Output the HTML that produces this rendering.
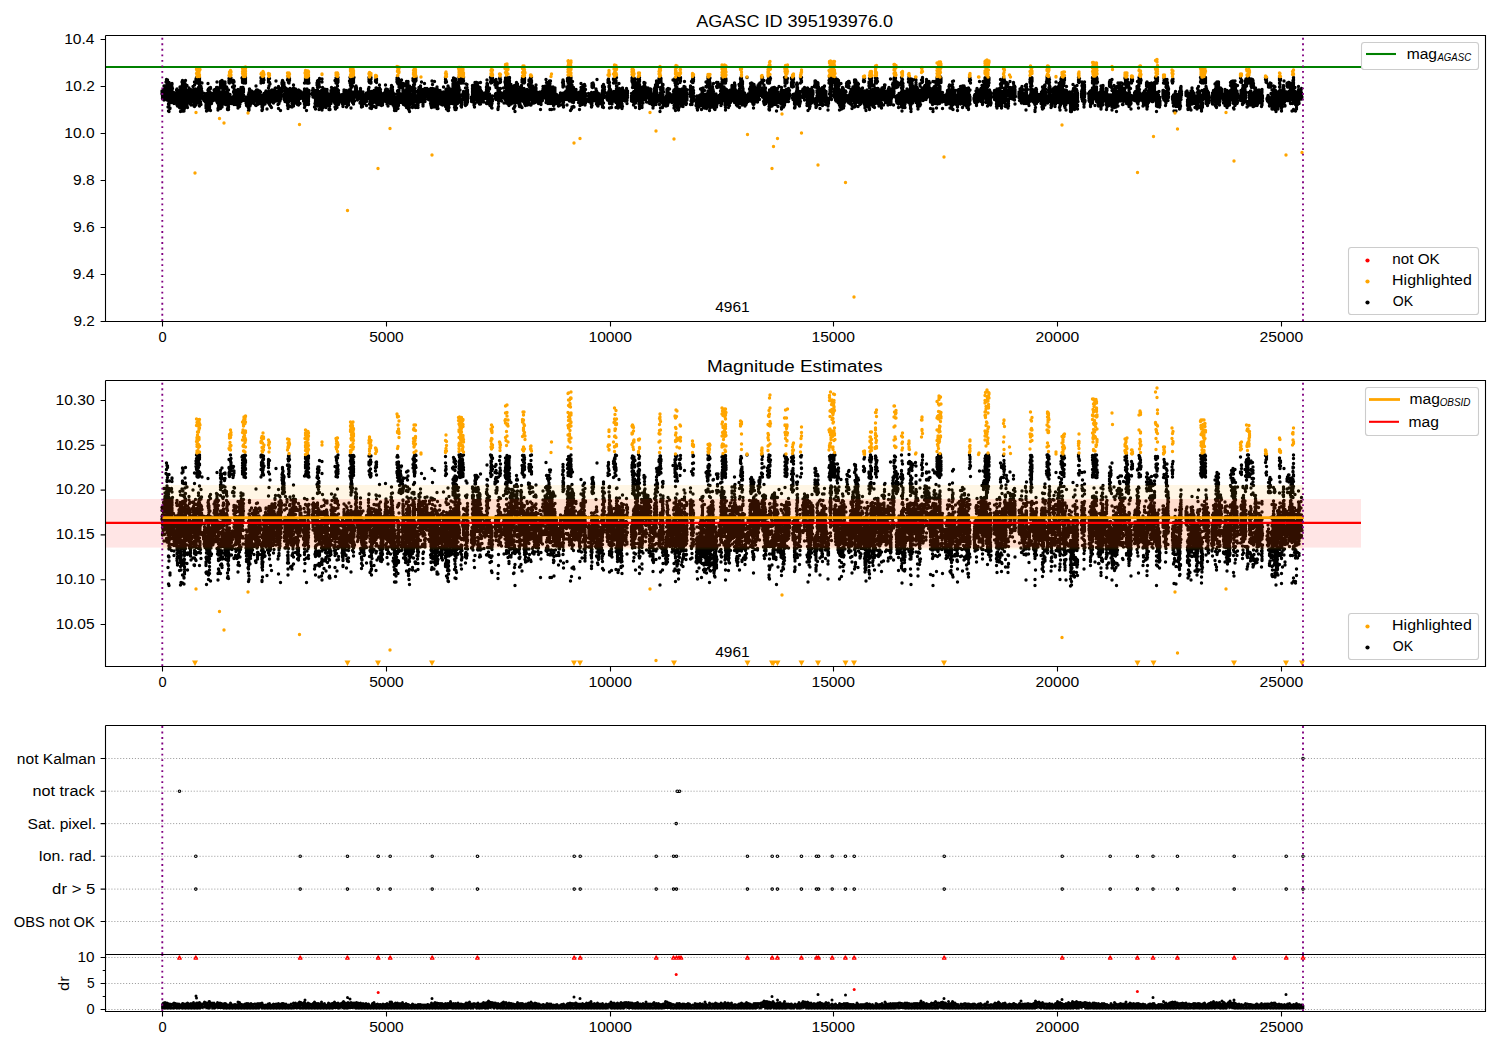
<!DOCTYPE html>
<html><head><meta charset="utf-8"><style>
html,body{margin:0;padding:0;background:#fff;}
svg{display:block;}
text{font-family:"Liberation Sans",sans-serif;fill:#000;}
</style></head><body>
<svg width="1500" height="1050" viewBox="0 0 1500 1050">
<rect width="1500" height="1050" fill="#fff"/>
<defs>
<clipPath id="c1"><rect x="105.5" y="35.5" width="1380.0" height="286.0"/></clipPath>
<clipPath id="c2"><rect x="105.5" y="380.5" width="1380.0" height="286.0"/></clipPath>
<clipPath id="c4"><rect x="105.5" y="954.5" width="1380.0" height="57.0"/></clipPath>
</defs>
<path d="M162 91h0m0 1h0m0 1.5h0m0 .5h0m.5 1.5h0m0 1h0m0 1.5h0m0 .5h0m.5-4.5h0m.5-4.5h0m0 2.5h0m.5-6h0m0 5h0m0 9h0m.5-14h0m0 3h0m0 9h0m.5-10h0m0 6h0m0 1.5h0m1-13.5h0m.5-2.5h0m0 1.5h0m0 9.5h0m0 1.5h0m0 4h0m0 3h0m.5-15h0m0 .5h0m0 1h0m0 1.5h0m0 1h0m0 5.5h0m0 4h0m0 2.5h0m.5-20h0m0 .5h0m0 10h0m.5 16.5h0m.5-11.5h0m0 8.5h0m0 7h0m.5-28.5h0m0 3.5h0m0 2.5h0m0 2h0m0 2h0m0 5h0m0 1h0m0 2.5h0m0 1h0m0 2h0m0 1h0m0 6.5h0m.5-27.5h0m0 2.5h0m0 14h0m.5-5h0m0 12.5h0m0 .5h0m.5-14.5h0m.5-5h0m.5-3h0m0 5.5h0m0 6h0m0 1.5h0m0 3.5h0m.5-19h0m0 1h0m0 2.5h0m0 3h0m0 .5h0m0 3h0m0 7.5h0m.5-12.5h0m0 7h0m1-3h0m0 6h0m.5-1h0m0 2.5h0m0 2.5h0m0 1h0m.5-9.5h0m0 1h0m.5 2.5h0m.5-4.5h0m0 7.5h0m1-10.5h0m.5-1h0m0 1.5h0m0 5.5h0m0 2.5h0m0 3.5h0m0 1h0m0 1.5h0m0 .5h0m.5-10.5h0m0 7h0m0 3h0m0 1.5h0m.5-13h0m0 4h0m0 3h0m1-8.5h0m0 2h0m.5-3h0m0 8.5h0m0 4h0m0 4.5h0m.5-20.5h0m0 3.5h0m0 .5h0m0 4.5h0m0 10h0m.5-17.5h0m0 5h0m0 3.5h0m0 4.5h0m0 10.5h0m.5-11h0m0 3h0m0 4h0m0 3h0m.5-8.5h0m0 3h0m.5-23h0m0 4h0m0 6.5h0m0 2h0m0 2.5h0m0 1.5h0m.5-18h0m0 3.5h0m0 .5h0m0 3.5h0m0 1.5h0m0 .5h0m0 19h0m0 2h0m.5-29.5h0m0 5h0m.5-1.5h0m0 13h0m0 4h0m0 4.5h0m.5-14.5h0m0 1h0m0 2.5h0m0 4.5h0m0 1h0m0 2.5h0m0 1h0m0 5h0m0 1.5h0m.5-22.5h0m0 15h0m0 1h0m0 2h0m0 1h0m0 1h0m.5-25h0m0 4h0m0 2.5h0m0 5.5h0m0 2.5h0m.5-17.5h0m0 4.5h0m0 2.5h0m0 1.5h0m0 4.5h0m0 6h0m0 2.5h0m.5-10.5h0m1-6h0m0 9.5h0m0 1.5h0m0 4.5h0m0 4.5h0m.5-15h0m0 1.5h0m0 6.5h0m0 1h0m0 3.5h0m0 .5h0m0 4h0m1.5-19.5h0m0 1h0m0 4.5h0m0 4.5h0m.5-2.5h0m0 4h0m0 2h0m.5-10h0m0 9.5h0m.5-11.5h0m0 3.5h0m0 9h0m0 1h0m0 1h0m.5 1h0m.5-10h0m0 2h0m0 2h0m1-7.5h0m.5-5h0m0 3h0m0 5h0m0 6h0m0 1h0m0 3h0m.5-15h0m0 3.5h0m0 2.5h0m0 2h0m.5 8.5h0m.5-24h0m0 3h0m0 7h0m0 2h0m0 4h0m0 2h0m0 2.5h0m0 4h0m.5-3h0m.5-14.5h0m0 6.5h0m.5-16.5h0m0 .5h0m0 1h0m0 9.5h0m0 4.5h0m0 4.5h0m0 1.5h0m0 1h0m0 2h0m0 1.5h0m.5-27.5h0m0 13h0m0 2h0m0 4.5h0m.5-19.5h0m0 4.5h0m0 1h0m.5 0h0m.5-5.5h0m0 17.5h0m.5-15h0m0 3h0m0 4.5h0m0 .5h0m0 2.5h0m0 3h0m0 4.5h0m0 2h0m0 2h0m0 1h0m.5-26h0m0 12h0m0 2h0m0 1h0m.5-14.5h0m0 1h0m0 1h0m0 .5h0m0 2.5h0m0 3h0m0 17.5h0m0 3h0m.5-24h0m0 6.5h0m0 5h0m0 3h0m0 3.5h0m0 .5h0m.5 1.5h0m0 1h0m.5-16.5h0m0 18h0m.5-16h0m0 2h0m0 2h0m0 1.5h0m0 1h0m0 .5h0m0 2h0m0 .5h0m.5-15h0m0 8.5h0m0 1.5h0m1.5 6.5h0m.5-2h0m0 3h0m.5-7h0m0 2h0m0 .5h0m.5 2.5h0m0 3h0m1-7.5h0m0 .5h0m0 5.5h0m0 4h0m0 1.5h0m0 1h0m0 1.5h0m.5-10.5h0m0 11h0m0 2.5h0m.5-17.5h0m0 6h0m0 2.5h0m1-18.5h0m0 6.5h0m0 .5h0m0 5.5h0m0 5h0m0 4h0m0 3h0m.5-19h0m0 8.5h0m0 2h0m0 4h0m0 6.5h0m.5-19.5h0m0 2h0m0 2h0m0 1h0m.5-7.5h0m0 17.5h0m0 1h0m0 1h0m0 1h0m.5-16.5h0m.5-4.5h0m0 1h0m0 10.5h0m0 3h0m0 8.5h0m.5-14h0m0 4h0m0 3h0m.5-10h0m0 10h0m.5-8.5h0m.5 3.5h0m0 2.5h0m.5-5h0m1-6h0m0 2.5h0m0 2h0m.5-3h0m0 8.5h0m.5-10.5h0m0 4.5h0m0 2.5h0m0 1h0m0 2.5h0m1.5-12.5h0m0 5h0m0 3h0m0 4.5h0m.5-18h0m0 8.5h0m0 6h0m0 2h0m0 3.5h0m.5-14.5h0m0 7.5h0m0 8h0m.5-10h0m0 15.5h0m0 1.5h0m.5-21h0m0 1.5h0m0 5h0m0 3h0m0 3h0m0 3.5h0m0 2h0m.5-10.5h0m0 11.5h0m1-8.5h0m0 4h0m.5-22h0m0 1h0m0 1h0m0 1.5h0m0 .5h0m0 1h0m0 1.5h0m0 4h0m0 2h0m0 2h0m0 2h0m0 8h0m0 2.5h0m.5-7.5h0m.5-3h0m.5-17.5h0m0 25.5h0m0 1h0m.5-23.5h0m0 5h0m0 3.5h0m0 8h0m0 1h0m0 2h0m0 1.5h0m.5-17.5h0m0 3.5h0m0 2.5h0m0 2h0m.5-9.5h0m0 3h0m0 1.5h0m0 .5h0m0 1h0m0 .5h0m0 4h0m0 1h0m.5-15h0m0 16h0m.5 1h0m0 1.5h0m.5-18.5h0m0 1.5h0m0 2h0m0 1h0m0 7.5h0m0 8h0m0 1.5h0m.5 1h0m.5-2h0m0 2h0m.5-17.5h0m0 1h0m0 1h0m0 2.5h0m0 1h0m0 3.5h0m0 1h0m0 1.5h0m0 3h0m.5-13.5h0m0 2h0m0 9.5h0m.5-7.5h0m0 16.5h0m0 1h0m.5-15h0m0 2.5h0m0 9h0m.5-16h0m0 4h0m0 7.5h0m0 2h0m0 1.5h0m0 1.5h0m0 1h0m0 2h0m.5-31h0m0 2h0m0 .5h0m0 1h0m0 .5h0m0 17h0m0 4.5h0m.5-21h0m0 12.5h0m0 1h0m0 5.5h0m.5-7.5h0m0 6.5h0m.5-24h0m0 5h0m.5-4h0m0 1.5h0m0 1.5h0m0 17.5h0m.5 3h0m0 2h0m1-16.5h0m0 10h0m0 2h0m0 2h0m0 1h0m.5-21.5h0m0 2.5h0m.5-2.5h0m0 1h0m0 10.5h0m.5-10.5h0m0 .5h0m0 4h0m0 1h0m0 1h0m0 2.5h0m0 2.5h0m0 2.5h0m0 3h0m0 6h0m.5-18.5h0m0 8h0m0 3.5h0m0 3.5h0m1-6h0m0 3.5h0m0 5h0m.5-13h0m0 2h0m0 5.5h0m0 2.5h0m0 2h0m0 2h0m.5-10.5h0m0 1.5h0m1-3.5h0m.5-2.5h0m0 7.5h0m0 2.5h0m0 2.5h0m0 4h0m0 2h0m.5-13.5h0m0 3.5h0m0 5.5h0m1-13.5h0m0 3h0m0 8h0m0 5.5h0m.5-15h0m0 4h0m0 8.5h0m.5-6.5h0m0 1h0m0 .5h0m.5-11.5h0m0 .5h0m0 1.5h0m0 2.5h0m0 2h0m0 7.5h0m1-23.5h0m0 18h0m.5-18.5h0m0 2h0m0 1h0m0 1h0m0 1h0m0 5h0m.5 0h0m0 3.5h0m0 2h0m0 1h0m0 3h0m0 2h0m0 1.5h0m.5-23h0m0 11.5h0m0 1h0m0 2h0m0 3h0m.5-17.5h0m0 5.5h0m1-5.5h0m0 1.5h0m0 2h0m.5-3.5h0m0 1.5h0m0 2h0m0 1h0m0 1h0m0 17.5h0m.5-3.5h0m0 1.5h0m0 1h0m0 2h0m0 1.5h0m.5-2h0m0 3.5h0m0 1h0m.5-8h0m1 9.5h0m.5-12.5h0m0 5h0m0 2.5h0m0 3h0m0 3h0m0 2.5h0m.5-18h0m0 3.5h0m0 7.5h0m0 5.5h0m0 1h0m.5-21h0m0 1h0m.5 2h0m0 1.5h0m0 4h0m0 3.5h0m0 5h0m.5-1.5h0m1-13.5h0m0 4h0m0 1h0m0 3.5h0m0 1h0m0 2.5h0m.5-10.5h0m0 6.5h0m0 3h0m1.5-8h0m0 3h0m0 2h0m.5-7h0m0 9.5h0m0 2h0m.5-6h0m1-6h0m0 4h0m0 5h0m0 .5h0m0 4h0m.5-19h0m0 7h0m0 6h0m0 2h0m0 4.5h0m.5-15.5h0m0 8h0m.5 1.5h0m0 1h0m.5-10.5h0m0 5h0m0 1.5h0m0 5h0m0 1.5h0m0 .5h0m0 1h0m.5-12h0m0 10.5h0m1-5h0m.5-7h0m0 4.5h0m0 3.5h0m0 4.5h0m.5-10h0m0 1h0m0 6h0m.5-8.5h0m.5-14.5h0m0 .5h0m0 3h0m0 2h0m.5-5.5h0m0 2h0m0 17.5h0m0 5.5h0m.5-20h0m0 13h0m0 2.5h0m0 6.5h0m0 1h0m0 .5h0m0 1h0m0 3h0m0 .5h0m.5-33h0m0 4h0m0 17.5h0m0 1h0m0 2.5h0m0 4h0m0 1h0m0 2h0m.5-4h0m.5-28h0m0 1h0m0 4h0m0 16h0m.5-18.5h0m0 13.5h0m0 .5h0m0 7h0m0 2h0m.5-6.5h0m0 .5h0m.5 2.5h0m0 4.5h0m.5-11.5h0m0 3h0m.5-4.5h0m0 .5h0m0 10h0m.5-8.5h0m0 1.5h0m.5 3h0m0 1h0m0 10.5h0m.5-7h0m.5-8.5h0m0 3h0m0 3.5h0m.5-21.5h0m0 1h0m0 1h0m0 1.5h0m0 6h0m0 15h0m.5-17h0m0 5h0m0 1h0m0 4h0m0 1.5h0m.5-19h0m0 4h0m0 8.5h0m0 10.5h0m0 2h0m0 1h0m.5-20.5h0m.5 7h0m0 3h0m0 5.5h0m0 2.5h0m0 4h0m.5-9h0m0 2h0m0 1.5h0m.5 7h0m.5-17.5h0m0 2h0m0 3h0m1 2h0m0 2h0m0 2h0m.5-10.5h0m0 2h0m0 1h0m0 3.5h0m0 6h0m.5-3h0m0 2h0m1-13.5h0m0 .5h0m0 1h0m0 5h0m.5-7h0m0 3h0m0 2h0m0 5.5h0m.5-17.5h0m0 15.5h0m0 3h0m0 1.5h0m.5-7h0m0 4h0m.5-2h0m1-3.5h0m0 12h0m.5-18h0m0 1.5h0m0 2.5h0m0 10h0m0 8h0m.5-19h0m0 3h0m0 2.5h0m0 2h0m0 2h0m0 2.5h0m0 1h0m0 1h0m.5-15.5h0m0 8h0m.5 5h0m.5-12h0m0 1.5h0m0 20h0m.5-16.5h0m0 4h0m0 1h0m.5-9h0m0 .5h0m0 1.5h0m0 2.5h0m0 2h0m.5-14h0m0 .5h0m0 1h0m.5-3.5h0m0 .5h0m0 4h0m0 1h0m0 1.5h0m.5-6h0m.5 6h0m.5-4.5h0m0 1.5h0m0 1h0m0 2h0m0 8h0m.5-8.5h0m0 3.5h0m0 1h0m0 2.5h0m0 3.5h0m0 1h0m0 .5h0m0 1h0m.5-6.5h0m0 8h0m.5-13.5h0m0 8.5h0m.5-2.5h0m0 7.5h0m.5-10h0m0 7.5h0m.5-10h0m0 .5h0m0 8.5h0m.5-18h0m0 15.5h0m0 4.5h0m0 3.5h0m0 2h0m.5-27h0m0 19.5h0m0 5.5h0m0 .5h0m0 3h0m0 1.5h0m.5-31h0m0 5h0m0 10.5h0m0 9h0m0 3.5h0m.5-28h0m0 4.5h0m0 1h0m.5-4.5h0m0 1.5h0m0 .5h0m0 10h0m0 8h0m.5-10h0m0 6.5h0m0 1.5h0m.5-3.5h0m0 4.5h0m0 3h0m0 6h0m.5-17.5h0m0 10.5h0m.5 1.5h0m.5-10h0m0 5h0m0 7.5h0m0 3h0m0 .5h0m.5-13h0m0 3.5h0m.5-7.5h0m0 12h0m.5-17h0m0 3h0m0 3.5h0m0 2.5h0m0 2h0m0 3h0m0 2h0m0 3h0m0 2h0m2-17h0m0 .5h0m0 3.5h0m0 4.5h0m0 5.5h0m.5-12h0m0 3.5h0m0 1h0m0 1.5h0m0 3h0m1 2h0m.5 2.5h0m.5-12.5h0m0 2.5h0m0 4h0m0 5h0m.5-13.5h0m0 6.5h0m0 .5h0m0 3h0m0 1.5h0m0 3.5h0m1.5-14h0m0 2h0m0 10.5h0m.5-12h0m0 3h0m0 .5h0m0 2h0m0 1.5h0m.5-6h0m2 1h0m0 2h0m0 .5h0m.5 1.5h0m0 1.5h0m0 .5h0m0 1.5h0m.5-9.5h0m0 2.5h0m.5-11h0m0 6h0m0 9h0m0 5h0m0 .5h0m0 1h0m0 3h0m.5-15h0m0 8.5h0m0 4.5h0m.5-27.5h0m0 1h0m0 1h0m0 .5h0m0 10h0m0 5.5h0m.5-18.5h0m0 5h0m.5-2.5h0m0 13.5h0m0 2.5h0m0 3h0m0 1.5h0m0 4h0m0 6h0m.5-33h0m0 5.5h0m0 6h0m0 13.5h0m.5-25h0m.5 5.5h0m0 8.5h0m0 3h0m.5-17h0m0 .5h0m0 1.5h0m0 1h0m0 .5h0m0 1h0m0 15.5h0m0 1h0m0 .5h0m0 2h0m0 .5h0m0 2h0m0 1h0m.5-21.5h0m0 7.5h0m0 1h0m0 .5h0m0 1h0m0 .5h0m0 1.5h0m0 1.5h0m3-2.5h0m.5-3.5h0m0 2.5h0m0 2h0m.5-6.5h0m0 3.5h0m0 1.5h0m0 2.5h0m0 1h0m.5-7h0m0 5h0m1 12h0m.5-16.5h0m0 6.5h0m0 1h0m0 5.5h0m0 3h0m.5-14h0m0 1.5h0m0 5h0m0 1h0m0 1h0m0 .5h0m0 2.5h0m0 5h0m.5-17h0m0 3h0m0 2.5h0m0 5.5h0m1-20h0m0 2h0m.5-4h0m0 1h0m0 5.5h0m0 2.5h0m0 4h0m0 7h0m0 2.5h0m0 2.5h0m.5-25.5h0m0 10.5h0m0 5.5h0m0 2.5h0m1-18.5h0m0 1h0m0 2.5h0m0 .5h0m0 1h0m0 6h0m0 6h0m0 6.5h0m0 5.5h0m.5-31h0m0 8.5h0m0 6h0m0 3h0m0 3h0m0 1h0m0 2.5h0m0 1h0m0 3h0m.5-12h0m0 11.5h0m1.5-15.5h0m0 2h0m0 5.5h0m0 3.5h0m0 4h0m0 3.5h0m.5-30h0m0 3h0m0 11h0m0 2h0m0 1.5h0m0 3h0m0 2h0m0 1h0m0 2h0m0 1h0m0 4.5h0m.5-22.5h0m0 20.5h0m1-12h0m0 6h0m.5-13h0m0 1.5h0m0 1.5h0m0 2h0m0 4.5h0m0 6.5h0m0 2h0m.5-6.5h0m1-11h0m0 6h0m0 1.5h0m0 3.5h0m0 2.5h0m0 2h0m.5-12.5h0m0 9h0m0 6h0m.5-13.5h0m.5-4.5h0m0 .5h0m0 2h0m0 6.5h0m.5-5h0m0 2.5h0m0 4h0m0 3h0m0 .5h0m0 2h0m1.5-8.5h0m0 3.5h0m0 9h0m.5-15h0m0 7h0m0 1h0m0 2.5h0m0 1.5h0m.5-8h0m0 11h0m.5-10h0m.5-9h0m0 1.5h0m0 1.5h0m0 9h0m0 1h0m.5-16h0m0 8h0m0 .5h0m0 1.5h0m.5-8.5h0m0 12h0m1-9.5h0m0 2h0m0 2.5h0m.5 3h0m.5-10.5h0m0 3h0m.5 10h0m0 1h0m.5-22h0m0 7.5h0m0 1.5h0m0 3.5h0m0 2h0m0 2h0m0 6.5h0m0 3.5h0m.5-7h0m0 1.5h0m0 7.5h0m.5-31h0m0 4h0m0 1h0m0 15.5h0m.5-20h0m0 4.5h0m0 6h0m0 2.5h0m0 2.5h0m0 9h0m.5-8h0m0 2h0m0 8h0m0 2.5h0m.5-24.5h0m0 3h0m0 3.5h0m.5-12h0m0 2.5h0m0 1h0m0 1h0m0 20h0m.5-11.5h0m0 2.5h0m0 2h0m0 4h0m0 1h0m0 1h0m0 3h0m0 .5h0m.5-7.5h0m1 4.5h0m.5-6.5h0m0 1h0m0 3h0m1.5 4h0m.5-8.5h0m0 3h0m0 2.5h0m0 1h0m0 3h0m.5-2.5h0m0 3.5h0m0 1h0m0 .5h0m1-16.5h0m0 1.5h0m0 1h0m0 3h0m0 8h0m.5-5h0m0 3h0m1-4.5h0m.5-6.5h0m0 3.5h0m0 9.5h0m.5-11h0m0 3h0m0 2h0m0 .5h0m0 2h0m0 7h0m.5-16h0m0 10h0m.5 0h0m0 4h0m.5-13h0m0 3.5h0m.5-2.5h0m0 9.5h0m0 2h0m0 .5h0m.5-15h0m0 5.5h0m0 1.5h0m0 2h0m0 2.5h0m.5-20.5h0m.5-3.5h0m0 5.5h0m.5-4h0m0 6.5h0m0 8.5h0m0 2h0m0 4h0m.5-22.5h0m0 5.5h0m0 4h0m0 1h0m0 3h0m0 1h0m0 6h0m0 10h0m.5-15h0m.5-15.5h0m0 3h0m0 4.5h0m0 2h0m0 13h0m.5-17.5h0m0 3.5h0m0 11.5h0m0 3.5h0m0 1.5h0m.5-25h0m0 17.5h0m.5-16h0m0 .5h0m0 1h0m0 .5h0m0 1h0m0 .5h0m0 10h0m0 10h0m0 1.5h0m.5-26.5h0m0 14.5h0m0 7h0m.5-4h0m0 1.5h0m0 1h0m0 3.5h0m1-14h0m0 1.5h0m0 1.5h0m0 4.5h0m.5-8.5h0m0 7h0m.5-5.5h0m0 1h0m0 .5h0m0 1h0m0 4h0m1 1.5h0m0 1h0m0 2h0m0 1.5h0m.5-8h0m.5 2.5h0m0 2.5h0m0 2h0m1-5.5h0m.5-2.5h0m0 5.5h0m0 6.5h0m.5-14.5h0m0 1.5h0m0 1h0m0 1h0m0 10h0m.5-7h0m0 3.5h0m.5-.5h0m0 2h0m0 4.5h0m0 1.5h0m0 1h0m.5-13h0m0 2.5h0m0 5.5h0m0 3h0m.5 1.5h0m.5-14.5h0m.5 2.5h0m0 5.5h0m.5-4.5h0m0 1.5h0m0 1.5h0m0 3h0m0 2h0m.5-3h0m0 3h0m1.5-9.5h0m0 5h0m0 2.5h0m.5-8.5h0m0 3.5h0m0 1.5h0m0 3.5h0m0 4h0m.5-10.5h0m0 3.5h0m0 .5h0m1.5-10h0m0 .5h0m0 1h0m0 1h0m0 5h0m.5-19h0m0 1.5h0m0 1h0m0 1.5h0m0 6h0m0 3.5h0m0 3h0m.5-11.5h0m0 21.5h0m.5-26.5h0m0 16h0m0 2.5h0m0 2.5h0m0 .5h0m0 1h0m0 1.5h0m0 1h0m0 5.5h0m.5-27h0m0 2h0m0 14h0m.5-19.5h0m0 1.5h0m0 3h0m0 1h0m0 13h0m0 9.5h0m.5-14h0m0 7.5h0m0 2h0m0 5.5h0m0 1h0m0 1h0m.5-15.5h0m0 1.5h0m0 10h0m.5-1.5h0m1-6.5h0m0 1h0m.5-7h0m0 2.5h0m0 7h0m0 2h0m0 4.5h0m.5-14.5h0m0 3.5h0m1-15h0m0 1h0m0 17h0m.5-19.5h0m0 9h0m0 2.5h0m0 2.5h0m0 8h0m0 2h0m0 4.5h0m.5-28.5h0m0 .5h0m0 1h0m0 2h0m0 5.5h0m0 1h0m0 1.5h0m0 4h0m0 2h0m0 1h0m0 3h0m0 2h0m.5 2.5h0m1-12.5h0m.5 3h0m0 3.5h0m0 5.5h0m.5-14.5h0m0 4.5h0m0 7h0m0 2.5h0m.5-19h0m0 3h0m0 9.5h0m.5 4.5h0m.5-12.5h0m0 2.5h0m0 1h0m0 3h0m0 3h0m0 6h0m.5-4.5h0m0 3.5h0m.5-7h0m0 8.5h0m.5-10h0m0 4.5h0m.5-6h0m0 9.5h0m0 1.5h0m.5-4.5h0m0 1.5h0m.5-8.5h0m0 1.5h0m0 3h0m.5-3h0m0 3.5h0m1-6h0m.5-7.5h0m0 5h0m0 1h0m0 1.5h0m0 4h0m0 4.5h0m.5-12h0m0 6h0m0 4.5h0m0 2h0m.5-1h0m.5-4.5h0m0 8h0m.5-14.5h0m0 1.5h0m0 3h0m0 4h0m0 4h0m.5 4h0m.5-8.5h0m0 5h0m.5-10h0m0 1.5h0m0 1h0m0 4.5h0m0 .5h0m1.5-9h0m0 1.5h0m0 5h0m0 6h0m.5-15h0m0 .5h0m0 7h0m0 3.5h0m0 2h0m.5-16h0m0 2h0m.5 6.5h0m.5-7h0m0 2.5h0m0 1h0m0 1h0m0 10h0m0 .5h0m.5-9.5h0m0 5.5h0m0 7h0m.5-11.5h0m0 3.5h0m0 7.5h0m.5-10h0m0 1h0m0 4.5h0m0 1.5h0m0 5h0m.5-8h0m0 9h0m0 1h0m0 2h0m.5-13.5h0m0 6h0m.5-2.5h0m.5 2h0m0 2.5h0m0 5.5h0m.5-16.5h0m0 5h0m0 7h0m0 2h0m.5-30h0m0 1.5h0m0 .5h0m0 1.5h0m0 .5h0m.5-4.5h0m0 5.5h0m0 8h0m0 12h0m.5-25h0m0 6h0m0 6.5h0m0 4h0m0 1.5h0m0 1h0m0 3h0m0 1.5h0m0 4h0m0 3h0m.5-29.5h0m0 1h0m0 21h0m0 4h0m0 .5h0m.5-18.5h0m0 3h0m0 2.5h0m0 2.5h0m0 1h0m0 1h0m0 .5h0m0 1h0m0 1.5h0m0 2.5h0m.5-17h0m.5-3.5h0m0 5h0m.5-3.5h0m0 1h0m.5-2h0m0 5h0m.5-7.5h0m0 6.5h0m0 7.5h0m0 5h0m0 2h0m0 .5h0m0 1h0m.5-7h0m0 1h0m0 1h0m.5-13.5h0m0 17.5h0m.5-14.5h0m0 2h0m0 1h0m0 .5h0m0 1h0m0 1h0m.5-9h0m0 2.5h0m0 7h0m0 1h0m0 3h0m0 2h0m0 5.5h0m.5-14h0m0 5h0m0 8h0m1-2.5h0m0 3h0m.5-18.5h0m0 12h0m0 8h0m.5-5.5h0m0 1.5h0m.5-20h0m0 2h0m0 3h0m0 3h0m0 2h0m0 1h0m0 1h0m0 1h0m0 13h0m.5-19h0m0 7.5h0m0 7h0m.5-19h0m0 1.5h0m.5-4h0m0 1.5h0m0 4h0m0 5h0m0 6.5h0m0 6.5h0m0 1h0m.5-17.5h0m0 1h0m0 8.5h0m0 3h0m0 8h0m.5-15h0m0 9.5h0m0 6.5h0m.5-24h0m0 5h0m0 1h0m0 .5h0m0 2.5h0m0 3.5h0m0 6.5h0m0 2.5h0m0 4h0m.5-15.5h0m.5 4.5h0m.5-12h0m0 13.5h0m0 2h0m.5-13.5h0m0 3.5h0m0 4h0m0 3h0m.5-13.5h0m0 15.5h0m.5-9h0m0 2h0m0 11h0m0 .5h0m.5-29h0m0 1.5h0m0 .5h0m0 6.5h0m0 2h0m0 3.5h0m0 5.5h0m0 1h0m.5-14h0m0 16.5h0m0 1h0m0 2h0m.5-22.5h0m0 5h0m0 4.5h0m.5-14h0m0 1h0m0 4.5h0m0 1.5h0m0 5.5h0m0 3h0m.5-11h0m0 6.5h0m0 6.5h0m0 2h0m0 2.5h0m.5-22h0m0 18.5h0m0 3.5h0m0 2h0m0 4h0m0 .5h0m0 1.5h0m.5-30h0m0 1h0m0 .5h0m0 1.5h0m0 11h0m1 12h0m.5-6h0m0 .5h0m0 4.5h0m.5-9h0m0 1.5h0m0 3.5h0m0 2h0m0 3.5h0m0 1.5h0m0 2h0m.5-17.5h0m0 1h0m0 1.5h0m0 4h0m0 6h0m.5-15h0m0 .5h0m0 1h0m0 5h0m1-5.5h0m.5-2.5h0m0 1h0m0 5.5h0m0 1h0m0 2.5h0m0 2h0m0 1.5h0m0 2h0m.5-11.5h0m.5-8h0m1 9.5h0m0 1h0m0 2h0m0 2.5h0m0 4h0m.5-11.5h0m0 4.5h0m0 1h0m0 3.5h0m0 4.5h0m0 1.5h0m0 1.5h0m.5-5.5h0m1-17h0m.5 5h0m0 1h0m0 1.5h0m0 2h0m0 1.5h0m0 2h0m0 2h0m0 2h0m0 1h0m.5-2.5h0m1-2h0m.5-8.5h0m0 2h0m0 1h0m0 3h0m0 1h0m1.5 4h0m.5-6.5h0m0 4h0m.5-7.5h0m0 .5h0m0 2.5h0m0 7.5h0m.5-5h0m.5 8.5h0m.5-15h0m0 4h0m0 5.5h0m0 4h0m0 3.5h0m.5-14h0m0 5h0m0 4.5h0m0 6.5h0m.5-26.5h0m0 17.5h0m0 7h0m.5-21h0m0 4h0m0 2h0m0 3.5h0m0 8.5h0m1-10.5h0m0 8.5h0m.5-4.5h0m0 1.5h0m0 5.5h0m0 1h0m0 3h0m.5-25.5h0m0 7.5h0m0 5h0m0 6h0m.5-9.5h0m.5 3.5h0m0 4.5h0m0 7.5h0m.5-13.5h0m0 5h0m0 4.5h0m0 3h0m1-18h0m0 5h0m0 3.5h0m0 4h0m0 8.5h0m0 .5h0m.5-19h0m0 5h0m0 1.5h0m0 8h0m0 2h0m.5-4.5h0m0 3h0m0 4h0m1-13h0m0 2.5h0m.5-6.5h0m0 1.5h0m0 1.5h0m0 7h0m0 2h0m.5-13h0m0 9.5h0m1-4.5h0m0 1.5h0m.5-4h0m0 5h0m0 4h0m0 2.5h0m.5-12h0m0 8h0m.5 3h0m0 1.5h0m1-18h0m0 5h0m0 2.5h0m0 2h0m0 3h0m0 2.5h0m1.5-4.5h0m.5-20h0m0 2h0m0 2h0m0 1h0m0 11h0m0 1.5h0m0 6h0m0 2h0m0 1h0m0 .5h0m0 1.5h0m0 .5h0m.5-26h0m0 9h0m0 .5h0m0 9.5h0m.5-17.5h0m0 7h0m0 3.5h0m0 16.5h0m.5-19h0m0 2.5h0m0 1.5h0m0 3h0m0 5h0m.5 1h0m0 3h0m0 1.5h0m.5-21.5h0m0 9h0m0 5.5h0m0 10h0m.5-20.5h0m0 9h0m0 6h0m0 .5h0m0 1h0m0 2h0m0 2h0m.5-22.5h0m0 4.5h0m0 5h0m0 6h0m0 4h0m1-12.5h0m0 2.5h0m0 4h0m.5-10.5h0m0 4h0m0 8.5h0m.5-14h0m0 3h0m0 7.5h0m1.5-19.5h0m0 13.5h0m0 1.5h0m0 1h0m0 1.5h0m0 4h0m0 1.5h0m.5-20h0m0 1h0m0 .5h0m0 1h0m0 1h0m0 1h0m0 1.5h0m0 2.5h0m0 2.5h0m0 6h0m.5-22.5h0m0 2.5h0m.5 2.5h0m.5-4.5h0m0 19h0m0 2h0m0 2h0m0 3h0m0 3h0m.5-24.5h0m0 5h0m0 2.5h0m0 2.5h0m0 9.5h0m0 3.5h0m0 3.5h0m.5-30.5h0m0 .5h0m0 1h0m0 5h0m0 3.5h0m0 6.5h0m0 11h0m.5-23.5h0m0 7.5h0m0 9h0m0 5h0m0 5h0m.5-26h0m0 1.5h0m0 2.5h0m0 6h0m0 2h0m0 3h0m0 9.5h0m.5-6h0m.5-10.5h0m0 6.5h0m0 5.5h0m.5-15h0m0 11.5h0m.5-18h0m0 4h0m0 3.5h0m.5-12h0m0 1.5h0m0 1h0m0 1h0m0 2h0m0 4.5h0m0 4.5h0m0 .5h0m0 1h0m0 1h0m0 1.5h0m.5 1h0m0 .5h0m0 1.5h0m0 3h0m.5-20.5h0m0 1.5h0m0 7h0m.5-12.5h0m.5 0h0m0 5.5h0m0 18h0m0 2h0m0 3h0m.5-26.5h0m0 3.5h0m0 12h0m0 4h0m0 5.5h0m0 2.5h0m.5-24.5h0m0 18.5h0m0 1.5h0m0 1.5h0m0 .5h0m.5-27h0m0 18.5h0m.5-16.5h0m0 3h0m0 .5h0m0 10.5h0m.5-16.5h0m0 .5h0m0 3h0m0 .5h0m0 10.5h0m0 5h0m0 1.5h0m.5-5h0m0 6.5h0m1-5h0m.5-6.5h0m0 8.5h0m0 4.5h0m0 1h0m0 1h0m0 1h0m0 1.5h0m.5-21.5h0m0 7.5h0m0 2h0m0 5.5h0m.5-10.5h0m0 16h0m.5-20h0m0 3h0m0 8.5h0m0 7.5h0m.5-13.5h0m0 1h0m0 1h0m0 1h0m0 6.5h0m0 .5h0m0 2h0m.5-7.5h0m0 1.5h0m0 2h0m3.5-1h0m0 1h0m0 .5h0m0 1h0m0 .5h0m0 1.5h0m1-16h0m0 .5h0m0 2h0m0 .5h0m0 1.5h0m0 1.5h0m0 1h0m0 .5h0m0 1.5h0m0 3h0m0 2h0m.5 2.5h0m.5-10.5h0m0 2h0m0 4h0m.5 7.5h0m.5-18.5h0m0 3h0m0 6.5h0m0 4.5h0m0 6.5h0m.5-24.5h0m0 1.5h0m0 1h0m0 14.5h0m0 4h0m1-21h0m0 3.5h0m0 1h0m0 2h0m0 3.5h0m0 2h0m0 3h0m.5-15h0m0 1h0m0 7.5h0m1 10h0m0 1h0m.5-19h0m0 3h0m0 2.5h0m0 1.5h0m0 1h0m0 3h0m0 2h0m0 3h0m0 1h0m0 1.5h0m0 .5h0m.5-4.5h0m1 6.5h0m.5-16.5h0m0 .5h0m0 1h0m0 3.5h0m0 2.5h0m0 1h0m0 3h0m.5-16.5h0m0 7.5h0m0 10.5h0m0 1.5h0m0 2h0m.5-11.5h0m.5-1h0m0 5h0m0 .5h0m0 2h0m0 3h0m.5-9h0m0 7.5h0m.5-6.5h0m1.5 1.5h0m0 .5h0m0 1.5h0m0 1h0m0 3.5h0m.5-9h0m0 4.5h0m.5 1h0m1.5-11.5h0m0 .5h0m0 2h0m0 1h0m0 1.5h0m0 2h0m0 1h0m0 2.5h0m0 1h0m0 5h0m.5-23.5h0m0 3.5h0m0 1.5h0m0 1.5h0m0 10h0m0 7h0m.5-19.5h0m0 1.5h0m0 2.5h0m0 4.5h0m0 9h0m1-10.5h0m0 10.5h0m.5-6h0m0 3h0m0 5.5h0m.5-16h0m0 1h0m0 5h0m0 3h0m0 2.5h0m.5 2h0m0 4h0m.5-28h0m0 4.5h0m.5-3h0m0 .5h0m0 1h0m0 2.5h0m0 13h0m0 8h0m.5-26.5h0m0 20.5h0m0 7h0m0 2.5h0m.5-27.5h0m0 2.5h0m0 15h0m0 .5h0m0 2.5h0m0 1.5h0m0 1.5h0m0 4.5h0m.5-30h0m0 3h0m0 15h0m0 3.5h0m0 1.5h0m2.5-20.5h0m0 1.5h0m0 2.5h0m0 .5h0m.5-1.5h0m0 10.5h0m0 .5h0m0 1h0m0 1h0m0 1.5h0m0 .5h0m.5-19h0m0 .5h0m0 6.5h0m0 1h0m0 6h0m0 1.5h0m0 2h0m0 1.5h0m0 1h0m.5-17.5h0m0 5.5h0m.5-1.5h0m0 .5h0m.5-2.5h0m.5 5.5h0m0 1h0m0 1.5h0m0 16.5h0m0 1h0m.5-26.5h0m0 11h0m0 2h0m0 1.5h0m0 2h0m0 .5h0m0 1h0m0 2.5h0m0 3h0m.5-18h0m.5-10h0m0 12.5h0m.5-13.5h0m0 3h0m0 1h0m0 1h0m.5-3h0m0 2h0m0 .5h0m0 6.5h0m0 4h0m0 3h0m0 3h0m0 2h0m.5-4h0m0 2.5h0m.5-6h0m0 2.5h0m0 2h0m0 3.5h0m2-13h0m0 7h0m.5-1h0m0 2.5h0m0 1.5h0m0 5h0m.5-11.5h0m0 1.5h0m.5-11.5h0m0 1h0m0 9.5h0m0 3.5h0m0 1.5h0m0 2.5h0m.5-21.5h0m0 1.5h0m0 1h0m0 4.5h0m0 2h0m.5 14.5h0m.5-12.5h0m0 1h0m0 4h0m0 4.5h0m0 4.5h0m.5-25.5h0m0 5.5h0m0 2h0m0 2.5h0m0 4h0m0 6h0m.5-17h0m0 15.5h0m.5 4.5h0m0 3.5h0m.5-19.5h0m0 2.5h0m0 5.5h0m0 2h0m.5-15.5h0m0 7h0m0 4h0m0 7h0m0 2h0m0 3.5h0m0 3h0m.5-28h0m0 .5h0m0 2.5h0m0 1.5h0m0 1h0m0 17h0m1-12h0m0 4.5h0m0 2h0m0 .5h0m0 3h0m.5-13.5h0m0 2.5h0m0 4h0m0 9.5h0m0 3.5h0m.5-15h0m0 3.5h0m0 4h0m0 .5h0m0 5h0m.5-3.5h0m.5-12h0m0 7.5h0m0 5.5h0m0 3.5h0m.5-15.5h0m0 3.5h0m.5 17.5h0m.5-12.5h0m0 5.5h0m0 7h0m.5-23h0m0 4h0m0 3h0m0 .5h0m0 1.5h0m0 3h0m0 3.5h0m0 6h0m.5-19h0m0 10.5h0m0 4.5h0m0 3h0m0 5.5h0m.5-15h0m1-14h0m0 1.5h0m0 7h0m0 11h0m0 .5h0m.5-15.5h0m0 2h0m0 3h0m0 2h0m0 6h0m.5-16h0m0 1.5h0m0 1h0m0 5.5h0m0 3h0m0 3h0m.5-9h0m1 1h0m0 10h0m0 1h0m0 3.5h0m.5-12.5h0m0 1h0m0 2h0m0 1.5h0m0 2h0m0 3.5h0m0 1h0m0 3.5h0m.5-7h0m0 4.5h0m0 2.5h0m.5-19.5h0m.5 1h0m0 1.5h0m0 3h0m0 13.5h0m.5-20.5h0m0 1.5h0m0 4h0m0 3.5h0m0 .5h0m0 2h0m.5-17h0m0 2h0m0 8h0m0 8h0m0 3h0m0 6.5h0m.5-30h0m0 1h0m.5 4h0m0 10h0m.5-15h0m0 19h0m.5-19h0m0 5.5h0m0 5.5h0m0 6.5h0m0 4.5h0m0 2.5h0m.5-24h0m0 .5h0m0 1h0m0 1h0m0 .5h0m0 1.5h0m0 8h0m0 13h0m.5 1h0m.5-11.5h0m0 2.5h0m0 2.5h0m0 1h0m0 1.5h0m0 5h0m1-2.5h0m.5-13.5h0m0 2h0m0 1.5h0m0 1h0m0 2h0m.5-6h0m0 7.5h0m0 3h0m0 4.5h0m1-20.5h0m0 .5h0m0 13h0m0 6.5h0m.5-24.5h0m0 1h0m0 5h0m0 5.5h0m0 2h0m0 1.5h0m0 2h0m0 3.5h0m0 1.5h0m.5-20.5h0m0 3.5h0m0 2h0m0 16.5h0m1-26h0m0 12h0m0 4h0m0 5.5h0m0 6h0m.5-26.5h0m0 8.5h0m0 9h0m0 3.5h0m0 5.5h0m.5-28h0m0 3.5h0m0 1h0m0 1h0m0 3h0m0 6h0m0 4h0m0 2.5h0m.5-8h0m.5-4h0m0 16h0m0 1h0m.5-16h0m0 6h0m0 10h0m.5-8.5h0m0 2h0m0 2.5h0m.5-11h0m0 2.5h0m0 5.5h0m0 4h0m0 3h0m.5-12h0m.5 7.5h0m0 4h0m.5-15h0m0 7h0m0 6h0m.5-15.5h0m0 3h0m0 .5h0m0 1.5h0m0 1.5h0m0 1.5h0m.5 4h0m1 2h0m0 2.5h0m.5-9h0m0 1.5h0m0 1.5h0m0 7h0m.5-5.5h0m0 2.5h0m0 2h0m0 2h0m1-9h0m0 3.5h0m.5-6h0m.5 17.5h0m.5-16.5h0m0 3.5h0m0 .5h0m0 2h0m0 1.5h0m0 2.5h0m0 1.5h0m1.5-13.5h0m0 4h0m0 5.5h0m.5-14h0m0 2.5h0m0 1h0m0 3.5h0m.5 2.5h0m0 2h0m.5-6.5h0m1-3.5h0m0 10h0m.5-12h0m0 4.5h0m0 2h0m0 2h0m0 2.5h0m.5-17.5h0m0 9.5h0m0 6h0m0 7.5h0m.5-20h0m0 3h0m0 5h0m0 1h0m0 .5h0m0 8h0m0 1.5h0m.5-19h0m0 4h0m0 11h0m.5-3.5h0m0 2.5h0m.5-9.5h0m0 .5h0m0 12.5h0m0 3.5h0m.5-19.5h0m.5-1.5h0m0 6.5h0m0 1h0m0 5.5h0m.5-14.5h0m0 10h0m0 1h0m0 1h0m0 5h0m0 4h0m.5-18.5h0m0 2.5h0m0 17.5h0m0 6h0m.5-28.5h0m0 6.5h0m.5 2h0m0 3h0m0 1.5h0m0 6h0m0 3h0m.5-15.5h0m0 9h0m0 5.5h0m0 7.5h0m.5-19h0m0 7.5h0m.5-8h0m0 5h0m0 8.5h0m.5-16.5h0m0 14h0m.5-13h0m0 3.5h0m0 1.5h0m0 4.5h0m0 1.5h0m0 3.5h0m0 3h0m.5-7h0m0 5.5h0m0 1h0m0 4h0m.5-12.5h0m0 4.5h0m.5-13h0m0 2h0m0 2h0m0 .5h0m0 1.5h0m.5 8h0m.5-5h0m0 2h0m.5-4.5h0m0 2h0m0 .5h0m0 6.5h0m.5-8.5h0m0 6h0m1.5-2.5h0m0 .5h0m0 4h0m0 3h0m.5-4.5h0m0 2h0m.5-8h0m0 1h0m0 2.5h0m0 3h0m1-9h0m0 1h0m0 2.5h0m0 2h0m0 6.5h0m.5-11h0m0 7h0m1.5-18.5h0m0 16h0m.5-18.5h0m0 .5h0m0 1h0m0 2.5h0m0 1h0m0 .5h0m0 1h0m0 .5h0m0 8.5h0m0 1h0m0 1h0m0 2.5h0m0 3.5h0m.5-22h0m0 2h0m0 1h0m0 8.5h0m0 6h0m0 1.5h0m0 1.5h0m0 .5h0m0 3h0m0 1.5h0m.5-21h0m1 8.5h0m.5-2.5h0m0 4h0m.5-5h0m0 3h0m0 1.5h0m0 .5h0m0 2h0m0 1.5h0m.5-7h0m.5-5h0m0 17.5h0m.5-26.5h0m0 1.5h0m0 1h0m0 8h0m0 2.5h0m0 6.5h0m0 1.5h0m.5-17h0m0 3h0m.5-8h0m0 12h0m0 3h0m0 2h0m0 1.5h0m.5-15h0m0 1.5h0m.5-4.5h0m0 1h0m0 3.5h0m0 5h0m0 5.5h0m0 6h0m0 2h0m.5-15.5h0m0 3h0m0 2h0m0 6h0m.5 14h0m.5-33h0m0 1h0m0 .5h0m0 1h0m0 3h0m.5 10h0m0 1.5h0m0 3h0m0 2h0m0 9.5h0m.5-24h0m0 2h0m0 2h0m0 1.5h0m0 1h0m0 3.5h0m0 7h0m0 5h0m.5-25.5h0m.5 13h0m0 4h0m.5-11h0m0 .5h0m0 1h0m0 4.5h0m0 3.5h0m0 4h0m0 1.5h0m0 4h0m0 .5h0m.5-16h0m0 16h0m1.5-15h0m0 3h0m0 1h0m0 3.5h0m.5-10h0m0 .5h0m0 3.5h0m0 4.5h0m2-3.5h0m0 2.5h0m0 2.5h0m.5-7h0m0 3h0m0 1.5h0m0 5.5h0m.5-7.5h0m.5 6h0m0 1.5h0m0 7h0m.5-17.5h0m0 1h0m0 6h0m0 6.5h0m.5-9.5h0m.5-12.5h0m0 4h0m0 2.5h0m0 8.5h0m.5-4.5h0m0 8.5h0m.5-11h0m0 5h0m0 3.5h0m0 4.5h0m1-19h0m0 1h0m0 2.5h0m0 7h0m.5-8h0m0 5.5h0m0 3.5h0m0 2.5h0m.5-8.5h0m0 7.5h0m0 3.5h0m.5-17.5h0m0 7.5h0m.5-6h0m0 11h0m0 6.5h0m0 1h0m0 .5h0m.5-15.5h0m0 4h0m0 .5h0m0 1h0m0 1h0m0 2.5h0m0 .5h0m0 1h0m0 1h0m0 .5h0m0 1.5h0m3-9.5h0m0 2.5h0m0 .5h0m0 2.5h0m0 1.5h0m0 1h0m.5-6h0m0 1h0m0 1h0m0 4h0m1-2.5h0m1 2h0m0 1.5h0m0 1h0m.5-11h0m0 1h0m0 1h0m0 3.5h0m0 6.5h0m0 2h0m0 .5h0m.5-23.5h0m0 1.5h0m0 1h0m0 1h0m0 9h0m0 1h0m0 3.5h0m0 1.5h0m0 1h0m0 2.5h0m.5-18h0m.5-4.5h0m0 12h0m.5-10.5h0m0 1h0m0 1.5h0m0 10.5h0m.5-5h0m0 6.5h0m0 1.5h0m1.5-8.5h0m0 2.5h0m0 1.5h0m0 5h0m.5-12h0m0 9h0m.5-7h0m0 3h0m0 1.5h0m0 8.5h0m.5-24.5h0m0 12.5h0m0 6h0m0 2.5h0m0 2h0m.5 3h0m.5-8h0m0 8.5h0m.5-12.5h0m0 2.5h0m0 5h0m.5-6h0m0 4.5h0m0 3.5h0m0 1h0m1.5-9h0m0 2.5h0m0 2h0m.5 2.5h0m0 1h0m1-10h0m0 11.5h0m.5-18.5h0m0 1h0m0 3.5h0m0 1.5h0m0 4.5h0m0 2.5h0m0 1h0m0 1h0m0 4.5h0m0 1.5h0m.5-19h0m0 1h0m.5-4.5h0m0 .5h0m0 10h0m0 8h0m0 4.5h0m.5-19h0m0 2.5h0m0 2h0m0 1h0m0 1h0m0 1h0m0 1h0m0 .5h0m.5-10.5h0m0 2.5h0m0 2.5h0m2.5 1h0m0 2.5h0m0 .5h0m0 1h0m0 1h0m0 1h0m.5-4.5h0m0 5.5h0m.5-20h0m0 2h0m0 .5h0m0 12h0m0 3h0m.5-18.5h0m0 .5h0m.5 2h0m0 1h0m0 3.5h0m0 1h0m0 4h0m0 .5h0m0 4.5h0m0 4h0m0 1h0m.5-18.5h0m0 3h0m0 .5h0m0 2h0m0 1h0m0 .5h0m0 3h0m0 10h0m0 1h0m0 4.5h0m.5-13.5h0m0 3h0m0 3.5h0m.5-11.5h0m.5 1.5h0m0 5h0m0 7.5h0m.5-11h0m0 6.5h0m0 8.5h0m.5-14h0m0 5h0m0 2.5h0m0 1.5h0m0 1.5h0m1.5-25h0m0 .5h0m0 3.5h0m0 12h0m0 2h0m.5-16.5h0m0 11h0m0 8h0m0 1.5h0m.5-8h0m0 2.5h0m0 2h0m.5-14.5h0m0 16.5h0m.5-22h0m0 2h0m.5 1h0m0 1h0m0 1h0m0 10.5h0m0 2h0m0 3.5h0m0 3h0m0 1h0m0 5h0m.5-30h0m0 8.5h0m0 2.5h0m0 1h0m0 1h0m.5-4.5h0m0 7h0m0 1h0m0 3h0m.5-7.5h0m0 1h0m0 9h0m0 2.5h0m0 2.5h0m0 1h0m.5-9.5h0m0 2h0m0 10h0m.5-5h0m0 4.5h0m.5-24h0m0 9.5h0m0 3.5h0m0 4.5h0m.5-12.5h0m0 3h0m0 3.5h0m0 4h0m0 6h0m.5-13h0m0 6h0m0 3.5h0m.5 3h0m.5-10.5h0m0 13h0m.5-17h0m0 5.5h0m0 4h0m0 2.5h0m0 1h0m.5-6h0m0 7h0m0 1h0m0 3.5h0m.5-20.5h0m0 5.5h0m0 7h0m0 6h0m.5-14.5h0m0 6h0m0 1.5h0m.5-9h0m0 1.5h0m0 1h0m0 1h0m0 2h0m1.5 5h0m.5-5.5h0m0 1.5h0m0 1.5h0m.5-4h0m.5-6h0m0 2h0m0 .5h0m0 2h0m.5 7h0m0 .5h0m0 3h0m.5-12.5h0m0 .5h0m0 1h0m0 1h0m0 2h0m0 2h0m4-4h0m0 2.5h0m0 .5h0m0 1h0m0 .5h0m0 1h0m0 1h0m0 1h0m.5-23h0m0 2h0m0 .5h0m0 1h0m0 17h0m.5-21h0m0 5h0m0 5h0m0 14h0m.5-17.5h0m0 .5h0m0 1h0m0 1h0m.5-6.5h0m0 12h0m0 3h0m0 10h0m.5-27h0m0 4.5h0m0 5h0m0 4h0m0 5.5h0m0 2.5h0m0 3.5h0m0 1h0m.5-23.5h0m0 6h0m.5-7.5h0m0 3.5h0m0 1.5h0m0 8h0m0 3.5h0m0 4h0m0 2h0m.5-13.5h0m0 2h0m0 3.5h0m0 9.5h0m0 4.5h0m.5-9.5h0m.5-14h0m0 9.5h0m.5-8.5h0m0 1h0m0 10.5h0m.5-14h0m0 4h0m0 3h0m0 2h0m0 9h0m.5-21h0m0 .5h0m0 1.5h0m0 2.5h0m0 11.5h0m.5-18.5h0m.5 5.5h0m0 15.5h0m0 1.5h0m0 3.5h0m0 1h0m.5-26.5h0m0 2h0m0 .5h0m0 1h0m0 .5h0m0 3h0m0 1.5h0m0 1.5h0m0 .5h0m0 4.5h0m0 1h0m0 1.5h0m0 3h0m0 2.5h0m0 1h0m0 5h0m0 2h0m.5-18h0m0 9h0m0 4.5h0m1.5-15h0m0 7.5h0m.5-5.5h0m0 1h0m0 1.5h0m0 1h0m0 1.5h0m0 5.5h0m0 1h0m0 3.5h0m0 1.5h0m.5-20.5h0m0 2h0m0 9.5h0m0 2h0m.5 2.5h0m1-20.5h0m0 .5h0m0 5h0m0 9.5h0m0 1h0m.5-14h0m0 .5h0m0 4.5h0m0 .5h0m0 2h0m0 .5h0m0 1h0m0 2h0m.5-12.5h0m0 3.5h0m.5 13.5h0m.5-8.5h0m0 4h0m0 1.5h0m.5-3h0m0 8h0m.5-14h0m0 1h0m0 8.5h0m0 .5h0m.5-5.5h0m.5-4.5h0m0 2.5h0m0 4.5h0m.5-1.5h0m.5 2.5h0m0 7h0m.5-4.5h0m0 1h0m0 .5h0m0 1h0m0 .5h0m.5-12.5h0m0 2.5h0m0 12h0m.5-14.5h0m0 2h0m0 2.5h0m0 .5h0m0 7.5h0m.5-12h0m0 2.5h0m0 4.5h0m0 2.5h0m0 4.5h0m1.5-2h0m0 3.5h0m.5-11h0m0 1h0m0 1h0m0 2h0m0 2h0m0 3.5h0m0 4.5h0m.5-3h0m0 .5h0m1-17h0m0 2h0m0 1h0m0 1h0m0 6h0m.5-11h0m0 9.5h0m0 4h0m0 1h0m.5-17h0m0 1.5h0m.5 8h0m0 .5h0m0 9.5h0m.5-23.5h0m0 2h0m0 6.5h0m0 1.5h0m0 1h0m0 4.5h0m0 2h0m0 2h0m.5-7.5h0m0 1h0m0 8h0m.5-20.5h0m0 3h0m0 .5h0m0 1h0m0 1h0m1.5-8.5h0m0 .5h0m0 1.5h0m0 2h0m0 15h0m0 1.5h0m0 1h0m0 1h0m.5-5.5h0m0 9h0m.5-27h0m0 34h0m.5-34h0m0 4.5h0m0 5.5h0m0 2h0m0 3h0m0 1h0m0 3h0m0 2.5h0m0 2.5h0m0 6.5h0m.5-29.5h0m0 .5h0m0 2h0m0 1h0m1.5 2.5h0m0 1h0m0 5h0m0 1h0m0 2.5h0m0 1h0m0 3h0m0 2.5h0m0 2.5h0m0 4.5h0m.5-23h0m0 .5h0m0 3h0m0 .5h0m0 1h0m0 .5h0m0 1h0m0 4h0m0 1h0m0 3.5h0m0 .5h0m0 1.5h0m0 2h0m0 2.5h0m.5-14h0m.5 5.5h0m1 4.5h0m.5-1h0m0 3.5h0m.5-5.5h0m0 .5h0m0 3.5h0m0 3h0m.5-10h0m.5-6.5h0m0 1h0m0 1.5h0m0 .5h0m0 1.5h0m0 1h0m0 2.5h0m.5-7h0m0 7.5h0m0 2h0m0 1h0m0 3.5h0m0 1h0m.5-17h0m0 3h0m0 12h0m1-7h0m.5-7.5h0m0 4.5h0m0 1h0m0 2.5h0m0 1h0m0 2h0m.5-6h0m0 2h0m0 5.5h0m2-6.5h0m0 1.5h0m0 1.5h0m0 1h0m0 3.5h0m.5-2h0m.5-20.5h0m.5 11.5h0m0 3h0m0 2h0m0 3h0m0 2.5h0m.5-12h0m0 3h0m0 2h0m0 6h0m0 4.5h0m0 2.5h0m1-29.5h0m0 2.5h0m0 1h0m0 1h0m0 20.5h0m0 3.5h0m.5-29.5h0m0 6.5h0m0 1.5h0m0 3h0m0 9.5h0m0 1.5h0m0 11h0m.5-19h0m0 2h0m0 8.5h0m.5-19.5h0m0 13.5h0m0 2h0m0 7.5h0m.5-28h0m0 2.5h0m0 1h0m0 6.5h0m0 3h0m0 12h0m0 5h0m.5-23.5h0m0 8.5h0m0 7.5h0m.5-5h0m0 10h0m0 1h0m.5-8.5h0m0 5h0m0 5.5h0m0 2h0m.5-18h0m0 1h0m0 1h0m0 7.5h0m0 6h0m.5-29h0m0 1h0m0 10h0m0 6.5h0m0 8h0m.5-21.5h0m0 8h0m0 8.5h0m.5-21.5h0m0 1h0m0 2h0m0 .5h0m.5 17h0m.5-7.5h0m0 2h0m0 2h0m0 .5h0m0 5.5h0m0 2h0m0 3.5h0m.5-17h0m0 3h0m.5 5.5h0m0 1.5h0m0 5.5h0m.5-11h0m0 7h0m0 4h0m0 2h0m.5-11.5h0m.5-8.5h0m0 2.5h0m0 2h0m0 11.5h0m.5-21h0m0 7h0m0 3h0m0 2h0m0 3h0m0 1.5h0m.5-11h0m0 13h0m1 2h0m0 1.5h0m0 1h0m.5-15h0m0 1h0m0 2.5h0m0 2h0m0 4h0m0 4.5h0m.5-13.5h0m0 4.5h0m0 1.5h0m0 .5h0m0 1h0m0 .5h0m0 2h0m3-10.5h0m0 3h0m0 1.5h0m.5-8h0m0 1h0m0 4h0m0 5.5h0m0 8h0m.5-15.5h0m0 4.5h0m0 7.5h0m.5-19.5h0m0 17h0m0 1h0m0 2.5h0m.5-10.5h0m0 4.5h0m0 7h0m0 1.5h0m.5-25h0m0 3h0m.5-5h0m0 5h0m0 5h0m0 2h0m0 5h0m0 4h0m.5-21h0m0 2h0m0 1.5h0m0 9.5h0m0 2h0m0 1h0m0 4h0m0 2.5h0m0 1h0m.5-4.5h0m2 3h0m0 6h0m.5-6h0m0 1h0m0 2h0m0 1h0m0 .5h0m.5-8h0m0 2h0m0 7.5h0m0 2.5h0m.5 2h0m1-9h0m.5-4.5h0m0 8h0m0 2.5h0m.5-11.5h0m0 3.5h0m0 4h0m1-14h0m0 11h0m0 1.5h0m.5-7h0m0 2.5h0m0 8.5h0m.5-7h0m0 11h0m.5-21h0m0 2.5h0m0 2h0m0 1.5h0m0 6.5h0m0 3h0m0 1.5h0m.5-16h0m0 2.5h0m0 1h0m0 4h0m0 2.5h0m0 3h0m.5-14.5h0m.5 19.5h0m.5-10h0m0 1.5h0m0 3h0m0 3.5h0m.5-15h0m0 4h0m0 1h0m0 6h0m0 5.5h0m0 1h0m.5-4h0m1-22h0m0 4.5h0m0 12h0m0 2.5h0m0 2.5h0m0 1.5h0m0 2.5h0m.5-20.5h0m0 7h0m0 2.5h0m0 3h0m0 9h0m.5-22h0m0 .5h0m0 13.5h0m0 3h0m.5-19.5h0m.5-7h0m0 1.5h0m0 1.5h0m0 .5h0m0 3.5h0m0 2h0m0 5h0m0 1h0m0 4h0m0 1.5h0m0 8.5h0m.5-12h0m0 5h0m0 3.5h0m0 4.5h0m.5-24.5h0m0 10.5h0m0 4h0m0 7.5h0m.5-24.5h0m0 1.5h0m0 6.5h0m0 3h0m0 .5h0m0 3.5h0m0 5h0m0 10.5h0m.5-32.5h0m0 4.5h0m0 3h0m0 1.5h0m0 15h0m0 5.5h0m.5-19h0m0 9h0m0 6h0m0 4h0m.5-11.5h0m0 10h0m.5-12h0m0 7.5h0m.5-11h0m0 2h0m0 6.5h0m.5-12h0m0 16.5h0m0 1h0m.5-20.5h0m0 5.5h0m0 1h0m0 2.5h0m0 4.5h0m0 .5h0m0 1h0m0 2.5h0m.5-18h0m0 8h0m0 3h0m0 1h0m0 12h0m.5-1.5h0m.5-5.5h0m0 2.5h0m0 4h0m0 2h0m.5-4h0m0 4.5h0m.5-13h0m.5-2.5h0m0 2h0m0 1.5h0m0 1h0m0 3.5h0m.5-19.5h0m0 4h0m0 11.5h0m0 1h0m0 1h0m0 4h0m0 2h0m0 1h0m.5-24.5h0m0 5h0m0 14h0m0 3h0m.5-19.5h0m.5-2.5h0m0 .5h0m.5 4h0m.5 8.5h0m0 1.5h0m0 1.5h0m.5 2.5h0m0 1.5h0m1-18h0m0 2.5h0m0 4h0m0 3h0m0 1.5h0m0 4h0m.5-11.5h0m0 2h0m0 2h0m0 1h0m0 5h0m0 4h0m0 3.5h0m.5-17h0m0 14.5h0m0 1h0m.5-26h0m0 1h0m0 3h0m0 .5h0m0 2h0m0 1.5h0m0 9.5h0m.5-15h0m0 10h0m0 3h0m0 6.5h0m.5-22.5h0m0 1h0m.5-1h0m0 5h0m0 5h0m0 5h0m0 5h0m.5-10.5h0m0 7h0m0 7h0m.5-23.5h0m0 3h0m0 2.5h0m0 6h0m0 7h0m0 1.5h0m0 1h0m.5-10h0m0 3h0m0 12.5h0m0 1h0m.5-27.5h0m0 4.5h0m0 1h0m0 18.5h0m0 1h0m0 3h0m0 2h0m0 2.5h0m.5-31h0m0 1h0m0 1h0m0 13.5h0m0 8h0m0 2h0m.5-15h0m0 2h0m0 1.5h0m0 6.5h0m.5-5h0m0 2.5h0m1 4h0m.5-9h0m0 7h0m0 4.5h0m0 1.5h0m0 2.5h0m.5-13.5h0m0 2h0m0 8.5h0m.5-14h0m0 15h0m.5-7.5h0m0 3h0m.5-11h0m0 3h0m0 1h0m0 2.5h0m0 2.5h0m0 3.5h0m1.5-17h0m0 1h0m0 1h0m0 1h0m0 4h0m.5-1.5h0m0 4h0m0 1.5h0m0 2h0m0 2h0m.5-8.5h0m0 7h0m1-9h0m.5-7h0m0 4.5h0m0 3h0m0 3.5h0m0 2.5h0m0 5h0m0 1h0m.5-17.5h0m0 1h0m0 2.5h0m0 .5h0m0 4.5h0m0 4.5h0m0 1h0m.5-8.5h0m0 5.5h0m0 5h0m.5 1.5h0m.5 2h0m0 .5h0m.5-14h0m0 1h0m0 4.5h0m0 3.5h0m0 1.5h0m0 1h0m0 1.5h0m.5-9.5h0m0 1h0m0 10.5h0m.5-7.5h0m0 7h0m1-21h0m0 6.5h0m0 2h0m0 6h0m.5-13h0m0 3h0m0 7.5h0m0 4h0m0 1h0m0 2h0m0 4h0m.5-19.5h0m0 3h0m.5-12.5h0m0 1h0m0 3h0m0 12h0m.5-17h0m0 4h0m0 1.5h0m0 16h0m.5-21h0m0 7.5h0m0 5.5h0m0 .5h0m0 6h0m0 5h0m.5-22h0m0 5h0m0 1.5h0m0 6h0m0 7h0m0 5h0m.5-23.5h0m0 .5h0m0 1h0m0 1h0m0 2.5h0m0 9h0m0 6h0m.5-13h0m0 .5h0m0 1h0m0 .5h0m0 4h0m0 3.5h0m.5-5h0m0 11.5h0m1-11.5h0m.5 3.5h0m0 2h0m0 1h0m0 1.5h0m0 1h0m0 4h0m.5-10.5h0m0 1.5h0m0 4h0m0 2.5h0m.5 1h0m.5-1.5h0m.5-25.5h0m.5 18.5h0m0 2h0m0 1.5h0m.5-5.5h0m0 1h0m0 6.5h0m.5-3h0m0 2h0m1-11.5h0m.5 2h0m0 .5h0m0 1h0m0 4h0m0 3h0m.5-16h0m0 3.5h0m0 11h0m0 3h0m.5-16.5h0m0 1h0m0 4h0m0 1.5h0m0 3.5h0m.5-11.5h0m.5 4h0m0 13h0m.5-10h0m0 3h0m0 4.5h0m0 4h0m0 1h0m.5-18.5h0m0 3h0m0 9h0m0 2h0m0 6h0m.5-12.5h0m0 13h0m0 3.5h0m.5-23.5h0m0 4h0m0 9.5h0m0 6h0m.5-17.5h0m0 5.5h0m0 2.5h0m0 6h0m.5 1.5h0m.5-12h0m0 6h0m.5-8h0m0 5h0m0 2.5h0m0 2.5h0m0 2h0m1-9.5h0m.5 2.5h0m0 4.5h0m0 4.5h0m.5-16.5h0m0 4h0m0 4.5h0m0 5.5h0m.5-12.5h0m0 8h0m0 2.5h0m.5-13.5h0m.5 3h0m0 3h0m0 1.5h0m0 1h0m0 1.5h0m0 5.5h0m.5-16.5h0m0 .5h0m0 1h0m0 1h0m0 10h0m1.5-13.5h0m.5-4.5h0m0 1h0m0 1h0m0 1.5h0m0 8.5h0m0 4h0m0 2h0m.5-18h0m0 5h0m0 .5h0m0 5h0m0 2.5h0m0 1h0m0 1h0m0 4.5h0m1 4.5h0m.5-21h0m0 4.5h0m0 3h0m0 5h0m0 1h0m0 4.5h0m0 5h0m.5-13h0m0 6h0m0 3h0m0 5h0m1-16.5h0m0 .5h0m0 3h0m0 7h0m0 3.5h0m.5 1.5h0m.5-9.5h0m0 1h0m.5-2h0m0 4.5h0m0 3h0m.5-20h0m0 1h0m0 1h0m0 11.5h0m0 1h0m0 3.5h0m0 3h0m.5-18.5h0m.5-5h0m0 .5h0m.5-1h0m0 5.5h0m0 14.5h0m0 2.5h0m0 6.5h0m0 2.5h0m0 .5h0m.5-28h0m0 .5h0m0 1h0m0 7h0m0 2h0m0 1h0m0 3h0m0 5.5h0m0 2h0m0 1h0m0 3h0m0 2.5h0m.5-32.5h0m0 2.5h0m0 18h0m0 2h0m0 1.5h0m0 5.5h0m.5-28.5h0m0 17.5h0m1-7.5h0m0 5.5h0m0 3.5h0m0 6h0m.5-15.5h0m0 3h0m0 1.5h0m0 7.5h0m0 6h0m.5-18h0m0 7.5h0m0 .5h0m.5 5.5h0m0 1.5h0m.5-4.5h0m0 2h0m.5-13h0m0 2.5h0m0 14.5h0m.5-17h0m0 4h0m0 1.5h0m0 1h0m0 8h0m.5-14h0m0 1.5h0m0 6h0m.5-2h0m0 4h0m0 2.5h0m.5-6h0m0 10h0m0 .5h0m.5-7h0m0 13.5h0m.5-20.5h0m0 1h0m0 4h0m0 6.5h0m.5-13.5h0m.5 4h0m0 7h0m0 3h0m0 4h0m.5-10h0m0 1h0m0 3.5h0m.5-14.5h0m0 8h0m0 8h0m1.5-3.5h0m.5-7.5h0m0 2.5h0m0 1.5h0m0 5h0m0 1.5h0m0 2h0m.5-16.5h0m0 2.5h0m0 5.5h0m0 1.5h0m0 7h0m0 3.5h0m0 1.5h0m1.5-16.5h0m0 7.5h0m0 1h0m0 5h0m0 1h0m.5-10h0m0 1.5h0m0 4.5h0m0 4h0m.5-16.5h0m0 4h0m0 8.5h0m0 3h0m.5-28.5h0m0 26.5h0m0 1h0m.5-27.5h0m0 1.5h0m0 1h0m0 1h0m0 1h0m0 1h0m0 3h0m0 4.5h0m0 6h0m0 3h0m0 1.5h0m.5-8h0m1-15h0m0 5h0m0 6.5h0m0 5.5h0m0 5h0m0 1.5h0m.5-22h0m0 1.5h0m0 1h0m0 .5h0m0 9.5h0m0 6h0m0 3.5h0m.5-23h0m.5 11.5h0m.5-1.5h0m0 5h0m0 3h0m0 2h0m0 3h0m.5-12h0m0 2h0m0 1h0m0 5.5h0m0 .5h0m.5-8h0m0 3.5h0m0 .5h0m0 1.5h0m0 .5h0m2-18.5h0m0 1h0m0 3.5h0m0 1h0m0 1.5h0m0 1h0m0 .5h0m.5-5h0m.5-4h0m0 9.5h0m0 8.5h0m0 2.5h0m.5-20.5h0m0 3.5h0m0 3h0m0 1h0m0 9.5h0m0 2.5h0m0 2.5h0m.5-21.5h0m0 1h0m0 .5h0m0 3h0m0 4h0m.5 9h0m.5-1.5h0m0 7.5h0m0 1h0m0 1h0m0 .5h0m0 4h0m.5-13h0m0 3.5h0m0 6.5h0m0 1.5h0m0 1h0m.5-10.5h0m1-12.5h0m0 7h0m0 .5h0m0 8.5h0m.5-17.5h0m0 3h0m0 1.5h0m0 .5h0m0 1h0m0 1h0m0 1h0m0 2h0m0 1.5h0m0 2h0m0 6.5h0m.5-18.5h0m0 3h0m0 1h0m0 1h0m0 2.5h0m0 5h0m0 2h0m0 2h0m0 3h0m1.5-9h0m0 6h0m.5-7h0m0 12h0m.5-14.5h0m0 1.5h0m0 4.5h0m0 1h0m0 1h0m0 3h0m0 1h0m.5-26h0m0 5.5h0m0 13h0m0 5.5h0m.5-22h0m.5-2h0m0 3.5h0m0 1h0m1 8.5h0m.5-1.5h0m0 2.5h0m0 1h0m0 2.5h0m0 2h0m0 .5h0m.5-4h0m.5 2.5h0m.5-8.5h0m0 1h0m0 11.5h0m.5-8h0m0 5h0m.5-6.5h0m0 4h0m1.5-3.5h0m0 2.5h0m0 1.5h0m0 2.5h0m0 6h0m0 2h0m.5-17.5h0m0 1h0m0 4.5h0m0 3h0m0 2.5h0m0 1h0m0 1.5h0m.5-9h0m0 18h0m.5-6h0m.5-13.5h0m0 5h0m0 1.5h0m0 8.5h0m.5-16.5h0m0 4h0m0 7h0m0 2.5h0m0 5.5h0m.5-7h0m0 5h0m.5-17h0m0 6h0m0 2.5h0m0 6h0m.5-12h0m0 8h0m.5 3h0m.5-15.5h0m0 6h0m0 8.5h0m.5-11.5h0m0 6h0m0 1.5h0m.5-7h0m0 1h0m0 .5h0m0 1h0m0 1h0m0 5h0m1.5-13.5h0m0 13h0m0 2h0m0 1.5h0m.5-21.5h0m0 1h0m0 2h0m0 .5h0m0 2.5h0m0 13.5h0m0 3h0m.5-22.5h0m0 1.5h0m0 2.5h0m.5 2h0m0 11.5h0m0 6.5h0m0 1h0m0 1h0m0 .5h0m.5-5.5h0m0 .5h0m0 4h0m.5-19h0m0 3h0m0 .5h0m0 1.5h0m0 3.5h0m.5-13.5h0m0 11.5h0m0 1h0m0 1.5h0m0 8.5h0m.5-22h0m0 1h0m0 1h0m0 1h0m0 4h0m0 9h0m0 1h0m.5-13h0m0 6h0m0 8h0m1-11.5h0m0 3.5h0m.5 2.5h0m0 2h0m0 4.5h0m0 2.5h0m0 4h0m.5-19.5h0m0 3.5h0m0 7.5h0m.5-5.5h0m.5-4h0m0 13.5h0m.5-8.5h0m0 3.5h0m0 2.5h0m0 1h0m.5-15h0m0 4.5h0m0 2h0m0 3h0m0 6.5h0m0 .5h0m0 1.5h0m.5-16.5h0m.5 11.5h0m.5-13h0m0 4.5h0m0 5.5h0m.5-11.5h0m0 4.5h0m0 4.5h0m1 4h0m0 1.5h0m0 1.5h0m0 2.5h0m.5-13h0m0 1.5h0m0 2h0m0 1h0m0 6h0m.5-3h0m1-1h0m.5 5.5h0m0 1.5h0m0 1h0m0 4h0m.5-10h0m0 1h0m0 1h0m0 1h0m0 .5h0m.5-23h0m0 2.5h0m.5-5.5h0m0 4.5h0m0 12h0m.5-15.5h0m0 9h0m0 2h0m0 1.5h0m0 1h0m.5-14.5h0m0 4h0m0 2.5h0m0 2h0m0 7h0m0 3h0m0 1.5h0m0 1h0m.5-21h0m0 1.5h0m0 10.5h0m0 .5h0m0 1h0m0 .5h0m.5-6h0m0 .5h0m0 1h0m0 .5h0m0 7.5h0m0 4.5h0m1-22h0m0 5h0m.5-2h0m.5-3h0m0 18.5h0m.5-18.5h0m0 2h0m0 3.5h0m0 6h0m0 2.5h0m0 1h0m0 1.5h0m0 3h0m.5-16.5h0m.5-3h0m0 5.5h0m0 2.5h0m.5 1h0m0 9.5h0m0 3h0m0 1h0m.5-12h0m0 1.5h0m0 1h0m0 6.5h0m0 4h0m.5-14h0m0 6h0m0 1.5h0m.5-15h0m0 2h0m0 2.5h0m.5-4.5h0m.5 7h0m0 5.5h0m0 2h0m0 2.5h0m0 1.5h0m0 1h0m0 2h0m0 1.5h0m.5-22h0m0 1h0m0 1.5h0m0 3.5h0m0 2.5h0m0 .5h0m0 6h0m0 7.5h0m.5-17.5h0m.5 12.5h0m0 7h0m0 5h0m.5-18.5h0m0 5h0m0 3h0m0 1.5h0m0 5.5h0m.5-13.5h0m0 1h0m0 9.5h0m.5-20h0m0 6.5h0m.5 5h0m0 5h0m0 5.5h0m0 3.5h0m.5-14.5h0m0 3h0m.5-10h0m0 1.5h0m0 3h0m0 10h0m.5-14h0m0 3.5h0m0 10h0m0 5h0m.5-17h0m0 6h0m0 4h0m0 4.5h0m0 4h0m.5-14.5h0m0 6h0m0 4h0m0 2.5h0m.5-8.5h0m.5 4.5h0m.5-11h0m0 4h0m.5-3h0m0 5h0m.5-13.5h0m0 2h0m0 1h0m0 9.5h0m0 2.5h0m0 2h0m.5-18h0m0 1h0m0 1h0m1.5-3h0m0 4.5h0m0 1.5h0m0 8h0m0 2.5h0m0 3.5h0m0 1h0m.5-21h0m0 5h0m0 10h0m0 3h0m0 3.5h0m.5-20h0m0 16.5h0m.5-6h0m.5-1.5h0m0 5h0m0 7h0m.5-14.5h0m0 .5h0m0 5h0m0 7.5h0m.5-3.5h0m0 2h0m.5 3h0m0 1.5h0m0 3h0m.5-19.5h0m0 1.5h0m0 2.5h0m.5-6h0m0 .5h0m0 3h0m0 4.5h0m0 1h0m0 2h0m0 2.5h0m.5-12h0m0 1h0m1-9.5h0m0 2h0m0 11h0m0 3h0m0 6h0m0 5h0m.5-23h0m0 1.5h0m0 1.5h0m0 5h0m0 7h0m0 2h0m0 1h0m0 1.5h0m0 3h0m.5-26.5h0m0 4h0m0 19h0m0 .5h0m0 2h0m.5-24.5h0m.5 6h0m0 2h0m0 1h0m0 2.5h0m0 2h0m0 2.5h0m.5-12h0m0 14.5h0m.5-16.5h0m.5 2.5h0m0 6h0m0 4h0m0 6h0m0 5h0m.5-22.5h0m0 5h0m0 4h0m0 6h0m0 3.5h0m.5-14.5h0m0 9.5h0m1-7.5h0m0 4.5h0m0 3h0m0 3h0m0 4h0m.5-12h0m.5-1.5h0m0 6h0m0 2h0m0 3h0m0 1.5h0m1-14h0m0 4.5h0m0 1h0m0 5h0m.5-12h0m0 14h0m.5-9.5h0m0 5h0m0 1h0m.5-18h0m0 1h0m.5-3h0m.5-.5h0m0 3h0m0 .5h0m0 9.5h0m0 2.5h0m0 2h0m0 1h0m0 4h0m0 4h0m.5-5.5h0m0 4h0m0 3h0m0 1h0m0 1h0m1-6h0m0 5h0m0 3.5h0m.5-18h0m0 2h0m0 8.5h0m.5-13h0m0 7.5h0m.5-4.5h0m0 3.5h0m0 3.5h0m0 2h0m0 3h0m.5-14h0m.5 5.5h0m.5-14.5h0m0 1h0m0 .5h0m0 2h0m0 .5h0m0 12.5h0m0 4.5h0m0 3.5h0m0 1h0m0 .5h0m.5-29.5h0m0 9h0m0 7h0m0 7h0m0 4h0m0 3h0m0 1h0m1-32h0m0 2.5h0m0 12.5h0m0 4h0m.5-12h0m0 5.5h0m0 .5h0m0 9h0m0 4h0m.5-25.5h0m0 .5h0m0 2h0m0 1h0m0 1.5h0m0 3h0m0 12.5h0m0 2h0m.5-8.5h0m0 2.5h0m.5-5h0m0 4h0m0 12h0m.5-9h0m0 6h0m0 4h0m.5-8h0m.5-13.5h0m0 1h0m0 5.5h0m0 3h0m0 5.5h0m.5-11h0m0 3h0m0 12h0m0 3.5h0m.5-17.5h0m0 3.5h0m.5-16h0m0 .5h0m0 2.5h0m0 .5h0m0 1h0m0 .5h0m0 6h0m0 7h0m0 .5h0m0 1h0m0 1h0m0 3.5h0m0 2h0m.5-24h0m0 20.5h0m.5-17h0m.5-4.5h0m0 2h0m0 11h0m0 2h0m.5-12h0m0 7h0m0 10.5h0m0 3.5h0m.5-14h0m0 1.5h0m.5 2.5h0m0 2.5h0m0 1h0m0 1h0m0 4h0m0 3h0m.5 2h0m.5-15h0m0 2.5h0m0 8.5h0m.5-12h0m0 6.5h0m0 2.5h0m0 4.5h0m1-13h0m0 5h0m0 5h0m.5-8h0m0 1h0m0 6h0m0 3.5h0m0 2.5h0m0 2.5h0m.5-20h0m0 3.5h0m0 3h0m0 3h0m.5-7.5h0m1-2.5h0m0 8.5h0m0 2.5h0m0 6.5h0m.5-15h0m0 .5h0m0 9.5h0m.5-15h0m0 1.5h0m0 .5h0m0 1h0m0 4.5h0m0 1h0m0 3h0m.5-11.5h0m0 10h0m.5 4h0m0 3.5h0m.5-8.5h0m0 7h0m.5-9.5h0m0 7.5h0m0 3.5h0m.5-5h0m.5-1.5h0m.5-5.5h0m0 3h0m0 7h0m0 4.5h0m.5-16h0m0 3.5h0m0 3h0m0 1h0m0 2h0m0 1.5h0m0 2.5h0m.5-15h0m1 6h0m.5-14.5h0m0 11h0m0 1h0m0 6.5h0m0 3.5h0m0 3h0m0 .5h0m.5-12.5h0m0 4h0m0 3.5h0m0 1h0m0 .5h0m0 1h0m0 1h0m0 1h0m.5-15h0m0 8h0m0 1.5h0m1-14h0m0 9.5h0m.5-11h0m0 2.5h0m0 1h0m0 .5h0m0 3h0m0 2h0m.5-5h0m0 8h0m0 1h0m0 .5h0m0 8.5h0m.5-26.5h0m0 .5h0m0 1h0m0 4.5h0m0 1.5h0m0 2.5h0m0 1h0m0 2h0m0 1.5h0m.5-15.5h0m0 3.5h0m1-3h0m0 2.5h0m0 2.5h0m.5-1.5h0m0 16.5h0m.5-13h0m0 2h0m0 .5h0m0 8.5h0m0 3h0m0 1h0m0 1h0m0 .5h0m.5-3.5h0m0 5h0m.5-20.5h0m0 1h0m0 3.5h0m0 8.5h0m0 6.5h0m.5-17.5h0m0 .5h0m0 1h0m0 .5h0m.5 17.5h0m0 3.5h0m.5-14h0m0 .5h0m0 6.5h0m.5-7h0m0 3.5h0m0 2h0m.5 3.5h0m.5-19.5h0m.5 2h0m0 10h0m.5-17.5h0m0 4h0m0 6.5h0m0 4h0m0 5.5h0m0 4.5h0m0 2.5h0m0 .5h0m0 1.5h0m0 .5h0m.5-28h0m0 11h0m0 5h0m0 5h0m0 .5h0m0 5.5h0m0 5h0m.5-31.5h0m0 3h0m0 6h0m0 1h0m0 7.5h0m0 1.5h0m.5-15h0m0 2.5h0m0 1h0m0 3.5h0m0 13.5h0m0 3.5h0m.5-14.5h0m0 10h0m.5-5h0m.5-3.5h0m0 1h0m0 6h0m0 4h0m0 2h0m.5-16h0m0 6.5h0m0 2h0m0 3h0m0 1h0m0 3.5h0m.5-7h0m1-8h0m.5-3.5h0m0 5h0m0 2h0m0 1h0m0 2.5h0m.5-9.5h0m0 1h0m0 11h0m1-23h0m0 .5h0m0 2.5h0m0 12h0m0 3.5h0m0 2h0m.5-22.5h0m0 4h0m0 1h0m0 8h0m0 1.5h0m0 11h0m.5-23.5h0m.5 6h0m0 11h0m0 8.5h0m.5-20.5h0m0 2h0m0 1h0m0 1h0m0 2h0m0 3h0m0 3h0m0 4.5h0m0 1.5h0m0 5h0m0 1.5h0m.5-29.5h0m0 2h0m0 17.5h0m0 6h0m0 4.5h0m0 2.5h0m1-30h0m0 2h0m0 1.5h0m0 2h0m0 3h0m0 4.5h0m.5-15h0m0 12h0m0 6h0m0 3.5h0m0 1h0m0 1h0m.5-23h0m0 6h0m0 4h0m0 9.5h0m.5-12h0m0 6h0m.5-1.5h0m0 3.5h0m0 2h0m1 2h0m.5-20.5h0m0 10.5h0m0 1h0m0 7h0m0 3.5h0m.5-21h0m0 2.5h0m0 2h0m0 2h0m0 1.5h0m0 5.5h0m0 1h0m0 8h0m.5-15.5h0m0 5.5h0m1-4h0m0 7.5h0m0 2.5h0m0 1h0m0 4.5h0m0 2h0m.5-16.5h0m0 1h0m0 2h0m0 3h0m0 5h0m0 6.5h0m0 2h0m.5-13.5h0m0 7h0m1-9.5h0m0 4h0m0 7.5h0m0 1.5h0m.5-22h0m0 2h0m0 6h0m0 8h0m0 1h0m0 1h0m0 3.5h0m.5-15h0m0 4.5h0m0 4h0m0 5.5h0m1-24.5h0m0 13.5h0m0 4h0m.5-16.5h0m0 1.5h0m0 5.5h0m0 .5h0m0 1.5h0m0 1.5h0m0 7.5h0m.5-21.5h0m0 1h0m0 2h0m0 1.5h0m0 12h0m.5 .5h0m0 1.5h0m0 4.5h0m.5-3h0m0 1.5h0m0 1h0m.5-8h0m.5-5.5h0m0 .5h0m0 2h0m0 1.5h0m0 3h0m0 2.5h0m.5-10.5h0m.5 3.5h0m0 1.5h0m.5 9h0m.5-20h0m0 2h0m0 .5h0m0 1.5h0m0 2h0m0 7h0m0 2h0m0 3.5h0m.5-11h0m0 2h0m0 7h0m1-2.5h0m.5-9.5h0m0 7h0m0 4.5h0m0 1h0m.5-15h0m0 4.5h0m.5 2h0m0 1h0m.5-6h0m0 10h0m0 4.5h0m.5-4h0m0 1h0m0 1.5h0m0 2.5h0m0 1h0m0 .5h0m0 1h0m0 1h0m0 6.5h0m.5-17.5h0m1.5-2.5h0m0 6.5h0m0 2h0m0 1.5h0m0 3h0m0 2h0m0 1h0m.5-23h0m0 8.5h0m0 2.5h0m0 10h0m0 1.5h0m0 5h0m0 2.5h0m.5-18h0m.5-6.5h0m0 13h0m.5-18h0m0 4.5h0m0 2.5h0m0 1.5h0m0 5h0m0 2.5h0m0 3h0m.5-19.5h0m0 11h0m.5 1.5h0m0 9.5h0m.5-18.5h0m0 2.5h0m0 3h0m0 5.5h0m0 3h0m.5 9h0m.5-30h0m0 1h0m0 1h0m0 2.5h0m0 9.5h0m0 10h0m.5-13.5h0m0 2.5h0m0 3.5h0m0 3h0m0 3h0m0 3.5h0m.5-21h0m0 19h0m.5-25h0m0 4.5h0m.5-4.5h0m0 1h0m0 7.5h0m0 8.5h0m0 1.5h0m.5-15.5h0m0 3h0m0 4.5h0m0 2h0m0 3h0m0 6.5h0m0 2.5h0m0 2h0m.5-17h0m0 .5h0m0 1h0m0 1h0m0 1h0m0 1h0m0 1h0m0 .5h0m.5-15.5h0m0 19h0m0 1.5h0m.5-19.5h0m0 1h0m0 1h0m0 1h0m0 .5h0m0 1h0m.5 18h0m.5-6.5h0m0 4.5h0m0 3.5h0m.5-9.5h0m0 2.5h0m0 1.5h0m0 4h0m0 8h0m.5-10h0m0 3h0m2-4.5h0m0 5h0m.5-7h0m0 .5h0m0 1.5h0m0 2.5h0m0 1h0m.5 4h0m1-11h0m0 5h0m.5-8h0m0 1h0m0 4h0m0 5.5h0m0 1.5h0m0 1.5h0m1.5-17.5h0m0 2.5h0m0 3.5h0m0 3.5h0m0 1.5h0m0 4h0m.5-16.5h0m0 5.5h0m0 3.5h0m0 5.5h0m0 4h0m.5-10.5h0m0 15h0m.5-13h0m.5 2h0m0 1h0m0 3h0m0 1h0m0 3h0m0 3h0m.5-1.5h0m.5-20h0m0 3h0m0 3.5h0m0 9h0m.5-20.5h0m0 3h0m0 3.5h0m0 3h0m0 .5h0m0 7.5h0m0 1.5h0m0 4.5h0m0 4h0m.5-21.5h0m0 1h0m0 .5h0m0 2h0m0 1.5h0m0 1.5h0m0 2h0m0 8h0m0 5.5h0m.5-28.5h0m.5 16h0m.5 2h0m.5-7h0m0 2h0m0 7.5h0m0 .5h0m0 2h0m.5-13.5h0m0 4.5h0m0 3h0m.5 2h0m1 5h0m.5-8.5h0m0 2h0m0 2.5h0m0 1h0m0 1h0m0 .5h0m0 1.5h0m0 2h0m0 3.5h0m.5-20.5h0m.5 2h0m0 1.5h0m0 1h0m0 3h0m.5-8h0m0 10h0m.5-4.5h0m.5-4.5h0m0 10h0m.5-14h0m0 10.5h0m0 1h0m0 4h0m0 2h0m.5-15.5h0m0 4.5h0m.5 1.5h0m0 2h0m0 7h0m.5-15.5h0m0 1h0m0 10h0m0 3h0m.5-16h0m0 5.5h0m0 16h0m1-17h0m0 10.5h0m.5-15h0m0 7.5h0m0 2h0m0 2h0m0 1.5h0m0 6h0m.5-17.5h0m0 4.5h0m0 10h0m0 2h0m.5-15h0m0 11h0m1-9.5h0m0 3.5h0m0 5h0m.5-2.5h0m0 4.5h0m0 5h0m.5-17.5h0m0 1h0m0 3h0m0 7.5h0m0 .5h0m0 2h0m0 1h0m0 1h0m0 3h0m.5-12h0m1-7.5h0m0 3h0m0 2h0m0 5h0m0 7.5h0m0 3h0m0 1h0m.5-18h0m.5-14h0m0 3h0m0 .5h0m0 14h0m0 .5h0m0 6h0m0 1.5h0m.5-25h0m0 1h0m0 11h0m0 7h0m0 2h0m0 1h0m0 .5h0m0 3.5h0m.5-24h0m0 3h0m3.5 15h0m0 .5h0m0 1h0m.5-4h0m0 .5h0m0 1h0m0 4h0m0 .5h0m.5-7h0m0 5h0m0 3h0m1-11.5h0m0 3.5h0m.5-3.5h0m0 1.5h0m0 6h0m0 .5h0m0 5h0m0 1.5h0m.5-17h0m0 13h0m.5-5h0m0 5.5h0m.5-.5h0m.5-11.5h0m0 3.5h0m.5-1.5h0m0 3h0m0 4h0m0 1h0m.5-18.5h0m0 16h0m1-4.5h0m.5-4.5h0m0 1h0m0 1h0m0 5h0m0 1.5h0m0 3h0m0 1.5h0m1-16h0m.5 8.5h0m0 9.5h0m0 1h0m.5-23h0m0 10.5h0m0 6.5h0m0 1h0m0 1h0m0 .5h0m0 1h0m.5-16.5h0m0 1h0m0 2h0m0 5h0m0 3h0m.5-12.5h0m0 6h0m0 2.5h0m0 3h0m.5-7h0m.5-10.5h0m0 1h0m0 1.5h0m0 1h0m.5-4h0m0 6.5h0m0 13.5h0m.5-8h0m0 2h0m0 3h0m0 2h0m0 2h0m0 4h0m.5-25h0m0 1.5h0m0 7h0m0 1h0m0 1.5h0m0 5h0m0 6h0m0 1h0m.5-9h0m.5-11h0m0 2h0m0 3h0m0 1.5h0m0 3.5h0m0 9h0m0 6.5h0m.5-10h0m0 .5h0m.5-19h0m0 3.5h0m0 3h0m0 1.5h0m0 8h0m0 4.5h0m0 3.5h0m0 2h0m.5-25.5h0m0 1h0m0 1h0m0 2.5h0m0 .5h0m.5 7h0m.5 1.5h0m0 9h0m.5-8h0m0 2.5h0m0 4h0m0 1.5h0m0 .5h0m0 4h0m.5-11.5h0m0 3h0m0 1h0m0 .5h0m0 4.5h0m0 1h0m3-11h0m0 1.5h0m0 1h0m0 1h0m0 1h0m.5-6.5h0m0 3h0m0 4.5h0m0 1.5h0m2-9.5h0m0 2h0m0 2.5h0m0 5h0m0 1h0m0 1h0m0 2h0m0 1h0m0 2h0m.5-17.5h0m0 2h0m0 4.5h0m0 1h0m0 1h0m0 2h0m0 3.5h0m0 1h0m0 4h0m.5-15h0m1.5 4.5h0m0 3h0m0 1.5h0m0 3.5h0m.5-17h0m0 2h0m0 1.5h0m0 2h0m0 1h0m0 4h0m.5-10h0m0 1h0m0 7h0m0 7h0m.5-24.5h0m0 4.5h0m0 .5h0m.5-1h0m0 2.5h0m0 17h0m.5-23h0m0 .5h0m0 3h0m0 2h0m0 7h0m0 6h0m0 2h0m0 1h0m0 4h0m0 2.5h0m.5-20.5h0m0 8.5h0m0 .5h0m0 4h0m0 3h0m0 2.5h0m.5-14.5h0m0 3h0m0 4.5h0m0 3h0m1-24.5h0m0 3.5h0m0 2h0m.5-4h0m0 12.5h0m0 2.5h0m0 4h0m.5-17.5h0m0 .5h0m0 8.5h0m0 3h0m0 3h0m0 4h0m0 1.5h0m0 1.5h0m.5-14.5h0m.5 0h0m0 .5h0m0 16h0m0 2h0m.5-21.5h0m0 1h0m0 4h0m0 3h0m0 1h0m0 2h0m0 1h0m0 1h0m0 3h0m.5-18.5h0m0 1h0m1.5 .5h0m0 3h0m0 3h0m0 1.5h0m0 1h0m0 7h0m0 4h0m0 3h0m0 1.5h0m.5-13h0m0 1h0m0 4h0m0 1.5h0m0 2h0m0 2h0m0 .5h0m1.5-24.5h0m0 6h0m0 1.5h0m0 2h0m0 7.5h0m.5-10.5h0m0 5.5h0m0 3.5h0m.5-2.5h0m.5-4.5h0m0 3h0m1-5.5h0m0 9.5h0m0 2h0m.5-9h0m0 5.5h0m.5-13h0m0 1h0m0 3h0m0 5h0m0 2h0m.5 3h0m.5-10.5h0m0 2h0m0 12h0m.5-13h0m0 2.5h0m0 1h0m0 1h0m0 1h0m0 1h0m0 .5h0m0 1h0m0 2h0m0 7h0m.5-7.5h0m3.5-4.5h0m0 1.5h0m0 1h0m0 .5h0m0 1h0m0 1h0m0 .5h0m.5-5.5h0m0 5.5h0m0 3h0m.5-11.5h0m0 7.5h0m1 5h0m.5-13.5h0m0 3.5h0m0 1h0m0 2h0m0 4h0m0 4.5h0m.5-16.5h0m0 2.5h0m0 2.5h0m0 8h0m0 1h0m1-7h0m0 3h0m.5-6.5h0m.5 5h0m0 5h0m0 2h0m0 1.5h0m.5-5h0m1-13h0m0 .5h0m0 4.5h0m0 2.5h0m0 4h0m.5-10h0m0 1h0m0 1h0m0 3h0m0 11h0m0 .5h0m0 6.5h0m.5-25.5h0m0 2.5h0m0 5h0m0 1h0m0 .5h0m0 1h0m0 .5h0m0 1.5h0m0 2h0m0 2h0m0 1h0m1-12h0m1 7h0m0 2h0m0 2h0m0 3h0m.5-7.5h0m0 6h0m0 3.5h0m.5-6.5h0m.5-19.5h0m0 2h0m0 1h0m.5-5h0m0 1h0m0 5h0m0 3h0m0 3h0m0 5h0m.5-10h0m0 1h0m0 1.5h0m0 4h0m0 1h0m0 1h0m0 2.5h0m0 1.5h0m0 4h0m.5-23.5h0m0 5h0m0 1h0m0 1.5h0m0 5.5h0m0 9.5h0m.5-22h0m0 1h0m0 1h0m0 .5h0m0 1h0m0 4.5h0m0 3.5h0m0 4h0m1.5-1.5h0m0 4.5h0m0 1h0m0 1h0m0 2.5h0m0 1h0m.5-12h0m0 4.5h0m0 1h0m.5 5.5h0m0 2.5h0m.5-11h0m0 3.5h0m0 8.5h0m0 5.5h0m0 1.5h0m.5-4h0m.5-19h0m0 10.5h0m0 3h0m.5-12.5h0m0 2h0m0 1h0m0 2h0m0 3.5h0m0 3.5h0m0 2h0m1.5-7h0m0 5h0m.5-3.5h0m0 1.5h0m0 1h0m.5-6h0m.5 1.5h0m.5-1.5h0m.5 4.5h0m.5-2.5h0m0 4.5h0m0 2.5h0m.5-11.5h0m0 .5h0m.5 8.5h0m0 6h0m.5-20h0m0 4h0m0 5h0m0 1.5h0m0 8h0m0 3.5h0m.5-20h0m0 .5h0m0 3.5h0m0 1.5h0m0 4.5h0m0 2.5h0m0 1.5h0m0 3.5h0m.5 1.5h0m1-22.5h0m0 2h0m0 7.5h0m0 2.5h0m0 2h0m.5-14.5h0m0 1h0m0 5h0m0 .5h0m0 7.5h0m0 5h0m0 1h0m.5-16h0m0 .5h0m0 2.5h0m0 1h0m0 2h0m0 1h0m0 6h0m1-20.5h0m0 .5h0m.5-5h0m0 2h0m0 .5h0m0 1h0m0 2h0m0 16.5h0m0 1h0m.5-2.5h0m0 5.5h0m.5-25.5h0m0 5.5h0m.5 7h0m0 2h0m0 .5h0m0 3h0m0 6h0m.5-24h0m0 1h0m0 2.5h0m0 2.5h0m0 4h0m0 .5h0m0 1h0m0 5h0m0 5h0m.5-19.5h0m0 3h0m0 3h0m0 1h0m0 4.5h0m0 5.5h0m0 4h0m.5-13.5h0m0 6h0m.5-3.5h0m.5 9.5h0m0 3.5h0m0 2.5h0m0 2.5h0m.5-12.5h0m0 2.5h0m0 4.5h0m0 2h0m0 2.5h0m.5-15h0m0 12.5h0m0 1h0m.5-4.5h0m.5-11.5h0m.5 4h0m0 1h0m0 2.5h0m0 1h0m0 2h0m.5-11.5h0m0 13h0m0 2h0m.5-12.5h0m.5 16h0m.5-19.5h0m0 3h0m0 1.5h0m0 2.5h0m0 1.5h0m0 3.5h0m0 5h0m.5-22h0m0 14.5h0m0 3.5h0m0 2.5h0m1-12h0m.5-2h0m0 4.5h0m0 1.5h0m0 7h0m.5-5.5h0m0 2h0m0 1.5h0m0 3h0m.5-16h0m.5-3h0m0 8.5h0m.5-4h0m0 1.5h0m0 7h0m0 11h0m.5-17.5h0m0 4h0m0 2.5h0m0 1.5h0m0 2.5h0m0 1.5h0m0 1.5h0m0 2.5h0m0 .5h0m0 3.5h0m.5-28h0m0 3h0m0 2h0m0 4.5h0m0 8h0m0 1h0m0 3h0m0 1.5h0m.5-26h0m0 .5h0m.5-2h0m0 6h0m0 1h0m.5 2.5h0m0 2h0m0 3h0m0 .5h0m0 2.5h0m.5-17h0m0 3h0m0 7h0m0 4h0m0 5.5h0m0 4.5h0m.5-8h0m0 5h0m.5-2h0m0 3.5h0m0 3h0m.5-26h0m0 3.5h0m0 1h0m0 1h0m0 2.5h0m0 4.5h0m.5-12h0m0 1.5h0m0 .5h0m0 12h0m0 3.5h0m0 3h0m0 2.5h0m0 4h0m0 1h0m.5-16h0m0 3h0m0 13.5h0m0 1h0m1-10.5h0m0 2.5h0m0 3.5h0m0 1.5h0m0 5.5h0m.5-23.5h0m0 4h0m0 1h0m0 2.5h0m0 6.5h0m0 2h0m.5-5h0m1-2h0m.5 2h0m0 1h0m0 2h0m0 2h0m.5-9.5h0m.5-1h0m0 3.5h0m1-.5h0m0 2h0m0 5.5h0m0 2h0m0 1.5h0m0 2h0m0 2h0m0 1.5h0m.5-18h0m0 2.5h0m0 3.5h0m0 2h0m0 6.5h0m.5-16h0m0 12h0m0 2.5h0m0 4h0m0 1h0m1.5-27h0m0 6h0m0 3.5h0m0 4h0m0 5h0m0 3h0m.5-17.5h0m0 5.5h0m0 1h0m0 1.5h0m0 4h0m0 8.5h0m.5-1h0m.5-6.5h0m0 3.5h0m0 4.5h0m.5-23h0m0 1.5h0m0 2.5h0m0 1.5h0m0 2.5h0m0 2.5h0m0 1.5h0m0 2.5h0m.5-8.5h0m0 11.5h0m0 2h0m1-16.5h0m0 18.5h0m.5-22.5h0m0 5.5h0m0 5h0m0 3.5h0m0 3h0m.5-9.5h0m0 .5h0m0 1h0m0 1h0m0 1.5h0m0 1h0m0 .5h0m0 1h0m0 5.5h0m0 1h0m0 3h0m.5-7.5h0m.5-24h0m0 2.5h0m0 2h0m.5-3.5h0m0 1.5h0m0 2.5h0m.5-4h0m0 3h0m2 10h0m0 2h0m0 1h0m0 1h0m0 1.5h0m.5-15h0m0 3.5h0m0 .5h0m0 4h0m0 3h0m0 4.5h0m0 1.5h0m.5-15h0m0 4h0m0 8h0m0 5h0m1-1.5h0m.5-9.5h0m0 3h0m0 1.5h0m0 4h0m0 4.5h0m0 1.5h0m0 2.5h0m.5-25h0m0 3h0m0 1.5h0m0 1h0m0 2h0m0 2h0m0 4h0m0 1h0m0 .5h0m0 5.5h0m.5-9.5h0m0 1h0m0 6.5h0m0 1h0m3.5-8h0m.5 1.5h0m0 1h0m0 1h0m0 1.5h0m0 2h0m.5-8.5h0m0 7h0m0 2.5h0m1-10.5h0m0 3h0m0 10h0m0 1h0m0 .5h0m0 1h0m.5-9.5h0m0 3.5h0m.5 2.5h0m.5-13h0m0 2h0m0 2h0m0 5h0m.5-21.5h0m0 1h0m0 2.5h0m0 1.5h0m0 .5h0m0 5h0m0 .5h0m0 7h0m0 4.5h0m0 1.5h0m0 .5h0m0 1h0m.5-25.5h0m0 2h0m0 3h0m0 15h0m.5-5.5h0m.5-6h0m0 2h0m0 5.5h0m0 3h0m0 2h0m.5-21h0m0 5.5h0m0 6.5h0m0 5.5h0m.5-17.5h0m0 3h0m0 2.5h0m0 22.5h0m.5-13.5h0m0 5.5h0m.5-14.5h0m0 17h0m.5-23h0m0 10h0m0 2h0m0 .5h0m0 1h0m0 2h0m0 1h0m0 2h0m0 6h0m.5-23h0m0 .5h0m0 1h0m0 1h0m0 2h0m.5-1h0m0 17h0m.5 1.5h0m0 3h0m.5-9h0m0 2.5h0m0 9h0m.5-6.5h0m0 2.5h0m0 3.5h0m.5-13h0m0 2.5h0m.5 3.5h0m.5 3h0m0 2h0m.5-17.5h0m0 3h0m0 1h0m0 3h0m0 14h0m0 1h0m0 1h0m.5-21h0m0 8h0m0 1h0m0 2h0m0 5.5h0m1-17h0m0 1h0m0 .5h0m0 4.5h0m0 9.5h0m0 1.5h0m0 .5h0m.5-19.5h0m0 .5h0m0 4.5h0m0 1h0m0 5h0m0 2.5h0m0 1.5h0m0 1.5h0m1.5-9.5h0m0 2h0m0 2.5h0m.5 1h0m0 2.5h0m1-12h0m0 16h0m.5-14.5h0m0 .5h0m0 1h0m0 1h0m0 3.5h0m0 1.5h0m0 4h0m0 .5h0m0 1h0m0 6.5h0m.5-20.5h0m0 1.5h0m0 3.5h0m0 5h0m0 4.5h0m0 2.5h0m0 1h0m1.5-1.5h0m.5-10.5h0m0 1.5h0m0 4h0m0 1h0m0 4h0m.5-23.5h0m0 .5h0m0 1h0m0 .5h0m0 1h0m0 1h0m0 12h0m0 5h0m.5-22.5h0m0 6h0m.5-2h0m0 10.5h0m0 3.5h0m.5-17h0m0 1h0m0 4h0m0 10.5h0m0 4h0m0 3.5h0m.5-17h0m0 14h0m.5-22h0m0 11h0m0 4.5h0m0 6h0m0 6h0m0 3h0m.5-11.5h0m0 1h0m0 7.5h0m.5-3.5h0m.5-11.5h0m0 1h0m0 10h0m0 2.5h0m.5-20h0m0 3h0m0 8h0m0 7h0m.5-4h0m0 8h0m.5-18.5h0m0 2h0m0 4h0m0 6h0m.5-4h0m0 3.5h0m0 5h0m.5-17.5h0m0 4.5h0m0 14.5h0m.5-8h0m0 3.5h0m0 9h0m.5-25h0m0 4.5h0m0 3h0m0 9.5h0m.5-16h0m0 8h0m0 3h0m0 4h0m.5-19.5h0m0 8.5h0m0 14.5h0m.5-20h0m0 14.5h0m.5-13h0m0 8.5h0m0 1h0m.5-12.5h0m0 4h0m0 1.5h0m0 3.5h0m.5-10.5h0m0 2h0m0 14h0m0 2h0m.5-8.5h0m1-9.5h0m0 3.5h0m0 2.5h0m0 2.5h0m0 3.5h0m0 2.5h0m0 2.5h0m.5-12.5h0m0 8.5h0m0 5h0m.5-11.5h0m0 15h0m.5-11h0m0 11h0m.5-20.5h0m0 4.5h0m0 10h0m0 1.5h0m0 .5h0m0 1h0m.5-8h0m.5-2.5h0m0 1h0m0 3.5h0m0 1.5h0m.5-19h0m0 .5h0m0 10h0m.5-8h0m0 1h0m0 1.5h0m.5 1.5h0m0 1.5h0m0 8.5h0m0 1.5h0m0 .5h0m0 1.5h0m.5-20.5h0m0 9.5h0m0 6h0m0 6.5h0m0 1h0m0 1h0m0 1.5h0m0 .5h0m.5-22.5h0m0 17.5h0m.5-19h0m0 7.5h0m.5-3.5h0m.5-1h0m0 2h0m0 1h0m0 2h0m0 7h0m0 5.5h0m0 2.5h0m0 2h0m.5-21h0m0 3h0m0 3.5h0m0 2.5h0m0 3.5h0m0 1h0m0 8.5h0m0 1h0m.5-14h0m0 2h0m0 6h0m.5 4.5h0m.5-16.5h0m0 10.5h0m.5-2h0m0 4h0m0 1h0m0 1.5h0m0 5.5h0m.5-30h0m0 1.5h0m0 .5h0m0 1.5h0m0 .5h0m0 12.5h0m0 3h0m0 1.5h0m1-20.5h0m0 .5h0m0 1h0m1.5 16h0m.5-4h0m0 2h0m0 1h0m0 2.5h0m0 1h0m0 1h0m.5-8.5h0m0 8.5h0m.5-9h0m0 3.5h0m0 1h0m0 3h0m1-6.5h0m.5-6h0m0 1.5h0m0 2h0m0 12h0m.5-20.5h0m0 9.5h0m0 6.5h0m0 2.5h0m0 3h0m.5-8.5h0m0 1h0m0 8.5h0m.5-18.5h0m0 2.5h0m0 13.5h0m0 6.5h0m.5-30.5h0m0 2h0m0 3.5h0m0 3h0m0 12.5h0m.5-21h0m0 12h0m0 3h0m0 3.5h0m1-17.5h0m0 2.5h0m0 1.5h0m0 .5h0m0 17h0m.5-20h0m0 .5h0m0 14h0m0 5.5h0m.5-2.5h0m1.5-4.5h0m0 3h0m0 5.5h0m0 4.5h0m.5-7h0m0 4.5h0m0 .5h0m.5-9.5h0m.5-3.5h0m0 5.5h0m0 4.5h0m1-8.5h0m0 2h0m0 3.5h0m0 2h0m0 5h0m.5-15.5h0m0 12h0m.5-18.5h0m0 1.5h0m0 1.5h0m0 17h0m.5-21h0m0 5h0m0 7.5h0m0 2h0m0 2.5h0m0 8.5h0m0 1.5h0m.5-22.5h0m0 17.5h0m0 2.5h0m.5-14h0m0 5.5h0m.5-7h0m0 9.5h0m0 2h0m.5-19h0m0 1h0m0 9h0m0 1.5h0m.5-8.5h0m0 2h0m.5 3h0m0 5.5h0m.5-11.5h0m0 2.5h0m0 2.5h0m0 3.5h0m0 5h0m0 1.5h0m.5-9h0m.5-8.5h0m0 3.5h0m0 13h0m.5-8h0m0 4.5h0m0 5.5h0m.5-13.5h0m0 1h0m0 4.5h0m0 4h0m.5-12.5h0m0 16.5h0m1-10h0m0 3h0m0 4.5h0m.5-16.5h0m0 1.5h0m0 1h0m0 2h0m0 .5h0m0 1h0m0 1.5h0m0 1.5h0m0 5.5h0m0 3h0m.5-5.5h0m0 1h0m.5-18h0m0 .5h0m.5 2h0m0 .5h0m0 2.5h0m0 17.5h0m.5-8h0m0 6h0m0 4h0m0 1h0m0 1.5h0m0 1h0m0 5.5h0m.5-28.5h0m0 15.5h0m.5-21h0m0 .5h0m0 1.5h0m0 1.5h0m0 11.5h0m0 2h0m0 2h0m0 10h0m.5-12.5h0m0 2.5h0m0 4.5h0m0 3h0m.5-9h0m.5-3.5h0m0 10.5h0m.5-3h0m0 .5h0m0 5.5h0m0 2h0m.5-9.5h0m0 3.5h0m0 .5h0m0 1.5h0m0 2h0m3-14.5h0m0 1h0m0 1h0m0 1h0m0 .5h0m0 1h0m0 1h0m.5-13h0m0 7.5h0m0 2h0m0 2.5h0m0 1h0m0 2.5h0m.5-20h0m0 2h0m0 2.5h0m0 14.5h0m0 2.5h0m.5-21h0m0 3.5h0m1 19h0m0 4h0m.5-21h0m0 2.5h0m0 4.5h0m0 2h0m0 1h0m0 3h0m0 1.5h0m0 3h0m0 1h0m.5-22h0m0 4.5h0m0 2.5h0m0 8h0m.5-16.5h0m0 2h0m.5 1.5h0m0 2.5h0m0 4.5h0m0 5.5h0m.5-8.5h0m0 4h0m0 1h0m0 5.5h0m0 3h0m.5-12h0m0 1h0m0 3.5h0m0 1h0m0 2.5h0m0 1h0m3.5-17h0m0 1h0m.5-2h0m0 3.5h0m0 13.5h0m0 1.5h0m0 .5h0m0 1h0m.5-20.5h0m0 2.5h0m0 19.5h0m0 1h0m0 1h0m.5-8h0m0 5h0m0 6h0m.5-3.5h0m0 8.5h0m.5-14h0m0 7.5h0m.5-11h0m.5-2h0m0 7h0m.5-3.5h0m0 2h0m0 .5h0m0 3.5h0m0 5.5h0m0 4.5h0m.5-12h0m0 2h0m0 2.5h0m0 1.5h0m1-10.5h0m.5 5.5h0m0 3h0m.5-6.5h0m0 9h0m0 1h0m.5-10.5h0m0 2h0m.5-6.5h0m0 1.5h0m0 16h0m.5-7.5h0m0 1h0m0 .5h0m0 1.5h0m0 4h0m.5-20.5h0m0 2h0m0 8h0m0 8h0m0 .5h0m.5-20h0m0 1h0m0 1.5h0m0 .5h0m0 1h0m0 4.5h0m0 1h0m0 1h0m0 2.5h0m.5-8h0m0 2h0m0 1.5h0m4.5-3h0m0 .5h0m0 1h0m0 1h0m0 1h0m1-4.5h0m.5 9h0m0 1.5h0m0 .5h0m0 2h0m0 1h0m0 .5h0m.5-12.5h0m0 3h0m0 1h0m0 11.5h0m0 1h0m.5-11.5h0m0 9.5h0m.5-4.5h0m0 6h0m.5-14.5h0m0 5.5h0m0 1.5h0m0 4.5h0m0 .5h0m.5 1.5h0m1-17h0m0 1.5h0m0 4h0m0 .5h0m0 2h0m0 1h0m0 4h0m0 6h0m.5-16.5h0m0 1h0m.5-6.5h0m0 14h0m0 2h0m.5-13h0m.5 5h0m0 2h0m1-5h0m0 .5h0m0 1h0m0 1.5h0m0 3.5h0m0 1h0m0 3h0m1-1.5h0m0 5.5h0m.5-11.5h0m0 2h0m.5 1h0m.5-3h0m0 8h0m0 1h0m.5-5.5h0m0 1.5h0m0 5h0m0 3h0m.5-20.5h0m0 4h0m0 4h0m0 4h0m0 3.5h0m.5-14.5h0m0 2h0m0 2.5h0m0 8.5h0m0 3h0m.5-19h0m.5 8h0m0 4h0m0 9h0m.5-14h0m0 6h0m.5-8h0m0 5.5h0m0 2h0m0 2.5h0m.5-24h0m0 4.5h0m.5-3h0m0 1.5h0m0 2h0m0 12.5h0m0 6.5h0m0 2.5h0m0 1.5h0m0 .5h0m.5-28.5h0m0 4h0m0 28h0m0 1.5h0m.5-28h0m0 7.5h0m0 7h0m0 4.5h0m0 6h0m.5-8h0m0 3h0m0 1h0m0 1h0m0 2h0m.5-30h0m0 3h0m.5 3h0m0 9.5h0m0 1h0m0 1h0m0 1h0m.5-5h0m0 4.5h0m0 2h0m0 2h0m.5-21.5h0m0 3h0m0 9h0m0 3.5h0m.5-14.5h0m.5-1h0m0 1h0m0 1h0m0 1h0m0 1h0m0 .5h0m0 1h0m.5 3.5h0m0 1.5h0m0 3h0m0 7.5h0m0 3.5h0m0 1.5h0m.5-15h0m0 .5h0m0 3h0m0 2h0m0 2h0m0 4h0m1-9h0m0 7.5h0m0 7h0m.5-4.5h0m.5-8.5h0m0 1h0m0 1h0m0 .5h0m0 1h0m0 3h0m0 1h0m0 2h0m0 1h0m.5-5.5h0m2.5 3h0m.5-5h0m0 1h0m0 1h0m0 1h0m0 1h0m0 2.5h0m0 .5h0m.5-9.5h0m0 11h0m1-13.5h0m0 4.5h0m0 2.5h0m.5 3.5h0m.5-9.5h0m0 8h0m.5-15.5h0m0 9h0m0 12h0m.5-16h0m0 7h0m0 6.5h0m0 3.5h0m.5-23h0m0 3.5h0m0 1h0m0 10h0m.5-12.5h0m0 5.5h0m0 3.5h0m0 5.5h0m0 7h0m0 1h0m.5-25.5h0m0 10.5h0m0 7h0m0 4h0m.5-19.5h0m0 4.5h0m0 2h0m0 4h0m0 1h0m0 6h0m.5-4h0m.5-15.5h0m0 1h0m0 1.5h0m0 .5h0m0 2h0m1 2.5h0m0 2h0m0 1.5h0m0 2.5h0m0 4.5h0m0 2.5h0m0 2.5h0m.5-6.5h0m0 2.5h0m.5-13h0m1 1h0m0 1.5h0m0 .5h0m0 2h0m0 1h0m0 1h0m0 2h0m0 1h0m2 1.5h0m0 .5h0m0 2.5h0m0 .5h0m.5-8h0m0 1.5h0m0 1h0m0 3.5h0m0 2h0m.5-9h0m.5-4.5h0m0 1.5h0m0 1h0m0 .5h0m0 3.5h0m0 2.5h0m0 7h0m.5-12h0m0 4h0m0 4h0m0 1.5h0m1.5-12.5h0m0 4h0m0 5h0m0 3.5h0m0 4.5h0m.5-15.5h0m0 .5h0m0 4h0m0 8h0m0 1.5h0m.5-12h0m.5 7h0m.5-4h0m0 1h0m.5 6.5h0m0 .5h0m.5-14h0m0 4h0m0 6.5h0m0 1.5h0m.5-20.5h0m0 3h0m0 5h0m0 2h0m0 .5h0m0 6h0m0 1h0m.5-16.5h0m0 12h0m0 2.5h0m.5-16.5h0m0 5h0m.5-2.5h0m0 4h0m.5 3h0m.5-10h0m0 5h0m0 3.5h0m0 4.5h0m0 3h0m.5-14.5h0m0 10.5h0m0 6h0m0 1.5h0m0 1h0m0 .5h0m0 1.5h0m0 4.5h0m.5-24h0m0 8.5h0m0 16.5h0m.5-20h0m.5-8h0m0 5h0m0 1.5h0m0 6h0m0 2h0m0 2.5h0m0 7.5h0m.5-21h0m0 2.5h0m0 .5h0m0 1.5h0m0 2h0m0 4.5h0m0 6h0m0 1.5h0m0 1.5h0m.5-4.5h0m1-9h0m0 1h0m0 .5h0m0 6h0m0 5h0m.5-18h0m0 8.5h0m0 1h0m0 1h0m0 1h0m0 3.5h0m0 2h0m2.5-4.5h0m.5-20h0m0 4h0m0 13.5h0m0 1h0m0 4h0m.5-10h0m0 .5h0m0 2h0m0 .5h0m0 1h0m0 3.5h0m.5-18h0m0 1h0m0 .5h0m0 1h0m0 13.5h0m1-7.5h0m0 4h0m0 7.5h0m0 1h0m0 2.5h0m0 1h0m.5-19h0m0 .5h0m0 4.5h0m0 1h0m0 2.5h0m0 3h0m0 5h0m.5-14h0m0 15h0m.5-4h0m1-18h0m0 5h0m0 3.5h0m0 1h0m0 5h0m0 4h0m0 1.5h0m.5-18h0m0 4h0m0 5.5h0m0 1h0m0 1h0m0 4h0m.5-19.5h0m0 13h0m0 1h0m0 2.5h0m0 2h0m0 4h0m.5-17.5h0m0 1.5h0m0 .5h0m.5-5h0m0 20.5h0m0 2h0m0 3.5h0m.5-30h0m.5 0h0m0 24.5h0m0 2h0m0 2.5h0m.5-28.5h0m0 1h0m0 3.5h0m0 1h0m.5-3.5h0m0 13h0m.5-9.5h0m0 10.5h0m0 1h0m0 1h0m0 .5h0m0 1h0m0 1h0m0 2h0m.5 0h0m0 3h0m.5-12h0m0 4.5h0m0 7.5h0m0 1.5h0m0 .5h0m.5-26h0m0 2h0m0 5h0m0 5.5h0m.5-6.5h0m0 2.5h0m0 6.5h0m0 4h0m0 1.5h0m0 1h0m.5-17h0m0 9.5h0m.5-13.5h0m.5 1h0m0 1h0m0 .5h0m0 5h0m0 9h0m0 7.5h0m0 2.5h0m0 .5h0m.5-23h0m0 2h0m0 8h0m0 4.5h0m0 2.5h0m0 .5h0m0 1h0m0 3h0m0 1.5h0m.5-3h0m.5-15.5h0m0 4h0m.5-2h0m0 1h0m0 6.5h0m0 1h0m.5-10.5h0m0 5.5h0m0 1.5h0m0 9.5h0m0 1h0m.5-16h0m0 .5h0m0 10h0m.5 2.5h0m.5-10h0m0 6h0m0 7h0m.5-10.5h0m0 1.5h0m0 4h0m0 4h0m1-13.5h0m0 4h0m0 6.5h0m0 1.5h0m.5-13h0m0 2.5h0m0 6h0m.5-2h0m.5-2h0m.5-1.5h0m0 5h0m0 2.5h0m1 2h0m0 1h0m0 3h0m.5-17h0m0 .5h0m0 2h0m0 2.5h0m0 1.5h0m0 3.5h0m0 3h0m0 .5h0m0 1h0m0 1h0m.5-9h0m0 2h0m0 .5h0m0 2.5h0m3-23.5h0m0 2h0m.5 2.5h0m.5-4.5h0m0 1h0m0 2h0m0 1.5h0m0 .5h0m.5 16h0m0 1h0m.5-2h0m0 3.5h0m.5-5.5h0m.5-11h0m0 1h0m0 1.5h0m0 9.5h0m0 5.5h0m.5-4.5h0m.5-10.5h0m0 13.5h0m0 3h0m0 2h0m0 .5h0m.5-23h0m0 16h0m.5-14h0m0 .5h0m0 1.5h0m.5-3.5h0m0 10h0m0 10.5h0m.5-6.5h0m0 4.5h0m.5-12h0m0 3.5h0m0 1.5h0m0 1h0m0 5h0m0 5.5h0m0 2h0m0 .5h0m.5-9.5h0m0 2.5h0m0 5.5h0m0 1.5h0m.5-4h0m.5-19h0m0 3.5h0m0 2.5h0m.5-5h0m0 10h0m0 1.5h0m.5-12h0m0 8h0m0 1.5h0m0 5h0m0 2.5h0m0 2.5h0m.5-19h0m0 4h0m0 3h0m0 9.5h0m0 2.5h0m0 2.5h0m0 1h0m.5-19h0m0 8.5h0m0 3h0m.5 9.5h0m.5-14.5h0m0 10h0m.5-13.5h0m0 2h0m0 5h0m0 1h0m0 3h0m0 4h0m.5-16.5h0m0 6h0m0 3.5h0m0 3h0m0 3h0m.5-12.5h0m0 14h0m1.5-31h0m0 1h0m0 1h0m0 3h0m0 4h0m0 4h0m0 1.5h0m0 .5h0m0 3.5h0m0 3h0m0 3.5h0m0 3h0m.5-25h0m0 3.5h0m0 5.5h0m0 9h0m0 1.5h0m0 1.5h0m.5-23h0m0 1h0m0 15.5h0m1-4.5h0m0 9h0m0 4.5h0m0 4h0m0 2.5h0m.5-17.5h0m0 4h0m0 5h0m.5-2.5h0m0 6.5h0m.5-19.5h0m0 1h0m.5-2.5h0m0 .5h0m0 1h0m0 1h0m0 1.5h0m0 2.5h0m0 3.5h0m0 6.5h0m.5-21h0m0 8h0m0 1h0m0 8h0m0 5.5h0m.5-11h0m0 1h0m0 8.5h0m.5-10.5h0m0 4.5h0m0 4.5h0m0 5h0m0 .5h0m1.5-9h0m0 2h0m.5-15.5h0m0 .5h0m0 2h0m0 6h0m0 2h0m0 1h0m0 5.5h0m.5-17.5h0m0 4h0m0 11h0m0 2.5h0m1-18h0m0 4.5h0m.5-4.5h0m0 2h0m0 1.5h0m0 10.5h0m.5-5.5h0m0 2h0m0 6h0m0 2h0m.5-6.5h0m.5-11h0m0 .5h0m0 3h0m0 1h0m0 1.5h0m0 3h0m0 1.5h0m0 4h0m0 5.5h0m.5-7h0m.5-13h0m.5 3h0m0 10h0m0 3.5h0m0 11h0m.5-26h0m0 6h0m0 12.5h0m.5-23h0m0 1h0m0 7h0m0 4.5h0m0 2h0m0 7h0m.5-24.5h0m0 .5h0m0 1.5h0m0 1h0m0 2h0m0 .5h0m0 1h0m0 1.5h0m0 5.5h0m0 2.5h0m0 4.5h0m0 1.5h0m0 10h0m0 1h0m1-19.5h0m.5-3.5h0m0 8h0m0 1h0m0 1.5h0m0 4h0m.5-9h0m0 3h0m0 5h0m0 2.5h0m0 1h0m0 6.5h0m1-19h0m0 6h0m0 .5h0m0 2.5h0m0 6h0m0 2h0m.5-16h0m.5 1.5h0m0 8.5h0m0 1.5h0m1-18h0m0 3h0m0 7h0m0 1h0m0 2.5h0m.5-9.5h0m0 1h0m0 .5h0m0 2h0m0 5h0m0 1h0m0 .5h0m0 2.5h0m0 .5h0m.5-8.5h0m1.5-5.5h0m0 1.5h0m0 6h0m.5-8.5h0m0 4.5h0m0 1h0m0 .5h0m0 1.5h0m0 2.5h0m0 .5h0m.5-2h0" stroke="#000" stroke-width="3.4" stroke-linecap="round" fill="none" clip-path="url(#c1)"/>
<path d="M195 173h0m1-60.5h0m.5-44.5h0m0 1.5h0m0 4h0m.5-1h0m0 2.5h0m0 1.5h0m.5-8.5h0m0 3.5h0m.5 5h0m.5-8h0m.5 4h0m0 1h0m.5-5.5h0m0 2.5h0m0 4.5h0m0 1.5h0m.5-7h0m19.5 49h0m4.5 4.5h0m5-47.5h0m.5-3.5h0m0 1h0m0 3h0m1-5.5h0m0 5.5h0m.5-4.5h0m0 .5h0m0 3h0m11.5-6.5h0m0 3h0m0 2h0m.5-3h0m0 4.5h0m.5-2.5h0m0 2h0m0 2h0m.5-9h0m0 1.5h0m1 7.5h0m.5-9.5h0m0 1.5h0m0 2.5h0m0 .5h0m0 2h0m0 1.5h0m2.5 38h0m13-39h0m.5-1h0m.5 3h0m.5 .5h0m.5-5h0m.5 1h0m0 .5h0m0 3h0m.5-1.5h0m4.5-1h0m0 1h0m.5 2h0m.5-2.5h0m0 1.5h0m18-2.5h0m0 3h0m.5-2h0m0 1h0m1-2h0m0 4h0m.5-3h0m0 .5h0m10 50h0m5.5-51.5h0m.5-2.5h0m0 1h0m0 1.5h0m0 1h0m0 1h0m0 1h0m0 1h0m.5-5h0m1 5h0m.5-6h0m0 6h0m.5-6h0m0 3h0m.5-2.5h0m0 1h0m0 2.5h0m0 1h0m13.5-2h0m0 .5h0m14-1.5h0m0 2h0m.5 1h0m.5-3h0m.5 0h0m0 3.5h0m.5-2h0m9.5 136h0m3-142h0m0 1h0m0 1h0m0 .5h0m0 4h0m0 1h0m0 .5h0m.5-3.5h0m0 3.5h0m1-7.5h0m0 6h0m1-6.5h0m0 3h0m0 4.5h0m.5-5.5h0m0 1h0m0 .5h0m0 1.5h0m0 1.5h0m15.5-1.5h0m0 .5h0m.5-1.5h0m0 3.5h0m0 1h0m1.5-3.5h0m0 1.5h0m4.5 .5h0m0 1.5h0m.5-1.5h0m.5 .5h0m0 .5h0m1.5 92h0m12-40h0m7-62h0m.5 1h0m0 3.5h0m0 .5h0m0 4h0m.5-6h0m0 5.5h0m.5-8h0m0 3.5h0m.5-2h0m0 3h0m0 1h0m14.5-2h0m0 2.5h0m0 1h0m0 .5h0m.5-5h0m0 7h0m.5-3.5h0m1-3.5h0m0 1.5h0m0 1.5h0m0 .5h0m0 1.5h0m.5 1.5h0m5 1h0m11 78h0m13.5-81.5h0m0 3h0m.5-4.5h0m0 3.5h0m.5-1.5h0m0 .5h0m0 2h0m12-9h0m0 1h0m.5 2.5h0m0 1.5h0m0 2h0m0 1h0m0 1h0m.5-9h0m.5 0h0m.5 1.5h0m.5 4h0m0 2h0m.5-7.5h0m0 4h0m.5 4.5h0m1-8h0m0 1.5h0m0 .5h0m0 2h0m0 3h0m.5-2h0m0 1h0m0 2.5h0m27.5-6h0m0 3h0m0 1.5h0m.5-5.5h0m0 6h0m.5-4h0m0 1.5h0m.5-3h0m0 4.5h0m0 1h0m7-1.5h0m.5 0h0m0 1.5h0m0 .5h0m.5-1.5h0m4.5-6h0m.5-4h0m0 1.5h0m0 .5h0m0 1.5h0m0 1h0m0 3.5h0m.5 1h0m.5-2.5h0m0 4h0m.5-11h0m0 2h0m0 6.5h0m1-4.5h0m0 1.5h0m0 4.5h0m14.5-6h0m0 .5h0m0 4h0m0 3.5h0m.5-10h0m.5 1h0m0 1h0m0 2.5h0m0 4.5h0m0 1.5h0m.5-10.5h0m.5 3.5h0m0 2h0m0 4h0m.5-3h0m0 .5h0m5.5 2h0m0 .5h0m.5-.5h0m0 1h0m.5 0h0m19.5 .5h0m.5-2.5h0m16.5-13h0m0 5h0m0 3.5h0m0 2.5h0m0 3h0m.5-14h0m0 2h0m0 1.5h0m0 3h0m0 1h0m.5 4.5h0m.5-10h0m0 3.5h0m.5 4.5h0m0 3h0m.5-9.5h0m.5-3.5h0m0 1.5h0m0 4h0m0 .5h0m0 1.5h0m0 1h0m0 3.5h0m0 2.5h0m3 67.5h0m6-4.5h0m28-63.5h0m1-4.5h0m0 .5h0m0 1.5h0m0 3.5h0m.5-1.5h0m4-.5h0m.5-5h0m.5-4h0m0 3h0m0 4.5h0m0 3h0m0 1h0m.5-10h0m0 4.5h0m1-5.5h0m0 7.5h0m.5-5h0m0 1h0m0 .5h0m0 5h0m0 .5h0m15.5-5.5h0m0 2h0m0 .5h0m0 2.5h0m1-5h0m.5 .5h0m0 1h0m0 5h0m.5-2.5h0m0 .5h0m4.5-1h0m0 .5h0m0 3h0m1-3.5h0m0 2.5h0m10.5 37h0m6 18.5h0m3-59.5h0m0 2.5h0m.5-6h0m0 1.5h0m0 7h0m.5-10h0m0 1h0m0 4.5h0m0 1.5h0m.5-5h0m0 2h0m0 5h0m13.5 63.5h0m1-72h0m.5 3h0m0 2h0m0 1.5h0m0 .5h0m0 3h0m.5-11.5h0m0 5h0m0 1h0m.5-4h0m.5-1.5h0m0 7h0m0 2h0m2.5-1.5h0m0 2h0m.5-6h0m0 3h0m.5-3h0m0 3h0m0 1h0m12 0h0m0 1h0m0 .5h0m0 1.5h0m1-2h0m0 .5h0m14.5-.5h0m0 1h0m0 1h0m.5 .5h0m.5-2.5h0m.5 1.5h0m.5-1.5h0m12-9.5h0m0 1.5h0m0 2.5h0m0 3.5h0m0 2.5h0m.5-6.5h0m0 3h0m.5-4.5h0m0 10h0m.5-11.5h0m0 7.5h0m.5-3h0m0 5h0m.5-10h0m0 7.5h0m1-7h0m0 1.5h0m0 1h0m0 1.5h0m0 1h0m0 2h0m0 4h0m.5-10.5h0m0 6h0m0 3h0m14.5-6.5h0m0 1h0m1-1h0m0 .5h0m0 3h0m0 2.5h0m0 1.5h0m5.5 1h0m.5 57.5h0m14-58.5h0m0 1h0m.5-1.5h0m0 1h0m0 .5h0m6-7.5h0m0 2h0m0 1h0m0 .5h0m0 2h0m0 1h0m.5-9h0m0 5h0m.5-6.5h0m0 4h0m.5-7h0m0 4h0m.5-5h0m0 3.5h0m0 4.5h0m0 5h0m.5-5.5h0m1.5 99.5h0m1.5-22h0m4-8h0m4.5-24.5h0m2.5-46.5h0m.5 2h0m0 2h0m.5-6h0m0 7.5h0m.5 2h0m0 2h0m.5-9.5h0m.5 2h0m0 .5h0m0 3.5h0m.5-8.5h0m0 6.5h0m5 3.5h0m0 1h0m0 1h0m1-3h0m0 2h0m7-1h0m0 1.5h0m.5-3.5h0m0 1.5h0m.5-4.5h0m0 1.5h0m0 1h0m0 60.5h0m16.5 32h0m11-94.5h0m0 5.5h0m.5-14.5h0m0 .5h0m0 1h0m0 8.5h0m0 3.5h0m.5-9h0m0 1h0m0 3.5h0m0 3.5h0m.5-13h0m0 4.5h0m.5 .5h0m0 7.5h0m0 1.5h0m.5-4h0m.5-8h0m0 .5h0m0 4.5h0m.5 4.5h0m.5-7h0m0 2h0m0 1.5h0m0 6h0m0 1h0m.5-14.5h0m0 7h0m0 3.5h0m.5-9h0m0 .5h0m0 1h0m.5-3h0m0 4h0m0 4.5h0m0 1.5h0m0 .5h0m0 4.5h0m.5-3h0m10.5 109h0m8.5 114.5h0m9.5-220.5h0m.5 .5h0m.5-1h0m0 1h0m5-1.5h0m.5-3h0m0 1h0m0 3h0m.5-5h0m1 0h0m0 1.5h0m0 1.5h0m0 1h0m0 .5h0m3.5-.5h0m.5-9.5h0m0 3h0m0 1h0m0 1h0m0 1h0m0 1h0m1-7.5h0m0 1.5h0m0 5.5h0m0 1h0m0 1.5h0m0 .5h0m17.5-11h0m0 3h0m0 2.5h0m0 3.5h0m.5-9h0m0 1.5h0m0 9h0m.5-5.5h0m0 3h0m.5 .5h0m0 2.5h0m.5-10h0m0 .5h0m0 1.5h0m0 7.5h0m5.5-2.5h0m.5 1.5h0m0 .5h0m0 1.5h0m.5-4.5h0m0 1h0m0 1.5h0m0 1.5h0m6-1h0m.5-1h0m0 1h0m0 1h0m.5 .5h0m6 1h0m.5 0h0m5.5-9h0m0 4.5h0m.5-5h0m0 .5h0m0 2.5h0m0 .5h0m.5 .5h0m14.5-8.5h0m0 4.5h0m0 3h0m0 3h0m0 3h0m.5-2h0m.5-2.5h0m.5-8h0m0 2h0m0 2h0m0 2.5h0m0 5h0m.5-13.5h0m.5 12h0m.5-12h0m0 4h0m0 4h0m0 1h0m0 6h0m.5-15h0m0 6.5h0m0 4h0m.5-8.5h0m0 2h0m0 1h0m0 .5h0m3 89.5h0m25.5-82h0m0 1.5h0m.5-3h0m0 1.5h0m0 1h0m8.5 1h0m.5 0h0m6-15.5h0m0 1.5h0m0 .5h0m0 2.5h0m0 1h0m0 4h0m0 1.5h0m0 1h0m.5-12.5h0m.5 3.5h0m0 .5h0m0 4.5h0m0 5.5h0m.5-6.5h0m.5-8.5h0m0 2h0m0 9.5h0m.5 2h0m.5-7h0m0 6.5h0m0 1.5h0m0 2.5h0m.5-13h0m0 1h0m0 5h0m.5-9h0m0 .5h0m0 1h0m14.5 6.5h0m0 5h0m.5-6h0m0 .5h0m0 4h0m0 3.5h0m0 1h0m.5-7h0m5 5h0m1 2h0m19.5-5.5h0m0 4h0m.5-9.5h0m0 6.5h0m0 1.5h0m.5-6h0m0 2.5h0m.5-2h0m.5-1h0m0 3.5h0m0 1h0m0 1.5h0m15-4h0m0 1h0m0 5h0m.5-9.5h0m0 .5h0m0 1h0m0 6.5h0m.5-8h0m0 5.5h0m.5-5h0m0 5h0m0 3.5h0m0 1.5h0m.5-8.5h0m0 2h0m7 6.5h0m0 .5h0m6-4.5h0m0 1.5h0m0 2.5h0m0 48.5h0m.5-50h0m.5-1.5h0m0 3.5h0m.5-5h0m1 0h0m0 3.5h0m14-2h0m0 1h0m0 .5h0m.5-3h0m0 1.5h0m0 .5h0m0 1.5h0m0 1.5h0m13.5-14.5h0m0 4.5h0m0 1h0m0 3.5h0m.5-6h0m0 7.5h0m0 1h0m.5-11.5h0m0 1.5h0m0 5h0m0 7h0m.5-10.5h0m0 10.5h0m.5-7.5h0m0 3h0m.5-8h0m0 9h0m0 3.5h0m.5-9h0m0 3h0m0 2.5h0m.5-9.5h0m0 11.5h0m0 .5h0m.5-12h0m0 .5h0m0 1.5h0m0 .5h0m0 2h0m.5-.5h0m0 .5h0m0 3h0m0 3h0m0 .5h0m15-7.5h0m.5 3h0m12.5 3.5h0m0 1.5h0m0 .5h0m0 1h0m.5 1h0m1-4h0m0 4h0m.5-4h0m0 2.5h0m4.5 .5h0m0 1h0m.5-1h0m.5 .5h0m0 .5h0m5 95.5h0m1.5-105.5h0m0 3.5h0m.5 5h0m.5-9.5h0m0 7.5h0m0 .5h0m.5-8h0m0 .5h0m0 4.5h0m0 .5h0m0 2h0m0 3h0m.5-2h0m12.5 62h0m2-76h0m0 8h0m0 .5h0m.5 1.5h0m0 2.5h0m0 3h0m1-16.5h0m0 2.5h0m.5 3.5h0m0 1h0m0 3h0m0 2h0m0 2.5h0m6 1h0m0 2h0m1-2h0m0 1.5h0m7.5-6.5h0m0 3h0m.5-1.5h0m0 3h0m0 2h0m.5-5.5h0m0 3h0m2 39h0m2.5 16h0m23-60.5h0m.5-.5h0m0 2h0m0 2h0m0 2h0m0 1h0m1 2h0m.5-9h0m0 3.5h0m0 5.5h0m.5-3h0m.5-4.5h0m.5-1.5h0m0 8.5h0m.5-3.5h0m0 2h0m.5-6h0m0 1h0m0 3h0m.5-2h0m0 .5h0m20.5 41h0m8 48.5h0m6.5-87h0m0 .5h0m0 1h0m0 .5h0m1-2h0m0 1.5h0m5-6h0m.5 1.5h0m0 4h0m.5-.5h0m0 1.5h0m1.5-6.5h0m0 3.5h0m0 .5h0m0 1h0m0 .5h0m.5-4h0m0 1h0m0 .5h0m16 3.5h0m0 1h0m1 0h0m13-4h0m0 3h0m0 .5h0m.5-3h0m.5 3h0m5.5 78.5h0m6.5-83.5h0m0 3h0m.5-3h0m0 .5h0m0 1.5h0m.5-3.5h0m0 4h0m0 .5h0m8.5 78h0" stroke="#ffa500" stroke-width="3.4" stroke-linecap="round" fill="none" clip-path="url(#c1)"/>
<path d="M105.5 66.97H1361" stroke="#008000" stroke-width="2.08"/>
<path d="M162.3 321.5V35.5" stroke="#800080" stroke-width="1.85" stroke-dasharray="1.85 3.67" stroke-dashoffset="-0.3"/>
<path d="M1303.0 321.5V35.5" stroke="#800080" stroke-width="1.85" stroke-dasharray="1.85 3.67" stroke-dashoffset="-0.3"/>
<text x="715.26" y="312.10" font-size="14.72" textLength="34.50" lengthAdjust="spacingAndGlyphs">4961</text>
<path d="M105.5 35.5V321.5H1485.5V35.5H105.5" fill="none" stroke="#000" stroke-width="1.1"/>
<path d="M162.5 321.5v4.9M386.5 321.5v4.9M610.5 321.5v4.9M833.5 321.5v4.9M1057.5 321.5v4.9M1281.5 321.5v4.9" stroke="#000" stroke-width="1.1"/>
<text x="158.42" y="342.00" font-size="14.72" textLength="8.14" lengthAdjust="spacingAndGlyphs">0</text>
<text x="369.20" y="342.00" font-size="14.72" textLength="34.58" lengthAdjust="spacingAndGlyphs">5000</text>
<text x="588.44" y="342.00" font-size="14.72" textLength="43.53" lengthAdjust="spacingAndGlyphs">10000</text>
<text x="811.44" y="342.00" font-size="14.72" textLength="43.53" lengthAdjust="spacingAndGlyphs">15000</text>
<text x="1035.59" y="342.00" font-size="14.72" textLength="43.63" lengthAdjust="spacingAndGlyphs">20000</text>
<text x="1259.59" y="342.00" font-size="14.72" textLength="43.63" lengthAdjust="spacingAndGlyphs">25000</text>
<path d="M105.5 321.50h-4.9M105.5 274.50h-4.9M105.5 227.50h-4.9M105.5 180.50h-4.9M105.5 133.50h-4.9M105.5 86.50h-4.9M105.5 39.50h-4.9" stroke="#000" stroke-width="1.1"/>
<text x="73.45" y="325.70" font-size="14.72" textLength="21.32" lengthAdjust="spacingAndGlyphs">9.2</text>
<text x="72.83" y="278.70" font-size="14.72" textLength="21.63" lengthAdjust="spacingAndGlyphs">9.4</text>
<text x="72.92" y="231.70" font-size="14.72" textLength="21.76" lengthAdjust="spacingAndGlyphs">9.6</text>
<text x="73.01" y="184.70" font-size="14.72" textLength="21.67" lengthAdjust="spacingAndGlyphs">9.8</text>
<text x="64.33" y="137.70" font-size="14.72" textLength="30.26" lengthAdjust="spacingAndGlyphs">10.0</text>
<text x="64.80" y="90.70" font-size="14.72" textLength="29.97" lengthAdjust="spacingAndGlyphs">10.2</text>
<text x="64.18" y="43.70" font-size="14.72" textLength="30.28" lengthAdjust="spacingAndGlyphs">10.4</text>
<text x="696.21" y="26.90" font-size="16.42" textLength="196.83" lengthAdjust="spacingAndGlyphs">AGASC ID 395193976.0</text>
<rect x="1361.5" y="42.5" width="117.0" height="27.0" rx="2.8" fill="#fff" fill-opacity="0.8" stroke="#cccccc" stroke-width="1.1"/>
<path d="M1366 54H1396" stroke="#008000" stroke-width="2.08"/>
<text x="1406.67" y="58.80" font-size="14.72" textLength="30.38" lengthAdjust="spacingAndGlyphs">mag</text>
<text x="1437.38" y="60.70" font-size="10.30" textLength="33.75" lengthAdjust="spacingAndGlyphs" font-style="italic">AGASC</text>
<rect x="1348.5" y="247.5" width="130.0" height="67.0" rx="2.8" fill="#fff" fill-opacity="0.8" stroke="#cccccc" stroke-width="1.1"/>
<circle cx="1367.5" cy="260.5" r="2.1" fill="#ff0000"/>
<text x="1392.39" y="264.10" font-size="14.72" textLength="47.42" lengthAdjust="spacingAndGlyphs">not OK</text>
<circle cx="1367.5" cy="281.5" r="2.1" fill="#ffa500"/>
<text x="1392.09" y="285.10" font-size="14.72" textLength="79.78" lengthAdjust="spacingAndGlyphs">Highlighted</text>
<circle cx="1367.5" cy="302.5" r="2.1" fill="#000"/>
<text x="1392.74" y="306.10" font-size="14.72" textLength="20.37" lengthAdjust="spacingAndGlyphs">OK</text>
<path d="M162 507.5h0m0 3h0m0 6h0m0 2.5h0m0 .5h0m.5-10h0m0 5.5h0m0 2.5h0m0 4.5h0m0 2.5h0m0 3h0m0 6.5h0m0 1h0m.5-19.5h0m0 3.5h0m0 4h0m0 6h0m0 2.5h0m.5-29h0m0 9.5h0m.5-23.5h0m0 18h0m0 11h0m0 8h0m0 15.5h0m.5-52.5h0m0 11h0m0 3.5h0m0 1h0m0 3h0m0 1h0m0 2h0m0 1.5h0m0 9.5h0m0 8.5h0m0 5h0m.5-41.5h0m0 3.5h0m0 1h0m0 7.5h0m0 10h0m0 3h0m0 3h0m0 1.5h0m0 2.5h0m0 2h0m.5-25.5h0m0 10h0m.5-38h0m0 22h0m.5-32.5h0m0 6.5h0m0 22h0m0 7.5h0m0 5.5h0m0 1.5h0m0 2.5h0m0 2.5h0m0 6.5h0m0 1.5h0m0 4.5h0m0 2h0m0 2.5h0m0 1h0m0 9.5h0m.5-73h0m0 9h0m0 5.5h0m0 1.5h0m0 4.5h0m0 1.5h0m0 2h0m0 1h0m0 2.5h0m0 8.5h0m0 1h0m0 11.5h0m0 2h0m0 1.5h0m0 4h0m0 1.5h0m0 9h0m0 .5h0m0 6.5h0m0 1.5h0m0 1.5h0m.5-76h0m0 1.5h0m0 10h0m0 18.5h0m0 1.5h0m0 11h0m.5-2.5h0m0 29h0m0 32.5h0m.5-75h0m0 2h0m0 5.5h0m0 10.5h0m0 1.5h0m0 8h0m0 4.5h0m0 2.5h0m0 2h0m0 1.5h0m0 3.5h0m0 4h0m0 2.5h0m0 15.5h0m0 .5h0m0 27.5h0m.5-109.5h0m0 14h0m0 9h0m0 4h0m0 1h0m0 1h0m0 1h0m0 10.5h0m0 2.5h0m0 4h0m0 13.5h0m0 3h0m0 3h0m0 2h0m0 2.5h0m0 .5h0m0 2.5h0m0 .5h0m0 8h0m0 4h0m0 24.5h0m.5-104.5h0m0 9.5h0m0 16.5h0m0 5.5h0m0 7.5h0m0 6h0m0 4.5h0m0 2h0m0 11.5h0m.5-40h0m0 5h0m0 6.5h0m0 7.5h0m0 1.5h0m0 11h0m0 12h0m0 25.5h0m0 2h0m.5-46.5h0m0 6.5h0m0 4h0m.5-39h0m0 10h0m0 2h0m0 2h0m.5-25.5h0m0 .5h0m0 12h0m0 4.5h0m0 9h0m0 4h0m0 1.5h0m0 11.5h0m0 1.5h0m0 5h0m0 12.5h0m.5-72.5h0m0 .5h0m0 3h0m0 10.5h0m0 6.5h0m0 .5h0m0 2h0m0 1.5h0m0 .5h0m0 1.5h0m0 1h0m0 2.5h0m0 1h0m0 1.5h0m0 1h0m0 4.5h0m0 1h0m0 1.5h0m0 3h0m0 3.5h0m0 2h0m0 1.5h0m0 6h0m0 10h0m.5-47h0m0 26.5h0m.5 14.5h0m.5-25h0m0 7.5h0m0 3.5h0m0 4h0m0 1.5h0m0 3.5h0m0 3h0m.5-6.5h0m0 2h0m0 4h0m0 5h0m0 2.5h0m0 2h0m0 5.5h0m0 4.5h0m.5-37h0m0 1.5h0m0 3.5h0m0 3.5h0m0 15.5h0m.5-21h0m0 3h0m0 9h0m0 4.5h0m0 1h0m.5-23h0m0 11h0m0 4.5h0m0 4h0m0 6h0m0 2h0m1-40.5h0m0 43h0m.5-45.5h0m0 5h0m0 13h0m0 4.5h0m0 3h0m0 1.5h0m0 2.5h0m0 5h0m0 4.5h0m0 8.5h0m0 1.5h0m0 4h0m0 5h0m0 2h0m.5-44h0m0 4h0m0 2h0m0 3.5h0m0 1.5h0m0 5h0m0 4h0m0 1h0m0 5h0m0 3h0m0 2.5h0m0 2h0m0 2.5h0m0 4h0m0 6.5h0m0 2h0m.5-50h0m0 27h0m0 16h0m1-48h0m0 2.5h0m0 11.5h0m0 6h0m0 4.5h0m0 5h0m0 6.5h0m0 10h0m.5-51.5h0m0 5h0m0 1.5h0m0 6h0m0 2h0m0 4h0m0 3h0m0 5h0m0 6h0m0 5.5h0m0 10h0m0 18h0m.5-79h0m0 11h0m0 3h0m0 1h0m0 17.5h0m0 8.5h0m0 1.5h0m0 4h0m0 13.5h0m0 11h0m.5-67.5h0m0 14.5h0m0 5.5h0m0 3h0m0 2.5h0m0 5h0m0 2h0m0 1h0m0 16h0m0 3h0m0 1h0m0 2h0m0 6h0m0 2h0m0 1.5h0m0 6.5h0m0 18.5h0m.5-68.5h0m0 4.5h0m0 15.5h0m0 3.5h0m0 1h0m0 1h0m0 1h0m0 1h0m0 1h0m0 2h0m0 4.5h0m0 3h0m0 .5h0m0 1.5h0m0 7h0m0 6.5h0m0 12.5h0m.5-73.5h0m0 2.5h0m0 22h0m0 15h0m0 12h0m.5-87.5h0m0 16h0m0 16.5h0m0 5h0m0 2h0m0 2h0m0 4.5h0m0 2.5h0m0 1.5h0m0 3h0m0 2h0m0 2.5h0m0 .5h0m0 4.5h0m0 28h0m.5-95.5h0m0 13h0m0 .5h0m0 1.5h0m0 12.5h0m0 6h0m0 2.5h0m0 71h0m0 8h0m.5-113h0m0 2h0m0 19h0m.5-7.5h0m0 24.5h0m0 26.5h0m0 9h0m0 4h0m0 1h0m0 12h0m0 5h0m.5-70h0m0 6h0m0 10.5h0m0 4h0m0 6h0m0 2.5h0m0 5.5h0m0 3h0m0 3.5h0m0 1h0m0 2.5h0m0 1.5h0m0 3h0m0 1.5h0m0 4h0m0 1.5h0m0 1.5h0m0 2h0m0 4h0m0 4.5h0m0 2h0m0 12h0m0 .5h0m0 6h0m.5-87h0m0 13.5h0m0 7.5h0m0 3h0m0 5.5h0m0 5.5h0m0 6h0m0 4h0m0 9h0m0 3h0m0 1h0m0 .5h0m0 4h0m0 7.5h0m0 2.5h0m0 2.5h0m0 2h0m.5-96h0m0 10h0m0 6h0m0 5.5h0m0 3.5h0m0 4.5h0m0 3.5h0m0 3h0m0 5.5h0m0 4.5h0m0 1.5h0m0 2.5h0m0 6.5h0m0 9h0m0 2.5h0m0 1h0m0 6h0m0 10h0m.5-95.5h0m0 15.5h0m0 1h0m0 9.5h0m0 5.5h0m0 .5h0m0 1.5h0m0 4h0m0 1.5h0m0 3h0m0 6h0m0 2h0m0 .5h0m0 1.5h0m0 .5h0m0 1.5h0m0 18h0m0 9h0m.5-17.5h0m0 9.5h0m.5-7h0m.5-46.5h0m0 25.5h0m0 .5h0m0 10h0m0 3.5h0m0 1.5h0m0 7h0m0 1.5h0m0 8.5h0m0 18.5h0m.5-57.5h0m0 3h0m0 1h0m0 14.5h0m0 5.5h0m0 2h0m0 5h0m0 2h0m0 14h0m0 1.5h0m0 15.5h0m1.5-73.5h0m0 3.5h0m0 8h0m0 4.5h0m0 1h0m0 4h0m0 1.5h0m0 1.5h0m0 1h0m0 6h0m0 4h0m0 3h0m0 7h0m.5-38h0m0 11h0m0 4h0m0 1.5h0m0 4h0m0 5h0m0 4.5h0m0 3h0m0 2h0m0 7.5h0m0 2h0m0 5.5h0m.5-44h0m0 3h0m0 11h0m0 2.5h0m0 13.5h0m0 3.5h0m0 2h0m0 7h0m.5-49.5h0m0 13h0m0 6h0m0 4h0m0 .5h0m0 1h0m0 10.5h0m0 10h0m0 1h0m0 1h0m0 1.5h0m0 2h0m0 .5h0m0 2.5h0m.5-28h0m0 4h0m0 1.5h0m0 1.5h0m0 6h0m0 5.5h0m0 13.5h0m.5-38h0m0 8.5h0m0 5.5h0m0 3h0m0 3h0m0 2h0m1-35.5h0m0 19.5h0m.5-38h0m0 12h0m0 8.5h0m0 .5h0m0 1h0m0 8.5h0m0 2h0m0 1.5h0m0 .5h0m0 5h0m0 7.5h0m0 6h0m0 4h0m0 11h0m.5-56h0m0 1h0m0 3.5h0m0 8.5h0m0 1.5h0m0 .5h0m0 2h0m0 2.5h0m0 4h0m0 7h0m.5-19h0m0 4.5h0m0 11h0m0 6.5h0m0 29.5h0m.5-92h0m0 10.5h0m0 25.5h0m0 3.5h0m0 14h0m0 8h0m0 3h0m0 3.5h0m0 3.5h0m0 1h0m0 1h0m0 4h0m0 2h0m0 1h0m0 4.5h0m0 7h0m0 .5h0m.5-61.5h0m0 27h0m0 23h0m.5-54.5h0m0 15h0m0 6h0m0 3h0m0 .5h0m0 8h0m0 19.5h0m0 1.5h0m0 6.5h0m.5-98.5h0m0 2.5h0m0 3h0m0 38h0m0 5h0m0 1h0m0 5.5h0m0 1.5h0m0 2h0m0 3h0m0 3h0m0 3h0m0 1h0m0 5h0m0 1h0m0 2h0m0 2h0m0 3.5h0m0 .5h0m0 3h0m0 1h0m0 7h0m0 6h0m.5-105.5h0m0 3.5h0m0 10h0m0 1h0m0 35h0m0 4h0m0 3.5h0m0 20.5h0m0 8.5h0m0 4.5h0m.5-90.5h0m0 6.5h0m0 11h0m0 2.5h0m0 1h0m0 .5h0m0 50h0m0 5h0m.5-74.5h0m0 12.5h0m0 4h0m0 3.5h0m.5-18.5h0m0 6.5h0m0 53h0m0 3.5h0m0 14.5h0m0 2h0m.5-77.5h0m0 2h0m0 5h0m0 3.5h0m0 6h0m0 16h0m0 2.5h0m0 7h0m0 3.5h0m0 3h0m0 4.5h0m0 3.5h0m0 6.5h0m0 1h0m0 4h0m0 5.5h0m0 7h0m0 7.5h0m0 4h0m.5-97.5h0m0 44.5h0m0 1h0m0 10h0m0 1h0m0 8h0m0 12h0m0 7h0m.5-83.5h0m0 1h0m0 1.5h0m0 1.5h0m0 5h0m0 1h0m0 7h0m0 2h0m0 2h0m0 10h0m0 17h0m0 1.5h0m0 11h0m0 3.5h0m0 11h0m0 8h0m0 8h0m0 6.5h0m0 13h0m.5-92.5h0m0 25.5h0m0 1.5h0m0 4.5h0m0 3h0m0 2.5h0m0 1.5h0m0 10h0m0 5h0m0 1h0m0 .5h0m0 1h0m0 1.5h0m0 3.5h0m0 7.5h0m0 1h0m0 1h0m0 1.5h0m0 2.5h0m.5 2h0m0 3.5h0m.5-63.5h0m0 9.5h0m0 6.5h0m0 9h0m0 2h0m0 8.5h0m0 33.5h0m.5-61.5h0m0 9.5h0m0 2h0m0 4.5h0m0 3h0m0 2h0m0 1.5h0m0 1h0m0 1h0m0 2h0m0 .5h0m0 8.5h0m0 1h0m0 1h0m.5-57.5h0m0 32.5h0m0 5.5h0m1.5 21h0m0 1h0m0 2h0m.5-7h0m0 2h0m0 10h0m.5-27.5h0m0 7.5h0m0 3h0m0 2.5h0m0 1.5h0m0 3h0m0 4h0m0 3h0m0 1h0m0 1h0m0 1h0m0 2h0m.5-23h0m0 13.5h0m0 11h0m1-28.5h0m0 1.5h0m0 37h0m0 4.5h0m0 2h0m0 1.5h0m0 7h0m.5-44h0m0 2h0m0 2h0m0 3.5h0m0 3.5h0m0 2h0m0 1.5h0m0 2.5h0m0 4h0m0 3h0m0 .5h0m0 4h0m0 1.5h0m0 .5h0m0 2.5h0m0 10.5h0m0 1.5h0m0 11h0m.5-68h0m0 15h0m0 6.5h0m0 7.5h0m0 3h0m1-70h0m0 24h0m0 3.5h0m0 18.5h0m0 1h0m0 1h0m0 3h0m0 5h0m0 5h0m0 5.5h0m0 15h0m0 12h0m.5-71.5h0m0 3h0m0 1h0m0 3.5h0m0 7h0m0 3h0m0 1h0m0 3.5h0m0 1h0m0 2h0m0 11.5h0m0 10.5h0m0 2h0m0 4.5h0m0 21h0m0 4.5h0m.5-73.5h0m0 1.5h0m0 .5h0m0 2h0m0 .5h0m0 2h0m0 5.5h0m0 2h0m0 1.5h0m0 2h0m0 3.5h0m0 2.5h0m0 12h0m0 1h0m0 9h0m0 5h0m0 3.5h0m.5-63.5h0m0 19.5h0m0 16.5h0m0 7h0m0 7h0m0 3.5h0m0 3.5h0m0 3h0m0 2.5h0m0 3.5h0m0 4h0m0 3.5h0m0 3.5h0m.5-62.5h0m0 20.5h0m0 3h0m0 2h0m0 8h0m0 7h0m.5-57h0m0 4h0m0 21.5h0m0 17h0m0 4h0m0 40h0m.5-53h0m0 3h0m0 8h0m0 4.5h0m0 1.5h0m0 3h0m0 7.5h0m.5-38.5h0m0 37h0m.5-31h0m0 .5h0m0 4h0m0 5.5h0m.5-15h0m0 3.5h0m0 3.5h0m0 5h0m0 5.5h0m0 5h0m0 4.5h0m.5-17h0m0 3h0m0 7h0m0 4h0m0 2.5h0m1-40.5h0m0 9h0m0 7h0m0 13.5h0m.5-30h0m0 6.5h0m0 1h0m0 8.5h0m0 2h0m0 2h0m0 2.5h0m0 4.5h0m0 3.5h0m0 .5h0m0 1h0m0 .5h0m0 6h0m.5-40.5h0m0 3.5h0m0 1h0m0 1h0m0 3h0m0 3.5h0m0 1h0m0 1h0m0 1h0m0 1h0m0 8.5h0m0 1h0m0 2h0m0 3h0m0 7.5h0m.5-16h0m.5-23.5h0m.5-6.5h0m0 44.5h0m0 1h0m0 2h0m.5-68.5h0m0 22h0m0 1.5h0m0 2h0m0 7h0m0 2h0m0 1.5h0m0 2h0m0 1.5h0m0 1h0m0 4.5h0m0 1h0m0 2h0m0 1.5h0m0 3h0m0 3.5h0m0 1.5h0m0 2h0m0 4.5h0m0 12h0m.5-54h0m0 6h0m0 1.5h0m0 6.5h0m0 1h0m0 5h0m0 27.5h0m0 12h0m.5-38.5h0m0 6.5h0m0 5.5h0m0 8h0m0 2.5h0m0 .5h0m0 3.5h0m0 8h0m0 1.5h0m0 1.5h0m0 20.5h0m0 6.5h0m.5-79.5h0m0 5h0m0 16.5h0m0 2.5h0m0 7.5h0m0 1.5h0m0 2.5h0m0 8h0m0 3.5h0m0 2h0m0 2.5h0m0 3h0m0 4h0m0 1.5h0m0 8.5h0m.5-40h0m0 42h0m1-44.5h0m0 6.5h0m0 6.5h0m0 3h0m0 2.5h0m0 9h0m0 5.5h0m.5-89h0m0 3h0m0 2h0m0 2.5h0m0 7h0m0 2h0m0 2.5h0m0 6h0m0 15.5h0m0 2.5h0m0 3h0m0 1.5h0m0 4.5h0m0 3h0m0 1h0m0 1.5h0m0 11.5h0m0 3.5h0m0 3h0m0 4.5h0m0 .5h0m0 3.5h0m0 1h0m0 2.5h0m0 7h0m0 8.5h0m.5-99.5h0m0 5h0m0 3h0m0 2.5h0m0 48h0m0 14.5h0m.5-71h0m0 58.5h0m0 29.5h0m.5-96h0m0 18h0m0 1.5h0m0 35h0m0 2h0m0 12h0m0 4h0m0 1h0m0 5h0m0 4.5h0m0 14.5h0m0 2h0m.5-89h0m0 19h0m0 13h0m0 5.5h0m0 1h0m0 11h0m0 3.5h0m0 2.5h0m0 4h0m0 .5h0m0 5.5h0m0 1.5h0m0 7.5h0m0 4h0m0 2h0m.5-67.5h0m0 7h0m0 7h0m0 6.5h0m0 1h0m0 1h0m0 4.5h0m0 1.5h0m0 .5h0m0 11h0m0 4h0m.5-49.5h0m0 6.5h0m0 4.5h0m0 6h0m0 .5h0m0 1.5h0m0 4h0m0 2.5h0m0 1h0m0 1.5h0m0 1h0m0 4h0m0 4.5h0m0 .5h0m0 2h0m0 3.5h0m.5-56h0m0 43h0m0 17.5h0m.5-53.5h0m0 40.5h0m0 15.5h0m0 3.5h0m0 1.5h0m0 1h0m0 4.5h0m.5-74h0m0 1h0m0 4.5h0m0 8.5h0m0 3.5h0m0 27.5h0m0 15h0m0 5h0m0 7.5h0m0 4h0m0 5h0m.5-10.5h0m0 4.5h0m0 2.5h0m0 1h0m0 7h0m.5-3h0m0 3.5h0m.5-68h0m0 1.5h0m0 .5h0m0 1.5h0m0 5.5h0m0 8h0m0 5h0m0 1h0m0 4h0m0 3.5h0m0 1h0m0 2.5h0m0 4.5h0m0 4.5h0m0 1h0m0 2.5h0m0 14h0m.5-56h0m0 8h0m0 2h0m0 .5h0m0 2h0m0 1.5h0m0 5h0m0 1h0m0 .5h0m0 4h0m0 4h0m0 1h0m0 1.5h0m0 .5h0m0 1h0m0 3.5h0m0 7h0m0 1h0m0 6.5h0m0 8h0m0 1h0m.5-53.5h0m0 8.5h0m0 6.5h0m0 24.5h0m0 7h0m0 24.5h0m0 5h0m.5-75h0m0 32.5h0m0 8h0m0 1h0m0 1.5h0m0 4h0m0 11h0m0 3h0m0 12.5h0m.5-72.5h0m0 14.5h0m0 12h0m0 3h0m0 4h0m0 12.5h0m0 2.5h0m0 5h0m0 1h0m0 2h0m0 5h0m0 3.5h0m0 1h0m0 8.5h0m.5-119h0m0 8h0m0 .5h0m0 5h0m0 2h0m0 47h0m0 21h0m0 11h0m0 2.5h0m.5-87.5h0m0 2.5h0m0 4h0m0 1h0m0 47h0m0 4.5h0m0 2.5h0m0 4h0m0 4h0m0 2h0m0 6.5h0m0 2h0m.5-28.5h0m0 12.5h0m0 11.5h0m.5-89.5h0m0 4.5h0m0 2h0m0 6.5h0m0 3h0m0 3h0m.5-15.5h0m0 4h0m0 1.5h0m0 1.5h0m0 3.5h0m0 67h0m.5 1h0m0 3h0m0 2h0m0 .5h0m0 4h0m0 8.5h0m.5-21.5h0m0 14.5h0m0 1.5h0m.5-75h0m0 18h0m0 38.5h0m0 5.5h0m0 1h0m0 2h0m0 6.5h0m0 2.5h0m.5-81h0m0 10h0m0 14h0m.5-25h0m0 4.5h0m0 4.5h0m0 35h0m.5-39.5h0m0 2h0m0 14.5h0m0 5h0m0 3.5h0m0 9.5h0m0 1.5h0m0 3.5h0m0 .5h0m0 3h0m0 9.5h0m0 3h0m0 .5h0m0 8h0m0 23h0m0 .5h0m.5-70.5h0m0 26.5h0m0 4.5h0m0 7.5h0m0 1.5h0m0 4.5h0m0 12.5h0m.5-28.5h0m.5 4h0m0 1.5h0m0 7.5h0m0 1h0m0 7h0m0 6h0m0 5.5h0m0 6.5h0m.5-49.5h0m0 2h0m0 3h0m0 1.5h0m0 19.5h0m0 .5h0m0 1h0m0 1.5h0m0 1.5h0m0 1h0m0 1h0m0 1h0m0 2h0m0 3h0m0 7h0m0 6.5h0m.5-41.5h0m0 2h0m0 6h0m0 1h0m0 2h0m.5-5h0m0 36h0m.5-47h0m0 24.5h0m0 4.5h0m.5-39h0m0 18.5h0m0 4h0m0 1.5h0m0 5h0m0 18h0m0 8h0m0 1h0m0 7.5h0m0 7h0m.5-65h0m0 4h0m0 17h0m0 1.5h0m0 2.5h0m0 2h0m0 3h0m0 1.5h0m0 4h0m0 1.5h0m0 6h0m0 4.5h0m0 8h0m.5-44.5h0m.5-14h0m0 5.5h0m0 2.5h0m0 4h0m0 5h0m0 1h0m0 3.5h0m0 6h0m0 8h0m0 2h0m0 .5h0m0 3h0m0 1.5h0m0 1.5h0m0 4h0m0 13.5h0m.5-61h0m0 22h0m0 12h0m0 18.5h0m.5-56h0m0 7.5h0m0 1.5h0m0 4h0m0 4h0m0 1.5h0m0 9.5h0m0 2.5h0m0 2.5h0m0 1h0m0 .5h0m0 2h0m0 12h0m.5-56.5h0m0 3h0m0 6h0m0 4.5h0m0 6h0m0 11.5h0m0 23h0m.5-48h0m.5-42h0m0 47h0m0 7h0m0 4h0m0 13h0m.5-72h0m0 4h0m0 3h0m0 2.5h0m0 2.5h0m0 2.5h0m0 1.5h0m0 2h0m0 26.5h0m0 1.5h0m0 5h0m0 9h0m0 1h0m0 .5h0m0 1h0m0 2h0m0 1h0m0 1.5h0m0 3h0m0 3.5h0m0 7h0m.5-77h0m0 7.5h0m0 27h0m0 1h0m0 10h0m0 1.5h0m0 .5h0m0 1.5h0m0 .5h0m0 4h0m0 1h0m0 1h0m0 .5h0m0 4h0m0 11h0m0 7.5h0m0 6h0m.5-71h0m0 26.5h0m0 4h0m0 7.5h0m0 11.5h0m.5-67h0m0 5.5h0m0 1.5h0m0 2.5h0m0 5h0m0 1h0m0 5h0m0 1h0m.5-19.5h0m0 11h0m.5-13.5h0m0 4.5h0m0 5.5h0m0 .5h0m0 9h0m.5-19h0m0 5h0m0 .5h0m0 1.5h0m0 6h0m0 1h0m0 4h0m0 4h0m0 66.5h0m.5-14h0m0 5.5h0m0 3.5h0m0 2.5h0m0 3.5h0m0 3h0m0 5h0m.5-17.5h0m0 1.5h0m0 .5h0m0 3h0m0 1.5h0m0 1.5h0m0 3h0m0 2.5h0m0 1.5h0m0 1.5h0m0 1.5h0m0 2.5h0m0 3.5h0m0 2h0m.5-29.5h0m0 13h0m0 1.5h0m0 2.5h0m0 1.5h0m1 17.5h0m.5-47h0m0 17.5h0m0 1h0m0 2h0m0 11h0m0 8h0m0 1.5h0m0 2h0m0 2.5h0m0 2.5h0m0 4h0m0 8.5h0m.5-67.5h0m0 8.5h0m0 3.5h0m0 .5h0m0 2h0m0 2h0m0 5h0m0 7h0m0 2h0m0 2h0m0 1.5h0m0 2.5h0m0 4h0m0 1h0m0 2h0m0 2h0m0 2.5h0m0 2.5h0m0 11.5h0m0 3.5h0m.5-79h0m0 2h0m0 14.5h0m0 1.5h0m0 6.5h0m0 23h0m0 6.5h0m.5-44h0m0 6h0m0 3h0m0 4h0m0 4.5h0m0 3.5h0m0 2h0m0 2.5h0m0 4.5h0m0 10h0m0 7h0m0 6.5h0m.5-33.5h0m0 8h0m0 8h0m0 9.5h0m0 2.5h0m1-50.5h0m0 10h0m0 2.5h0m0 1h0m0 4h0m0 2h0m0 3h0m0 1.5h0m0 1h0m0 .5h0m0 2h0m0 1.5h0m0 3h0m0 .5h0m0 1.5h0m0 .5h0m0 1h0m0 1h0m0 1.5h0m0 1.5h0m0 4h0m0 1h0m0 .5h0m.5-39.5h0m0 5.5h0m0 3h0m0 2h0m0 3.5h0m0 21.5h0m.5 1h0m1-35h0m0 3h0m0 5.5h0m0 3h0m0 3h0m0 1.5h0m0 7.5h0m.5-28h0m0 1h0m0 5h0m0 3.5h0m0 6h0m0 8.5h0m0 2h0m0 7.5h0m0 2.5h0m0 8h0m.5-33.5h0m0 2h0m0 8.5h0m0 .5h0m.5-19h0m0 20.5h0m0 2h0m.5-27.5h0m0 1.5h0m0 2h0m0 7.5h0m0 5h0m0 3.5h0m0 9.5h0m0 3.5h0m0 5.5h0m0 15h0m.5-72h0m0 26h0m0 .5h0m0 1.5h0m0 5h0m0 4h0m0 2.5h0m0 1h0m0 12h0m0 1h0m0 19.5h0m0 .5h0m.5-59h0m0 29.5h0m0 5.5h0m.5-28h0m0 8.5h0m0 1h0m0 15h0m0 1h0m0 3h0m0 5h0m0 1.5h0m0 2.5h0m.5-45h0m0 6h0m0 3.5h0m0 5h0m0 .5h0m0 4.5h0m0 1h0m0 .5h0m0 3.5h0m0 1.5h0m0 2h0m0 3h0m0 4h0m0 4h0m0 1h0m0 4h0m0 5.5h0m0 2.5h0m0 2h0m0 2h0m.5-46.5h0m0 40h0m1-36.5h0m0 17h0m.5-25h0m0 13h0m0 4.5h0m0 2h0m0 2.5h0m0 3h0m0 4h0m0 3.5h0m0 1h0m0 13h0m.5-46h0m0 9h0m0 2h0m0 1.5h0m0 4.5h0m0 .5h0m0 5h0m0 13.5h0m.5-34h0m0 12.5h0m0 .5h0m0 4h0m.5-72h0m0 1.5h0m0 12.5h0m0 7.5h0m.5-22h0m0 7.5h0m0 .5h0m0 1.5h0m0 1h0m0 3.5h0m0 60.5h0m0 17h0m0 4h0m.5-75.5h0m0 49h0m0 11h0m0 12.5h0m0 1h0m0 1h0m0 5h0m0 1h0m0 2h0m0 1h0m0 1h0m0 2.5h0m0 1.5h0m0 1h0m0 3h0m0 13h0m0 1h0m.5-126h0m0 5h0m0 11h0m0 1h0m0 65h0m0 .5h0m0 4.5h0m0 4h0m0 4.5h0m0 2h0m0 5h0m0 5.5h0m0 1h0m0 1.5h0m0 1h0m0 3h0m0 7h0m.5-114h0m0 .5h0m0 6h0m0 .5h0m0 3.5h0m0 56.5h0m0 14h0m0 .5h0m0 5h0m0 12.5h0m.5-106h0m0 2.5h0m0 1h0m0 7.5h0m0 .5h0m0 7.5h0m0 45h0m0 3h0m0 10h0m0 7h0m.5-74h0m0 50h0m0 3h0m0 5.5h0m0 1.5h0m0 1.5h0m0 4h0m0 22.5h0m.5-36h0m0 4.5h0m0 7h0m0 6h0m0 1h0m0 2.5h0m0 2h0m0 .5h0m0 2h0m0 1h0m0 1h0m0 6.5h0m0 4.5h0m.5-.5h0m.5-43.5h0m0 2h0m0 10h0m0 7.5h0m.5-24h0m0 1h0m0 7.5h0m0 2h0m0 2h0m0 9.5h0m0 3.5h0m0 3.5h0m0 10h0m.5-33h0m0 1h0m0 4.5h0m0 .5h0m0 6h0m0 .5h0m0 1.5h0m0 15.5h0m.5-21h0m0 17.5h0m0 2h0m0 33.5h0m.5-51.5h0m0 7.5h0m0 2.5h0m0 1.5h0m0 3h0m0 6.5h0m0 5h0m.5-21h0m0 14h0m.5-83.5h0m0 1.5h0m0 1h0m0 1.5h0m0 1.5h0m0 2.5h0m0 4.5h0m0 24h0m0 15h0m0 2.5h0m0 4h0m0 4h0m0 31.5h0m.5-65.5h0m0 19h0m0 1.5h0m0 4h0m0 4h0m0 11.5h0m0 5.5h0m0 3h0m0 4.5h0m0 6h0m0 3h0m0 1h0m.5-90h0m0 13.5h0m0 34.5h0m0 12h0m0 2h0m0 9h0m0 6h0m0 10.5h0m0 7h0m0 4h0m.5-79h0m0 35.5h0m0 3h0m0 6h0m0 5.5h0m0 4.5h0m0 10h0m0 6h0m.5-44h0m0 4h0m0 15.5h0m0 10.5h0m0 4.5h0m0 1.5h0m0 4.5h0m0 2h0m0 .5h0m0 16h0m.5-46h0m0 9h0m0 11h0m0 3.5h0m0 2h0m.5-32h0m0 .5h0m0 7.5h0m0 1.5h0m0 10h0m0 38h0m.5-66.5h0m0 2h0m0 1.5h0m0 1h0m0 1h0m0 7.5h0m0 9h0m0 4.5h0m0 6.5h0m.5-26h0m0 4.5h0m0 12h0m0 7h0m.5-20.5h0m0 7.5h0m0 2.5h0m0 21.5h0m.5-40h0m0 12h0m0 .5h0m0 1h0m0 10h0m0 4h0m0 5h0m0 .5h0m0 1h0m0 1h0m0 2.5h0m0 10h0m.5-41.5h0m0 15h0m0 4h0m0 1h0m0 4h0m0 6h0m0 8h0m1-51h0m0 1h0m0 4h0m0 3h0m0 1h0m0 .5h0m0 6h0m0 7.5h0m0 2.5h0m.5-28.5h0m0 11.5h0m0 8.5h0m0 1h0m0 4h0m0 12h0m0 3h0m.5-67h0m0 55.5h0m0 2.5h0m0 1.5h0m0 6h0m0 6.5h0m0 4.5h0m.5-27h0m0 15h0m0 1h0m0 3.5h0m0 .5h0m0 3.5h0m.5-17.5h0m0 2h0m0 1h0m0 2h0m0 7h0m.5-5h0m.5-18.5h0m0 10h0m0 18h0m0 18.5h0m.5-69.5h0m0 6h0m0 9.5h0m0 9h0m0 .5h0m0 1h0m0 1h0m0 2.5h0m0 1.5h0m0 1h0m0 10.5h0m0 7h0m0 4.5h0m0 12.5h0m0 18h0m.5-72h0m0 7.5h0m0 1h0m0 13.5h0m0 4.5h0m0 .5h0m0 5.5h0m0 3h0m0 1.5h0m0 6h0m0 3h0m0 2h0m0 3.5h0m0 2h0m.5-59.5h0m0 9.5h0m0 5.5h0m0 10h0m0 4.5h0m0 .5h0m0 16.5h0m0 5.5h0m.5-51h0m0 6.5h0m0 4h0m0 9.5h0m0 3.5h0m0 7.5h0m0 2.5h0m0 4.5h0m0 5.5h0m0 3h0m0 2.5h0m.5-45.5h0m0 14.5h0m0 1h0m0 7.5h0m0 6h0m0 3.5h0m0 49.5h0m.5-81.5h0m0 6h0m0 1.5h0m0 1h0m0 .5h0m0 3h0m0 5.5h0m0 6h0m0 1h0m0 .5h0m0 6h0m0 1.5h0m0 4h0m.5-34.5h0m0 2.5h0m0 6.5h0m0 9.5h0m0 6.5h0m.5-53.5h0m0 3h0m0 2.5h0m.5-12.5h0m0 1.5h0m0 4h0m0 8.5h0m0 2h0m0 4h0m0 1.5h0m0 4h0m0 .5h0m.5-22.5h0m0 .5h0m0 13.5h0m0 6.5h0m.5-16h0m0 4h0m0 2h0m0 12h0m.5-17h0m0 1h0m0 5.5h0m0 .5h0m0 1.5h0m0 .5h0m0 2h0m0 1h0m0 1h0m0 3.5h0m0 31h0m.5-32h0m0 13h0m0 5h0m0 8.5h0m0 2.5h0m0 .5h0m0 10.5h0m0 4h0m0 2h0m0 3h0m.5-23.5h0m0 2.5h0m0 6.5h0m0 .5h0m0 1h0m0 1.5h0m0 5h0m0 6.5h0m0 7h0m.5-51.5h0m0 8.5h0m0 18.5h0m0 11.5h0m0 12.5h0m.5-30h0m0 .5h0m0 12.5h0m0 1.5h0m0 2h0m0 3.5h0m0 2h0m0 8.5h0m.5-39.5h0m0 11.5h0m0 2h0m0 .5h0m0 2.5h0m0 1.5h0m0 11.5h0m0 6.5h0m0 3h0m.5-48h0m0 2.5h0m0 40h0m.5-77h0m0 .5h0m0 59h0m0 4.5h0m0 18.5h0m0 8h0m0 7.5h0m.5-104h0m0 61h0m0 13.5h0m0 .5h0m0 2h0m0 4.5h0m0 1.5h0m0 1h0m0 2h0m0 7h0m0 3h0m0 .5h0m0 1.5h0m0 1.5h0m0 1h0m0 1.5h0m0 8h0m0 6h0m.5-119h0m0 5h0m0 8h0m0 5h0m0 41h0m0 12.5h0m0 4h0m0 17h0m0 14.5h0m.5-107.5h0m0 .5h0m0 1h0m0 8h0m0 2h0m0 3.5h0m0 1h0m0 2h0m0 3h0m.5-17h0m0 6.5h0m0 1h0m0 38.5h0m0 8h0m0 4.5h0m0 3h0m.5-24h0m0 7.5h0m0 .5h0m0 5h0m0 2h0m0 1.5h0m0 .5h0m0 1h0m0 .5h0m0 3h0m0 2h0m0 .5h0m0 2h0m0 2h0m0 1h0m0 4h0m0 3h0m0 2.5h0m0 2h0m0 1h0m0 2h0m.5-23h0m0 7h0m0 4h0m0 3.5h0m0 3.5h0m0 1.5h0m0 1.5h0m0 2.5h0m0 2h0m0 24h0m.5-67h0m0 39.5h0m.5 5.5h0m.5-37h0m0 8.5h0m0 10h0m0 4h0m0 25h0m0 10.5h0m0 3h0m.5-57.5h0m0 8h0m0 5h0m0 4h0m0 1h0m0 2h0m0 2.5h0m0 1.5h0m0 9h0m0 10h0m.5-51.5h0m0 7.5h0m0 3h0m0 1h0m0 7.5h0m0 19h0m0 1.5h0m0 4.5h0m0 2h0m0 4h0m.5-68h0m0 11h0m0 3h0m0 2h0m0 3.5h0m0 2h0m0 2h0m0 .5h0m0 2.5h0m0 4h0m0 3.5h0m0 1.5h0m0 5h0m0 .5h0m0 8.5h0m0 4h0m0 2h0m0 4.5h0m0 12h0m0 7h0m.5-60h0m0 .5h0m0 1h0m0 18h0m0 20.5h0m1.5-44.5h0m0 2.5h0m0 8.5h0m0 4h0m0 5h0m0 1.5h0m0 3h0m0 3.5h0m0 .5h0m0 4h0m0 5.5h0m0 .5h0m0 14.5h0m.5-45h0m0 12.5h0m0 3.5h0m0 2.5h0m0 4h0m0 11h0m0 1.5h0m.5-32.5h0m.5 38.5h0m.5-39h0m0 18h0m0 3.5h0m0 2h0m0 4.5h0m0 1.5h0m0 4.5h0m0 1h0m0 1h0m0 6h0m0 3h0m0 4.5h0m.5-48.5h0m0 10.5h0m0 1h0m0 2.5h0m0 1.5h0m0 7.5h0m0 1h0m0 2h0m0 5.5h0m0 .5h0m0 7.5h0m.5-46.5h0m0 18.5h0m0 6h0m0 3h0m0 9.5h0m0 7.5h0m0 1h0m0 2h0m0 2.5h0m0 2h0m0 2.5h0m0 2h0m1.5-53.5h0m0 6.5h0m0 2h0m0 9.5h0m0 7h0m0 1h0m0 23h0m.5-47h0m0 1h0m0 6.5h0m0 4h0m0 1h0m0 2.5h0m0 3.5h0m0 .5h0m0 1.5h0m0 1h0m0 6h0m.5-23h0m0 2h0m0 1.5h0m0 5.5h0m0 2.5h0m.5-5.5h0m1.5-2h0m0 7.5h0m0 1.5h0m0 4.5h0m.5-10.5h0m0 1.5h0m0 .5h0m0 7.5h0m0 2h0m0 1h0m0 5.5h0m0 1h0m0 6h0m.5-36.5h0m0 25h0m0 2.5h0m0 4h0m.5-64h0m0 22.5h0m0 20.5h0m0 1h0m0 2h0m0 4h0m0 2.5h0m0 6.5h0m0 1h0m0 7h0m0 6h0m0 3.5h0m0 2h0m0 5h0m0 11.5h0m.5-59h0m0 4.5h0m0 6.5h0m0 8h0m0 8h0m0 3h0m0 3.5h0m0 18h0m.5-106.5h0m0 1.5h0m0 3.5h0m0 2.5h0m0 1.5h0m0 1h0m0 1h0m0 6.5h0m0 30h0m.5-33h0m0 1.5h0m0 2.5h0m.5-15h0m0 56h0m0 .5h0m0 8h0m0 2.5h0m0 5.5h0m0 4h0m0 7h0m0 14h0m0 24.5h0m.5-127.5h0m0 9h0m0 12h0m0 23.5h0m0 6.5h0m0 19h0m0 4h0m0 2.5h0m0 3h0m0 6h0m0 10.5h0m.5-84h0m0 2.5h0m0 75h0m.5-87h0m0 2h0m0 1.5h0m0 .5h0m0 4.5h0m0 6h0m0 1.5h0m0 32.5h0m0 3h0m0 3.5h0m0 1.5h0m0 2.5h0m0 4h0m0 1.5h0m0 3h0m0 5h0m0 3.5h0m0 5.5h0m0 1h0m0 2.5h0m0 6h0m.5-92.5h0m0 2h0m0 6h0m0 4h0m0 .5h0m0 4h0m0 3h0m0 1.5h0m0 27.5h0m0 7h0m0 2h0m0 4h0m0 7.5h0m0 .5h0m0 1h0m0 1h0m0 5h0m0 3h0m0 2h0m0 8.5h0m0 1h0m0 8.5h0m0 3h0m.5-81.5h0m0 27.5h0m0 5.5h0m0 2h0m0 3h0m0 2.5h0m0 4.5h0m0 1h0m0 6h0m3-11h0m.5-13.5h0m0 10h0m0 .5h0m0 3.5h0m0 1h0m0 3h0m.5-24h0m0 7.5h0m0 2.5h0m0 1h0m0 .5h0m0 1.5h0m0 .5h0m0 1.5h0m0 3.5h0m0 4h0m0 2.5h0m0 1.5h0m0 2h0m0 3h0m.5-27h0m0 6h0m0 2.5h0m0 2.5h0m0 1h0m0 7h0m.5-2h0m.5 49h0m.5-64.5h0m0 19.5h0m0 5.5h0m0 .5h0m0 2h0m0 1.5h0m0 20.5h0m0 .5h0m0 11h0m0 1h0m.5-59.5h0m0 .5h0m0 5h0m0 4.5h0m0 1h0m0 2.5h0m0 7.5h0m0 6.5h0m0 2h0m0 1h0m0 3.5h0m0 5.5h0m0 1.5h0m0 4h0m0 4.5h0m0 18.5h0m.5-63.5h0m0 11h0m0 9h0m0 8h0m0 6h0m0 5h0m0 3h0m1-76h0m0 7h0m0 28h0m0 13.5h0m0 3.5h0m0 3.5h0m0 12h0m.5-76h0m0 3.5h0m0 3h0m0 9h0m0 2.5h0m0 6h0m0 .5h0m0 9.5h0m0 .5h0m0 1h0m0 .5h0m0 6h0m0 3.5h0m0 1h0m0 2h0m0 1.5h0m0 2h0m0 3h0m0 3h0m0 7h0m0 1.5h0m0 9h0m0 7.5h0m0 3h0m0 10h0m.5-98h0m0 4h0m0 7.5h0m0 4h0m0 10.5h0m0 15h0m0 30h0m.5-66h0m0 .5h0m0 5.5h0m0 11.5h0m0 50.5h0m.5-73h0m0 3h0m0 .5h0m0 11h0m0 1.5h0m0 3.5h0m0 23.5h0m0 5h0m0 16h0m0 1h0m0 11.5h0m0 7.5h0m0 5h0m0 7.5h0m0 13.5h0m.5-116.5h0m0 32h0m0 19.5h0m0 2.5h0m0 8h0m0 3.5h0m0 2h0m0 .5h0m0 1.5h0m0 1h0m0 1.5h0m0 3h0m0 1h0m0 1.5h0m0 1.5h0m0 1.5h0m0 .5h0m0 2.5h0m0 7.5h0m0 1.5h0m0 1h0m0 1h0m0 .5h0m0 10.5h0m.5-44.5h0m0 22.5h0m0 20.5h0m1.5-58h0m0 5.5h0m0 12h0m0 8h0m0 2.5h0m0 4.5h0m0 3.5h0m0 1h0m0 1h0m0 3.5h0m0 14h0m0 14h0m.5-114.5h0m0 12h0m0 41h0m0 5.5h0m0 1h0m0 2h0m0 2.5h0m0 2.5h0m0 2h0m0 7.5h0m0 5h0m0 4h0m0 4.5h0m0 8h0m0 1h0m0 2.5h0m0 2h0m0 15.5h0m.5-85.5h0m0 19.5h0m0 10h0m0 23.5h0m0 25.5h0m.5-32.5h0m.5-22h0m0 1.5h0m0 2.5h0m0 4.5h0m0 1h0m0 3.5h0m0 1h0m0 6.5h0m0 10.5h0m.5-49.5h0m0 5.5h0m0 6h0m0 3h0m0 4.5h0m0 11.5h0m0 6h0m0 5h0m0 19h0m0 8h0m.5-25h0m.5-3h0m0 6h0m0 1h0m.5-45h0m0 14h0m0 1.5h0m0 6.5h0m0 .5h0m0 7h0m0 1.5h0m0 4.5h0m0 4.5h0m0 10h0m0 7h0m0 1.5h0m.5-48h0m0 1h0m0 7.5h0m0 6h0m0 1.5h0m0 5.5h0m0 1h0m0 9h0m0 5h0m0 3.5h0m0 4.5h0m0 13.5h0m.5-61h0m0 9h0m0 3.5h0m.5-21.5h0m0 2h0m0 9h0m0 1h0m0 1h0m0 4.5h0m0 7h0m0 9.5h0m0 5h0m0 8h0m.5-32h0m0 1h0m0 3h0m0 .5h0m0 2.5h0m0 1h0m0 3h0m0 .5h0m0 1h0m0 2.5h0m0 2.5h0m0 .5h0m0 3.5h0m0 4h0m0 4h0m0 7h0m0 3.5h0m0 6.5h0m.5-19.5h0m0 4.5h0m1-17.5h0m0 29h0m0 18h0m.5-56.5h0m0 18.5h0m0 2.5h0m0 5.5h0m0 2.5h0m0 1.5h0m0 2h0m0 7h0m0 6.5h0m0 .5h0m0 9h0m0 2h0m.5-55h0m0 5.5h0m0 6.5h0m0 1.5h0m0 6h0m0 1h0m0 2h0m0 3.5h0m0 6.5h0m0 22.5h0m.5-47.5h0m0 6.5h0m0 3.5h0m0 3h0m.5-38.5h0m0 5h0m0 7h0m0 34h0m0 .5h0m0 3h0m.5-60.5h0m0 17.5h0m0 2.5h0m0 1h0m0 3.5h0m0 1h0m0 1h0m0 2h0m0 2h0m0 1.5h0m0 .5h0m0 1.5h0m0 .5h0m0 3.5h0m0 1h0m0 1h0m0 1h0m.5-34.5h0m0 7h0m0 6h0m0 2.5h0m0 24.5h0m0 4.5h0m1-36h0m0 2h0m0 3h0m0 10h0m0 2h0m0 5h0m.5-14h0m0 4.5h0m0 .5h0m0 8h0m0 5h0m0 1h0m0 1.5h0m0 1h0m.5-41h0m0 10.5h0m0 2.5h0m0 3.5h0m0 5h0m0 13.5h0m0 15h0m.5-33h0m0 13.5h0m0 22.5h0m.5-84h0m0 28.5h0m0 5h0m0 2.5h0m0 8h0m0 6.5h0m0 14h0m0 11h0m0 3h0m0 8h0m0 2.5h0m0 12h0m.5-65h0m0 18.5h0m0 2.5h0m0 1.5h0m0 .5h0m0 11.5h0m0 2h0m0 3h0m0 5h0m0 3.5h0m0 26h0m.5-119.5h0m0 14.5h0m0 1h0m0 4h0m0 38.5h0m0 14h0m0 4.5h0m0 1.5h0m.5-76h0m0 1.5h0m0 7h0m0 7h0m0 24.5h0m0 9.5h0m0 10.5h0m0 34.5h0m.5-90.5h0m0 6.5h0m0 47.5h0m0 5.5h0m0 7.5h0m0 1.5h0m0 5.5h0m0 23h0m0 11h0m.5-113h0m0 8h0m0 1h0m0 7h0m0 3h0m0 12h0m0 12h0m0 2.5h0m0 4.5h0m0 11h0m0 8h0m0 7h0m.5-79h0m0 10.5h0m0 4h0m0 2h0m0 2h0m0 34.5h0m0 16h0m0 .5h0m0 3.5h0m0 20.5h0m.5-43.5h0m0 9h0m0 7h0m0 1.5h0m0 11.5h0m0 5h0m0 3h0m0 4h0m0 10.5h0m0 3h0m.5-30h0m0 13h0m.5-17h0m.5 7h0m0 .5h0m0 4.5h0m0 9.5h0m.5-24.5h0m0 3h0m0 6h0m0 3h0m0 3h0m0 3h0m0 3.5h0m.5-13h0m0 8.5h0m1 2.5h0m0 11h0m.5-33h0m0 3h0m0 9h0m0 2.5h0m0 1.5h0m0 1.5h0m0 2h0m0 3.5h0m0 2.5h0m0 .5h0m0 2h0m0 1h0m0 1h0m0 1.5h0m0 4h0m0 1h0m0 .5h0m.5-30.5h0m0 .5h0m0 3.5h0m0 2.5h0m0 4.5h0m0 7.5h0m0 10.5h0m0 1.5h0m0 1h0m0 2h0m0 .5h0m0 5h0m0 1h0m.5-41h0m0 13.5h0m.5-35h0m0 5.5h0m0 2h0m0 1h0m0 .5h0m0 2h0m0 1h0m0 5.5h0m0 7h0m0 4.5h0m0 7.5h0m0 11.5h0m.5-29h0m0 3h0m0 5.5h0m0 4h0m0 6.5h0m0 4h0m0 1.5h0m0 2h0m0 1h0m0 3h0m.5-9.5h0m.5-14.5h0m0 7.5h0m.5-31h0m0 12.5h0m0 5h0m0 31.5h0m0 .5h0m.5-41.5h0m0 4.5h0m0 1.5h0m0 1h0m0 1h0m0 3h0m0 6h0m0 3h0m0 5h0m0 .5h0m0 6.5h0m0 4h0m0 18h0m.5-60.5h0m0 8h0m0 2h0m0 11h0m0 4h0m0 3.5h0m0 5h0m0 1.5h0m0 4h0m0 12.5h0m.5-47h0m0 32.5h0m0 16.5h0m.5-50.5h0m0 10h0m0 4h0m.5-10.5h0m0 .5h0m0 2.5h0m0 6h0m0 4.5h0m0 8h0m0 3.5h0m0 11.5h0m0 7.5h0m0 3.5h0m.5-58.5h0m0 17h0m0 1.5h0m0 3.5h0m0 5h0m0 7.5h0m0 3.5h0m0 5h0m0 1.5h0m.5-79h0m.5-13h0m0 20.5h0m.5-15.5h0m0 1h0m0 11h0m0 5h0m0 9.5h0m0 26h0m0 10h0m0 4h0m0 6.5h0m0 9h0m.5-87h0m0 2h0m0 .5h0m0 4.5h0m0 1h0m0 .5h0m0 3h0m0 3.5h0m0 8.5h0m0 .5h0m0 4h0m0 1h0m0 1h0m0 3.5h0m0 3.5h0m0 2.5h0m0 11.5h0m0 4h0m0 4.5h0m0 4h0m0 1.5h0m0 4.5h0m0 1h0m0 2h0m0 1h0m0 1.5h0m0 4h0m0 2h0m0 2h0m0 2h0m0 31.5h0m.5-104h0m0 3.5h0m0 4.5h0m0 5h0m0 1.5h0m0 7.5h0m0 23h0m0 1.5h0m0 1h0m0 6.5h0m0 5h0m0 3.5h0m0 1.5h0m0 2h0m.5-78.5h0m0 11h0m0 7h0m0 2.5h0m0 2h0m0 6h0m0 1h0m0 2h0m0 3.5h0m0 1.5h0m0 50.5h0m.5-84.5h0m0 30h0m0 56.5h0m0 2h0m0 4h0m.5-91h0m0 1.5h0m0 4h0m0 9h0m0 49.5h0m0 12.5h0m0 2h0m0 1h0m.5-83.5h0m0 6.5h0m0 1h0m0 3.5h0m0 2h0m0 1h0m0 1.5h0m0 1.5h0m0 2.5h0m0 .5h0m0 36.5h0m0 21h0m0 8.5h0m0 6.5h0m0 4h0m0 4h0m.5-99.5h0m0 57.5h0m0 1h0m0 11h0m0 2h0m0 .5h0m0 1h0m0 2h0m0 2.5h0m0 1h0m0 2h0m0 6h0m0 .5h0m0 3h0m.5-28.5h0m0 1.5h0m0 1.5h0m0 .5h0m0 6h0m0 1.5h0m0 2h0m0 14h0m1-52.5h0m0 4.5h0m0 1.5h0m0 5.5h0m0 .5h0m0 6h0m0 6h0m0 4.5h0m.5-32h0m0 4h0m0 2.5h0m0 4h0m0 2.5h0m0 3.5h0m0 2.5h0m0 .5h0m0 1.5h0m0 3h0m0 1h0m0 3h0m0 6h0m.5-29h0m0 3h0m0 2.5h0m0 3h0m0 4.5h0m0 1h0m0 4h0m0 6h0m1 2h0m0 1h0m0 4h0m0 .5h0m0 2h0m0 9h0m0 5h0m.5-30.5h0m0 2.5h0m0 1.5h0m0 3h0m0 5.5h0m0 4.5h0m0 2.5h0m0 2h0m0 2h0m0 2h0m0 1h0m0 2.5h0m.5-24h0m0 3h0m0 1.5h0m0 .5h0m0 9.5h0m0 7.5h0m.5-5h0m.5-15.5h0m.5-10h0m0 8h0m0 11h0m0 2h0m0 2h0m0 23h0m.5-55.5h0m0 4.5h0m0 1.5h0m0 4h0m0 3.5h0m0 .5h0m0 2.5h0m0 3.5h0m0 6.5h0m0 1h0m0 23h0m.5-35h0m0 7.5h0m0 2.5h0m0 10.5h0m0 2h0m0 1h0m0 13h0m.5-37h0m0 14h0m0 9.5h0m0 1.5h0m0 2h0m0 1h0m0 1.5h0m0 5.5h0m0 1h0m0 2h0m0 6h0m0 1.5h0m0 5h0m0 5h0m.5-50.5h0m0 14h0m0 12.5h0m0 5.5h0m0 1.5h0m0 8h0m0 .5h0m.5-31h0m0 1h0m0 35.5h0m.5-54.5h0m.5 10h0m0 3h0m0 1h0m0 .5h0m0 7.5h0m0 2h0m0 4h0m0 3h0m0 1.5h0m0 3h0m0 1h0m0 5.5h0m.5-31h0m0 1.5h0m0 1h0m0 3h0m0 4h0m0 6h0m0 2.5h0m0 1h0m0 8.5h0m0 3h0m0 3h0m.5-25.5h0m0 13.5h0m0 2h0m0 9.5h0m.5-18.5h0m.5-9.5h0m0 7h0m.5-16h0m0 2h0m0 2h0m0 16.5h0m0 4.5h0m0 3.5h0m.5-31h0m0 .5h0m0 8h0m0 2h0m0 3h0m0 1h0m0 2h0m0 1.5h0m0 14h0m0 15.5h0m.5-46h0m0 2.5h0m0 3h0m0 8.5h0m0 5h0m0 1h0m1-25.5h0m0 14h0m0 2h0m.5-28h0m0 .5h0m0 2.5h0m0 3.5h0m0 3.5h0m0 .5h0m0 2.5h0m0 1h0m0 .5h0m0 4h0m0 2h0m.5-64h0m0 6h0m0 1h0m0 1h0m0 .5h0m0 6.5h0m0 23h0m0 .5h0m0 13h0m0 8h0m0 7.5h0m.5-58h0m0 5.5h0m0 1h0m0 3h0m0 47.5h0m0 7.5h0m0 27h0m.5-100.5h0m0 19.5h0m0 35h0m0 1.5h0m0 2.5h0m0 12.5h0m0 1.5h0m0 4h0m0 .5h0m0 1.5h0m0 1h0m0 3h0m0 3h0m0 5.5h0m0 3.5h0m0 22h0m.5-112.5h0m0 4h0m0 5h0m0 8h0m0 39.5h0m0 1h0m0 2h0m0 5h0m0 2.5h0m0 23h0m0 1.5h0m0 4.5h0m.5-100h0m0 6h0m0 11.5h0m0 2.5h0m0 50h0m0 4.5h0m0 18.5h0m0 13h0m0 .5h0m0 1h0m0 7h0m.5-62h0m0 3.5h0m0 9.5h0m0 3.5h0m0 8.5h0m0 1.5h0m0 2h0m0 1h0m0 1.5h0m0 4h0m0 1.5h0m0 8.5h0m0 2.5h0m0 10h0m0 3h0m0 .5h0m0 5.5h0m.5-60.5h0m0 5.5h0m0 3h0m0 7.5h0m0 11h0m0 3.5h0m0 1h0m0 1.5h0m0 1h0m0 10h0m.5-14.5h0m0 7.5h0m0 .5h0m1-28.5h0m0 5.5h0m0 2h0m0 4h0m.5-30.5h0m0 4.5h0m0 .5h0m0 6h0m0 .5h0m0 5.5h0m0 3h0m0 2.5h0m0 5.5h0m0 3.5h0m0 1h0m0 2h0m0 1h0m0 2.5h0m0 7h0m0 16h0m.5-54h0m0 8h0m0 9h0m0 3.5h0m0 9.5h0m1-74h0m0 .5h0m0 3h0m0 41.5h0m0 1.5h0m.5-51.5h0m0 3h0m0 29.5h0m0 10h0m0 14h0m0 5.5h0m0 1.5h0m0 10.5h0m0 3h0m0 6.5h0m0 5.5h0m0 1.5h0m0 17.5h0m.5-108.5h0m0 .5h0m0 2h0m0 2.5h0m0 8h0m0 20.5h0m0 3.5h0m0 6h0m0 5h0m0 5.5h0m0 5h0m0 7h0m0 2h0m0 1h0m0 1.5h0m0 1.5h0m0 1.5h0m0 3h0m0 5.5h0m0 8h0m.5-40.5h0m0 5.5h0m0 1.5h0m0 4h0m0 38h0m1-47h0m0 11.5h0m0 21.5h0m.5-35.5h0m0 1.5h0m0 16.5h0m0 5h0m0 3.5h0m0 21h0m.5-54h0m0 2.5h0m0 8h0m0 1h0m0 5.5h0m0 1h0m0 4.5h0m0 4h0m0 17h0m0 9.5h0m.5-72.5h0m0 11.5h0m0 13h0m0 8.5h0m0 1.5h0m0 13.5h0m.5-22h0m0 6h0m0 4h0m0 2h0m0 6h0m0 7h0m0 14.5h0m.5-48h0m0 8h0m0 3.5h0m0 2h0m0 8.5h0m0 1h0m0 1.5h0m0 1.5h0m0 6.5h0m0 19h0m0 5.5h0m0 2h0m.5-41.5h0m0 11.5h0m0 6.5h0m0 1h0m0 .5h0m0 3.5h0m0 1h0m0 1.5h0m0 1h0m0 9h0m0 1h0m.5-26h0m0 3h0m0 7h0m0 1h0m0 7.5h0m0 2h0m0 6.5h0m0 1h0m0 3.5h0m.5-11h0m0 1.5h0m0 .5h0m.5-34h0m0 21h0m0 6h0m0 .5h0m0 1h0m0 7h0m0 .5h0m0 5h0m.5-38.5h0m0 .5h0m0 1.5h0m0 3h0m0 1.5h0m0 3.5h0m0 2h0m0 2h0m0 1h0m0 2.5h0m0 2.5h0m0 1h0m0 1.5h0m0 5h0m.5-32h0m0 2.5h0m0 5h0m0 1h0m0 4h0m0 5h0m.5-9h0m0 11.5h0m1-24.5h0m0 2h0m.5-30.5h0m0 20h0m0 .5h0m0 1h0m0 1h0m0 1h0m0 2.5h0m0 8h0m0 3h0m0 2h0m0 1h0m0 3.5h0m0 1h0m0 2h0m0 2h0m0 13.5h0m.5-46.5h0m0 1h0m0 1.5h0m0 1h0m0 5.5h0m0 1h0m0 2h0m0 4.5h0m0 17.5h0m0 2h0m0 3h0m0 1h0m0 7h0m0 1h0m.5-44h0m0 16.5h0m0 5.5h0m0 18.5h0m0 6h0m.5-36.5h0m0 2.5h0m0 8.5h0m0 4.5h0m0 2h0m0 6.5h0m0 20.5h0m.5-55.5h0m0 5h0m0 3.5h0m0 7.5h0m0 4h0m0 4h0m0 8h0m0 6.5h0m0 9h0m0 4h0m.5-26h0m0 36.5h0m.5-47.5h0m0 13.5h0m0 2.5h0m0 3.5h0m0 3h0m0 8h0m0 5h0m.5-39h0m0 5.5h0m0 2h0m0 1.5h0m0 1.5h0m0 10.5h0m0 7.5h0m1.5-33.5h0m0 1h0m0 1.5h0m0 2h0m0 13h0m0 8h0m0 4h0m0 5.5h0m0 11h0m.5-57h0m0 3h0m0 14h0m0 1.5h0m0 1.5h0m0 1.5h0m0 8.5h0m0 .5h0m0 3.5h0m0 .5h0m0 3h0m0 5.5h0m0 5h0m0 2h0m.5-60h0m0 6.5h0m0 4h0m0 2h0m0 2.5h0m0 2h0m0 8.5h0m0 7.5h0m0 .5h0m0 2.5h0m0 6h0m0 1h0m.5-26.5h0m0 1h0m0 2h0m0 15.5h0m.5-29h0m0 8h0m0 4.5h0m0 2.5h0m0 1h0m0 .5h0m0 5h0m0 4.5h0m0 6.5h0m0 6h0m0 13h0m0 2h0m0 2.5h0m.5-37h0m0 1.5h0m0 15h0m0 1h0m0 3.5h0m0 2.5h0m0 1h0m0 2h0m0 3.5h0m0 7h0m0 12h0m.5-44.5h0m0 7h0m0 17h0m0 17.5h0m.5-37.5h0m0 3.5h0m0 2h0m0 3h0m0 3h0m0 7.5h0m0 1h0m0 6h0m0 6.5h0m0 5h0m0 1.5h0m0 3h0m0 4.5h0m.5-33.5h0m0 1h0m0 1h0m0 14.5h0m0 1.5h0m0 3.5h0m0 9h0m0 6h0m0 4.5h0m0 7.5h0m.5-51.5h0m0 7.5h0m0 5.5h0m0 1h0m0 .5h0m0 2h0m0 15.5h0m0 7h0m.5-27h0m0 12.5h0m0 5h0m.5-12.5h0m0 4h0m0 8.5h0m0 2h0m0 3.5h0m0 4.5h0m0 6h0m0 6h0m.5-64h0m0 18.5h0m0 1.5h0m0 14.5h0m0 4.5h0m0 .5h0m0 7h0m0 7.5h0m.5-115h0m0 5.5h0m0 .5h0m0 1.5h0m0 7h0m0 .5h0m0 1h0m0 47h0m.5-64.5h0m0 12h0m0 .5h0m0 7h0m0 2.5h0m0 29.5h0m0 15h0m0 19h0m0 12.5h0m.5-96.5h0m0 24h0m0 24h0m0 15.5h0m0 4.5h0m0 2h0m0 2.5h0m0 .5h0m0 3h0m0 .5h0m0 1.5h0m0 10.5h0m0 1h0m0 1h0m0 3h0m0 10h0m0 13h0m.5-111.5h0m0 2.5h0m0 2.5h0m0 2.5h0m0 2.5h0m0 6.5h0m0 27h0m0 16h0m0 5.5h0m0 6h0m0 1h0m0 1.5h0m0 3.5h0m0 1h0m0 3.5h0m0 1h0m0 .5h0m0 4h0m0 12h0m0 .5h0m0 1h0m.5-96.5h0m0 10.5h0m0 16h0m0 11h0m0 9.5h0m0 10.5h0m0 2h0m0 4.5h0m0 2h0m0 5h0m0 4h0m0 9.5h0m0 1h0m.5-66h0m0 5h0m.5-17h0m0 4h0m0 12h0m0 2h0m.5-20.5h0m0 2.5h0m0 .5h0m0 5.5h0m0 .5h0m0 2.5h0m.5-15.5h0m0 8.5h0m0 .5h0m0 17.5h0m.5-27.5h0m0 23h0m0 29h0m0 19h0m0 .5h0m0 5h0m0 2.5h0m0 1h0m0 1h0m0 3.5h0m.5-67.5h0m0 42h0m0 4h0m0 .5h0m0 2.5h0m0 7h0m0 3.5h0m0 1h0m0 1.5h0m0 5h0m.5-69h0m0 3h0m0 6.5h0m0 2h0m0 34.5h0m0 14h0m0 2.5h0m0 3.5h0m.5-61.5h0m0 1.5h0m0 4h0m0 .5h0m0 8.5h0m0 .5h0m0 3.5h0m0 1h0m0 1h0m0 1.5h0m0 1h0m0 2h0m0 1h0m0 1.5h0m0 1h0m0 3.5h0m0 2h0m0 1.5h0m0 1h0m0 .5h0m0 12.5h0m0 1h0m0 2.5h0m.5-60.5h0m0 .5h0m0 10h0m0 26h0m0 1h0m0 2h0m0 2.5h0m0 1h0m0 1h0m0 5.5h0m0 2h0m0 1h0m0 1h0m0 6h0m0 20.5h0m.5-52h0m0 12.5h0m0 6.5h0m0 1h0m0 28h0m1-21h0m0 9h0m0 3h0m0 .5h0m0 2h0m0 8.5h0m.5-70h0m0 47h0m0 1h0m0 1h0m0 3h0m0 1.5h0m0 2.5h0m0 1h0m0 1h0m0 2h0m0 4h0m0 1h0m0 1h0m0 3h0m0 5h0m0 2.5h0m.5-36.5h0m0 2h0m0 3.5h0m0 5h0m0 11.5h0m0 6h0m0 4.5h0m.5-86.5h0m0 6h0m0 12.5h0m0 .5h0m0 11h0m0 1.5h0m0 6h0m0 3.5h0m0 3h0m0 4h0m0 9.5h0m0 41.5h0m.5-74h0m0 17h0m0 1h0m0 4h0m0 5h0m0 14h0m0 14.5h0m.5-72.5h0m0 7h0m0 45h0m0 9h0m.5-70h0m0 5h0m0 15.5h0m0 16h0m0 3h0m0 2h0m0 1.5h0m0 4h0m0 2.5h0m0 6h0m0 1.5h0m0 2h0m0 4.5h0m0 4h0m0 11h0m0 12h0m0 3h0m.5-66h0m0 3h0m0 4h0m0 17h0m0 13.5h0m0 .5h0m0 6h0m0 1h0m0 2.5h0m0 1h0m0 1.5h0m0 2.5h0m0 22.5h0m0 2h0m.5-42h0m0 21h0m0 1.5h0m0 4h0m0 10.5h0m0 9h0m.5-90.5h0m0 19h0m0 1.5h0m0 1.5h0m0 2h0m0 .5h0m0 2.5h0m0 2.5h0m0 3h0m0 3.5h0m0 7h0m0 7h0m0 2.5h0m0 3h0m0 1.5h0m0 5h0m0 2h0m0 3h0m0 5.5h0m0 8h0m0 15h0m.5-62h0m0 4.5h0m0 2h0m0 7h0m0 4h0m0 18h0m.5-22h0m.5-38h0m0 27h0m0 4h0m0 2h0m0 3.5h0m0 8.5h0m0 5h0m0 .5h0m0 2h0m0 6h0m.5-51.5h0m0 13.5h0m0 2.5h0m0 12.5h0m0 4.5h0m0 7h0m0 8h0m.5-60h0m0 50h0m0 2h0m0 8.5h0m.5-31.5h0m0 2.5h0m0 1.5h0m0 4h0m0 2.5h0m0 2.5h0m0 8.5h0m0 4h0m0 6h0m0 14h0m0 2.5h0m.5-111h0m0 5.5h0m0 3.5h0m0 24.5h0m0 8h0m0 2.5h0m0 8h0m0 .5h0m0 1h0m0 2h0m0 2.5h0m0 2h0m0 2.5h0m0 6h0m0 6h0m0 5h0m0 2h0m0 .5h0m0 8.5h0m.5-89.5h0m0 5.5h0m0 19h0m0 22h0m0 2h0m0 1.5h0m0 25h0m0 3h0m0 9.5h0m0 1.5h0m0 2.5h0m0 6.5h0m.5-101h0m0 5.5h0m0 .5h0m0 1.5h0m0 6.5h0m0 1h0m0 20.5h0m0 1.5h0m0 8h0m0 .5h0m0 3h0m0 2.5h0m0 11h0m0 4h0m0 8.5h0m0 13.5h0m.5-89.5h0m0 3.5h0m0 10h0m0 5h0m0 1h0m0 1h0m0 6.5h0m0 .5h0m0 21.5h0m0 2.5h0m0 4.5h0m0 1.5h0m0 1h0m0 1h0m0 6.5h0m0 3h0m.5-63h0m0 10h0m0 .5h0m0 1h0m0 25.5h0m0 23.5h0m0 7h0m0 1h0m0 5h0m0 5h0m0 1h0m0 21h0m.5-107h0m0 10.5h0m0 60.5h0m0 1h0m0 6h0m0 3.5h0m0 3.5h0m0 2.5h0m0 3.5h0m0 1h0m0 15h0m0 1.5h0m0 7.5h0m.5-115.5h0m0 5h0m0 7h0m0 42h0m0 23h0m1 23h0m.5-31.5h0m0 7.5h0m0 2.5h0m0 1.5h0m0 2h0m0 4.5h0m0 1.5h0m0 2h0m0 4h0m0 2h0m0 7.5h0m.5-41.5h0m0 5.5h0m0 13h0m0 1h0m0 3.5h0m0 1.5h0m0 2h0m0 2h0m0 2h0m0 2h0m0 1h0m0 1.5h0m0 1h0m0 .5h0m0 2h0m0 7.5h0m0 6h0m.5-65.5h0m0 1.5h0m0 1h0m0 2h0m0 1h0m0 2.5h0m0 .5h0m0 2h0m0 1h0m0 1h0m0 4h0m0 7.5h0m0 11h0m0 13h0m.5-57.5h0m0 1.5h0m0 .5h0m0 3.5h0m0 1.5h0m0 9.5h0m0 7.5h0m0 4h0m.5-17h0m.5-8.5h0m0 10.5h0m0 12h0m0 3h0m0 8h0m0 3.5h0m.5-45h0m0 4h0m0 9h0m0 7.5h0m0 .5h0m0 2.5h0m0 3.5h0m0 1.5h0m0 4.5h0m0 3h0m0 1.5h0m0 1h0m0 2.5h0m0 .5h0m0 10h0m0 6.5h0m.5-43.5h0m0 10.5h0m0 19h0m.5-59.5h0m1 31h0m0 1h0m0 4h0m0 4h0m0 3.5h0m0 4h0m0 2h0m0 3.5h0m0 3.5h0m0 14.5h0m.5-43h0m0 2h0m0 7h0m0 4.5h0m0 4h0m0 5.5h0m0 3h0m0 1h0m0 6.5h0m0 1h0m0 9.5h0m0 1h0m0 7h0m0 5h0m0 5h0m.5-39.5h0m0 8h0m0 12h0m0 8h0m.5-44h0m.5-29.5h0m0 32.5h0m0 9.5h0m0 5h0m0 8h0m0 6.5h0m.5-42.5h0m0 5h0m0 1h0m0 3.5h0m0 2.5h0m0 4.5h0m0 1.5h0m0 1h0m0 1.5h0m0 4h0m0 6.5h0m0 6.5h0m0 4h0m0 2h0m0 3h0m0 2h0m0 1h0m.5-46h0m0 37.5h0m.5-11.5h0m.5-16.5h0m0 3.5h0m0 4h0m0 2.5h0m0 2.5h0m0 1h0m0 3.5h0m0 2.5h0m.5-33h0m0 8h0m0 2.5h0m0 1.5h0m0 2.5h0m0 1h0m0 6.5h0m0 6h0m.5-9h0m0 3.5h0m1 20h0m.5-24h0m0 1.5h0m0 2h0m0 2.5h0m0 .5h0m0 2.5h0m0 2.5h0m0 3h0m0 1h0m.5-30h0m0 2.5h0m0 10h0m0 7.5h0m0 1h0m0 1h0m0 2.5h0m0 2h0m0 6.5h0m0 .5h0m0 7h0m.5-25.5h0m0 3.5h0m0 7.5h0m.5 9.5h0m0 18.5h0m.5-57h0m0 16h0m0 15.5h0m0 3h0m0 6.5h0m0 2h0m0 1h0m0 2h0m0 1h0m0 1.5h0m0 3.5h0m0 7.5h0m0 4.5h0m0 .5h0m.5-54h0m0 9.5h0m0 5h0m0 6h0m0 4h0m0 5h0m0 7.5h0m0 1h0m0 1h0m0 1h0m0 2.5h0m0 3h0m0 2h0m0 13.5h0m.5-101h0m0 43.5h0m0 2h0m0 4h0m0 6.5h0m0 1h0m0 8.5h0m0 1.5h0m0 14h0m0 12.5h0m0 5.5h0m0 1h0m.5-86h0m0 16h0m0 1.5h0m0 4.5h0m0 8h0m0 3h0m0 5h0m0 6h0m0 4h0m0 .5h0m0 19.5h0m0 8h0m.5-39.5h0m0 21h0m.5-30h0m0 12h0m0 21h0m0 1h0m0 12h0m.5-41h0m0 9h0m0 2h0m0 2h0m0 7h0m0 1.5h0m0 2h0m0 3h0m0 6h0m0 4.5h0m0 .5h0m0 4.5h0m0 1.5h0m0 10.5h0m.5-98.5h0m0 29h0m0 18.5h0m0 3h0m0 8h0m0 3.5h0m0 13.5h0m0 15.5h0m0 1h0m.5-56.5h0m0 3.5h0m0 1.5h0m0 13.5h0m0 3h0m0 6h0m0 20h0m0 1h0m.5-35.5h0m0 3.5h0m0 4h0m0 4.5h0m0 4.5h0m0 3h0m0 2h0m0 3h0m0 2h0m0 1h0m0 3.5h0m0 5h0m0 4h0m0 5.5h0m0 .5h0m.5-51.5h0m0 35.5h0m0 12.5h0m.5-26.5h0m0 21.5h0m.5-64h0m0 18.5h0m0 9h0m0 10h0m0 2.5h0m0 7h0m0 2h0m0 10h0m0 1h0m0 5h0m0 14.5h0m0 2h0m.5-72.5h0m0 12h0m0 2.5h0m0 2h0m0 3h0m0 3h0m0 1.5h0m0 1.5h0m0 1.5h0m0 3.5h0m0 3.5h0m0 1.5h0m0 12.5h0m0 6.5h0m0 4h0m0 1.5h0m0 2h0m.5-20.5h0m0 1.5h0m0 3h0m0 1h0m0 11h0m0 14.5h0m1-59h0m0 9h0m0 9.5h0m0 4.5h0m0 5.5h0m.5-33.5h0m0 5.5h0m0 4h0m0 1h0m0 2h0m0 8.5h0m0 9.5h0m0 7h0m0 7h0m.5-49h0m0 13h0m0 3.5h0m0 6.5h0m0 13.5h0m0 10h0m.5-33.5h0m.5 7h0m0 3h0m0 7h0m0 2h0m0 1.5h0m.5-25h0m0 10h0m0 5.5h0m0 3h0m0 2h0m0 8.5h0m0 6h0m0 .5h0m0 6.5h0m0 2h0m.5-44.5h0m0 14.5h0m0 6h0m0 7.5h0m0 1h0m0 2h0m0 2h0m0 3h0m0 2h0m0 1.5h0m0 .5h0m0 4.5h0m.5-35.5h0m0 8h0m0 7h0m0 17h0m0 5.5h0m.5-44h0m0 9h0m0 23h0m.5-56h0m0 19.5h0m0 3.5h0m0 2h0m0 3h0m0 1h0m0 5.5h0m0 5.5h0m0 3h0m0 1.5h0m0 3h0m0 6.5h0m0 3h0m.5-28h0m0 2.5h0m.5 5.5h0m.5 3.5h0m0 9h0m0 1h0m.5-86h0m0 6.5h0m0 7.5h0m0 5h0m0 41h0m0 6.5h0m0 1.5h0m0 5h0m0 1.5h0m0 3.5h0m0 1h0m0 .5h0m0 1h0m0 2.5h0m0 4h0m0 2.5h0m0 2.5h0m0 1.5h0m0 2.5h0m0 .5h0m0 3h0m0 2h0m0 6h0m0 1h0m0 .5h0m0 1h0m.5-100h0m0 2.5h0m0 .5h0m0 4h0m0 28.5h0m0 .5h0m0 18h0m0 5.5h0m0 19h0m0 5.5h0m0 1h0m0 2.5h0m0 3h0m0 5.5h0m.5-88.5h0m0 25h0m0 13.5h0m0 2.5h0m0 3.5h0m0 1h0m0 8h0m0 20.5h0m0 12.5h0m0 1h0m0 14.5h0m.5-71.5h0m0 10.5h0m0 4h0m0 3h0m0 2h0m0 6.5h0m0 2.5h0m0 8h0m0 13h0m0 23h0m.5-38.5h0m0 1h0m0 6h0m0 10.5h0m0 8.5h0m0 3h0m0 3h0m0 7.5h0m.5-90h0m0 35h0m0 11.5h0m0 8.5h0m0 3h0m0 3.5h0m0 2.5h0m0 16.5h0m0 12.5h0m.5-77h0m0 13h0m0 4h0m0 5h0m0 2.5h0m0 7.5h0m0 1h0m0 9h0m0 15h0m0 1h0m0 .5h0m0 3h0m0 .5h0m0 8h0m0 7.5h0m.5-85h0m0 17h0m0 18.5h0m0 22.5h0m0 1.5h0m0 14.5h0m.5-58h0m0 25.5h0m0 3.5h0m0 1h0m0 2h0m0 6h0m.5-39h0m0 4.5h0m0 3.5h0m0 2.5h0m0 2.5h0m0 9.5h0m0 14h0m0 1h0m.5-41.5h0m0 3.5h0m0 3.5h0m0 2.5h0m0 1.5h0m0 8.5h0m0 1h0m0 1.5h0m0 1h0m0 1h0m0 .5h0m0 3h0m0 4.5h0m0 6h0m0 5.5h0m0 1h0m0 3h0m.5-54h0m0 11.5h0m0 11h0m0 3h0m0 10h0m0 5h0m1.5-73.5h0m0 48h0m0 3h0m0 2h0m0 5h0m0 3h0m0 4.5h0m0 2.5h0m0 7.5h0m0 2.5h0m0 4h0m0 4h0m.5-85h0m0 10.5h0m0 3.5h0m0 .5h0m0 4.5h0m0 .5h0m0 3h0m0 1.5h0m0 2h0m0 7h0m0 9.5h0m0 2h0m0 3h0m0 1.5h0m0 4h0m0 2h0m0 .5h0m0 4.5h0m0 1h0m0 6h0m0 3h0m0 1.5h0m0 1.5h0m0 3.5h0m0 2h0m0 3.5h0m.5-93.5h0m0 9.5h0m0 18h0m0 2h0m0 22h0m0 22.5h0m0 1h0m0 3h0m0 12.5h0m.5-88.5h0m0 2.5h0m0 15.5h0m0 4.5h0m.5-23h0m0 20.5h0m0 13.5h0m0 34h0m0 13.5h0m0 7.5h0m0 11.5h0m0 10h0m.5-99h0m0 5.5h0m0 14h0m0 1h0m0 1h0m0 1h0m0 3.5h0m0 .5h0m0 1h0m0 6.5h0m0 .5h0m0 6h0m0 4h0m0 2.5h0m0 1h0m0 1.5h0m0 7.5h0m0 4h0m0 5h0m0 1.5h0m0 4.5h0m0 2h0m0 6h0m0 1h0m0 4h0m0 5.5h0m0 3h0m0 14h0m.5-117h0m0 3h0m0 3h0m0 17h0m0 2.5h0m0 12.5h0m0 2.5h0m0 7h0m0 4h0m0 8.5h0m0 1.5h0m0 1.5h0m0 1.5h0m0 8.5h0m0 12.5h0m0 5h0m0 1.5h0m0 14h0m.5-90.5h0m0 1h0m0 3h0m0 7.5h0m0 19h0m0 3.5h0m0 5.5h0m0 13.5h0m0 2h0m0 9.5h0m0 16h0m0 1h0m0 12.5h0m0 8h0m.5-100h0m0 1h0m0 5.5h0m0 3h0m0 7h0m0 10h0m0 13h0m0 1.5h0m0 6h0m0 7.5h0m0 2.5h0m0 2.5h0m0 1.5h0m0 4h0m0 4.5h0m0 24.5h0m.5-23h0m.5-35.5h0m0 7h0m0 7h0m0 6h0m0 4h0m0 8.5h0m0 7h0m0 1h0m.5-64h0m0 6.5h0m0 1h0m0 4.5h0m0 1h0m0 1.5h0m0 4h0m0 3h0m0 5h0m0 6.5h0m0 1h0m0 .5h0m0 17h0m.5-69.5h0m0 15h0m0 8.5h0m0 10h0m0 .5h0m0 1.5h0m0 1h0m0 1.5h0m0 8.5h0m0 3h0m0 8.5h0m0 .5h0m0 4.5h0m0 11.5h0m.5-92h0m0 7h0m0 4h0m0 2.5h0m0 3h0m0 5.5h0m0 18h0m0 4.5h0m0 1.5h0m0 11h0m0 1h0m0 1.5h0m0 1.5h0m0 .5h0m0 4h0m0 6.5h0m0 .5h0m0 5h0m0 1.5h0m0 4h0m.5-81h0m0 4h0m0 2.5h0m0 1.5h0m0 2.5h0m0 7h0m0 55h0m0 1h0m0 2.5h0m0 3.5h0m0 1.5h0m0 10.5h0m.5-90.5h0m0 1.5h0m0 11.5h0m0 6.5h0m0 26h0m.5-48.5h0m0 4h0m0 5h0m0 .5h0m0 3h0m0 84.5h0m.5-97h0m0 14h0m0 3.5h0m0 72.5h0m0 2h0m0 7h0m0 11h0m.5-103.5h0m0 14.5h0m0 1h0m0 46h0m0 15.5h0m0 1h0m0 7h0m0 1.5h0m0 .5h0m0 1.5h0m0 4.5h0m0 5h0m0 .5h0m0 9h0m.5-96.5h0m0 73h0m0 5h0m0 6.5h0m0 1h0m.5-102.5h0m0 .5h0m0 3.5h0m0 1h0m0 5.5h0m0 4h0m0 4h0m0 51.5h0m.5-62.5h0m0 1.5h0m0 2h0m0 2.5h0m0 4.5h0m0 1h0m0 1h0m0 1h0m0 40h0m0 5h0m0 5.5h0m.5-72h0m0 12.5h0m0 2.5h0m0 38.5h0m0 .5h0m0 6.5h0m0 1.5h0m0 2.5h0m0 .5h0m0 1.5h0m0 1h0m0 1h0m0 1h0m0 3.5h0m0 1h0m0 2h0m0 1.5h0m0 1.5h0m0 1h0m.5-20.5h0m0 5h0m0 13h0m0 5.5h0m0 2h0m1-20h0m.5-24h0m0 14.5h0m0 15.5h0m0 1.5h0m0 5.5h0m0 1.5h0m0 5h0m0 5.5h0m0 3.5h0m0 5h0m0 1.5h0m0 2h0m0 6h0m.5-82h0m0 28h0m0 8h0m0 12h0m0 7h0m0 .5h0m0 12h0m0 4h0m.5-55.5h0m0 .5h0m0 20.5h0m0 7h0m0 17.5h0m0 1h0m0 14.5h0m.5-75h0m0 12h0m0 13h0m0 4h0m0 .5h0m0 1.5h0m0 .5h0m0 2h0m0 .5h0m0 3.5h0m0 7h0m0 3.5h0m0 3h0m0 2.5h0m0 1h0m0 1h0m0 3h0m0 1.5h0m0 3.5h0m0 7.5h0m0 1.5h0m.5-52h0m0 3h0m0 3.5h0m0 .5h0m0 4h0m0 9h0m0 4.5h0m0 1h0m0 3h0m0 8h0m0 1h0m0 8h0m.5-28h0m0 4.5h0m0 9h0m3.5-3.5h0m0 1.5h0m0 1.5h0m0 .5h0m0 1h0m0 4h0m0 1h0m0 2h0m0 5.5h0m.5-20.5h0m0 3h0m0 3h0m0 4h0m0 .5h0m0 9h0m.5-60h0m0 1.5h0m0 7h0m0 1h0m0 1.5h0m0 6h0m0 5h0m0 4.5h0m0 .5h0m0 5.5h0m0 15.5h0m0 1.5h0m0 3.5h0m0 3.5h0m0 4h0m.5-58h0m0 2.5h0m0 7h0m0 2.5h0m0 .5h0m0 1h0m0 5h0m0 2.5h0m0 5h0m0 .5h0m0 1h0m0 1h0m0 1h0m0 2h0m0 5.5h0m0 23.5h0m.5-54.5h0m0 1h0m0 3h0m0 1h0m0 4h0m0 3h0m0 4.5h0m0 .5h0m0 11.5h0m0 5.5h0m0 2h0m.5-27h0m0 5h0m0 11.5h0m0 1.5h0m0 5.5h0m0 11h0m0 3h0m0 3h0m0 15.5h0m.5-71.5h0m0 13h0m0 12.5h0m0 2.5h0m0 9.5h0m0 7.5h0m0 1.5h0m0 2.5h0m0 4.5h0m0 1h0m0 24h0m.5-92h0m0 5h0m0 1h0m0 2.5h0m0 6.5h0m0 16.5h0m0 24.5h0m0 9h0m0 15h0m.5-79h0m0 1.5h0m0 2.5h0m0 2h0m0 1.5h0m0 4h0m0 30.5h0m0 10h0m.5-53h0m0 16h0m0 9h0m0 4.5h0m0 4h0m0 2h0m0 1h0m0 2h0m0 2.5h0m0 2h0m0 1.5h0m0 1.5h0m0 1.5h0m0 1.5h0m0 3.5h0m0 3.5h0m.5-56h0m0 3.5h0m0 10.5h0m0 2h0m0 15h0m1-11h0m0 7h0m0 9h0m0 3h0m0 11.5h0m0 4h0m0 7.5h0m0 7h0m0 5h0m.5-72.5h0m0 10.5h0m0 3.5h0m0 6.5h0m0 .5h0m0 6h0m0 2h0m0 1.5h0m0 2h0m0 5h0m0 2.5h0m0 2h0m0 2h0m0 1.5h0m0 4.5h0m0 4.5h0m0 6h0m0 3.5h0m0 1h0m0 3h0m0 2.5h0m0 2.5h0m.5-60.5h0m0 10h0m0 2.5h0m0 10h0m0 11.5h0m0 7h0m0 1h0m0 14.5h0m.5-52.5h0m0 33h0m.5-33h0m0 14.5h0m0 40h0m0 9h0m.5-62.5h0m0 1.5h0m0 3h0m0 .5h0m0 3h0m0 .5h0m0 7.5h0m0 3.5h0m0 2h0m0 2.5h0m0 2h0m0 11.5h0m0 2.5h0m0 4h0m0 7.5h0m0 9h0m.5-81h0m0 30.5h0m0 17h0m0 1h0m0 3h0m0 3h0m0 6.5h0m0 9h0m0 6h0m0 6.5h0m.5-44.5h0m.5-3.5h0m0 10h0m0 11.5h0m0 6.5h0m0 2h0m0 10.5h0m.5-34.5h0m0 3h0m0 7h0m0 3h0m0 2h0m0 1.5h0m0 12.5h0m.5-24.5h0m1 14h0m.5-8h0m0 1h0m0 1.5h0m0 7.5h0m0 .5h0m0 13h0m.5-33h0m0 5.5h0m0 .5h0m0 7h0m0 3h0m0 1.5h0m0 1.5h0m.5-3h0m0 5.5h0m1.5-45h0m0 1.5h0m0 7.5h0m0 .5h0m0 4h0m0 5.5h0m0 5.5h0m0 1.5h0m0 2h0m0 3.5h0m0 8h0m0 4h0m0 19.5h0m.5-90h0m0 14.5h0m0 5.5h0m0 4.5h0m0 4h0m0 5h0m0 1.5h0m0 3h0m0 4h0m0 1.5h0m0 .5h0m0 1.5h0m0 1h0m0 3h0m0 5.5h0m0 2h0m0 3h0m0 1h0m0 2.5h0m0 .5h0m0 4h0m0 21.5h0m.5-74.5h0m0 6h0m0 9h0m0 3.5h0m0 3.5h0m0 1.5h0m0 1.5h0m0 2h0m0 6h0m0 4.5h0m0 8.5h0m0 21.5h0m.5-19h0m.5-20.5h0m0 39.5h0m0 4.5h0m.5-32h0m0 2h0m0 1h0m0 1.5h0m0 7.5h0m0 4.5h0m0 6.5h0m0 1h0m0 12h0m.5-59.5h0m0 3.5h0m0 19h0m0 3h0m0 7h0m0 2h0m0 1.5h0m0 7.5h0m0 .5h0m0 2h0m0 5h0m0 8h0m0 1h0m.5-29.5h0m0 20.5h0m0 15h0m.5-107.5h0m0 18h0m.5-17h0m0 5h0m0 2h0m0 3.5h0m0 1h0m0 3h0m0 4h0m0 2h0m0 49h0m0 9.5h0m0 22.5h0m.5-102h0m0 2h0m0 4h0m0 3.5h0m0 2.5h0m0 1.5h0m0 59.5h0m0 4h0m0 5h0m0 8.5h0m0 15.5h0m0 9.5h0m.5-105h0m0 4.5h0m0 4.5h0m0 56h0m0 1.5h0m0 1h0m0 .5h0m0 2h0m0 5.5h0m0 1.5h0m0 1h0m0 1h0m0 1.5h0m0 .5h0m0 2.5h0m0 6.5h0m0 16.5h0m.5-114.5h0m0 .5h0m0 10.5h0m0 58h0m0 13.5h0m0 4h0m2.5-78h0m0 6h0m0 9.5h0m0 1.5h0m0 .5h0m.5-5h0m0 39.5h0m0 1.5h0m0 1.5h0m0 2h0m0 .5h0m0 1.5h0m0 1.5h0m0 .5h0m0 1h0m0 .5h0m0 4h0m0 2h0m0 1h0m.5-71.5h0m0 .5h0m0 5.5h0m0 7h0m0 5h0m0 8h0m0 2.5h0m0 23.5h0m0 3h0m0 1.5h0m0 10h0m0 1h0m0 4h0m0 1h0m0 3.5h0m.5-67.5h0m0 8h0m0 12h0m0 25.5h0m0 4h0m0 1h0m0 2h0m0 8h0m.5-55.5h0m0 9.5h0m0 1.5h0m0 1.5h0m.5-9h0m.5 19h0m0 5.5h0m0 4.5h0m0 .5h0m0 62.5h0m0 5h0m.5-101.5h0m0 27.5h0m0 8h0m0 2.5h0m0 1h0m0 4.5h0m0 .5h0m0 6h0m0 3h0m0 1.5h0m0 9h0m0 1h0m0 3.5h0m0 9.5h0m0 11h0m.5-68h0m0 12.5h0m0 1h0m0 7h0m0 1h0m0 5h0m0 12h0m0 3.5h0m.5-79h0m0 13h0m0 34h0m.5-51h0m0 11.5h0m0 3.5h0m0 4h0m0 62h0m.5-73.5h0m0 6.5h0m0 3h0m0 25h0m0 14h0m0 11.5h0m0 .5h0m0 4h0m0 2h0m0 12h0m0 2h0m.5-27.5h0m0 10h0m0 2h0m0 1h0m0 3h0m0 1.5h0m0 2.5h0m.5-22h0m0 .5h0m0 9.5h0m0 7h0m0 2.5h0m0 11.5h0m2-50.5h0m0 26.5h0m.5-5h0m0 2.5h0m0 .5h0m0 1h0m0 2h0m0 6h0m0 .5h0m0 2h0m0 1.5h0m0 1.5h0m0 19.5h0m.5-44.5h0m0 5.5h0m0 2h0m0 1h0m0 4.5h0m0 3h0m0 .5h0m0 1h0m0 1h0m0 3.5h0m0 2h0m.5-62.5h0m0 4.5h0m0 35.5h0m0 13h0m0 11.5h0m0 3.5h0m.5-81h0m0 5h0m0 4.5h0m0 1.5h0m0 1.5h0m0 2h0m0 5h0m0 6.5h0m0 7h0m0 2.5h0m0 32.5h0m0 4h0m.5-69h0m0 .5h0m0 4h0m0 3h0m0 6h0m0 8h0m0 6.5h0m0 3.5h0m0 47.5h0m0 3h0m0 3.5h0m.5-88.5h0m0 21h0m0 20h0m0 5.5h0m0 10.5h0m0 1h0m0 3h0m0 2h0m0 2h0m0 10h0m0 4h0m0 3h0m0 4.5h0m0 1.5h0m0 4.5h0m0 1.5h0m0 1.5h0m.5-98h0m0 2h0m0 6h0m0 12.5h0m0 8h0m0 1.5h0m0 1.5h0m0 6.5h0m0 16h0m0 .5h0m0 19.5h0m0 2.5h0m0 2h0m.5-73h0m0 5.5h0m0 5.5h0m0 43h0m0 8h0m0 4h0m.5-67.5h0m0 10h0m0 2h0m0 3h0m0 32.5h0m0 28.5h0m0 6.5h0m0 2h0m0 13.5h0m.5-77.5h0m0 2h0m0 7h0m0 3h0m0 19.5h0m0 1.5h0m0 2.5h0m0 2h0m0 2.5h0m0 5h0m0 8h0m0 5.5h0m0 8.5h0m0 6h0m.5-93h0m0 1h0m0 2h0m0 2h0m0 5h0m0 7h0m0 12h0m0 14h0m0 4.5h0m0 19.5h0m0 2h0m0 1.5h0m0 9h0m0 2.5h0m0 5.5h0m0 3h0m0 11h0m0 2h0m.5-107h0m0 1h0m0 10h0m0 .5h0m0 5.5h0m0 3h0m0 3h0m0 40.5h0m0 3h0m0 11.5h0m0 2h0m0 2.5h0m0 6h0m0 11.5h0m.5-75h0m0 16h0m.5-1.5h0m0 8h0m0 1.5h0m0 6.5h0m0 3.5h0m0 4.5h0m0 6h0m.5-43.5h0m0 10.5h0m0 7h0m0 7.5h0m0 2h0m0 3.5h0m0 5h0m0 4.5h0m0 1h0m0 5h0m0 3h0m0 2h0m0 3.5h0m0 4h0m0 2.5h0m0 1.5h0m0 3.5h0m0 7h0m0 1.5h0m.5-67.5h0m0 3.5h0m0 4h0m0 5.5h0m0 2.5h0m0 7.5h0m0 3.5h0m0 11.5h0m0 2.5h0m0 18.5h0m0 .5h0m.5-48.5h0m0 9.5h0m0 4h0m0 11h0m0 10.5h0m0 1.5h0m.5-47.5h0m0 7h0m0 3h0m0 10h0m0 10h0m0 .5h0m0 1h0m0 1h0m0 17.5h0m0 5h0m0 8.5h0m.5-59.5h0m0 13.5h0m0 34h0m.5 32.5h0m.5-82.5h0m0 20.5h0m0 12h0m0 3.5h0m0 1h0m0 12h0m0 2h0m0 4h0m0 1h0m0 26h0m.5-87h0m0 .5h0m0 9.5h0m0 4h0m0 1.5h0m0 4.5h0m0 4.5h0m0 1h0m0 1h0m0 1h0m0 1h0m0 3.5h0m0 5.5h0m0 3.5h0m0 4h0m0 .5h0m0 1h0m0 2h0m0 1.5h0m0 9.5h0m0 .5h0m0 1h0m0 1h0m0 2h0m0 1h0m0 .5h0m0 16h0m.5-72.5h0m0 8h0m0 5h0m0 11.5h0m0 2h0m0 7h0m0 7h0m0 18h0m0 11h0m0 21h0m1.5-110h0m0 4.5h0m0 4.5h0m0 12h0m0 2h0m0 6.5h0m0 2.5h0m0 19h0m0 3.5h0m0 19.5h0m0 2.5h0m.5-73h0m0 7.5h0m0 5.5h0m0 1.5h0m0 1.5h0m0 5.5h0m0 1h0m0 3.5h0m0 6h0m0 2h0m0 2.5h0m0 1h0m0 1h0m0 1h0m0 2h0m0 2h0m0 8h0m0 11h0m.5-61.5h0m0 6.5h0m0 4.5h0m0 12h0m0 4.5h0m0 7h0m0 8.5h0m0 5h0m0 6.5h0m0 2.5h0m.5-38h0m0 24h0m.5-15h0m.5-4.5h0m0 9h0m0 6.5h0m0 23h0m0 4h0m0 5h0m0 7h0m.5-46.5h0m0 3h0m0 7.5h0m0 3h0m0 1.5h0m0 3h0m0 1.5h0m0 2.5h0m0 2.5h0m0 4h0m0 1h0m0 .5h0m0 5.5h0m0 2h0m0 4.5h0m0 5h0m0 8.5h0m.5-58h0m0 30h0m0 4h0m0 14h0m0 10h0m.5-75.5h0m0 20h0m0 16h0m.5-37h0m0 3.5h0m0 1.5h0m0 5.5h0m0 16.5h0m0 3h0m0 2h0m0 42h0m.5-79h0m0 6.5h0m0 6h0m0 1h0m0 6.5h0m0 1.5h0m0 2h0m0 4.5h0m0 5.5h0m0 3.5h0m0 1.5h0m0 2.5h0m0 1h0m0 3h0m0 1h0m0 3.5h0m0 5.5h0m.5-75h0m0 7.5h0m0 30.5h0m0 2h0m0 2.5h0m0 13h0m0 9.5h0m0 3.5h0m0 11h0m0 26h0m.5-115.5h0m0 4.5h0m0 6.5h0m0 2h0m0 .5h0m0 1h0m0 1h0m0 1.5h0m.5-17h0m0 15.5h0m0 3.5h0m0 36h0m0 2h0m0 20.5h0m.5-76.5h0m0 5.5h0m0 49h0m0 3.5h0m0 1h0m0 1.5h0m0 2.5h0m0 5.5h0m0 3.5h0m.5-73h0m0 4h0m0 1.5h0m0 4h0m0 10h0m0 2h0m0 20.5h0m0 9.5h0m0 5.5h0m0 3h0m0 3h0m0 .5h0m0 2.5h0m0 1.5h0m0 4h0m0 8h0m0 3h0m0 .5h0m0 1h0m0 6h0m0 3.5h0m.5-91.5h0m0 2h0m0 3.5h0m0 3.5h0m0 1h0m0 2h0m0 6h0m0 30h0m0 8.5h0m0 17.5h0m0 4.5h0m0 1h0m0 3.5h0m0 1h0m0 .5h0m0 1h0m0 .5h0m0 1h0m0 2.5h0m0 3.5h0m0 2h0m0 2h0m.5-27.5h0m0 3.5h0m0 2.5h0m0 26.5h0m.5-44.5h0m0 6h0m0 3.5h0m0 4h0m0 12h0m0 4h0m0 9.5h0m0 3h0m0 5h0m.5-38.5h0m0 13h0m0 1.5h0m0 3.5h0m0 4.5h0m0 .5h0m0 3.5h0m0 .5h0m0 1.5h0m.5-38h0m0 19.5h0m0 15h0m0 5h0m.5-52h0m0 8.5h0m0 2h0m0 5h0m0 1.5h0m0 1h0m0 7h0m0 4.5h0m0 3.5h0m.5-31h0m0 9.5h0m0 1h0m0 6.5h0m0 1.5h0m0 2.5h0m0 .5h0m0 4.5h0m0 7.5h0m0 3h0m0 2.5h0m0 .5h0m0 18h0m.5-49.5h0m0 24h0m.5-52.5h0m0 1.5h0m0 24h0m0 31.5h0m0 18h0m.5-93.5h0m0 2.5h0m0 .5h0m0 1h0m0 17h0m0 2.5h0m0 21h0m0 7h0m0 2.5h0m0 1h0m0 3h0m0 5h0m0 1.5h0m0 1.5h0m0 2h0m0 2h0m0 4h0m0 1.5h0m0 3.5h0m0 5.5h0m.5-78h0m0 12.5h0m0 2.5h0m0 6h0m0 35.5h0m0 27h0m.5-88h0m0 22h0m0 5h0m0 28h0m.5-66h0m0 9h0m0 4.5h0m0 33h0m0 12h0m0 2.5h0m0 3h0m0 3.5h0m0 .5h0m0 13.5h0m0 23h0m.5-99.5h0m0 32h0m0 15.5h0m0 5h0m0 14h0m0 3h0m0 3.5h0m0 2.5h0m0 1.5h0m0 1.5h0m0 22.5h0m.5-106.5h0m0 12h0m0 4.5h0m0 .5h0m0 2h0m0 13h0m0 23h0m0 14.5h0m0 10h0m.5-31h0m0 3.5h0m0 4h0m0 1h0m0 9h0m.5-33.5h0m0 22.5h0m0 5.5h0m0 2.5h0m0 7h0m0 3h0m0 1.5h0m0 19h0m0 4.5h0m.5-61h0m0 26.5h0m0 14.5h0m0 2.5h0m0 12h0m0 4h0m.5-38h0m0 1h0m0 1.5h0m0 5.5h0m0 1.5h0m0 4h0m0 1.5h0m0 8.5h0m0 1h0m.5-41.5h0m0 9.5h0m0 12.5h0m0 4.5h0m0 2.5h0m0 5h0m0 1.5h0m0 2.5h0m0 5h0m0 2h0m0 12.5h0m.5-47h0m0 29.5h0m0 6h0m0 2.5h0m0 .5h0m.5 6.5h0m.5-57h0m0 10h0m0 15.5h0m0 6h0m0 7.5h0m0 6.5h0m0 3h0m0 .5h0m.5-59h0m0 11h0m0 1h0m0 7h0m0 4.5h0m0 4h0m0 2h0m0 .5h0m0 2h0m0 2h0m0 2.5h0m0 3h0m0 3h0m0 1.5h0m0 2.5h0m0 1h0m0 3h0m0 2.5h0m0 9h0m0 .5h0m.5-24.5h0m0 7h0m0 8.5h0m1-2.5h0m0 11h0m0 1h0m.5-34.5h0m0 5h0m0 1h0m0 6.5h0m0 2h0m0 10h0m0 3h0m0 1.5h0m0 9h0m.5-27h0m0 6h0m0 5h0m0 1.5h0m0 3h0m0 5h0m0 3h0m0 6.5h0m1-34h0m0 7h0m0 5.5h0m0 1h0m.5-23.5h0m0 8h0m0 7h0m0 3h0m0 2.5h0m0 8.5h0m.5-17.5h0m0 1h0m0 7h0m0 11h0m0 36.5h0m.5-63h0m0 5.5h0m0 4.5h0m0 2h0m0 .5h0m0 1.5h0m0 8h0m0 1.5h0m0 2h0m0 2h0m0 .5h0m0 10h0m0 6.5h0m.5-24h0m.5-2.5h0m.5-25.5h0m0 37h0m.5-53h0m0 9h0m0 4h0m0 7h0m0 6h0m0 3.5h0m0 1h0m0 1.5h0m0 8h0m0 2h0m.5-7.5h0m0 .5h0m0 8.5h0m.5-25.5h0m.5 17h0m.5-30h0m0 5.5h0m0 3h0m0 2h0m0 7h0m0 .5h0m0 2h0m0 5h0m0 11h0m0 2.5h0m.5-47h0m0 10h0m0 .5h0m0 3h0m0 1.5h0m0 1h0m0 4h0m0 4h0m0 6h0m0 12h0m.5-67h0m0 36.5h0m0 11.5h0m0 4h0m0 5h0m0 6.5h0m0 1.5h0m0 23h0m.5-75h0m0 11h0m0 12.5h0m0 4h0m0 1.5h0m0 1h0m0 4h0m0 2.5h0m0 4.5h0m0 6h0m0 10h0m0 9.5h0m0 6h0m0 .5h0m.5-73h0m0 14.5h0m0 4.5h0m0 3h0m0 9.5h0m0 1.5h0m0 22.5h0m0 9h0m0 11.5h0m.5-73h0m0 36.5h0m0 2.5h0m0 1.5h0m0 2h0m0 13.5h0m0 3.5h0m0 8h0m0 3h0m0 1.5h0m.5-64.5h0m0 6h0m0 .5h0m0 20h0m0 11.5h0m0 4.5h0m0 13h0m0 5.5h0m0 7.5h0m.5-74h0m0 7.5h0m0 2.5h0m.5-15h0m0 3h0m0 4.5h0m0 1.5h0m0 1h0m0 8h0m0 7h0m0 3h0m0 3h0m0 4h0m0 5.5h0m0 10h0m0 10h0m.5-66h0m0 21h0m0 1h0m0 5.5h0m0 7.5h0m0 3h0m0 1h0m0 5h0m0 3.5h0m0 3h0m0 1.5h0m0 6h0m0 1h0m0 3h0m0 1h0m0 6.5h0m0 10.5h0m.5-79h0m0 1h0m0 6.5h0m0 9h0m0 6h0m0 6.5h0m0 3h0m0 4h0m0 29h0m0 2h0m0 4.5h0m0 12.5h0m0 22.5h0m.5-107.5h0m0 25h0m0 29.5h0m0 7.5h0m.5-27.5h0m0 7h0m0 1h0m0 2.5h0m0 4.5h0m0 6.5h0m0 3.5h0m0 2.5h0m0 10h0m0 .5h0m0 10.5h0m.5-58.5h0m0 2.5h0m0 1.5h0m0 10.5h0m0 8h0m0 5h0m0 6h0m0 6h0m0 16h0m0 27.5h0m.5-78h0m0 2h0m0 5.5h0m0 4.5h0m0 23h0m0 7h0m.5-44.5h0m0 7h0m0 8.5h0m0 3.5h0m0 3.5h0m0 9.5h0m0 26h0m.5-63h0m0 22h0m0 .5h0m0 2.5h0m0 2.5h0m0 4h0m0 4h0m0 4.5h0m0 13.5h0m.5-52h0m0 2h0m0 10h0m0 3.5h0m0 12.5h0m0 3.5h0m0 7.5h0m0 4.5h0m0 1.5h0m0 1.5h0m0 5.5h0m0 5h0m0 9.5h0m0 2.5h0m.5-52.5h0m0 19.5h0m0 3h0m0 3h0m0 5.5h0m0 12h0m0 3.5h0m0 4.5h0m0 15h0m.5-66.5h0m0 17.5h0m0 2.5h0m0 16h0m.5-49.5h0m0 7.5h0m0 8.5h0m0 1.5h0m0 2.5h0m0 1.5h0m0 .5h0m0 5h0m0 1.5h0m0 10h0m0 4h0m0 4h0m.5-22h0m0 29.5h0m.5-21h0m0 2.5h0m0 7h0m.5-18.5h0m0 .5h0m0 4.5h0m0 2h0m0 1h0m0 2.5h0m0 2h0m0 1.5h0m0 1.5h0m0 1.5h0m0 2.5h0m0 4.5h0m0 2h0m0 9.5h0m.5-32.5h0m0 19h0m1.5-10.5h0m0 5.5h0m0 2.5h0m0 5.5h0m0 7.5h0m0 12.5h0m.5-36.5h0m0 1h0m0 5h0m0 6.5h0m0 2.5h0m0 3.5h0m0 1.5h0m0 6h0m0 1h0m.5-31h0m0 9h0m0 4.5h0m0 1h0m0 1h0m0 8.5h0m0 .5h0m.5-17.5h0m0 4h0m.5-20.5h0m0 4h0m0 1.5h0m0 1.5h0m0 1h0m0 1h0m0 2h0m0 1h0m0 6h0m0 3.5h0m0 6.5h0m0 .5h0m0 17.5h0m.5-44h0m0 2h0m0 9.5h0m0 17.5h0m1.5-71.5h0m0 49.5h0m0 7.5h0m0 2.5h0m0 1.5h0m0 1h0m.5-72h0m0 2.5h0m0 3h0m0 .5h0m0 1h0m0 3.5h0m0 6h0m0 1.5h0m0 3h0m0 1.5h0m0 2.5h0m0 2h0m0 28.5h0m0 5h0m0 2.5h0m0 1h0m0 2.5h0m0 11.5h0m0 2.5h0m0 2h0m0 7.5h0m.5-84h0m0 7.5h0m0 .5h0m0 4h0m0 1h0m0 .5h0m0 2h0m0 4.5h0m0 25.5h0m0 8.5h0m0 9.5h0m0 .5h0m0 1.5h0m0 1h0m0 1h0m0 1.5h0m0 3.5h0m0 7h0m0 .5h0m0 12.5h0m0 5h0m.5-79h0m0 31.5h0m1-1h0m.5-8.5h0m0 2h0m0 2.5h0m0 2h0m0 8h0m.5-17.5h0m0 2h0m0 1h0m0 3h0m0 7.5h0m0 2.5h0m0 3h0m0 1h0m0 5.5h0m0 5.5h0m.5-31.5h0m0 5h0m0 6.5h0m0 9.5h0m.5-34.5h0m0 67.5h0m.5-102h0m0 5.5h0m0 3.5h0m0 23h0m0 3h0m0 4.5h0m0 3.5h0m0 2.5h0m0 3.5h0m0 7.5h0m0 8.5h0m0 10h0m0 4.5h0m.5-75h0m0 8.5h0m0 .5h0m0 2.5h0m0 11h0m0 1.5h0m0 3h0m0 1h0m0 5h0m0 4h0m0 .5h0m0 6h0m0 5.5h0m0 4.5h0m0 3.5h0m0 5.5h0m0 7h0m.5-77h0m0 6.5h0m0 4h0m0 2h0m0 20.5h0m0 17h0m0 3h0m0 4.5h0m.5-56h0m0 2.5h0m0 4.5h0m0 5.5h0m0 5h0m0 21.5h0m0 1.5h0m0 12.5h0m0 24h0m.5-77.5h0m0 16h0m0 14.5h0m0 6.5h0m0 9h0m0 10h0m0 4h0m0 1.5h0m0 2h0m0 4h0m0 11.5h0m0 1.5h0m0 3h0m0 1.5h0m0 2.5h0m.5-78h0m0 20h0m0 6.5h0m0 3.5h0m0 3h0m0 5.5h0m0 5.5h0m0 1h0m0 3h0m0 10.5h0m0 2.5h0m.5-65.5h0m0 .5h0m0 12h0m0 106h0m.5-126h0m0 4h0m0 2h0m0 3.5h0m0 1.5h0m0 .5h0m0 2h0m0 3h0m0 2.5h0m0 2.5h0m0 43.5h0m.5-50.5h0m0 26h0m0 2.5h0m0 3h0m0 1h0m0 1.5h0m0 5.5h0m0 6.5h0m0 2h0m0 3.5h0m0 2h0m0 1h0m0 1.5h0m0 2h0m0 4h0m0 1h0m0 2.5h0m0 .5h0m0 4.5h0m0 1h0m0 35.5h0m.5-92h0m0 5h0m0 2h0m0 1.5h0m0 3.5h0m0 8.5h0m0 1h0m0 1h0m0 .5h0m0 5.5h0m0 18h0m0 8.5h0m0 .5h0m0 3.5h0m0 5h0m0 19.5h0m.5-96h0m0 19.5h0m0 36.5h0m0 18h0m.5-35h0m0 5h0m0 2.5h0m0 3.5h0m0 3h0m.5-31.5h0m0 2h0m0 3h0m0 1h0m0 2h0m0 1.5h0m0 7h0m0 5h0m0 5.5h0m0 3.5h0m0 3.5h0m0 2.5h0m0 1.5h0m0 2h0m0 3h0m0 .5h0m0 8h0m0 5.5h0m0 16.5h0m0 .5h0m.5-60h0m0 4h0m0 2h0m0 55.5h0m1-52h0m0 3h0m0 6.5h0m0 13h0m0 .5h0m.5-29h0m0 5h0m0 2h0m0 3.5h0m0 1h0m0 1h0m0 2h0m0 3.5h0m0 2.5h0m0 3.5h0m0 2.5h0m.5-36h0m0 2h0m0 13h0m0 3h0m0 1h0m0 10h0m0 2.5h0m0 1h0m0 2.5h0m0 2h0m.5-13h0m0 3h0m1.5-12.5h0m0 14h0m0 6.5h0m0 3.5h0m.5-27.5h0m0 2h0m0 3h0m0 1h0m0 1.5h0m0 1.5h0m0 .5h0m0 1h0m0 1h0m0 2h0m0 1h0m0 7h0m0 3.5h0m0 13.5h0m.5-19h0m.5 4h0m0 4.5h0m0 1.5h0m0 1h0m0 2h0m0 1.5h0m0 4.5h0m0 27h0m.5-66.5h0m0 2.5h0m0 7h0m0 2.5h0m0 5.5h0m0 1h0m0 4.5h0m0 3.5h0m0 .5h0m0 9.5h0m0 13.5h0m.5-45.5h0m0 10h0m0 20.5h0m.5-67h0m0 14.5h0m0 9.5h0m0 1h0m0 1h0m0 5h0m0 4h0m0 3h0m0 2h0m0 13h0m0 1h0m0 2.5h0m.5-31h0m0 1h0m0 6.5h0m0 12.5h0m0 2.5h0m0 3.5h0m0 21h0m.5-43.5h0m0 20h0m0 13.5h0m0 16h0m1-72.5h0m0 4.5h0m0 5.5h0m0 4h0m0 1h0m0 1h0m0 10.5h0m0 4h0m0 5h0m0 .5h0m0 4h0m0 5h0m.5-37h0m0 2h0m0 4h0m0 4h0m0 4.5h0m0 4h0m0 3h0m0 3.5h0m0 4h0m0 6h0m0 11h0m.5-55.5h0m0 8h0m0 5h0m0 7h0m0 1.5h0m0 .5h0m0 1h0m0 6.5h0m0 .5h0m0 9.5h0m0 8.5h0m0 3h0m0 14h0m.5-66h0m0 27.5h0m0 26.5h0m0 5h0m0 7.5h0m.5-61h0m0 31.5h0m0 .5h0m0 6.5h0m0 3h0m0 2h0m0 1h0m0 1.5h0m0 3.5h0m0 4.5h0m0 2.5h0m0 1h0m0 3.5h0m0 2.5h0m0 3.5h0m0 2h0m0 1h0m0 2.5h0m.5-60h0m0 1h0m0 14.5h0m0 1h0m0 .5h0m0 4.5h0m0 2.5h0m0 2h0m0 8.5h0m0 1h0m0 .5h0m0 2.5h0m0 .5h0m0 1h0m0 4.5h0m0 1h0m0 1h0m0 5h0m3-35h0m0 9h0m0 1.5h0m0 10h0m0 4.5h0m0 4.5h0m.5-23h0m0 1h0m0 4h0m0 1h0m0 1h0m0 .5h0m0 1h0m0 .5h0m0 1h0m0 .5h0m0 1h0m0 1h0m0 6h0m0 4.5h0m1-18.5h0m0 10h0m1-11.5h0m0 13h0m0 1.5h0m0 3.5h0m0 3h0m0 3.5h0m0 3.5h0m.5-42h0m0 3.5h0m0 4h0m0 9h0m0 2h0m0 1.5h0m0 2h0m0 1.5h0m0 2h0m0 5.5h0m0 3h0m0 1h0m0 2h0m0 .5h0m0 4.5h0m0 2h0m0 1h0m0 8h0m0 2.5h0m.5-90.5h0m0 1h0m0 5h0m0 3.5h0m0 4h0m0 1h0m0 33.5h0m0 8.5h0m0 6h0m0 3.5h0m0 .5h0m0 1.5h0m0 3.5h0m0 2.5h0m0 .5h0m0 9.5h0m.5-82h0m0 2h0m0 8.5h0m0 3h0m0 30.5h0m.5-46.5h0m0 4h0m0 7.5h0m0 33.5h0m.5-39.5h0m0 1h0m0 .5h0m0 2.5h0m0 6h0m0 23h0m0 4h0m0 8h0m0 4.5h0m0 6h0m0 1.5h0m.5-27h0m0 8.5h0m0 2h0m0 2h0m0 3h0m0 2h0m0 4h0m0 1.5h0m0 1.5h0m0 3.5h0m0 2h0m1-25h0m.5-6h0m0 9h0m0 5.5h0m0 5h0m0 1h0m0 10.5h0m0 3.5h0m.5-47h0m0 25h0m0 9.5h0m.5-27h0m0 2.5h0m0 6.5h0m0 7h0m0 6.5h0m0 6h0m0 3h0m0 4h0m0 2h0m0 1h0m0 2.5h0m0 8h0m.5-93h0m0 48.5h0m0 7.5h0m0 5.5h0m0 4h0m0 4h0m0 4.5h0m0 2.5h0m0 12.5h0m0 5h0m.5-37h0m0 1.5h0m0 8h0m0 8.5h0m0 25h0m.5-30.5h0m0 32h0m.5-47.5h0m0 9.5h0m0 9.5h0m0 5.5h0m0 5h0m0 3h0m0 3h0m0 5h0m0 2h0m.5-36.5h0m0 7.5h0m0 3h0m0 1h0m0 5h0m0 4h0m0 1.5h0m0 3.5h0m0 2.5h0m0 3h0m0 2.5h0m1.5-34.5h0m0 7.5h0m0 7h0m0 4h0m.5-19.5h0m0 6.5h0m0 4.5h0m0 2.5h0m0 3.5h0m0 1.5h0m0 3h0m0 1h0m0 2.5h0m0 1.5h0m0 4.5h0m.5-4h0m0 1h0m0 1h0m0 3h0m.5-38h0m0 .5h0m0 3.5h0m0 8h0m0 3.5h0m0 28h0m.5-70.5h0m0 3.5h0m0 13h0m0 6h0m0 12.5h0m0 1h0m0 4h0m0 4.5h0m0 2h0m0 2h0m0 1h0m0 3h0m0 4h0m0 6h0m0 3h0m0 2.5h0m0 5.5h0m0 7h0m.5-72.5h0m0 3h0m0 14.5h0m0 2.5h0m0 4h0m.5-38h0m0 2h0m0 4h0m0 5.5h0m0 4.5h0m0 2.5h0m0 .5h0m0 1.5h0m0 1h0m0 1h0m0 4h0m0 .5h0m0 9.5h0m0 5h0m0 30.5h0m0 16h0m.5-78h0m0 6.5h0m0 8.5h0m0 1h0m0 4.5h0m0 1.5h0m0 .5h0m0 4h0m0 1h0m0 3h0m0 2.5h0m0 4.5h0m0 1h0m0 1.5h0m.5-39h0m0 7.5h0m0 1h0m0 10h0m0 15h0m2.5-11h0m0 9h0m0 .5h0m0 2h0m0 2h0m0 .5h0m0 1h0m0 2h0m0 1h0m0 3.5h0m.5-17.5h0m0 1h0m0 .5h0m0 1h0m0 1h0m0 11.5h0m0 1.5h0m0 2h0m0 2.5h0m0 1h0m.5-75.5h0m0 7h0m0 2.5h0m0 52h0m0 5h0m.5-70h0m0 2h0m0 4h0m.5 2h0m0 17h0m0 4.5h0m0 15h0m0 1h0m0 .5h0m0 1.5h0m0 3.5h0m0 1h0m0 2h0m0 18.5h0m0 7.5h0m0 .5h0m0 1.5h0m.5-70h0m0 12h0m0 1h0m0 8h0m0 .5h0m0 1h0m0 2.5h0m0 1h0m0 2.5h0m0 1h0m0 8.5h0m0 5.5h0m0 3h0m0 2h0m0 2h0m0 3.5h0m0 1.5h0m0 5.5h0m0 2h0m0 14h0m0 2h0m0 1.5h0m0 17h0m.5-67h0m0 11h0m0 2.5h0m0 6.5h0m0 1.5h0m0 5h0m0 7.5h0m0 6.5h0m.5-44.5h0m.5 5.5h0m0 .5h0m0 37.5h0m0 1.5h0m0 3.5h0m0 6h0m.5-46h0m0 1.5h0m0 1.5h0m0 7.5h0m0 2.5h0m0 7.5h0m0 1h0m0 1.5h0m0 4h0m0 3h0m0 2.5h0m0 7h0m0 4.5h0m0 1h0m0 16h0m.5-56.5h0m0 .5h0m0 2.5h0m0 6.5h0m0 1.5h0m0 2.5h0m0 7.5h0m0 6.5h0m0 4.5h0m0 6h0m0 5h0m1.5-95.5h0m0 2h0m0 14h0m0 42h0m0 2h0m0 11h0m0 5.5h0m0 6h0m.5-83.5h0m0 3h0m0 3.5h0m0 41.5h0m0 7.5h0m0 2.5h0m0 6h0m0 1.5h0m0 2h0m0 1h0m0 2h0m0 3h0m0 1.5h0m0 4.5h0m0 4.5h0m.5-86h0m0 3.5h0m0 4.5h0m0 2.5h0m0 45h0m0 12.5h0m0 3h0m0 3h0m0 5.5h0m.5-80.5h0m0 .5h0m0 1h0m0 11h0m0 3h0m0 3h0m0 64h0m.5-85h0m0 1h0m0 8h0m0 2.5h0m0 46.5h0m0 10h0m.5-55h0m0 1.5h0m0 1h0m0 5h0m0 33h0m0 1h0m0 2h0m0 3.5h0m0 5h0m0 2h0m0 4h0m0 8.5h0m0 1.5h0m0 12h0m0 3.5h0m0 18h0m.5-114h0m0 33h0m0 9.5h0m0 .5h0m0 2.5h0m0 2.5h0m0 2.5h0m0 3.5h0m0 11.5h0m0 9.5h0m.5-42.5h0m0 20.5h0m0 6.5h0m0 3.5h0m0 11h0m0 8.5h0m0 8h0m0 4h0m.5-49h0m0 4.5h0m0 11h0m0 8h0m0 3.5h0m0 5.5h0m0 2.5h0m0 4h0m0 2.5h0m0 1h0m0 .5h0m0 1h0m0 3.5h0m0 5h0m0 2h0m0 1.5h0m0 2h0m0 2.5h0m.5-48.5h0m0 12h0m0 7.5h0m0 2.5h0m0 6.5h0m0 5.5h0m0 3.5h0m0 4h0m0 18h0m.5-19.5h0m0 17h0m.5-90.5h0m0 32h0m0 4h0m0 29h0m.5-46.5h0m0 8.5h0m0 3h0m0 4h0m0 4.5h0m0 4h0m0 1.5h0m0 3h0m0 2.5h0m0 1.5h0m0 7h0m0 1.5h0m0 2.5h0m0 19h0m.5-51.5h0m0 2h0m0 5h0m0 2h0m0 9.5h0m0 6.5h0m0 8.5h0m0 4.5h0m.5-15h0m0 6.5h0m0 11h0m0 2h0m0 6.5h0m.5-46h0m0 7.5h0m0 6h0m0 10.5h0m0 1h0m0 2.5h0m0 5h0m0 8h0m0 1.5h0m0 1h0m0 7h0m0 4.5h0m0 1h0m.5-64h0m0 3h0m0 26.5h0m0 14h0m0 1.5h0m0 1.5h0m0 3.5h0m0 5h0m0 1h0m.5-45h0m0 6h0m0 2.5h0m0 6.5h0m0 2h0m0 13h0m0 11.5h0m0 5.5h0m0 12h0m.5-78.5h0m0 12h0m0 9h0m0 1.5h0m0 9.5h0m0 8h0m0 1h0m0 5.5h0m0 1.5h0m0 23h0m.5-56h0m0 2.5h0m0 7.5h0m0 1h0m0 .5h0m0 2.5h0m0 5h0m0 .5h0m0 3.5h0m0 6h0m.5-34.5h0m0 6h0m0 4.5h0m0 2h0m0 1h0m0 8h0m0 9h0m0 1h0m1.5-5.5h0m0 6h0m0 8.5h0m.5-20h0m0 2h0m0 4.5h0m0 3.5h0m0 3h0m0 3h0m.5-19.5h0m0 1h0m0 14.5h0m0 .5h0m0 2h0m0 2h0m.5-43h0m0 6.5h0m0 3h0m0 7h0m0 7h0m0 5.5h0m0 5h0m0 2.5h0m.5-28h0m0 2h0m0 1h0m0 4h0m0 3.5h0m0 10.5h0m0 4h0m0 10h0m0 2h0m0 10h0m.5-46.5h0m0 1.5h0m0 3.5h0m0 4.5h0m0 .5h0m0 7h0m0 8h0m4-15h0m0 9h0m0 1h0m0 1h0m0 1h0m0 1.5h0m0 1h0m0 2.5h0m0 2.5h0m0 4h0m0 3.5h0m.5-86.5h0m0 7h0m0 2h0m0 1h0m0 3.5h0m0 54h0m0 7.5h0m0 3h0m0 4h0m.5-84h0m0 6.5h0m0 .5h0m0 3.5h0m0 8h0m0 .5h0m0 18.5h0m0 26h0m0 2.5h0m0 16.5h0m0 4.5h0m0 4h0m0 1h0m.5-88.5h0m0 13.5h0m0 4.5h0m0 2h0m0 1h0m0 2h0m0 2.5h0m0 1h0m0 .5h0m0 2h0m0 2h0m.5-28.5h0m0 2.5h0m0 6.5h0m0 11.5h0m0 4h0m0 1h0m0 1h0m0 22h0m0 .5h0m0 3.5h0m0 2h0m0 3h0m0 4.5h0m0 3.5h0m0 1h0m0 2.5h0m0 2h0m0 8.5h0m0 4h0m0 15.5h0m.5-104h0m0 1.5h0m0 14.5h0m0 2.5h0m0 8h0m0 9h0m0 2h0m0 14.5h0m0 4h0m0 9h0m0 3.5h0m0 10h0m0 1h0m0 4h0m0 12.5h0m0 4.5h0m.5-92.5h0m0 2h0m0 12h0m0 5.5h0m0 6h0m0 21.5h0m0 21h0m.5-72.5h0m0 13.5h0m0 6.5h0m0 15.5h0m0 11.5h0m0 3h0m0 3.5h0m0 4h0m0 4h0m0 2h0m0 1h0m0 2h0m0 2h0m0 2.5h0m0 7h0m0 5h0m0 3.5h0m0 .5h0m.5-52.5h0m0 2.5h0m0 1h0m0 4h0m0 4h0m0 2.5h0m0 6.5h0m0 4h0m0 13h0m0 .5h0m0 3.5h0m0 17.5h0m0 16h0m.5-66.5h0m0 31.5h0m.5-54h0m.5 3h0m0 1h0m0 1h0m0 2h0m0 7h0m0 1h0m0 4.5h0m0 3.5h0m0 8.5h0m0 4.5h0m0 2h0m0 2.5h0m0 5.5h0m0 1h0m.5-52.5h0m0 7h0m0 8h0m0 7h0m0 1h0m0 2.5h0m0 .5h0m0 3.5h0m0 .5h0m0 2.5h0m0 1.5h0m0 2h0m0 2.5h0m0 1.5h0m0 9h0m0 19h0m.5-79.5h0m0 2h0m0 5.5h0m0 3h0m0 6h0m0 5h0m.5-31h0m0 18.5h0m0 3.5h0m0 2h0m0 2h0m0 3.5h0m0 2.5h0m0 6.5h0m.5-34.5h0m0 11h0m0 3.5h0m0 2h0m0 4.5h0m0 40.5h0m0 13.5h0m0 6h0m0 3.5h0m0 4.5h0m0 5.5h0m0 3h0m.5-99.5h0m0 6.5h0m0 2h0m0 5h0m0 .5h0m0 12.5h0m0 5.5h0m0 5h0m0 1.5h0m0 18.5h0m0 1.5h0m0 2.5h0m0 1h0m0 3.5h0m0 3h0m0 1h0m0 2h0m0 1h0m0 1.5h0m0 2.5h0m0 5h0m0 6h0m0 2h0m0 1h0m0 3.5h0m0 .5h0m0 7h0m0 9h0m0 6.5h0m.5-67.5h0m0 2.5h0m0 .5h0m0 3h0m0 4h0m0 6h0m0 16.5h0m0 2h0m0 11h0m0 5h0m.5-33h0m1-24h0m0 3h0m0 4.5h0m0 3.5h0m0 3h0m0 6.5h0m0 9h0m0 14h0m.5-35.5h0m0 4h0m0 4.5h0m0 .5h0m0 1h0m0 1h0m0 6h0m0 2h0m0 1h0m0 3h0m0 1h0m0 3h0m0 2.5h0m0 3h0m0 5.5h0m0 2h0m0 4h0m0 12.5h0m0 5h0m.5-76h0m0 7h0m0 2h0m0 11.5h0m0 6.5h0m0 2.5h0m0 6h0m0 8.5h0m0 .5h0m0 2.5h0m0 1.5h0m0 2h0m.5 9.5h0m1-77.5h0m0 2h0m0 18.5h0m0 3h0m0 6.5h0m0 1h0m0 4.5h0m0 20.5h0m0 3.5h0m.5-56.5h0m0 3h0m0 3h0m0 6h0m0 2h0m0 1h0m0 4h0m0 4h0m0 1.5h0m0 1h0m0 3.5h0m0 2h0m0 3h0m0 3h0m0 .5h0m0 6.5h0m0 1h0m0 10.5h0m.5-57h0m0 12h0m0 10.5h0m0 19h0m.5-13.5h0m0 20h0m0 16.5h0m.5-39.5h0m0 6.5h0m0 2h0m0 3.5h0m0 6.5h0m0 1h0m0 3h0m0 1h0m0 4.5h0m0 3h0m0 .5h0m0 3.5h0m.5-42h0m0 1h0m0 3.5h0m0 4h0m0 8.5h0m0 3.5h0m0 2h0m0 2h0m0 30.5h0m.5-44.5h0m0 2h0m0 25.5h0m0 .5h0m.5-36.5h0m.5-1.5h0m0 .5h0m0 2.5h0m0 3h0m0 6h0m0 1.5h0m0 3h0m0 3h0m0 8h0m.5-20h0m0 1h0m0 6h0m0 1h0m0 2.5h0m0 3h0m0 2.5h0m.5-17.5h0m0 23.5h0m0 2h0m0 25.5h0m.5-47h0m0 15h0m0 2h0m0 3h0m0 3.5h0m0 6.5h0m0 3.5h0m0 .5h0m0 2h0m0 4h0m0 2.5h0m0 2.5h0m.5-51h0m0 8.5h0m0 16h0m0 17.5h0m0 1h0m0 9h0m0 .5h0m0 4h0m.5-56h0m0 7.5h0m0 5.5h0m0 3h0m0 1.5h0m0 2h0m0 8h0m0 3h0m0 2h0m0 14.5h0m.5-45.5h0m0 10h0m0 5h0m0 2h0m0 4h0m0 14.5h0m0 17h0m.5-26h0m.5 11.5h0m.5 1.5h0m0 3.5h0m0 3.5h0m0 12h0m.5-41h0m0 4h0m0 1h0m0 3h0m0 1.5h0m0 2h0m0 1h0m0 2h0m0 4h0m0 2h0m0 1h0m0 5.5h0m0 2h0m0 3h0m0 3.5h0m0 1.5h0m0 1h0m0 1h0m0 1.5h0m0 1.5h0m0 10.5h0m.5-52.5h0m0 19h0m0 23h0m0 1.5h0m.5-28.5h0m.5-35.5h0m0 7h0m0 3h0m0 .5h0m0 3.5h0m0 2h0m0 .5h0m0 2.5h0m0 18.5h0m.5-42h0m0 9.5h0m0 4h0m0 3h0m0 5.5h0m0 3.5h0m0 2h0m0 2.5h0m0 2.5h0m0 .5h0m0 3h0m0 1.5h0m0 13h0m0 5h0m.5-64.5h0m0 4.5h0m0 3h0m0 4.5h0m0 3h0m0 13.5h0m0 22.5h0m.5-45h0m0 5h0m0 4h0m0 4.5h0m0 18.5h0m0 2h0m0 .5h0m0 8.5h0m0 17h0m0 8.5h0m.5-91h0m0 8.5h0m0 3h0m0 8.5h0m0 .5h0m0 2h0m0 11.5h0m0 4h0m0 2h0m0 1h0m0 2h0m0 1h0m0 5h0m0 3h0m0 .5h0m0 6.5h0m0 .5h0m0 6h0m0 2h0m0 7.5h0m.5-72.5h0m0 1h0m0 10.5h0m0 3h0m0 29.5h0m0 4h0m0 30h0m.5-74h0m0 8.5h0m0 1h0m0 3h0m0 .5h0m0 4h0m1.5-32h0m0 1.5h0m0 5.5h0m0 3h0m0 2.5h0m0 2h0m0 57.5h0m0 2h0m0 4h0m0 2.5h0m0 2.5h0m0 2.5h0m0 .5h0m.5-87h0m0 9.5h0m0 55.5h0m0 6.5h0m0 6h0m0 3h0m0 2h0m0 1h0m0 2h0m0 13.5h0m.5-102h0m0 8h0m0 72.5h0m0 48.5h0m.5-129h0m0 2.5h0m0 5h0m0 2.5h0m0 6h0m0 23h0m0 6.5h0m0 11.5h0m0 1h0m0 1h0m0 1.5h0m0 3h0m0 2.5h0m0 4h0m0 1.5h0m0 10h0m0 2.5h0m0 4.5h0m0 3h0m0 24.5h0m.5-112.5h0m0 1.5h0m0 7.5h0m0 4.5h0m0 26h0m0 19h0m0 14.5h0m0 1.5h0m1 3.5h0m0 11.5h0m.5-67h0m0 4.5h0m0 .5h0m0 15.5h0m0 2h0m0 1.5h0m0 2.5h0m0 2h0m0 .5h0m0 5h0m0 1.5h0m0 .5h0m0 1.5h0m0 1h0m0 2.5h0m0 4h0m0 2.5h0m0 .5h0m0 5.5h0m0 2h0m0 6.5h0m0 3.5h0m0 5h0m0 17.5h0m.5-88.5h0m0 2h0m0 12.5h0m0 2.5h0m0 2.5h0m0 3h0m0 3.5h0m0 1.5h0m0 3.5h0m0 1h0m0 .5h0m0 8h0m0 1h0m0 1h0m0 1.5h0m0 .5h0m0 2.5h0m0 3.5h0m0 3.5h0m0 4h0m0 3h0m0 5.5h0m0 3h0m0 1h0m0 3.5h0m0 8h0m.5-53h0m0 22.5h0m0 1h0m.5-2h0m1 17.5h0m.5-4h0m0 2.5h0m0 5.5h0m0 1h0m0 4h0m.5-21h0m0 2h0m0 1.5h0m0 1.5h0m0 .5h0m0 1h0m0 2.5h0m0 2h0m0 1.5h0m0 1h0m0 5h0m0 3.5h0m0 2h0m0 .5h0m0 1h0m0 1h0m.5-37h0m0 20h0m0 4h0m0 1h0m0 1h0m0 1h0m0 3h0m0 6.5h0m.5-62h0m0 3h0m0 7h0m0 1h0m0 5.5h0m0 2.5h0m0 .5h0m0 2h0m0 4h0m0 4.5h0m0 1h0m0 1.5h0m0 1.5h0m0 4.5h0m0 4.5h0m.5-38.5h0m0 2h0m0 3h0m0 1.5h0m0 1.5h0m0 .5h0m0 3.5h0m0 1h0m0 2.5h0m0 4h0m0 12h0m0 .5h0m0 4.5h0m0 3.5h0m0 13h0m0 3h0m.5-64.5h0m0 12h0m0 21h0m0 25h0m1-27h0m0 5.5h0m.5-34h0m0 16h0m0 5h0m0 3h0m0 .5h0m0 3h0m0 3.5h0m0 2h0m0 8.5h0m.5-23.5h0m0 .5h0m0 1.5h0m0 .5h0m0 5.5h0m0 9.5h0m0 3h0m0 1h0m0 2.5h0m0 1.5h0m0 1.5h0m0 1.5h0m1.5-16h0m0 3h0m.5-10.5h0m0 2.5h0m0 3h0m0 1h0m0 2.5h0m0 1.5h0m0 2h0m0 1.5h0m0 3h0m0 1h0m0 11h0m.5-25h0m0 9.5h0m0 6.5h0m0 1h0m0 2h0m0 3h0m.5-83.5h0m.5 44.5h0m0 10.5h0m0 .5h0m0 7h0m0 3h0m0 18h0m.5-46h0m0 5h0m0 6h0m0 .5h0m0 9.5h0m0 1.5h0m0 6.5h0m0 3h0m0 3.5h0m0 2h0m0 2h0m0 2.5h0m0 18.5h0m0 7.5h0m.5-63.5h0m0 43.5h0m.5-91.5h0m0 .5h0m0 2.5h0m0 6h0m0 1h0m0 .5h0m0 2h0m0 1h0m0 3.5h0m0 52h0m0 .5h0m0 25h0m0 15h0m.5-113h0m0 8.5h0m0 1.5h0m0 1h0m0 8.5h0m0 5.5h0m0 5.5h0m0 11.5h0m0 5.5h0m0 12.5h0m0 3h0m0 3.5h0m0 8h0m0 12h0m0 2h0m0 2h0m0 10h0m0 1.5h0m0 23.5h0m.5-123.5h0m0 1.5h0m0 13.5h0m0 2.5h0m0 23.5h0m0 2h0m0 4.5h0m0 3h0m0 9h0m0 2.5h0m0 3h0m0 2.5h0m0 8h0m0 2h0m0 1.5h0m0 3h0m0 6.5h0m0 3.5h0m0 11.5h0m.5-87h0m0 2.5h0m0 32.5h0m0 2h0m0 1h0m0 14h0m0 35.5h0m.5-106h0m0 10h0m0 2.5h0m0 9.5h0m0 16h0m0 10.5h0m0 2.5h0m0 7h0m0 8.5h0m0 3h0m0 3h0m0 2.5h0m0 11.5h0m0 7h0m0 2h0m0 13.5h0m0 1h0m0 4.5h0m.5-89.5h0m0 36.5h0m0 1h0m0 14.5h0m0 3h0m0 3h0m0 5.5h0m0 6.5h0m0 2h0m.5-46.5h0m0 16.5h0m0 18.5h0m0 8h0m0 11h0m0 3.5h0m.5-48h0m0 10.5h0m0 3h0m0 6h0m0 3h0m0 6h0m0 1h0m0 11h0m0 4.5h0m0 9h0m0 3h0m0 6h0m.5-70h0m0 1h0m0 2.5h0m0 19.5h0m0 8.5h0m0 6.5h0m0 23h0m.5-110.5h0m0 4h0m0 37.5h0m0 2h0m0 1h0m0 1h0m0 3.5h0m0 6h0m0 3.5h0m0 1.5h0m0 1.5h0m0 2h0m0 1.5h0m0 5h0m0 3.5h0m0 6h0m0 3.5h0m0 9.5h0m0 2h0m0 3.5h0m.5-98h0m0 5h0m0 1.5h0m0 9.5h0m0 35h0m0 6h0m0 10.5h0m0 9.5h0m.5-81h0m0 3h0m0 9h0m0 1h0m.5 53h0m0 9.5h0m0 3.5h0m0 14h0m.5-44.5h0m0 2h0m0 4h0m0 2.5h0m0 1h0m0 2.5h0m0 2.5h0m0 7.5h0m0 2h0m0 7h0m0 6.5h0m0 2h0m0 1h0m0 1h0m0 4h0m0 1.5h0m0 14h0m.5-65.5h0m0 12h0m0 11.5h0m0 .5h0m0 6.5h0m0 8h0m0 2h0m0 22h0m.5-43.5h0m0 23.5h0m0 17.5h0m.5-39.5h0m0 10.5h0m0 2h0m0 1h0m0 3h0m0 11.5h0m0 10h0m0 8.5h0m.5-45.5h0m0 19h0m0 4.5h0m0 2.5h0m0 2.5h0m0 1.5h0m0 3.5h0m0 1.5h0m0 .5h0m0 1.5h0m.5-68h0m0 10h0m0 8h0m0 9h0m0 6.5h0m0 1.5h0m0 2h0m0 2h0m0 11.5h0m0 5.5h0m.5-75.5h0m0 26.5h0m0 1h0m0 2h0m0 5.5h0m0 3h0m0 3.5h0m0 1.5h0m0 .5h0m0 3h0m0 4h0m0 13h0m0 1h0m0 3.5h0m0 16h0m.5-61.5h0m0 25h0m0 2h0m0 11.5h0m0 11h0m.5-2h0m0 4.5h0m.5-19h0m0 5.5h0m0 6h0m0 12.5h0m0 .5h0m0 4.5h0m0 4.5h0m.5-57h0m0 3h0m0 8.5h0m0 1h0m0 1h0m0 3h0m0 .5h0m0 3h0m0 3h0m0 1.5h0m0 1h0m0 2h0m0 4.5h0m0 1h0m0 2.5h0m0 5.5h0m0 11h0m.5-50.5h0m0 17h0m0 4.5h0m0 3.5h0m0 3h0m0 2.5h0m0 6h0m3-39.5h0m0 13h0m0 4.5h0m.5-30.5h0m0 4h0m0 12h0m0 1.5h0m0 .5h0m0 1h0m0 1h0m0 1h0m0 1.5h0m0 1h0m0 1h0m0 2.5h0m0 1h0m0 1h0m0 11.5h0m0 30.5h0m.5-59h0m0 2.5h0m0 43.5h0m.5-74.5h0m0 31h0m0 5h0m0 .5h0m0 5.5h0m0 7h0m0 1h0m0 .5h0m0 1h0m0 2h0m0 2h0m0 6h0m0 2h0m0 4h0m0 9.5h0m.5-39h0m0 9.5h0m0 3.5h0m0 7.5h0m0 13h0m0 10.5h0m0 4.5h0m.5-94.5h0m0 10.5h0m0 38h0m0 9h0m0 2.5h0m.5-68.5h0m0 1.5h0m0 12.5h0m0 4.5h0m0 1.5h0m0 19h0m0 7.5h0m0 3.5h0m0 5.5h0m0 .5h0m0 7.5h0m0 1.5h0m0 4.5h0m0 1h0m0 .5h0m0 5h0m0 2h0m0 2.5h0m0 4h0m0 3.5h0m0 3h0m.5-90h0m0 7h0m0 6h0m0 36h0m0 8h0m0 1h0m0 2.5h0m0 .5h0m0 11.5h0m0 4h0m0 9.5h0m0 2.5h0m.5-15.5h0m2 10.5h0m0 22.5h0m.5-21.5h0m0 3.5h0m0 8h0m0 3.5h0m0 1h0m0 .5h0m0 1h0m0 2.5h0m.5-33.5h0m0 7h0m0 4h0m0 5h0m0 2.5h0m0 1h0m0 1h0m0 1h0m0 1h0m0 .5h0m0 1h0m0 2.5h0m0 1.5h0m0 8h0m0 8.5h0m.5-34h0m0 1.5h0m0 1.5h0m0 3.5h0m0 8h0m0 27h0m1-33h0m0 7.5h0m.5-26h0m0 10h0m0 11h0m0 9h0m0 2h0m0 2h0m0 6.5h0m.5-44h0m0 9h0m0 3.5h0m0 4h0m0 2.5h0m0 3h0m0 5h0m0 9h0m.5-5.5h0m.5-55h0m0 22.5h0m0 4h0m0 22.5h0m0 3h0m0 1.5h0m.5-33h0m0 6h0m0 3h0m0 .5h0m0 4.5h0m0 2h0m0 2.5h0m0 5.5h0m0 3.5h0m0 2.5h0m0 6.5h0m0 3h0m0 3h0m.5-39.5h0m0 8h0m0 1h0m0 9.5h0m0 36h0m.5-80.5h0m0 9h0m0 1h0m0 8.5h0m0 12.5h0m0 4h0m0 1h0m0 1.5h0m0 2h0m0 6.5h0m0 2h0m0 9h0m0 2.5h0m0 7h0m.5-66h0m0 3.5h0m0 6.5h0m0 .5h0m0 2h0m0 2h0m0 1.5h0m0 1h0m0 1.5h0m0 .5h0m0 3h0m0 2.5h0m0 3.5h0m0 14h0m0 6.5h0m0 1.5h0m0 3.5h0m.5-54.5h0m0 8.5h0m0 18.5h0m0 2.5h0m0 3.5h0m.5-.5h0m0 34.5h0m0 6.5h0m.5-44.5h0m0 5.5h0m0 6h0m0 .5h0m0 3.5h0m0 9h0m0 2.5h0m0 2.5h0m0 10h0m.5-60.5h0m0 16.5h0m0 .5h0m0 2h0m0 .5h0m0 9h0m0 7h0m0 2.5h0m0 2h0m0 3.5h0m0 4.5h0m0 4h0m0 12.5h0m0 3h0m.5-25.5h0m0 3.5h0m0 8h0m0 5h0m.5-10.5h0m.5-80h0m0 18h0m0 45.5h0m0 2h0m0 6.5h0m0 16h0m0 2h0m0 7h0m.5-77.5h0m0 27h0m0 6.5h0m0 2h0m0 2.5h0m0 1h0m0 2h0m0 2.5h0m0 5h0m0 1.5h0m0 12.5h0m0 1.5h0m0 8.5h0m0 8.5h0m.5-101.5h0m0 3h0m0 2h0m0 15.5h0m0 25h0m0 28.5h0m0 2.5h0m0 4.5h0m0 3h0m0 8.5h0m.5-85.5h0m0 2.5h0m0 39h0m0 27.5h0m0 11h0m.5-103.5h0m0 3.5h0m0 1h0m0 6.5h0m0 1h0m0 .5h0m0 8.5h0m0 1.5h0m0 2h0m0 1h0m0 8.5h0m0 1.5h0m0 17.5h0m0 3.5h0m0 6.5h0m0 3.5h0m0 1h0m0 5.5h0m0 9.5h0m0 1.5h0m0 3h0m0 1.5h0m0 2h0m0 4h0m0 1.5h0m0 2.5h0m0 7.5h0m0 3.5h0m.5-109h0m0 15h0m0 2.5h0m0 12h0m0 26h0m0 12.5h0m0 .5h0m0 7.5h0m0 3h0m0 5.5h0m0 10.5h0m0 6.5h0m0 1.5h0m0 3.5h0m0 6h0m.5-111h0m0 2.5h0m0 5h0m0 3h0m0 45.5h0m0 1h0m0 2h0m0 10h0m0 3.5h0m0 7h0m.5-79.5h0m0 8.5h0m0 5.5h0m0 25.5h0m0 10.5h0m0 1.5h0m0 8.5h0m0 3h0m0 62.5h0m.5-124h0m0 16.5h0m0 10.5h0m0 6.5h0m0 16.5h0m0 21.5h0m0 2.5h0m0 5.5h0m0 3.5h0m0 1h0m0 2.5h0m0 2h0m0 1.5h0m0 4h0m0 4h0m0 3.5h0m0 3.5h0m0 2.5h0m0 4.5h0m.5-73h0m0 13.5h0m0 15.5h0m0 2h0m0 6h0m0 19.5h0m0 1.5h0m0 3.5h0m0 12h0m.5-65.5h0m0 2h0m0 6.5h0m0 8h0m0 .5h0m0 2h0m0 7.5h0m0 5.5h0m0 13h0m0 14.5h0m.5-63h0m0 15.5h0m0 1h0m0 14.5h0m0 7.5h0m0 6h0m0 16.5h0m.5-57.5h0m0 5.5h0m0 1h0m0 25.5h0m0 6h0m.5-52h0m0 9.5h0m0 2.5h0m0 23.5h0m0 1.5h0m0 6.5h0m0 5.5h0m0 1h0m0 13.5h0m0 3h0m.5-78h0m0 22h0m0 3.5h0m0 2.5h0m0 .5h0m0 1h0m0 2h0m0 3h0m0 1h0m0 1.5h0m0 .5h0m0 3h0m0 1.5h0m0 1.5h0m0 2.5h0m0 4h0m0 1h0m0 1h0m0 2h0m0 3.5h0m0 1h0m0 8h0m0 1.5h0m0 1h0m0 .5h0m.5-70h0m0 30h0m0 9.5h0m0 2h0m0 4h0m0 4.5h0m0 7h0m0 8.5h0m0 17.5h0m0 7.5h0m.5-13h0m0 3h0m0 4h0m0 1.5h0m0 1.5h0m0 5h0m0 1h0m.5-30.5h0m0 10h0m0 6h0m0 12h0m0 5.5h0m.5-10h0m0 2h0m0 9h0m.5-48.5h0m0 3h0m0 9h0m0 6h0m0 1.5h0m0 5.5h0m0 1h0m.5-36.5h0m0 9h0m0 5.5h0m0 3.5h0m0 1h0m0 1h0m0 1h0m0 5h0m0 5h0m0 1h0m0 1h0m0 .5h0m0 4h0m0 6h0m0 2h0m.5-89.5h0m0 .5h0m0 16h0m0 44h0m0 2.5h0m0 3.5h0m0 1h0m0 7h0m0 8.5h0m0 4.5h0m0 3.5h0m0 2h0m0 1h0m.5-93h0m0 18h0m0 52.5h0m0 1.5h0m0 12.5h0m.5-82h0m0 1h0m0 6h0m0 1.5h0m.5-12h0m0 3h0m0 13.5h0m.5 1h0m.5 33.5h0m0 5.5h0m0 1.5h0m0 2.5h0m0 1h0m.5-9h0m0 4.5h0m0 14h0m0 6.5h0m.5-24h0m0 2.5h0m0 2.5h0m0 3.5h0m.5-53h0m0 9h0m0 15h0m0 11.5h0m0 3.5h0m0 1h0m0 16.5h0m0 10.5h0m.5-54.5h0m0 7.5h0m0 7h0m0 1.5h0m0 3.5h0m0 1.5h0m0 4h0m0 4.5h0m0 1h0m0 11.5h0m0 4.5h0m0 7.5h0m0 6h0m0 6.5h0m.5-67h0m0 3h0m0 2.5h0m0 1h0m0 1h0m0 1.5h0m0 8.5h0m0 9.5h0m0 6.5h0m0 4.5h0m0 .5h0m0 2h0m0 4.5h0m0 12.5h0m0 4.5h0m.5-100h0m0 4h0m0 11.5h0m0 1h0m0 1h0m0 1h0m0 1h0m0 2h0m0 3.5h0m0 5.5h0m0 2.5h0m0 10h0m0 1h0m0 .5h0m0 2.5h0m0 1.5h0m0 8.5h0m0 2h0m0 2h0m0 5.5h0m.5-63.5h0m0 4h0m0 3h0m0 3h0m0 7.5h0m0 14.5h0m0 4.5h0m0 11.5h0m0 22.5h0m0 12h0m.5-87h0m0 12.5h0m0 68.5h0m.5-78.5h0m0 4h0m0 8.5h0m0 23.5h0m0 16.5h0m0 22h0m.5-77h0m0 9.5h0m0 3h0m0 6h0m0 .5h0m0 17h0m0 1h0m0 5.5h0m0 1h0m0 5.5h0m0 2.5h0m0 5h0m0 3h0m0 1.5h0m0 3h0m0 1h0m0 4.5h0m0 .5h0m0 2.5h0m0 2h0m0 .5h0m0 6h0m0 8.5h0m.5-87h0m0 9h0m0 10h0m0 23h0m0 6h0m0 5h0m0 2.5h0m0 4h0m0 4.5h0m0 1h0m0 2.5h0m0 7.5h0m0 2.5h0m.5-78h0m0 14.5h0m0 25.5h0m0 5.5h0m0 6h0m0 47.5h0m0 3.5h0m.5-104.5h0m0 .5h0m0 2.5h0m0 1.5h0m0 1h0m0 2.5h0m0 10h0m0 .5h0m0 2.5h0m0 1h0m0 63.5h0m0 2h0m0 4h0m0 .5h0m0 1h0m0 2h0m0 4.5h0m0 1.5h0m0 1.5h0m0 5.5h0m0 6.5h0m0 10h0m.5-118h0m0 3.5h0m0 2h0m0 .5h0m0 1.5h0m0 43h0m0 6h0m0 10.5h0m0 7.5h0m0 8.5h0m0 1h0m0 4.5h0m0 1.5h0m0 .5h0m0 6h0m.5-57.5h0m0 7.5h0m0 7h0m0 5.5h0m0 5.5h0m0 5h0m0 6h0m0 3h0m.5-30h0m0 9.5h0m0 2.5h0m0 2h0m.5 5h0m.5 14h0m0 2h0m0 3.5h0m0 4h0m.5-42.5h0m0 23h0m0 1h0m0 1h0m0 1h0m0 2h0m0 1h0m0 2.5h0m0 5h0m0 .5h0m0 2.5h0m0 4.5h0m0 1.5h0m0 3.5h0m0 .5h0m0 10.5h0m.5-54.5h0m0 2.5h0m0 5.5h0m0 2h0m0 1h0m0 1h0m0 2.5h0m0 12.5h0m0 5.5h0m0 3h0m0 1.5h0m0 .5h0m0 1.5h0m0 3h0m0 4.5h0m.5-56.5h0m0 4.5h0m0 11h0m0 41.5h0m.5-52.5h0m0 4h0m0 11.5h0m0 2h0m0 6.5h0m0 2h0m0 .5h0m0 4h0m0 4.5h0m.5-42.5h0m0 15h0m0 .5h0m0 2h0m0 2.5h0m0 5h0m0 3h0m0 .5h0m0 8.5h0m0 10.5h0m1-40h0m.5-23.5h0m0 4h0m0 2h0m0 4h0m0 3h0m0 12h0m0 1.5h0m0 2.5h0m0 2h0m0 6.5h0m0 4.5h0m0 3h0m0 2h0m0 4.5h0m.5-32h0m0 1.5h0m0 8h0m0 .5h0m0 5.5h0m0 1h0m0 3.5h0m0 3.5h0m0 1h0m0 3h0m0 1.5h0m0 3h0m0 5.5h0m.5-33h0m0 2.5h0m0 6.5h0m0 5.5h0m0 11.5h0m1-34h0m0 34.5h0m.5-60.5h0m0 9h0m0 5h0m0 3.5h0m0 10h0m0 1.5h0m0 1h0m0 2h0m0 3h0m0 4h0m0 .5h0m0 3h0m0 5h0m0 3.5h0m0 6h0m0 8h0m0 5h0m0 3.5h0m.5-66h0m0 3.5h0m0 9.5h0m0 2.5h0m0 3h0m0 1h0m0 5.5h0m0 6.5h0m0 2h0m0 3h0m0 2h0m0 2h0m0 1.5h0m0 3h0m0 .5h0m0 2h0m0 .5h0m0 2h0m0 2.5h0m.5-32h0m0 41h0m.5 4h0m.5-37h0m0 16h0m0 11.5h0m0 3h0m0 15h0m0 2h0m.5-53.5h0m0 4h0m0 10.5h0m0 9h0m0 2.5h0m0 2.5h0m0 8.5h0m0 3h0m0 .5h0m0 4.5h0m0 .5h0m0 4h0m0 3.5h0m0 2h0m.5-53h0m0 2h0m0 2.5h0m0 6.5h0m0 3.5h0m0 1h0m0 1.5h0m0 1.5h0m0 4h0m0 3h0m0 3.5h0m0 2.5h0m0 2h0m0 3h0m0 4h0m0 1.5h0m0 12h0m0 2.5h0m.5-7h0m0 3.5h0m1-79.5h0m0 25h0m0 6.5h0m0 1h0m0 2.5h0m0 3.5h0m0 5h0m0 9h0m0 .5h0m.5-47h0m0 10.5h0m0 8h0m0 3h0m0 4.5h0m0 2h0m0 3h0m0 2.5h0m0 2h0m0 4h0m0 1h0m0 .5h0m0 2h0m0 1.5h0m0 4h0m0 2.5h0m0 1h0m0 3h0m0 1.5h0m0 3h0m0 2.5h0m0 5h0m0 14.5h0m.5-73.5h0m0 11.5h0m0 15h0m.5-63.5h0m0 1.5h0m0 2h0m0 12.5h0m0 10h0m.5-29h0m0 .5h0m0 6.5h0m0 7h0m0 1.5h0m0 1.5h0m0 1h0m0 2h0m0 71h0m.5-89.5h0m0 11h0m0 11h0m0 7h0m0 21h0m0 2h0m0 11h0m0 4.5h0m0 1.5h0m0 2.5h0m0 1.5h0m0 2.5h0m0 2.5h0m0 2h0m0 13h0m.5-84h0m0 2h0m0 5.5h0m0 11h0m0 6.5h0m0 23.5h0m0 26h0m0 3h0m0 4.5h0m0 11h0m0 1.5h0m.5-89.5h0m0 1h0m0 3h0m0 3h0m0 1h0m0 9.5h0m0 .5h0m0 15.5h0m0 8h0m0 10.5h0m0 23h0m.5-49.5h0m0 3h0m0 3.5h0m0 1.5h0m0 8h0m0 3h0m0 1.5h0m0 1h0m0 .5h0m0 1.5h0m0 1h0m0 .5h0m0 1h0m0 5.5h0m0 3h0m0 1h0m.5-4.5h0m0 6.5h0m0 1.5h0m0 21.5h0m.5-32h0m.5-11.5h0m0 22.5h0m0 11h0m.5-19.5h0m0 6h0m0 .5h0m0 1.5h0m0 4h0m0 4.5h0m0 1h0m0 3.5h0m0 6h0m0 2h0m0 2h0m0 5h0m.5-40.5h0m0 5.5h0m0 9.5h0m0 1.5h0m0 3.5h0m0 .5h0m0 1.5h0m0 2h0m0 2h0m0 .5h0m0 5h0m.5-14h0m0 16.5h0m.5-4.5h0m.5-98.5h0m.5 71.5h0m0 2h0m0 4.5h0m0 .5h0m0 5.5h0m.5-19.5h0m0 2h0m0 7.5h0m0 3.5h0m0 2h0m0 1h0m0 1h0m0 1h0m0 2h0m0 3h0m0 5.5h0m.5-19h0m0 6.5h0m0 1h0m0 1.5h0m0 5h0m1-42.5h0m.5 6h0m0 3h0m0 3h0m0 .5h0m0 2.5h0m0 2.5h0m0 3h0m0 3.5h0m0 3h0m0 12.5h0m.5-61h0m0 12.5h0m0 13h0m0 2h0m0 1h0m0 1.5h0m0 2h0m0 2h0m0 6.5h0m0 4h0m0 2h0m0 6h0m0 2h0m0 1h0m0 6.5h0m0 5.5h0m.5-67.5h0m0 2.5h0m0 1h0m0 2.5h0m0 1h0m0 2.5h0m0 1.5h0m0 3.5h0m0 7.5h0m0 4h0m0 3h0m0 9h0m0 1h0m0 5h0m0 7.5h0m0 14.5h0m.5-67.5h0m0 4.5h0m0 2h0m0 1.5h0m0 1h0m0 .5h0m0 2.5h0m.5 2.5h0m0 49h0m0 3.5h0m.5-42h0m0 12h0m0 1h0m0 2h0m0 3.5h0m0 3.5h0m0 12h0m0 6h0m0 5h0m0 4h0m0 .5h0m.5-72h0m0 11h0m0 9.5h0m0 4h0m0 3h0m0 12.5h0m0 6.5h0m0 1.5h0m0 1h0m0 3h0m0 1.5h0m0 1h0m0 1h0m0 2.5h0m0 3.5h0m0 4.5h0m0 1h0m0 .5h0m0 6.5h0m0 3h0m.5-72.5h0m0 3h0m0 10.5h0m0 4h0m0 .5h0m0 6.5h0m0 .5h0m0 16.5h0m0 28h0m0 .5h0m0 1h0m0 3h0m0 1h0m0 13.5h0m.5-90.5h0m0 14.5h0m0 9h0m0 7h0m0 3h0m0 2h0m0 4.5h0m0 9h0m0 6.5h0m0 3.5h0m0 15h0m0 .5h0m.5-66.5h0m0 14.5h0m0 6h0m0 6h0m0 4h0m0 9h0m0 13h0m.5-9.5h0m0 16h0m.5-40.5h0m0 .5h0m0 10h0m0 3h0m0 2h0m0 2.5h0m0 9h0m0 3.5h0m0 5.5h0m.5-50h0m0 5h0m0 .5h0m0 2.5h0m0 4.5h0m0 7h0m0 13.5h0m0 2.5h0m0 11h0m.5-29.5h0m0 15h0m0 4.5h0m.5-27h0m0 3h0m0 9h0m0 1h0m.5-8h0m0 11.5h0m0 12.5h0m0 1h0m0 1h0m0 1.5h0m0 11.5h0m0 1.5h0m.5-64h0m0 15.5h0m0 10.5h0m0 1h0m0 3h0m0 2.5h0m0 7h0m0 4h0m0 1.5h0m0 8.5h0m.5-50.5h0m0 2.5h0m0 14h0m0 16.5h0m0 10.5h0m.5-52h0m0 1h0m0 .5h0m0 10h0m0 15h0m0 .5h0m0 1h0m0 3.5h0m0 1h0m0 3h0m0 12h0m.5-44.5h0m0 1h0m0 8.5h0m0 11h0m0 5.5h0m0 1.5h0m0 3h0m0 .5h0m0 3h0m0 .5h0m0 2h0m0 20h0m.5-62.5h0m0 1.5h0m0 1h0m0 .5h0m0 1.5h0m0 5h0m0 38h0m1.5-52h0m0 .5h0m.5-18.5h0m0 4.5h0m0 4h0m0 4.5h0m0 6.5h0m0 27.5h0m0 11h0m0 3h0m0 1.5h0m0 2h0m0 6.5h0m.5-69.5h0m0 17.5h0m0 3h0m0 19h0m0 4.5h0m0 1h0m0 2h0m0 1h0m0 2.5h0m0 2.5h0m0 .5h0m0 1h0m0 1h0m0 2.5h0m0 6.5h0m0 1h0m0 1.5h0m0 1h0m0 5h0m.5-13.5h0m0 5.5h0m0 1h0m0 5h0m0 3.5h0m.5-32.5h0m0 48.5h0m.5-80h0m0 17.5h0m0 10.5h0m0 19.5h0m0 3.5h0m0 17h0m0 .5h0m0 20h0m.5-56h0m0 3.5h0m0 .5h0m0 1h0m0 6.5h0m0 1.5h0m0 5.5h0m0 9h0m0 6h0m0 4h0m0 2.5h0m0 1h0m0 10h0m0 8h0m.5-51h0m0 12.5h0m0 4h0m0 1.5h0m0 3h0m0 1h0m0 10.5h0m0 3h0m0 3.5h0m0 1.5h0m.5-52h0m0 2.5h0m0 11h0m0 2.5h0m0 3h0m0 7h0m0 5h0m0 4h0m0 4h0m0 2h0m0 8h0m0 3h0m0 6h0m.5-38h0m0 25.5h0m0 8.5h0m0 1h0m0 4h0m.5-37h0m.5-2.5h0m0 13.5h0m0 8.5h0m0 6h0m0 2h0m.5-77.5h0m0 3h0m0 4h0m0 43h0m0 4.5h0m0 1h0m0 1h0m0 1h0m0 7h0m0 1h0m0 1.5h0m0 1.5h0m0 2.5h0m0 2h0m0 5.5h0m.5-69.5h0m0 40h0m0 5.5h0m0 5h0m0 1h0m0 2h0m0 7h0m.5-80h0m0 2.5h0m0 .5h0m0 5.5h0m0 6.5h0m.5-17.5h0m0 3h0m0 1h0m0 2.5h0m0 4h0m0 1h0m0 3.5h0m0 2h0m0 5h0m0 65h0m0 24h0m0 9h0m0 2.5h0m.5-107.5h0m0 .5h0m0 2.5h0m0 3h0m0 28h0m0 7h0m0 3h0m0 1h0m0 10.5h0m0 1h0m0 5h0m0 3h0m0 9.5h0m0 2.5h0m0 7.5h0m0 5h0m0 10.5h0m0 9.5h0m.5-123.5h0m0 6.5h0m0 3h0m0 1h0m0 37.5h0m0 4.5h0m0 26.5h0m0 12h0m0 21h0m.5-107.5h0m0 51h0m0 14.5h0m0 6.5h0m.5-16.5h0m0 25.5h0m0 2h0m.5-45h0m0 21h0m0 .5h0m0 7h0m0 4.5h0m0 1h0m0 12h0m0 10h0m.5-57.5h0m0 10.5h0m0 6h0m0 8h0m0 2.5h0m0 7.5h0m0 2.5h0m0 7h0m0 6h0m0 18.5h0m.5-70h0m0 30h0m0 1h0m0 11.5h0m.5-1h0m0 10h0m0 3.5h0m0 1h0m0 1h0m0 1.5h0m.5-18h0m0 7h0m0 1.5h0m0 4h0m0 8.5h0m0 1.5h0m0 .5h0m.5-64.5h0m0 2.5h0m0 3h0m0 4h0m0 .5h0m0 4h0m0 31.5h0m0 2.5h0m0 5h0m0 5h0m0 .5h0m0 1h0m0 2h0m.5-62.5h0m0 1.5h0m0 .5h0m0 3h0m0 4h0m0 3.5h0m0 .5h0m0 2h0m0 1.5h0m0 1h0m0 .5h0m0 2h0m0 2h0m0 1h0m0 1.5h0m0 .5h0m0 31.5h0m.5-53h0m0 2h0m0 3h0m0 1h0m0 3.5h0m0 3h0m0 2h0m0 8h0m0 1.5h0m0 4h0m.5-7h0m0 14h0m0 2.5h0m0 3h0m0 3h0m0 2h0m0 2h0m0 1.5h0m.5-41h0m0 8.5h0m0 1h0m0 8.5h0m0 .5h0m0 3h0m0 1h0m0 1.5h0m0 2h0m0 6h0m0 2h0m0 19h0m0 2h0m.5-25.5h0m0 50.5h0m.5-79.5h0m0 5h0m0 6h0m0 2h0m0 2h0m0 5h0m0 4h0m0 12h0m0 9h0m.5-52.5h0m0 14.5h0m0 32.5h0m0 .5h0m.5-31.5h0m0 8h0m0 6h0m0 3.5h0m0 1.5h0m0 5.5h0m0 1h0m0 1h0m0 .5h0m0 11.5h0m0 15h0m.5-48.5h0m0 10h0m0 3.5h0m0 3h0m0 1h0m0 8.5h0m0 .5h0m0 3h0m0 .5h0m.5-59h0m0 30.5h0m0 3.5h0m0 2h0m0 26h0m1.5-14h0m0 10.5h0m0 5h0m.5-43.5h0m0 8.5h0m0 4.5h0m0 1h0m0 4h0m0 1.5h0m0 1h0m0 1.5h0m0 1.5h0m0 3h0m0 1.5h0m0 2h0m0 2h0m0 1.5h0m0 1h0m0 1.5h0m0 1.5h0m0 2.5h0m0 2h0m0 2.5h0m0 1h0m0 2h0m.5-63.5h0m0 11h0m0 6h0m0 9.5h0m0 4.5h0m0 6h0m0 5.5h0m0 .5h0m0 21h0m0 13.5h0m0 4.5h0m1.5-62.5h0m0 7.5h0m0 7h0m0 15h0m0 3h0m0 13h0m0 5.5h0m0 3.5h0m0 1h0m.5-49.5h0m0 10h0m0 3h0m0 3.5h0m0 2.5h0m0 2h0m0 .5h0m0 6.5h0m0 4h0m0 .5h0m0 1.5h0m0 1.5h0m0 7.5h0m0 7h0m.5-63.5h0m0 10.5h0m0 1h0m0 1h0m0 8.5h0m0 1.5h0m0 18.5h0m0 7.5h0m0 3h0m0 1.5h0m0 1h0m0 4.5h0m.5-108h0m0 53h0m0 10h0m0 3h0m0 2h0m0 6.5h0m0 2h0m0 2h0m0 7.5h0m0 2h0m0 4.5h0m0 9h0m0 3h0m.5-105.5h0m0 7h0m0 4h0m0 3.5h0m0 3h0m0 3.5h0m0 11.5h0m0 18.5h0m0 1.5h0m0 2.5h0m0 27h0m0 2.5h0m0 5.5h0m.5-86.5h0m0 6.5h0m0 50h0m.5-54h0m0 4h0m0 3.5h0m0 5.5h0m0 37h0m0 9.5h0m0 1.5h0m0 5.5h0m0 2h0m.5-72h0m0 9.5h0m0 3.5h0m0 6h0m0 25.5h0m0 1.5h0m0 .5h0m0 3.5h0m0 5.5h0m0 4.5h0m0 8h0m0 6h0m0 9h0m0 7h0m.5-85.5h0m0 1h0m0 6h0m0 .5h0m0 4h0m0 1.5h0m0 34.5h0m0 1.5h0m0 13h0m0 3.5h0m0 5.5h0m0 2h0m0 .5h0m0 2h0m0 .5h0m0 8.5h0m.5-87h0m0 45.5h0m0 10.5h0m0 4h0m0 11.5h0m0 8.5h0m.5-36h0m.5-5h0m0 9.5h0m0 2h0m0 6.5h0m0 4.5h0m0 2h0m0 4h0m0 2h0m0 6.5h0m0 3h0m0 9.5h0m.5-45.5h0m0 6.5h0m0 2.5h0m0 1h0m0 1.5h0m0 7.5h0m0 1.5h0m0 1h0m0 1h0m0 6.5h0m0 1h0m0 1h0m0 2h0m.5-31h0m0 14h0m0 2h0m0 5.5h0m0 2h0m2-70.5h0m0 4h0m0 12.5h0m0 5.5h0m0 6h0m0 3h0m0 1h0m.5-29h0m0 10.5h0m0 17h0m.5-29h0m0 13h0m0 2.5h0m0 2.5h0m0 1.5h0m0 13.5h0m0 31.5h0m0 10h0m.5-78h0m0 6.5h0m0 6.5h0m0 2h0m0 2h0m0 8h0m0 1h0m0 2.5h0m0 1.5h0m0 36h0m0 6h0m0 2h0m0 5.5h0m0 2h0m0 1h0m0 2h0m.5-82.5h0m0 3.5h0m0 3h0m0 10h0m0 16h0m0 .5h0m0 31.5h0m0 10.5h0m0 .5h0m0 1h0m1-14.5h0m0 5.5h0m0 17h0m0 2h0m0 .5h0m0 3h0m0 1h0m0 2h0m0 1.5h0m0 3h0m0 2h0m0 14.5h0m.5-51h0m0 3h0m0 4.5h0m0 3h0m0 4.5h0m0 1h0m0 4h0m0 1h0m0 5.5h0m0 2.5h0m0 .5h0m0 1.5h0m0 2.5h0m0 1h0m0 2h0m0 1h0m0 1h0m0 2h0m0 6h0m0 .5h0m0 2.5h0m.5-31h0m0 5.5h0m1-62h0m0 26h0m0 2.5h0m0 6.5h0m.5-41.5h0m0 7.5h0m0 1h0m0 4h0m0 6.5h0m0 5h0m0 3.5h0m0 .5h0m0 1.5h0m0 1.5h0m0 5h0m0 2.5h0m0 3.5h0m0 4h0m0 3.5h0m0 1.5h0m0 1h0m0 1.5h0m0 1h0m0 1h0m0 11.5h0m0 5h0m0 6h0m0 .5h0m.5-72.5h0m0 12.5h0m0 3h0m0 1h0m0 1.5h0m0 1h0m0 .5h0m0 1h0m0 8h0m0 7.5h0m0 2.5h0m0 1h0m0 2.5h0m0 13.5h0m0 7h0m0 13h0m1.5-34.5h0m0 12.5h0m0 10h0m.5-27.5h0m0 8h0m0 2h0m0 1h0m0 1h0m0 3h0m0 4.5h0m0 1.5h0m0 1.5h0m0 1.5h0m0 4.5h0m0 18h0m.5-55h0m0 5h0m0 15.5h0m0 1.5h0m0 2.5h0m0 .5h0m0 1h0m0 1h0m0 2.5h0m0 11.5h0m0 4.5h0m.5-98.5h0m0 20.5h0m0 48.5h0m0 21h0m.5-89.5h0m0 6h0m.5-7.5h0m0 12.5h0m0 .5h0m0 5h0m1 32h0m.5-6.5h0m0 8.5h0m0 2h0m0 3h0m0 .5h0m0 9.5h0m0 8h0m0 2h0m.5-30h0m0 1h0m0 3h0m0 6h0m0 3h0m0 1h0m0 1h0m0 3h0m.5-6h0m0 11h0m.5-31.5h0m0 3h0m0 5.5h0m0 25h0m0 13.5h0m.5-45h0m0 2.5h0m0 1.5h0m0 5.5h0m0 3h0m0 2h0m0 2h0m0 5h0m0 1.5h0m0 3h0m0 1.5h0m0 7h0m.5-33.5h0m0 5.5h0m0 7h0m0 5.5h0m0 5.5h0m1.5-16h0m0 2.5h0m0 10h0m0 .5h0m0 4.5h0m0 4h0m0 5h0m0 24h0m0 7h0m.5-66.5h0m0 1.5h0m0 3h0m0 5h0m0 6h0m0 1h0m0 2h0m0 1.5h0m0 2h0m0 6.5h0m0 1h0m0 2.5h0m0 .5h0m0 3h0m0 2.5h0m0 1h0m0 .5h0m0 2.5h0m0 2.5h0m0 1h0m0 5.5h0m0 10.5h0m.5-54h0m0 .5h0m0 9h0m0 8.5h0m0 17.5h0m0 43.5h0m.5-33.5h0m0 .5h0m0 3.5h0m0 .5h0m0 6h0m.5-52h0m0 16h0m0 4h0m0 6h0m0 4h0m0 6.5h0m0 1h0m0 5.5h0m0 1h0m0 5h0m0 5h0m0 4h0m.5-63.5h0m0 16h0m0 4.5h0m0 7.5h0m0 13h0m0 16h0m0 3h0m0 13.5h0m.5-69h0m0 2h0m0 2.5h0m0 8h0m0 6h0m0 14.5h0m0 7.5h0m0 2h0m0 5.5h0m0 13h0m.5-57h0m0 2h0m0 .5h0m0 3h0m0 11.5h0m0 4h0m0 4h0m0 5.5h0m0 16.5h0m.5-54h0m0 12h0m0 5h0m0 2.5h0m0 7.5h0m0 2.5h0m0 9.5h0m0 3h0m0 5h0m0 2h0m.5-26h0m0 5h0m0 .5h0m0 5h0m0 2h0m0 14.5h0m.5-58.5h0m0 22.5h0m0 4.5h0m0 3h0m0 24h0m.5-43h0m0 4h0m0 5h0m0 4h0m0 9h0m0 .5h0m0 6h0m.5-27h0m0 3.5h0m0 1h0m0 1.5h0m0 2h0m0 2h0m0 1h0m0 2.5h0m0 19h0m1.5-51.5h0m0 50.5h0m0 3h0m0 1.5h0m0 1h0m0 2h0m0 5.5h0m.5-83h0m0 .5h0m0 3.5h0m0 7.5h0m0 2.5h0m0 2h0m0 4.5h0m0 1h0m0 1h0m0 46h0m0 4h0m0 6h0m0 1.5h0m0 6h0m.5-86h0m0 7h0m0 8.5h0m0 4h0m0 2.5h0m0 52.5h0m0 3.5h0m.5-75.5h0m0 3h0m0 12.5h0m0 5.5h0m0 43.5h0m0 17h0m0 1h0m0 1.5h0m0 1.5h0m0 1.5h0m0 2h0m0 5h0m0 3h0m0 1.5h0m0 1.5h0m.5-32h0m0 2h0m0 9.5h0m0 .5h0m0 14.5h0m.5-84h0m0 4h0m0 9h0m0 10h0m0 3.5h0m0 4.5h0m0 14h0m0 6.5h0m0 11.5h0m0 4h0m.5-74h0m0 8.5h0m0 6h0m0 5h0m0 11.5h0m0 5.5h0m0 .5h0m0 4.5h0m0 .5h0m0 1h0m0 1h0m0 1.5h0m0 .5h0m0 1h0m0 2h0m0 1h0m0 4h0m0 3.5h0m0 .5h0m0 6.5h0m0 7.5h0m0 15h0m.5-85.5h0m0 4h0m0 4.5h0m0 4.5h0m0 2h0m0 12h0m0 .5h0m0 10.5h0m0 16.5h0m0 3.5h0m0 3h0m0 .5h0m0 2.5h0m0 1h0m.5-48.5h0m0 34.5h0m0 1.5h0m0 16h0m1-43.5h0m0 14h0m0 26h0m0 5h0m.5-28.5h0m0 .5h0m0 1.5h0m0 1h0m0 3.5h0m0 2.5h0m0 3h0m0 1.5h0m0 6.5h0m0 12h0m0 .5h0m0 8h0m0 17h0m.5-75h0m0 13h0m0 27.5h0m0 1h0m0 3h0m.5-24.5h0m.5-15.5h0m0 8.5h0m0 11.5h0m0 10h0m0 1.5h0m0 11h0m0 9.5h0m.5-51h0m0 5h0m0 4h0m0 1.5h0m0 6.5h0m0 3.5h0m0 2h0m0 1h0m0 1h0m0 3h0m0 5.5h0m0 1h0m0 4.5h0m0 5h0m0 .5h0m0 1h0m0 1.5h0m0 1.5h0m.5-59.5h0m0 23.5h0m0 2h0m0 12.5h0m0 3.5h0m0 .5h0m0 6.5h0m0 2.5h0m0 .5h0m0 1h0m0 .5h0m0 7h0m0 2.5h0m0 5h0m.5-61h0m0 33.5h0m0 4.5h0m.5-30.5h0m0 11h0m0 4h0m0 2.5h0m0 6.5h0m0 11h0m.5-49h0m0 13.5h0m0 1.5h0m0 1h0m0 .5h0m0 1h0m0 .5h0m0 1h0m0 2.5h0m0 1.5h0m0 4.5h0m0 6.5h0m0 4h0m0 7.5h0m.5-51h0m0 17.5h0m0 24h0m0 12h0m.5-8h0m0 2.5h0m0 3h0m.5-25h0m0 2h0m0 4h0m0 2.5h0m0 12.5h0m0 7.5h0m0 4h0m0 2.5h0m0 .5h0m0 8.5h0m.5-50h0m0 6.5h0m0 8h0m0 3h0m0 1h0m0 1.5h0m0 .5h0m0 1h0m0 4h0m0 1.5h0m0 3.5h0m0 6.5h0m0 2.5h0m.5-16.5h0m0 5.5h0m1-3.5h0m0 8.5h0m.5 .5h0m0 2h0m0 1.5h0m0 2h0m0 1.5h0m0 1.5h0m0 1h0m0 1h0m0 1.5h0m0 .5h0m0 6h0m0 3h0m0 15h0m.5-41h0m0 2.5h0m0 3h0m0 1.5h0m0 3.5h0m0 3.5h0m0 1.5h0m0 1.5h0m.5-87.5h0m0 9.5h0m.5-20.5h0m0 9h0m0 8h0m0 2.5h0m0 42.5h0m.5-60h0m0 .5h0m0 1h0m0 12h0m0 5.5h0m0 2h0m0 13.5h0m0 8.5h0m0 1h0m0 5h0m0 .5h0m0 1h0m0 .5h0m0 1h0m0 1h0m.5-56h0m0 12h0m0 2.5h0m0 1h0m0 9h0m0 8h0m0 2.5h0m0 1h0m0 6.5h0m0 1.5h0m0 1h0m0 3.5h0m0 1h0m0 6h0m0 1h0m0 1h0m0 2.5h0m0 1h0m0 .5h0m0 1h0m0 2h0m0 1h0m0 2h0m0 1h0m0 .5h0m0 2.5h0m0 6h0m0 3h0m.5-80.5h0m0 2h0m0 5h0m0 2h0m0 1.5h0m0 8h0m0 12h0m0 .5h0m0 3.5h0m0 5h0m0 7h0m0 1h0m0 2.5h0m0 1.5h0m0 2.5h0m0 .5h0m.5-51.5h0m0 5h0m0 13.5h0m0 9.5h0m0 1h0m0 4.5h0m0 1h0m0 29h0m0 18.5h0m.5-73h0m0 4.5h0m.5-16.5h0m0 18.5h0m0 1h0m.5-17h0m0 1.5h0m0 2.5h0m0 4.5h0m.5-11.5h0m0 10h0m0 4.5h0m0 1h0m0 1h0m0 54h0m.5-70.5h0m0 1.5h0m0 1.5h0m0 2h0m0 3.5h0m0 1.5h0m0 .5h0m0 11.5h0m0 22h0m0 10h0m0 4.5h0m0 5h0m0 4.5h0m0 7h0m.5-63h0m0 1h0m0 2h0m0 2h0m0 2h0m0 1h0m0 35.5h0m0 1h0m0 .5h0m0 4h0m0 .5h0m0 1h0m0 4h0m0 5.5h0m0 1h0m0 2.5h0m.5-75.5h0m0 22h0m0 10h0m0 19h0m0 14h0m0 2h0m0 8.5h0m.5-40.5h0m0 .5h0m0 14.5h0m0 4.5h0m0 3.5h0m0 2.5h0m0 8.5h0m0 10.5h0m0 2h0m0 2h0m0 3h0m.5-48.5h0m0 3.5h0m0 4h0m0 5.5h0m0 5h0m0 .5h0m0 6.5h0m0 8h0m0 2.5h0m0 2h0m0 2.5h0m0 2h0m0 2h0m0 2h0m0 5.5h0m.5-51.5h0m0 21.5h0m0 5.5h0m0 3.5h0m0 18h0m.5-77.5h0m0 7h0m0 9.5h0m0 8.5h0m.5-25h0m0 5.5h0m0 6.5h0m0 1h0m0 1.5h0m0 4.5h0m0 8h0m0 2h0m0 33.5h0m.5-57h0m0 3h0m0 1.5h0m0 2h0m0 21.5h0m0 13.5h0m0 2h0m0 2h0m0 1h0m0 3h0m0 3.5h0m0 6h0m0 4h0m0 1.5h0m0 3h0m0 7.5h0m0 .5h0m0 2h0m0 2h0m0 1h0m.5-82h0m0 .5h0m0 3h0m0 6h0m0 .5h0m0 12.5h0m0 9h0m0 1h0m0 9h0m0 7.5h0m0 4.5h0m0 2.5h0m0 1h0m0 5h0m0 9.5h0m0 1.5h0m0 2h0m0 3.5h0m0 4.5h0m0 1.5h0m.5-65.5h0m.5 20h0m0 25.5h0m0 16h0m0 5.5h0m0 6.5h0m0 18.5h0m.5-69h0m0 2h0m0 7h0m0 3.5h0m0 5.5h0m0 .5h0m0 7.5h0m0 3h0m0 2h0m0 3.5h0m0 9.5h0m0 1.5h0m0 11.5h0m.5-58h0m0 5h0m0 1.5h0m0 3.5h0m0 3h0m0 6h0m0 6.5h0m0 15.5h0m0 2.5h0m0 3h0m.5-76h0m0 23.5h0m0 14h0m0 15h0m0 16.5h0m.5-42h0m0 16.5h0m0 2h0m0 4h0m0 7.5h0m0 3h0m0 3h0m0 14h0m0 6h0m0 14h0m.5-64h0m0 8.5h0m0 9h0m0 26.5h0m.5-62.5h0m0 6.5h0m0 11h0m0 4h0m0 8h0m0 2.5h0m0 1h0m0 6h0m0 3h0m0 14h0m0 3h0m.5-57h0m0 9.5h0m0 4.5h0m0 7.5h0m0 21h0m0 .5h0m0 1.5h0m0 3h0m0 3.5h0m0 4.5h0m0 15h0m.5-65h0m0 6.5h0m0 3.5h0m0 1.5h0m0 .5h0m0 14h0m0 3.5h0m0 5h0m0 4.5h0m0 8h0m0 6.5h0m0 2h0m0 14h0m.5-66.5h0m0 5h0m0 5.5h0m0 1.5h0m0 3.5h0m0 2.5h0m0 2h0m0 10.5h0m0 7h0m0 4.5h0m0 1h0m0 8h0m0 9h0m.5-58h0m0 13.5h0m0 9h0m0 4.5h0m.5 4.5h0m0 11h0m.5-42h0m0 16h0m0 1h0m0 2h0m0 8h0m0 1h0m0 5.5h0m0 3.5h0m.5-32h0m0 15.5h0m0 3h0m0 1h0m0 7.5h0m0 .5h0m0 3.5h0m.5-63.5h0m0 7.5h0m0 4h0m0 36h0m0 8h0m0 9.5h0m.5-70h0m0 5h0m0 2.5h0m.5-7h0m0 .5h0m0 9h0m.5 4.5h0m0 40.5h0m0 15.5h0m.5-73.5h0m0 16h0m0 6h0m0 31h0m0 7.5h0m0 .5h0m0 10.5h0m0 4h0m0 4h0m.5-80.5h0m0 19h0m0 37.5h0m0 2h0m0 3h0m0 .5h0m0 1.5h0m0 3h0m0 2h0m0 1h0m0 .5h0m0 2.5h0m0 5.5h0m0 4h0m.5-76h0m0 59h0m0 8.5h0m.5-27h0m.5-6h0m0 4.5h0m0 2.5h0m0 2.5h0m0 9.5h0m0 4.5h0m0 6h0m0 5.5h0m0 11.5h0m.5-55.5h0m0 1.5h0m0 11h0m0 5h0m0 2.5h0m0 1h0m0 1h0m0 1.5h0m0 2h0m0 10.5h0m0 7.5h0m0 5.5h0m.5-47.5h0m0 1h0m0 6h0m0 4h0m0 2h0m0 11h0m0 4.5h0m0 4.5h0m0 3h0m0 3h0m0 3.5h0m.5-34.5h0m0 31h0m0 14h0m0 5.5h0m0 11h0m.5-76h0m0 2h0m0 6h0m0 1.5h0m0 1h0m0 5.5h0m0 5.5h0m0 1.5h0m0 4h0m0 3.5h0m.5-35.5h0m0 2.5h0m0 .5h0m0 5h0m0 1.5h0m0 4.5h0m0 3h0m0 2.5h0m0 2h0m0 9h0m0 3h0m0 4.5h0m0 3h0m0 .5h0m0 1.5h0m0 8h0m0 1h0m.5-47.5h0m0 1.5h0m0 4h0m0 7h0m0 7h0m0 21.5h0m1-73h0m0 8h0m0 42.5h0m0 4.5h0m0 5.5h0m0 2h0m0 7.5h0m0 15h0m0 19.5h0m.5-103.5h0m0 6h0m0 9h0m0 6.5h0m0 2.5h0m0 2h0m0 .5h0m0 19h0m0 1.5h0m0 8.5h0m0 7.5h0m0 2h0m0 2h0m0 5h0m0 2.5h0m0 2h0m0 1h0m0 2h0m0 2h0m0 .5h0m0 1h0m0 .5h0m0 1h0m0 4.5h0m0 12h0m.5-101.5h0m0 1.5h0m0 2.5h0m0 13h0m0 33.5h0m0 19.5h0m0 6h0m0 3.5h0m0 2.5h0m0 1h0m0 4.5h0m0 2.5h0m0 7.5h0m0 1.5h0m.5-94.5h0m0 5.5h0m0 9h0m0 8h0m0 31h0m.5-46.5h0m0 .5h0m0 1h0m0 1h0m0 3h0m0 4h0m0 1.5h0m0 10h0m0 3h0m0 .5h0m0 3h0m0 1h0m0 .5h0m0 2h0m0 1.5h0m0 1h0m0 2.5h0m0 4.5h0m0 1.5h0m0 2.5h0m0 7h0m0 2.5h0m0 2h0m0 6h0m.5-55.5h0m0 11.5h0m0 4h0m0 4h0m0 3.5h0m0 8h0m0 11.5h0m0 3.5h0m0 3.5h0m0 7h0m.5-55.5h0m0 4.5h0m0 1h0m0 .5h0m0 31h0m0 15.5h0m.5-58.5h0m0 .5h0m0 6.5h0m0 1.5h0m0 5.5h0m0 1h0m0 3h0m0 15.5h0m0 6.5h0m0 7.5h0m0 22h0m0 20h0m.5-87.5h0m0 20h0m0 1.5h0m0 3h0m0 4.5h0m0 .5h0m0 3.5h0m0 3h0m0 3.5h0m0 3.5h0m0 1h0m0 .5h0m0 3.5h0m0 2.5h0m0 1.5h0m0 5h0m0 3h0m0 1h0m0 1.5h0m0 1.5h0m0 1.5h0m0 5.5h0m.5-55.5h0m0 3h0m0 7.5h0m0 1.5h0m0 24.5h0m0 2.5h0m.5-33.5h0m0 13.5h0m.5-11.5h0m0 14.5h0m0 3.5h0m0 2h0m0 14h0m0 4h0m0 12h0m0 3.5h0m0 1.5h0m.5-44.5h0m0 3h0m0 .5h0m0 9h0m0 .5h0m0 3h0m0 4.5h0m0 4h0m0 1h0m0 5h0m0 3h0m0 9.5h0m.5-49h0m0 23h0m0 3h0m0 4.5h0m0 3h0m0 4h0m0 .5h0m0 3h0m0 5.5h0m1-52h0m0 9h0m0 8h0m0 3.5h0m0 13.5h0m0 5h0m.5-44.5h0m0 17.5h0m0 4.5h0m0 3h0m0 3h0m0 4h0m0 3h0m0 9h0m0 8h0m.5-35.5h0m0 20.5h0m0 2h0m0 8h0m.5-77h0m0 4h0m.5-11.5h0m0 12.5h0m0 48h0m0 5.5h0m0 2h0m0 3h0m0 6.5h0m0 1h0m0 1h0m.5-81h0m0 11h0m0 2h0m0 .5h0m0 37h0m0 9.5h0m0 5h0m0 .5h0m0 1h0m0 9h0m0 .5h0m0 8.5h0m0 3h0m0 1h0m0 12.5h0m.5-32h0m0 3h0m0 2h0m0 16h0m0 2h0m0 4h0m0 .5h0m0 2.5h0m0 4.5h0m0 1h0m0 1h0m0 2h0m0 3.5h0m0 3.5h0m.5-31.5h0m0 3.5h0m0 5.5h0m0 3.5h0m0 2.5h0m0 3.5h0m0 6h0m0 2.5h0m0 2h0m0 .5h0m.5-34.5h0m0 13h0m0 6.5h0m0 2.5h0m0 5h0m0 1.5h0m0 4h0m0 13h0m.5-68h0m0 2.5h0m0 1h0m0 2h0m0 1h0m0 2h0m0 1h0m0 6h0m0 3.5h0m0 7h0m0 7h0m0 7h0m.5-50.5h0m0 6.5h0m0 1h0m0 3h0m0 4.5h0m0 7h0m0 1h0m0 12h0m.5-29.5h0m0 6.5h0m0 14h0m0 1.5h0m0 4h0m0 7h0m0 1.5h0m0 4h0m0 3.5h0m0 1.5h0m0 9h0m.5-54h0m0 14.5h0m0 3h0m0 1h0m0 1h0m0 7h0m0 6h0m0 3h0m0 2h0m0 12h0m.5-26h0m0 6h0m.5-64h0m0 .5h0m0 1h0m0 3.5h0m0 .5h0m0 8.5h0m0 3h0m0 51h0m0 13h0m0 .5h0m0 5.5h0m0 7.5h0m0 4h0m0 1.5h0m.5-112h0m0 15h0m0 3h0m0 15.5h0m0 27h0m0 7h0m0 7.5h0m0 2h0m0 7h0m0 1h0m0 2.5h0m0 2.5h0m0 1.5h0m0 5.5h0m0 5.5h0m0 11.5h0m0 4h0m.5-120.5h0m0 4h0m0 15h0m0 7h0m0 6.5h0m0 1h0m0 41h0m0 6h0m0 7h0m0 13h0m.5-103h0m0 7h0m0 4h0m0 8h0m0 .5h0m0 39h0m0 9.5h0m.5-61h0m0 6h0m0 1h0m0 9.5h0m0 4h0m0 3h0m0 2.5h0m0 15.5h0m0 .5h0m0 1h0m0 1h0m0 4h0m0 .5h0m0 1.5h0m0 2.5h0m0 1h0m0 1h0m0 .5h0m0 1h0m0 1h0m0 5.5h0m0 2h0m0 3h0m0 11.5h0m0 1h0m0 3h0m0 11h0m.5-99h0m0 1.5h0m0 1h0m0 8.5h0m0 2h0m0 1h0m0 6h0m0 10.5h0m0 16.5h0m0 5h0m0 10h0m0 .5h0m0 1h0m0 10.5h0m0 3h0m0 1h0m0 5h0m.5-29h0m0 33h0m0 7h0m.5-48.5h0m0 10h0m0 9h0m0 8h0m0 5.5h0m0 2h0m0 1h0m0 8h0m0 6.5h0m0 1h0m0 9h0m.5-45.5h0m0 6.5h0m0 2h0m0 2.5h0m0 3.5h0m0 12.5h0m0 5.5h0m0 2h0m0 5.5h0m0 .5h0m0 3h0m0 5h0m.5-59h0m0 2.5h0m0 7h0m0 17h0m0 5.5h0m0 3h0m0 6h0m0 .5h0m.5-64.5h0m0 5.5h0m0 17h0m0 5.5h0m0 3h0m0 14.5h0m0 15h0m0 8.5h0m0 1.5h0m.5-55h0m0 20h0m0 1h0m0 7h0m0 9h0m0 6h0m0 15.5h0m0 12.5h0m.5-66.5h0m0 4h0m0 1.5h0m0 4h0m0 3h0m0 6h0m0 9.5h0m0 3.5h0m0 4h0m0 6.5h0m.5-89.5h0m0 .5h0m0 2h0m0 8.5h0m0 2.5h0m0 3h0m0 1h0m0 .5h0m0 24.5h0m0 12.5h0m0 3h0m0 10.5h0m0 2h0m0 2h0m0 1h0m0 3.5h0m0 7.5h0m0 7.5h0m0 .5h0m0 1.5h0m0 5.5h0m.5-98h0m0 3h0m0 3.5h0m0 10h0m0 49.5h0m0 17.5h0m.5-78.5h0m0 4.5h0m0 2.5h0m0 7.5h0m.5-16.5h0m0 7.5h0m0 42h0m0 7.5h0m.5-46.5h0m0 27.5h0m0 2h0m0 3.5h0m0 1h0m0 2.5h0m0 4.5h0m0 1.5h0m0 12.5h0m0 12.5h0m0 5.5h0m0 6.5h0m.5-52h0m0 1.5h0m0 2h0m0 2h0m0 16h0m0 2h0m0 2h0m0 4.5h0m0 3h0m0 .5h0m0 5.5h0m.5-22h0m0 2.5h0m0 15h0m0 3h0m0 4.5h0m0 4.5h0m0 9.5h0m0 1h0m0 1h0m.5-50h0m0 2.5h0m0 2h0m0 1.5h0m0 14h0m0 2h0m0 3h0m0 3h0m0 1.5h0m0 6h0m0 9.5h0m0 13.5h0m.5-44h0m0 12.5h0m0 12.5h0m0 4h0m.5-46h0m0 4h0m0 6h0m0 3.5h0m0 2.5h0m0 5.5h0m0 12.5h0m0 .5h0m0 7h0m0 5h0m0 4.5h0m.5-32h0m0 6.5h0m0 14.5h0m0 9.5h0m.5-48.5h0m0 22.5h0m0 16h0m.5-35h0m0 1.5h0m0 2.5h0m0 2h0m0 2h0m0 1h0m0 11h0m0 3.5h0m0 1h0m0 1.5h0m0 .5h0m0 5h0m0 1h0m0 1h0m0 10h0m0 10h0m0 9.5h0m.5-76h0m0 23.5h0m0 1h0m0 2h0m0 2h0m0 1.5h0m0 4.5h0m0 2h0m0 4.5h0m0 2h0m.5-34.5h0m.5 9h0m.5-18h0m0 2.5h0m0 26.5h0m0 3.5h0m0 8.5h0m0 25h0m.5-62.5h0m0 4.5h0m0 2h0m0 2h0m0 .5h0m0 1h0m0 .5h0m0 5h0m0 1.5h0m0 2.5h0m0 4.5h0m0 10h0m0 9h0m.5-57h0m0 5h0m0 2h0m0 4.5h0m0 15.5h0m0 5.5h0m0 2h0m0 2h0m0 5h0m0 3h0m0 9h0m0 2.5h0m.5-57h0m0 28h0m0 5.5h0m0 3.5h0m0 3.5h0m0 7h0m.5-18.5h0m0 3.5h0m0 5.5h0m0 6.5h0m0 7h0m0 1.5h0m0 15h0m.5-19h0m0 6h0m0 6.5h0m.5-35.5h0m0 14h0m0 2h0m0 14.5h0m0 2h0m0 1.5h0m0 6.5h0m.5-31.5h0m0 11.5h0m0 1.5h0m0 1h0m0 1h0m0 2h0m0 2h0m0 1h0m0 5.5h0m.5-31h0m0 4.5h0m0 2h0m0 7.5h0m.5-21h0m0 1h0m0 2h0m0 13.5h0m0 1h0m0 19.5h0m0 18h0m.5-61.5h0m0 11.5h0m0 1.5h0m0 1.5h0m0 1.5h0m0 9.5h0m0 4h0m0 7h0m0 5h0m0 9.5h0m0 7.5h0m.5-63.5h0m0 14.5h0m0 18h0m1-12h0m0 3.5h0m0 13.5h0m.5-70h0m0 41h0m0 4.5h0m0 1h0m0 8.5h0m0 15.5h0m0 5h0m0 .5h0m0 1h0m0 1h0m0 1h0m0 3.5h0m0 1h0m0 .5h0m0 1.5h0m0 3h0m0 2.5h0m0 4h0m0 1h0m.5-47.5h0m0 7h0m0 5.5h0m0 3h0m0 2h0m0 7h0m0 1h0m0 2h0m0 1.5h0m0 3h0m0 1.5h0m0 2h0m0 1.5h0m0 1h0m0 1h0m0 2.5h0m0 5.5h0m.5-58h0m0 31h0m0 6.5h0m1-53.5h0m0 13.5h0m0 22.5h0m.5-42h0m0 3h0m0 5h0m0 .5h0m0 4.5h0m0 1h0m0 1.5h0m0 2.5h0m0 5.5h0m0 1h0m0 1.5h0m0 1h0m0 .5h0m0 3h0m0 3.5h0m0 1h0m0 .5h0m0 1h0m0 1.5h0m0 6.5h0m.5-43.5h0m0 11.5h0m0 1h0m0 5.5h0m0 3h0m0 5h0m0 1h0m0 3h0m0 1.5h0m0 2h0m0 .5h0m0 1h0m0 2.5h0m0 1h0m0 5.5h0m0 1.5h0m0 2h0m0 2h0m0 32h0m.5-99.5h0m0 1.5h0m0 .5h0m0 3.5h0m0 10h0m0 7h0m0 4.5h0m0 10.5h0m0 3h0m0 1h0m0 8h0m0 5h0m.5-59h0m0 12.5h0m0 3.5h0m0 5h0m.5-20h0m0 3.5h0m0 11h0m0 2h0m.5-16.5h0m0 10h0m0 8.5h0m0 1h0m.5-5h0m0 14h0m0 49h0m.5-53.5h0m0 2h0m0 1h0m0 3.5h0m0 2h0m0 2h0m0 2h0m0 32h0m0 7.5h0m0 3.5h0m0 1.5h0m0 1.5h0m0 2.5h0m0 3h0m0 2h0m.5-71h0m0 11.5h0m0 39.5h0m0 3.5h0m0 1.5h0m0 2.5h0m0 1.5h0m0 4.5h0m0 2h0m0 1h0m0 6.5h0m0 3.5h0m.5-79.5h0m0 4.5h0m0 6.5h0m0 6.5h0m0 33h0m0 14.5h0m0 9.5h0m0 3.5h0m.5-69.5h0m0 2h0m0 4h0m0 1h0m.5 37.5h0m0 6.5h0m0 12h0m0 4h0m0 8h0m0 13h0m.5-54.5h0m0 3.5h0m0 2h0m0 1.5h0m0 8h0m0 13h0m0 9.5h0m.5-37h0m0 12.5h0m0 .5h0m0 1h0m0 1.5h0m0 3.5h0m0 1.5h0m0 4.5h0m0 2.5h0m0 1h0m0 3.5h0m.5-27h0m0 4h0m0 9h0m0 5.5h0m0 11h0m.5-74h0m.5 7h0m0 39h0m.5-68h0m0 15.5h0m0 .5h0m0 3h0m0 5h0m0 7h0m0 10h0m0 15.5h0m0 2h0m0 1.5h0m0 2.5h0m0 1h0m0 1h0m0 6h0m0 3.5h0m0 3h0m0 6h0m0 2.5h0m0 2h0m0 1.5h0m0 2.5h0m0 2h0m0 4h0m0 6.5h0m0 1.5h0m0 5.5h0m0 .5h0m0 1.5h0m.5-107h0m0 14.5h0m0 7h0m0 21.5h0m0 23h0m0 10h0m0 15h0m0 11.5h0m0 19.5h0m.5-119h0m0 11h0m0 1h0m0 1h0m0 2.5h0m0 15h0m0 1.5h0m0 2.5h0m0 4h0m0 .5h0m0 7h0m0 4h0m0 18.5h0m0 2h0m0 .5h0m0 3.5h0m0 8.5h0m0 7.5h0m.5-76h0m0 9.5h0m0 2h0m0 2.5h0m0 12h0m0 13h0m0 4h0m0 2.5h0m0 4h0m0 3h0m0 10h0m0 3.5h0m0 12.5h0m0 13h0m.5-62h0m0 3.5h0m0 4.5h0m0 20.5h0m0 15.5h0m.5-33h0m0 7.5h0m0 26.5h0m0 6.5h0m.5-38.5h0m0 1h0m0 8h0m0 1.5h0m0 6h0m0 .5h0m0 1.5h0m0 3h0m0 4.5h0m0 1h0m0 1h0m0 1h0m0 10h0m0 2.5h0m0 8.5h0m.5-61.5h0m0 14.5h0m0 4.5h0m0 5h0m0 1.5h0m0 9h0m0 1h0m0 .5h0m0 7.5h0m0 2.5h0m0 1.5h0m0 12.5h0m.5-38h0m0 8.5h0m0 1.5h0m0 1.5h0m1-30h0m0 10.5h0m0 1h0m.5-25h0m0 10h0m0 3h0m0 4h0m0 .5h0m0 1.5h0m0 1h0m0 2h0m0 5.5h0m0 3h0m0 7.5h0m0 3h0m.5-36h0m0 2h0m0 1.5h0m0 5h0m0 36h0m.5-32.5h0m0 16h0m.5-70h0m0 1h0m0 10h0m0 30.5h0m0 3h0m0 3h0m0 13h0m0 1h0m0 1h0m0 4h0m0 2.5h0m0 7.5h0m.5-84.5h0m0 15h0m0 1h0m0 2h0m0 36.5h0m0 4h0m0 5.5h0m0 2h0m0 1.5h0m0 12h0m0 3h0m0 14.5h0m.5-90h0m0 53h0m0 12h0m.5-57.5h0m0 14.5h0m0 54h0m0 3h0m0 12h0m0 2h0m0 4.5h0m.5-91h0m0 8h0m0 4.5h0m0 4.5h0m0 2h0m0 1.5h0m0 1h0m0 1h0m0 1h0m0 4h0m0 7.5h0m0 2.5h0m0 3.5h0m0 2h0m0 5.5h0m0 4h0m0 5h0m0 2.5h0m0 2.5h0m0 2h0m0 2h0m0 2h0m0 5h0m0 2h0m0 1h0m0 .5h0m0 1h0m0 .5h0m0 2h0m0 7h0m0 13.5h0m0 6h0m.5-112.5h0m0 3h0m0 13.5h0m0 3.5h0m0 40.5h0m0 23.5h0m0 5.5h0m0 4h0m0 .5h0m0 1h0m0 1.5h0m0 16.5h0m0 9h0m.5-121h0m0 16h0m0 39.5h0m0 2h0m0 28h0m.5-81.5h0m0 3h0m0 7.5h0m0 6h0m0 5h0m0 1h0m0 2.5h0m0 12h0m0 7.5h0m0 4h0m0 10h0m0 5h0m0 4h0m0 4h0m0 12.5h0m0 2h0m.5-89.5h0m0 50.5h0m0 10h0m0 4.5h0m0 3.5h0m0 2h0m0 3h0m0 3h0m0 4.5h0m0 4h0m0 3h0m.5-87h0m0 22.5h0m0 4.5h0m0 11.5h0m0 5h0m0 1.5h0m0 8.5h0m0 3h0m0 5.5h0m0 13h0m0 4h0m.5-51h0m0 36h0m.5-23h0m0 6.5h0m0 4.5h0m0 5h0m0 2h0m0 2h0m0 5.5h0m.5-23h0m0 2.5h0m0 9h0m0 9h0m.5-14h0m0 4h0m0 20h0m.5-76.5h0m0 31.5h0m0 7.5h0m0 30.5h0m0 2h0m0 11h0m.5-79h0m0 9.5h0m0 6.5h0m0 .5h0m0 1h0m0 6h0m0 1h0m0 4h0m0 2h0m0 2h0m0 1h0m0 4.5h0m0 1h0m0 4h0m0 1h0m0 4h0m0 6.5h0m0 1.5h0m0 .5h0m0 3h0m0 2h0m0 1h0m0 1.5h0m0 11h0m0 11h0m.5-60h0m0 9.5h0m0 10.5h0m0 5h0m0 19.5h0m.5-32h0m.5-6h0m0 13.5h0m0 1h0m0 4h0m0 2.5h0m0 4.5h0m0 10h0m0 2.5h0m0 2h0m0 18h0m0 7.5h0m.5-63.5h0m0 5.5h0m0 1h0m0 1h0m0 7.5h0m0 11h0m0 3h0m0 1.5h0m0 9h0m0 4h0m0 25h0m0 7h0m.5-67.5h0m0 11.5h0m0 4h0m0 8h0m0 20h0m0 1h0m1-39.5h0m0 4.5h0m0 2.5h0m0 3h0m0 3.5h0m0 8.5h0m0 2h0m0 4h0m0 1h0m0 4.5h0m0 1h0m0 5h0m0 6.5h0m0 5h0m.5-84.5h0m0 8h0m0 18.5h0m0 2h0m0 3h0m0 5.5h0m0 3.5h0m0 4h0m0 4h0m0 2.5h0m0 2h0m0 8.5h0m0 2h0m0 1.5h0m0 3.5h0m0 13h0m.5-56.5h0m0 16h0m0 13.5h0m0 1.5h0m0 3.5h0m0 19.5h0m.5-47h0m0 3h0m.5-50h0m0 45h0m0 8.5h0m0 13.5h0m.5-69h0m0 6.5h0m0 6h0m0 21h0m0 .5h0m0 7h0m0 2h0m0 9h0m0 1h0m0 7h0m0 3h0m0 1h0m0 2.5h0m0 7.5h0m0 3h0m.5-85h0m0 1.5h0m0 3.5h0m0 7.5h0m0 6h0m0 35.5h0m0 3.5h0m0 5.5h0m0 5.5h0m0 1.5h0m0 13h0m.5-17.5h0m0 1h0m0 7h0m0 1.5h0m0 3h0m0 3.5h0m0 6.5h0m.5-15.5h0m0 4h0m0 6.5h0m0 3.5h0m.5-31.5h0m.5-21h0m0 3.5h0m0 7.5h0m0 4.5h0m0 1h0m0 1.5h0m0 6h0m0 4h0m0 9h0m.5-40h0m0 9.5h0m0 3h0m0 8.5h0m0 1h0m0 3.5h0m0 1.5h0m0 5h0m.5-30.5h0m0 13h0m0 5h0m.5-12h0m0 3.5h0m0 24h0m0 1.5h0m0 14.5h0m0 3h0m.5-76h0m0 8h0m0 1h0m0 6.5h0m0 .5h0m0 6.5h0m0 .5h0m0 3h0m0 5h0m0 3h0m0 1h0m0 3h0m0 1h0m0 9h0m0 .5h0m0 1h0m0 2h0m0 2h0m0 3.5h0m0 3h0m0 9h0m.5-41h0m0 16.5h0m0 17h0m1-34h0m0 25h0m0 6.5h0m.5-43h0m0 15h0m0 5.5h0m0 1.5h0m0 3.5h0m0 2.5h0m0 6.5h0m0 10.5h0m0 3.5h0m.5-56.5h0m0 6h0m0 10h0m0 5h0m0 1h0m0 4h0m0 9.5h0m0 6h0m.5-17h0m0 .5h0m0 4.5h0m0 16.5h0m.5-40.5h0m0 21h0m0 16.5h0m0 5.5h0m0 6.5h0m0 3h0m0 1h0m.5-14.5h0m0 4.5h0m0 3.5h0m0 1.5h0m0 7h0m0 2h0m0 1h0m0 1h0m0 3.5h0m0 1.5h0m0 3h0m0 4h0m0 25.5h0m.5-67h0m0 4.5h0m1 1.5h0m0 36.5h0m.5-52h0m0 7.5h0m0 5.5h0m0 6h0m0 1.5h0m0 1h0m0 2h0m0 3.5h0m0 3h0m0 2.5h0m0 3.5h0m0 3h0m0 3h0m0 3h0m0 2h0m0 2.5h0m0 6.5h0m0 4.5h0m.5-88.5h0m0 33.5h0m0 12h0m0 7.5h0m0 3.5h0m0 5.5h0m0 4h0m0 10.5h0m0 3.5h0m0 7h0m0 18.5h0m0 10h0m.5-52.5h0m0 14h0m.5-55.5h0m0 3h0m0 9h0m0 5.5h0m0 2.5h0m0 1.5h0m0 2h0m0 5h0m0 3h0m0 7h0m0 11.5h0m.5-68.5h0m0 17.5h0m0 8.5h0m0 8h0m0 .5h0m0 10.5h0m0 7h0m0 2.5h0m0 3.5h0m0 3.5h0m0 5h0m0 5h0m.5-72.5h0m0 25h0m0 8.5h0m0 7.5h0m0 17h0m0 12.5h0m0 6.5h0m.5-39.5h0m0 12h0m0 7h0m0 27h0m.5-71h0m0 9.5h0m0 10h0m0 1.5h0m0 2.5h0m0 3.5h0m0 4h0m0 1h0m0 2h0m0 2.5h0m0 3h0m0 2.5h0m0 6.5h0m0 3.5h0m0 1h0m0 6.5h0m.5-45h0m0 23.5h0m0 9h0m0 3.5h0m0 5.5h0m0 6h0m0 25h0m.5-114h0m0 .5h0m0 1h0m0 2h0m0 .5h0m0 2.5h0m0 2h0m0 1h0m0 7.5h0m0 36h0m0 15.5h0m0 2h0m0 5h0m0 15h0m0 2h0m.5-83.5h0m0 2.5h0m0 5h0m0 24h0m0 10h0m0 6.5h0m0 2h0m0 15.5h0m0 4.5h0m0 1h0m0 2h0m0 3.5h0m0 3.5h0m0 10h0m.5-85.5h0m0 .5h0m0 1h0m0 3.5h0m0 22.5h0m0 21.5h0m0 3h0m0 4.5h0m0 13.5h0m0 2h0m0 2h0m0 5h0m0 1.5h0m.5-96.5h0m0 5.5h0m0 10h0m.5-15.5h0m0 2.5h0m0 5h0m0 5.5h0m0 3.5h0m0 14.5h0m0 9.5h0m0 11h0m0 3.5h0m0 8h0m0 6.5h0m.5-65.5h0m0 6h0m0 12h0m0 .5h0m0 17h0m0 4.5h0m0 2h0m0 1h0m0 4h0m0 5.5h0m0 .5h0m0 1.5h0m0 1.5h0m0 1.5h0m0 7h0m0 14h0m0 10.5h0m0 1h0m0 6h0m.5-80.5h0m0 16.5h0m0 1h0m0 4h0m0 3h0m0 .5h0m0 2h0m0 .5h0m0 1h0m0 1h0m0 3h0m0 1h0m0 2h0m0 1h0m0 3h0m0 6.5h0m0 1h0m0 7.5h0m0 15h0m.5-89.5h0m0 1h0m0 6.5h0m0 8.5h0m0 3h0m0 39.5h0m0 13h0m0 5.5h0m.5-74h0m0 3.5h0m0 1h0m0 2.5h0m0 2h0m0 2h0m0 .5h0m0 1.5h0m0 4h0m0 .5h0m0 60h0m.5-16h0m0 3.5h0m0 11h0m0 10h0m0 2.5h0m.5-30.5h0m0 1h0m0 .5h0m0 1h0m0 2h0m0 4h0m0 1h0m0 1h0m0 1h0m0 1h0m0 1.5h0m0 3h0m0 1h0m0 3h0m0 1.5h0m0 2h0m0 9.5h0m.5-36h0m0 9h0m0 6h0m0 2.5h0m0 5.5h0m0 7h0m0 30h0m.5-43.5h0m0 5.5h0m0 11.5h0m2-17.5h0m0 2h0m0 1h0m0 3h0m0 3h0m0 10h0m.5-25.5h0m0 .5h0m0 8h0m0 2.5h0m0 3h0m0 2.5h0m0 1h0m0 1h0m0 1h0m0 2h0m0 2h0m0 4h0m0 .5h0m0 1h0m.5-10h0m0 10h0m0 6.5h0m.5-32.5h0m0 9h0m0 9h0m0 5h0m0 6.5h0m.5-38.5h0m0 1h0m0 3.5h0m0 3h0m0 5h0m0 .5h0m.5-25h0m0 4h0m0 10.5h0m0 1h0m0 12.5h0m0 3.5h0m0 1h0m0 8.5h0m0 1h0m0 3.5h0m0 2h0m0 5h0m.5-50.5h0m0 32h0m.5-22h0m.5-27.5h0m0 10.5h0m0 .5h0m0 13h0m0 1.5h0m0 1h0m0 7h0m0 1.5h0m0 1.5h0m0 1.5h0m0 4h0m0 3h0m0 3.5h0m0 3h0m0 5.5h0m0 3.5h0m.5-65.5h0m0 20.5h0m0 1h0m0 13.5h0m0 2h0m0 5h0m0 3h0m0 7.5h0m0 6.5h0m0 1h0m0 10.5h0m.5-40.5h0m0 57h0m.5-54h0m0 5.5h0m0 5.5h0m0 14.5h0m0 5h0m0 4.5h0m0 6.5h0m.5-37h0m0 11h0m0 2.5h0m0 2h0m0 2h0m0 1.5h0m0 5h0m0 .5h0m0 1h0m0 3.5h0m0 3h0m0 3h0m0 1h0m0 2h0m0 10.5h0m0 2.5h0m.5-44.5h0m0 2.5h0m0 17.5h0m0 3h0m0 1.5h0m0 8h0m0 1.5h0m0 4h0m.5-76.5h0m0 12h0m0 4.5h0m0 8h0m0 1.5h0m0 4h0m0 5h0m0 25h0m.5-79h0m0 12h0m0 12h0m0 2h0m0 2h0m0 2.5h0m0 6.5h0m0 1h0m0 9.5h0m0 8h0m0 3.5h0m0 8h0m0 6h0m0 16h0m0 15h0m.5-82h0m0 1h0m0 4.5h0m0 1h0m0 8h0m0 5h0m0 1h0m0 1h0m0 2.5h0m0 1h0m0 2.5h0m0 .5h0m0 2h0m0 3.5h0m0 6.5h0m0 1h0m0 3h0m0 3.5h0m0 2h0m0 1h0m0 12.5h0m0 21h0m.5-107.5h0m.5 61h0m.5-5.5h0m0 4.5h0m0 1h0m0 7.5h0m.5-26h0m0 7h0m0 4.5h0m0 4h0m0 .5h0m0 3.5h0m0 4h0m0 2.5h0m0 9.5h0m0 2h0m0 5h0m0 1.5h0m.5-51h0m0 17h0m0 11.5h0m0 12h0m.5-4h0m1-8.5h0m0 3h0m0 3.5h0m0 4.5h0m0 3h0m0 1.5h0m0 1.5h0m0 2h0m0 1.5h0m0 2h0m0 4.5h0m0 1h0m.5-34h0m0 2h0m0 1.5h0m0 4.5h0m0 6.5h0m0 2h0m0 2h0m0 3.5h0m0 .5h0m0 4h0m0 2h0m0 6h0m0 7.5h0m0 13h0m.5-79h0m0 43.5h0m.5-34.5h0m0 4h0m0 1h0m0 4h0m0 12h0m.5-24h0m0 1h0m0 .5h0m0 2.5h0m0 2h0m0 3.5h0m0 .5h0m0 3.5h0m0 2h0m0 .5h0m0 15h0m.5-38.5h0m0 26h0m0 9h0m.5-31.5h0m0 6h0m0 5h0m0 3h0m0 3.5h0m0 2h0m0 2.5h0m0 2.5h0m0 2h0m0 11.5h0m0 1h0m.5-53.5h0m0 17h0m0 7h0m0 17h0m0 3h0m0 4h0m0 10h0m0 8h0m.5-59.5h0m0 7.5h0m0 8.5h0m0 20h0m0 8.5h0m.5-42.5h0m0 7.5h0m0 14.5h0m0 7h0m0 28h0m.5-65.5h0m0 4.5h0m0 5.5h0m0 9h0m0 6h0m0 1.5h0m0 1h0m0 3.5h0m0 1.5h0m0 3h0m0 11.5h0m0 3h0m0 1h0m0 8h0m.5-62h0m0 15.5h0m0 4.5h0m0 3h0m0 2h0m0 6.5h0m0 1h0m0 10.5h0m0 6.5h0m0 34h0m.5-66.5h0m.5 25h0m0 5.5h0m0 10.5h0m.5-56.5h0m0 12.5h0m0 .5h0m0 1h0m0 .5h0m0 2h0m0 9h0m0 10h0m0 2.5h0m0 5.5h0m0 4.5h0m0 2.5h0m0 20.5h0m.5-66.5h0m0 .5h0m0 1h0m0 4.5h0m0 9.5h0m0 1h0m0 1.5h0m0 1.5h0m0 1.5h0m0 2h0m0 3.5h0m0 1.5h0m0 1h0m0 8h0m0 11h0m0 6h0m0 1h0m0 .5h0m0 8h0m0 2.5h0m.5-60h0m0 18.5h0m0 14h0m0 8.5h0m1-35h0m0 20h0m0 3h0m0 8.5h0m.5-30.5h0m0 4.5h0m0 8.5h0m0 2.5h0m0 2h0m0 3h0m0 3.5h0m0 2h0m0 1.5h0m0 4.5h0m0 4h0m0 2.5h0m0 3h0m0 2.5h0m0 5.5h0m0 9h0m.5-66.5h0m0 4h0m0 4.5h0m0 6.5h0m0 2h0m0 2h0m0 3.5h0m0 8h0m0 6.5h0m0 5h0m0 3h0m0 8h0m0 3h0m0 3.5h0m0 .5h0m0 10.5h0m.5-38h0m0 4.5h0m0 7.5h0m0 1.5h0m0 1.5h0m0 6h0m.5-41.5h0m0 10h0m0 3h0m0 1.5h0m0 2.5h0m0 10h0m0 20.5h0m0 15.5h0m0 .5h0m.5-79h0m0 9.5h0m0 3h0m0 8h0m0 3.5h0m0 11.5h0m0 2.5h0m0 6h0m0 1.5h0m0 8.5h0m0 1h0m0 1h0m0 1h0m0 6.5h0m0 1h0m0 3h0m0 1h0m0 10h0m0 3.5h0m.5-77.5h0m0 1h0m0 4.5h0m0 3.5h0m0 18.5h0m0 9h0m0 19.5h0m.5-100.5h0m0 13h0m0 .5h0m0 53.5h0m0 2.5h0m0 1.5h0m0 2.5h0m0 3h0m0 1.5h0m0 5.5h0m0 8.5h0m0 7h0m.5-97h0m0 2h0m0 3h0m0 3h0m0 2.5h0m0 37h0m0 25.5h0m0 7h0m0 4h0m0 1h0m0 2h0m0 13h0m.5-91h0m0 10.5h0m3.5 58h0m0 2h0m0 1h0m0 2h0m.5-16h0m0 3h0m0 2h0m0 2h0m0 1h0m0 .5h0m0 1.5h0m0 7h0m0 1.5h0m0 1h0m0 2h0m0 2h0m0 1h0m.5-26.5h0m0 17.5h0m0 12h0m.5-6h0m.5-38h0m0 1h0m0 12h0m0 2h0m0 4h0m0 3.5h0m0 2h0m0 16.5h0m.5-42.5h0m0 5h0m0 .5h0m0 2.5h0m0 11h0m0 10h0m0 1h0m0 2h0m0 12.5h0m0 7h0m0 5h0m.5-63.5h0m0 10h0m0 4.5h0m0 7h0m0 8h0m0 20h0m.5-29h0m0 30.5h0m.5-43h0m0 13h0m0 2.5h0m0 9h0m0 1.5h0m0 1.5h0m0 .5h0m0 12h0m.5-44h0m0 8.5h0m0 6h0m0 6.5h0m0 2.5h0m0 2h0m0 .5h0m0 8h0m.5-26.5h0m0 3h0m0 4h0m0 9h0m0 4.5h0m0 7h0m0 2h0m0 2.5h0m.5-71h0m0 44h0m0 6.5h0m0 1h0m0 9.5h0m1-13h0m0 10h0m.5-31.5h0m0 3h0m0 4h0m0 2.5h0m0 .5h0m0 1h0m0 3h0m0 4h0m0 9h0m0 2.5h0m0 5.5h0m0 9.5h0m0 6h0m.5-46.5h0m0 1h0m0 2h0m0 7h0m0 2h0m0 4.5h0m0 2h0m0 1.5h0m0 7h0m0 2h0m0 8.5h0m0 1.5h0m.5-55h0m0 49.5h0m0 14.5h0m.5-35h0m0 7h0m0 2.5h0m0 15h0m0 15h0m0 5h0m.5-88h0m0 29.5h0m0 9h0m0 2.5h0m0 3.5h0m0 2h0m0 1.5h0m0 7h0m0 5h0m0 3h0m0 .5h0m0 3h0m0 3h0m0 1h0m0 .5h0m0 1h0m0 1h0m0 1.5h0m0 4h0m.5-66.5h0m0 4h0m0 2h0m0 .5h0m0 9h0m0 7.5h0m0 1h0m0 21.5h0m0 7.5h0m.5-55h0m0 .5h0m0 5.5h0m0 1h0m0 12h0m0 3.5h0m0 1h0m0 13h0m0 2.5h0m0 1.5h0m0 .5h0m0 5.5h0m0 4h0m.5-51h0m0 17h0m0 1.5h0m0 3h0m0 8h0m0 3h0m0 2h0m0 3.5h0m0 6.5h0m.5-66.5h0m0 2.5h0m0 5.5h0m0 1.5h0m0 5h0m0 3h0m0 .5h0m0 9h0m0 23h0m.5-52.5h0m0 6.5h0m0 2h0m0 1h0m0 4.5h0m0 1.5h0m0 3h0m0 6.5h0m0 51.5h0m0 1h0m.5-74h0m0 42.5h0m0 3.5h0m0 5h0m0 3.5h0m0 3.5h0m0 5.5h0m0 5.5h0m0 1h0m0 5.5h0m0 1.5h0m0 14h0m.5-95.5h0m0 13h0m0 1h0m0 2h0m0 7.5h0m0 4.5h0m0 3.5h0m0 1.5h0m0 3h0m0 .5h0m0 1h0m0 1h0m0 1h0m0 1.5h0m0 2h0m0 8.5h0m0 5.5h0m0 1h0m0 3.5h0m0 4h0m0 3h0m0 3h0m0 4h0m0 10h0m0 1h0m0 2h0m.5-85.5h0m0 4.5h0m0 21h0m0 5.5h0m0 1.5h0m0 18h0m0 10h0m0 1h0m0 14.5h0m0 3.5h0m0 1h0m0 3.5h0m.5-75.5h0m0 7h0m0 1.5h0m0 4.5h0m0 2h0m0 1h0m0 3h0m0 6.5h0m0 .5h0m0 12h0m0 10.5h0m0 6h0m0 2.5h0m0 3h0m0 20h0m0 1.5h0m0 1.5h0m0 15h0m.5-103.5h0m0 3.5h0m0 7.5h0m0 4.5h0m0 12.5h0m0 17.5h0m0 1h0m0 12h0m0 9h0m0 10h0m0 13h0m.5-96.5h0m0 6h0m0 9h0m0 .5h0m0 5h0m0 4.5h0m0 6.5h0m0 28h0m0 9h0m0 8.5h0m0 3.5h0m0 4.5h0m0 7h0m0 7.5h0m.5-97.5h0m0 1h0m0 1h0m0 3h0m0 3h0m0 1h0m0 8h0m0 3h0m0 .5h0m0 39.5h0m0 13h0m0 13.5h0m0 11h0m.5-51h0m0 18.5h0m0 3.5h0m0 1.5h0m0 14h0m0 10h0m0 .5h0m.5-42h0m0 14.5h0m0 10h0m0 3h0m0 1.5h0m0 .5h0m0 1.5h0m0 3h0m0 5.5h0m0 8h0m.5-44h0m0 2h0m0 5h0m0 2h0m0 3h0m0 4.5h0m0 3.5h0m0 3h0m0 1h0m0 5.5h0m0 2.5h0m0 1h0m0 .5h0m0 1h0m0 1.5h0m0 11h0m.5-42.5h0m0 10.5h0m0 .5h0m0 3h0m0 2.5h0m0 17h0m0 4.5h0m3-42.5h0m0 6h0m0 4h0m0 .5h0m0 2.5h0m0 .5h0m0 3h0m0 .5h0m.5-25h0m0 8h0m0 3h0m0 1.5h0m0 1h0m0 1.5h0m0 1h0m0 1h0m0 3h0m0 2.5h0m0 1h0m0 4.5h0m0 1h0m0 6h0m.5-20h0m0 3h0m0 2.5h0m1 5.5h0m0 12h0m.5-39h0m0 7h0m0 2.5h0m0 7.5h0m0 14h0m0 4h0m0 2.5h0m0 6h0m0 7h0m0 4h0m0 .5h0m0 6.5h0m.5-66h0m0 8h0m0 8.5h0m0 1h0m0 7h0m0 2.5h0m0 2h0m0 1h0m0 3h0m0 4h0m0 1.5h0m0 7h0m0 .5h0m0 1h0m0 .5h0m0 1h0m0 4.5h0m0 2.5h0m0 2h0m0 2.5h0m0 2h0m0 11h0m.5-58.5h0m0 6.5h0m0 5.5h0m0 14.5h0m0 1h0m0 2.5h0m0 8h0m0 2h0m1.5-41.5h0m0 3.5h0m0 6.5h0m0 2h0m0 6.5h0m0 1h0m0 3.5h0m0 10.5h0m0 3h0m0 8h0m0 5h0m.5-64.5h0m0 8.5h0m0 5.5h0m0 6h0m0 1.5h0m0 2.5h0m0 4h0m0 1.5h0m0 2.5h0m0 4.5h0m0 3h0m0 1h0m0 1h0m0 4h0m0 11.5h0m0 6h0m.5-61h0m0 4h0m0 24.5h0m0 2.5h0m0 27h0m.5-94.5h0m0 16.5h0m0 2.5h0m.5-4h0m0 10h0m0 35h0m0 17h0m0 3h0m0 4.5h0m0 5.5h0m.5-87h0m0 1.5h0m0 10h0m0 8.5h0m0 26.5h0m0 1h0m0 19h0m0 2.5h0m0 1h0m0 8.5h0m0 3h0m0 15h0m0 9h0m.5-78h0m0 19h0m0 2.5h0m0 1.5h0m0 5h0m0 3h0m0 1.5h0m0 14.5h0m0 3h0m0 11.5h0m0 8.5h0m.5-54.5h0m0 1.5h0m0 3.5h0m0 2.5h0m0 1.5h0m0 2.5h0m0 4h0m0 3h0m0 1.5h0m0 .5h0m0 3h0m0 4h0m0 1.5h0m0 11h0m.5-27h0m.5-66.5h0m0 9.5h0m0 4h0m0 8.5h0m.5-17h0m0 3h0m0 8h0m0 3h0m0 45.5h0m0 9.5h0m0 5h0m0 12.5h0m.5-80.5h0m0 3h0m0 32.5h0m0 .5h0m0 6h0m0 .5h0m0 3h0m0 2.5h0m0 2h0m0 2h0m0 5.5h0m0 7h0m0 2.5h0m0 5.5h0m0 1.5h0m0 5h0m0 6h0m.5-56h0m0 5h0m0 .5h0m0 3h0m0 3h0m0 18.5h0m0 1h0m0 10.5h0m0 6h0m.5-48h0m0 2h0m0 8.5h0m0 11.5h0m0 3.5h0m0 2.5h0m0 1h0m0 4h0m0 .5h0m0 18h0m0 .5h0m0 12.5h0m0 7.5h0m.5-82h0m0 3.5h0m0 21h0m0 1.5h0m0 2.5h0m0 1.5h0m0 4h0m0 1h0m0 6.5h0m0 4h0m0 2h0m0 1.5h0m0 1.5h0m0 3h0m0 2h0m0 .5h0m0 3h0m0 1h0m.5-69.5h0m0 3h0m0 24.5h0m0 4.5h0m1-26h0m0 35.5h0m.5-36h0m0 11.5h0m0 11h0m0 5h0m0 3.5h0m0 13h0m0 14h0m0 2.5h0m0 13.5h0m0 12h0m0 5.5h0m.5-66.5h0m0 2.5h0m0 3.5h0m0 6h0m0 5h0m0 4h0m0 14.5h0m0 5h0m0 9h0m0 8h0m0 .5h0m1-50h0m0 8h0m0 4.5h0m.5-54.5h0m0 21.5h0m0 6h0m0 1h0m0 .5h0m0 1h0m0 8.5h0m0 4.5h0m0 4.5h0m0 17h0m.5-40.5h0m0 3.5h0m0 1h0m0 1h0m0 1.5h0m0 1.5h0m0 3h0m0 6h0m0 4h0m0 4.5h0m0 2h0m0 5.5h0m0 1h0m0 2.5h0m.5-25.5h0m0 4h0m0 6.5h0m0 1h0m0 1h0m0 4h0m0 .5h0m.5-18.5h0m0 2.5h0m0 2h0m0 3.5h0m0 1.5h0m0 17h0m1-38h0m0 36.5h0m0 6h0m.5-40h0m0 .5h0m0 2h0m0 4.5h0m0 8.5h0m0 11.5h0m0 5h0m.5-53.5h0m0 3.5h0m0 11h0m0 4.5h0m0 4h0m0 1h0m0 3.5h0m0 5.5h0m0 8h0m.5 1h0m0 5.5h0m0 3h0m.5-37.5h0m0 7h0m0 5.5h0m0 5h0m0 1h0m0 3h0m0 4h0m0 5h0m0 2h0m0 .5h0m0 5.5h0m0 14.5h0m.5-50h0m0 10h0m0 2.5h0m0 1.5h0m0 3.5h0m0 1h0m0 1.5h0m0 .5h0m0 1h0m0 1h0m0 1.5h0m0 1h0m0 1.5h0m0 1.5h0m0 3h0m0 .5h0m0 2h0m0 2h0m0 3.5h0m0 26.5h0m.5-29h0m3.5-17.5h0m0 6h0m0 .5h0m0 3.5h0m0 1.5h0m0 1h0m0 3.5h0m0 1h0m0 1.5h0m0 2h0m0 1h0m.5-21.5h0m0 1.5h0m0 1h0m0 4h0m0 2h0m0 3h0m0 2.5h0m0 1h0m0 4.5h0m0 4h0m0 9h0m.5-43.5h0m0 19h0m0 2h0m0 4.5h0m0 1h0m1 1.5h0m0 20.5h0m.5-52h0m0 4h0m0 9h0m0 .5h0m0 2.5h0m0 4h0m0 13.5h0m0 1.5h0m0 1h0m0 3h0m0 .5h0m0 17h0m.5-61.5h0m0 9h0m0 8h0m0 5.5h0m0 5h0m0 .5h0m0 4h0m0 .5h0m0 4.5h0m0 8.5h0m0 1h0m0 2.5h0m0 2.5h0m.5-35.5h0m0 7.5h0m0 7h0m0 5h0m0 5h0m0 1h0m.5-16h0m0 7.5h0m0 2.5h0m0 24.5h0m.5-47.5h0m0 25.5h0m0 9h0m0 5.5h0m.5-25h0m0 1.5h0m0 2h0m0 5.5h0m0 4.5h0m0 2.5h0m0 1h0m0 2h0m0 4h0m0 2h0m0 2h0m0 .5h0m0 3.5h0m0 5h0m.5-14h0m0 6.5h0m1-60.5h0m0 1h0m0 18h0m0 1h0m0 8h0m0 1h0m0 1.5h0m0 13.5h0m0 8.5h0m.5-48h0m0 5.5h0m0 2h0m0 1h0m0 4h0m0 7.5h0m0 1.5h0m0 1h0m0 4h0m0 2.5h0m0 1h0m0 4.5h0m0 6h0m0 2h0m0 15.5h0m0 5h0m0 1h0m0 25h0m.5-98h0m0 10h0m0 13h0m0 .5h0m0 5.5h0m0 1h0m0 .5h0m0 1.5h0m0 2h0m0 2.5h0m0 2h0m0 2.5h0m0 2h0m0 2.5h0m0 5h0m0 2.5h0m0 1.5h0m0 6.5h0m0 3.5h0m1-44h0m1 26.5h0m0 7.5h0m0 7h0m0 1h0m0 9.5h0m.5-27h0m0 4h0m0 2h0m0 .5h0m0 1h0m0 3.5h0m0 1h0m0 .5h0m0 1h0m0 .5h0m0 5h0m0 .5h0m0 2.5h0m0 13.5h0m.5-33.5h0m0 4h0m0 1h0m0 1h0m0 .5h0m0 1.5h0m0 2.5h0m0 1.5h0m.5-78.5h0m0 7.5h0m0 5h0m.5-19.5h0m0 4.5h0m0 7h0m0 12h0m0 12h0m0 11.5h0m0 17h0m.5-62.5h0m0 1h0m0 1h0m0 4h0m0 1.5h0m0 7h0m0 1h0m0 .5h0m0 8h0m0 1.5h0m0 4h0m0 1.5h0m0 2.5h0m0 1.5h0m0 11h0m0 5h0m0 2.5h0m0 .5h0m0 3h0m0 .5h0m0 1.5h0m0 7.5h0m0 2h0m0 1.5h0m0 3.5h0m0 .5h0m0 12h0m0 2h0m.5-89.5h0m0 17.5h0m0 1h0m0 1h0m0 2h0m0 1h0m0 1.5h0m0 5h0m0 20.5h0m0 4.5h0m0 6h0m0 3.5h0m0 6h0m0 3.5h0m0 12.5h0m.5-84h0m0 4h0m0 4h0m0 2h0m0 1.5h0m0 3h0m0 16h0m0 14h0m0 15.5h0m.5-7.5h0m.5 2.5h0m0 20h0m.5-20.5h0m0 5.5h0m0 4h0m0 .5h0m0 1.5h0m0 .5h0m0 2.5h0m0 2.5h0m0 1h0m0 6.5h0m0 8h0m0 .5h0m0 2.5h0m0 2h0m.5-45.5h0m0 11h0m0 3.5h0m0 2h0m0 6h0m0 1h0m0 5h0m0 2.5h0m0 2.5h0m0 1.5h0m0 11.5h0m.5-36.5h0m0 17h0m0 14.5h0m0 9h0m.5-31.5h0m0 18h0m0 1h0m0 .5h0m0 9.5h0m0 5h0m0 2h0m0 21h0m0 6h0m.5-66.5h0m0 21.5h0m0 1.5h0m0 .5h0m0 1.5h0m0 9h0m0 17h0m.5-72.5h0m0 14h0m0 2.5h0m0 2h0m0 2h0m0 6.5h0m0 2.5h0m0 2h0m0 5.5h0m0 1h0m0 2.5h0m0 11h0m0 .5h0m0 1h0m.5-48h0m0 6h0m0 3h0m0 1h0m0 8h0m0 3.5h0m0 8h0m0 .5h0m0 14h0m0 8.5h0m.5-25h0m1 1.5h0m0 2h0m0 3.5h0m0 7h0m0 3h0m.5-24h0m0 2.5h0m0 1h0m0 1.5h0m0 12h0m0 .5h0m0 3h0m.5-23.5h0m0 20.5h0m.5-19h0m0 13h0m.5-10.5h0m0 1.5h0m0 4.5h0m0 .5h0m0 1h0m0 .5h0m0 4.5h0m0 2h0m0 2h0m.5-20h0m0 16.5h0m.5-14.5h0m0 5h0m0 17.5h0m0 10.5h0m.5-45h0m0 3h0m0 1.5h0m0 5h0m0 13.5h0m0 5h0m0 1h0m.5-31h0m0 3.5h0m0 5h0m0 6.5h0m0 1h0m0 5h0m0 5.5h0m0 11h0m0 23h0m.5-76h0m0 15h0m0 5.5h0m0 2h0m0 2.5h0m0 3.5h0m0 4.5h0m0 17h0m0 19.5h0m0 2h0m0 5h0m0 7h0m.5-83h0m0 5.5h0m0 .5h0m0 2.5h0m0 9.5h0m0 3h0m0 4.5h0m0 9.5h0m0 3h0m0 3h0m0 1.5h0m0 2.5h0m0 3h0m0 6.5h0m0 .5h0m0 4.5h0m0 6h0m0 8h0m.5-46.5h0m0 22.5h0m0 1.5h0m0 1h0m0 1h0m0 16h0m0 9h0m.5-15.5h0m.5-69h0m0 6.5h0m0 16h0m0 2.5h0m0 5.5h0m0 5h0m0 1.5h0m0 .5h0m0 3h0m0 3h0m0 2h0m0 7h0m0 11.5h0m.5-67h0m0 3.5h0m0 16h0m0 .5h0m0 4h0m0 1.5h0m0 4.5h0m0 3.5h0m0 .5h0m0 10h0m0 6.5h0m0 4h0m0 19h0m0 2.5h0m0 1h0m.5-60.5h0m0 .5h0m0 10h0m0 1.5h0m0 3h0m0 6.5h0m0 3.5h0m0 10.5h0m0 14h0m1-79h0m0 2.5h0m.5-18.5h0m0 7.5h0m0 1.5h0m0 2.5h0m0 8.5h0m0 52.5h0m0 9.5h0m0 3h0m0 1h0m0 6.5h0m0 4.5h0m.5-94.5h0m0 8h0m0 8h0m0 58h0m0 1.5h0m0 2h0m0 2h0m0 2h0m0 4h0m0 2h0m0 1h0m0 3h0m0 1h0m0 3h0m.5-98h0m0 6.5h0m0 5.5h0m0 .5h0m0 9.5h0m0 57h0m0 6.5h0m0 5h0m.5-86.5h0m0 5h0m0 5h0m0 4h0m0 30h0m0 8h0m0 1h0m0 13h0m0 1.5h0m0 4h0m0 16h0m.5-90h0m0 2.5h0m0 11h0m0 3h0m0 6h0m0 15h0m0 1h0m0 4.5h0m0 .5h0m0 1.5h0m0 3h0m0 .5h0m0 1h0m0 2.5h0m0 1.5h0m0 4h0m0 3h0m0 .5h0m0 1h0m0 1h0m0 3.5h0m0 6.5h0m0 8.5h0m.5-74h0m0 11h0m0 11.5h0m0 3h0m0 3h0m0 3h0m0 .5h0m0 8h0m0 2.5h0m0 3h0m0 5h0m0 5h0m0 1h0m0 .5h0m0 4.5h0m0 2h0m0 5h0m0 11h0m.5-52h0m0 8h0m0 6h0m0 7.5h0m0 2.5h0m.5-13.5h0m.5 20.5h0m0 3.5h0m0 6h0m0 6.5h0m0 1h0m0 .5h0m0 11.5h0m0 9.5h0m0 10h0m.5-48h0m0 6h0m0 1h0m0 8.5h0m0 1.5h0m0 1h0m0 1h0m0 4h0m0 1h0m0 1.5h0m0 4h0m0 5h0m0 .5h0m0 8.5h0m.5-58h0m0 16h0m0 8h0m0 1h0m0 1.5h0m0 16h0m0 6h0m0 4.5h0m.5-18h0m.5-44h0m0 12.5h0m0 15h0m.5-27h0m0 6.5h0m0 4.5h0m0 3h0m0 4.5h0m0 6h0m0 6h0m0 8h0m0 4h0m.5-47h0m0 4.5h0m0 7h0m0 1.5h0m0 6h0m0 5h0m0 2.5h0m0 1.5h0m0 10h0m0 11.5h0m0 9h0m.5-48h0m0 7h0m0 4h0m0 5h0m0 6.5h0m0 11.5h0m.5-7.5h0m0 2.5h0m0 10h0m0 21h0m.5-74h0m0 12.5h0m0 5h0m0 8.5h0m0 2h0m0 1h0m0 4h0m0 1h0m0 11.5h0m0 3.5h0m0 2h0m0 12.5h0m0 1.5h0m.5-84.5h0m0 56.5h0m0 7h0m0 5h0m0 9.5h0m1-45.5h0m0 21h0m0 17h0m.5-44.5h0m0 8h0m0 8.5h0m0 2h0m0 4h0m0 1.5h0m0 1.5h0m0 4.5h0m0 1h0m0 18.5h0m.5-52.5h0m0 8h0m0 4.5h0m0 .5h0m0 2.5h0m0 1h0m0 1h0m0 13.5h0m0 5h0m0 1.5h0m0 1.5h0m0 5h0m0 3h0m0 .5h0m0 3.5h0m0 3.5h0m0 1h0m.5-61.5h0m0 3.5h0m0 .5h0m0 8h0m0 1h0m.5-25h0m0 10.5h0m0 6.5h0m0 3.5h0m0 13h0m0 .5h0m0 1h0m0 2.5h0m0 1h0m0 3h0m0 3h0m0 .5h0m0 8.5h0m.5-39h0m0 4h0m0 5.5h0m0 4h0m0 2h0m0 17h0m0 1.5h0m0 2h0m0 2h0m0 16.5h0m0 23.5h0m.5-66h0m0 14h0m0 2h0m0 8.5h0m0 2.5h0m0 2.5h0m0 2h0m0 1h0m0 2h0m0 2.5h0m0 1.5h0m0 6.5h0m0 3h0m0 .5h0m0 1.5h0m0 1.5h0m0 8.5h0m0 3h0m0 12.5h0m.5-107h0m0 .5h0m0 9.5h0m0 2.5h0m0 7h0m0 17.5h0m0 28.5h0m0 2h0m0 4h0m0 10h0m0 6h0m.5-98.5h0m0 2.5h0m0 53h0m0 32h0m.5-93h0m0 8.5h0m0 8h0m0 6.5h0m0 .5h0m0 3.5h0m0 3.5h0m.5-28.5h0m0 .5h0m0 8.5h0m0 7.5h0m0 17h0m0 7.5h0m0 8.5h0m0 3h0m0 2h0m0 11h0m.5-61h0m0 6h0m0 27.5h0m0 4h0m0 2.5h0m0 2h0m0 1h0m0 6h0m0 2.5h0m0 5h0m0 3.5h0m0 2h0m0 8.5h0m0 2h0m0 14h0m.5-91.5h0m0 8.5h0m0 6h0m0 34h0m0 3h0m0 6.5h0m0 1.5h0m0 2h0m0 19.5h0m0 1.5h0m.5-81h0m0 5.5h0m0 6h0m0 4.5h0m0 51h0m0 2.5h0m0 .5h0m0 1h0m0 1h0m0 1h0m0 3h0m0 1.5h0m0 1h0m0 3.5h0m0 1.5h0m0 1h0m0 .5h0m0 11h0m.5-99h0m0 13.5h0m0 3.5h0m0 1h0m0 2.5h0m0 10h0m0 40h0m0 23.5h0m.5-92h0m0 6.5h0m0 .5h0m0 39.5h0m0 6.5h0m0 6h0m0 2.5h0m0 2.5h0m0 2h0m0 1h0m0 13h0m0 5.5h0m0 2.5h0m0 1.5h0m0 1h0m0 2.5h0m0 1h0m0 8h0m0 3.5h0m0 .5h0m.5-61h0m0 10h0m0 2h0m0 13h0m0 2.5h0m0 5h0m0 6h0m0 5.5h0m0 .5h0m0 7h0m0 7h0m0 4h0m0 2h0m0 2.5h0m.5-59h0m.5 11h0m0 11h0m0 6.5h0m0 14h0m0 6h0m0 20.5h0m.5-90.5h0m0 16.5h0m0 2h0m0 10.5h0m0 3.5h0m0 6h0m0 1h0m0 4.5h0m0 3h0m0 6h0m0 2h0m0 6.5h0m.5-20h0m1-7h0m0 1h0m0 9h0m0 3h0m.5-16.5h0m0 6.5h0m0 .5h0m0 4h0m0 4h0m0 8.5h0m0 2h0m0 4.5h0m0 .5h0m.5-36.5h0m0 10h0m0 5h0m0 3.5h0m.5-22.5h0m0 13h0m1-.5h0m0 7h0m0 2.5h0m0 8h0m0 1h0m0 1h0m0 7h0m0 2.5h0m0 6.5h0m0 1h0m0 5.5h0m0 7h0m0 7h0m0 7h0m.5-70h0m0 6h0m0 5h0m0 18h0m0 2h0m0 .5h0m0 2.5h0m0 1.5h0m0 2h0m0 2.5h0m0 .5h0m0 3.5h0m0 1h0m0 1h0m0 1h0m0 3h0m0 1.5h0m0 1h0m0 1h0m0 1.5h0m0 1.5h0m0 3.5h0m.5-64h0m0 28.5h0m0 2.5h0m0 4h0m0 10h0m0 12h0m0 12.5h0m0 3.5h0m.5-17h0m1-85.5h0m0 23.5h0m0 12h0m0 6.5h0m0 1.5h0m0 2.5h0m0 1.5h0m0 3h0m0 2.5h0m0 .5h0m0 1h0m0 5h0m0 3h0m0 3.5h0m0 4.5h0m0 5.5h0m0 6h0m.5-67.5h0m0 21h0m0 2.5h0m0 1h0m0 1.5h0m0 8.5h0m0 3h0m0 1h0m0 4h0m0 11h0m0 1h0m0 3.5h0m0 3h0m0 6h0m0 8.5h0m0 2.5h0m0 1h0m.5-50h0m0 46h0m.5-39.5h0m0 11.5h0m0 3h0m0 13h0m0 16h0m0 1h0m.5-87h0m0 5h0m0 9.5h0m0 2h0m0 4.5h0m0 7.5h0m0 2h0m0 1.5h0m0 6h0m0 1.5h0m0 1h0m0 3h0m0 5h0m0 3h0m0 7h0m.5-41h0m0 1.5h0m0 5h0m0 12h0m0 10.5h0m0 13.5h0m0 7.5h0m0 4.5h0m0 2.5h0m.5-48h0m0 28.5h0m.5-44h0m0 58h0m0 13.5h0m.5-87h0m0 22h0m0 .5h0m0 12h0m0 7h0m0 1.5h0m0 3h0m0 2h0m0 2.5h0m0 1.5h0m0 1.5h0m0 1h0m0 2.5h0m0 1h0m0 4h0m0 2.5h0m0 .5h0m0 16.5h0m.5-52.5h0m0 2h0m0 5h0m0 3h0m0 5.5h0m0 3.5h0m0 1h0m0 2h0m0 3.5h0m0 5h0m0 15h0m0 1h0m0 1h0m0 2.5h0m0 11h0m.5-27.5h0m.5-93h0m0 1.5h0m0 9h0m0 8h0m.5-14.5h0m0 6.5h0m0 8h0m0 1.5h0m.5-14.5h0m0 10h0m2 39.5h0m0 6.5h0m0 4.5h0m0 1h0m0 1.5h0m0 1.5h0m0 4.5h0m0 .5h0m.5-57.5h0m0 13h0m0 3h0m0 14h0m0 3.5h0m0 1.5h0m0 4h0m0 .5h0m0 2.5h0m0 1h0m0 2h0m0 1h0m0 6.5h0m0 3.5h0m0 4.5h0m0 5h0m.5-58h0m0 8.5h0m0 1.5h0m0 .5h0m0 5.5h0m0 14.5h0m0 16h0m0 1h0m0 3h0m0 15h0m.5-56h0m.5 15.5h0m0 10h0m0 5h0m0 19.5h0m.5-36h0m0 5h0m0 3.5h0m0 1h0m0 4h0m0 5.5h0m0 3h0m0 6.5h0m0 3.5h0m0 13h0m0 5h0m0 6h0m0 9.5h0m.5-97h0m0 12h0m0 6.5h0m0 3.5h0m0 7.5h0m0 7h0m0 1.5h0m0 11.5h0m0 2.5h0m0 2.5h0m0 1h0m0 .5h0m0 1.5h0m0 1h0m0 .5h0m0 9.5h0m0 .5h0m0 3.5h0m0 2.5h0m0 3.5h0m.5-35h0m0 3.5h0m0 25h0m0 3.5h0m3.5-30h0m.5 2h0m0 3.5h0m0 .5h0m0 2.5h0m0 2.5h0m0 1.5h0m0 6h0m0 8h0m.5-32h0m0 8.5h0m0 1h0m0 .5h0m0 1h0m0 3h0m0 1h0m0 4.5h0m0 1h0m0 .5h0m0 5h0m0 1.5h0m0 3.5h0m0 5h0m.5-13h0m.5-28.5h0m0 12.5h0m0 9h0m0 5.5h0m0 9.5h0m0 3h0m0 11.5h0m0 2.5h0m0 1.5h0m0 4h0m.5-55.5h0m0 4.5h0m0 11h0m0 5.5h0m0 5h0m0 7h0m0 2h0m0 5.5h0m0 .5h0m0 2h0m0 3h0m.5-39.5h0m0 30h0m0 5.5h0m.5-48.5h0m0 5h0m0 3.5h0m0 9h0m0 3h0m0 11h0m0 4h0m0 1.5h0m.5-85h0m0 2h0m0 2.5h0m0 9.5h0m0 5.5h0m0 2h0m0 19.5h0m0 1h0m0 5h0m0 5h0m0 5.5h0m0 1h0m0 8h0m0 1h0m0 3.5h0m0 3h0m0 1h0m0 1.5h0m0 5.5h0m0 2h0m0 .5h0m0 1.5h0m0 5h0m0 .5h0m0 2.5h0m0 4.5h0m.5-95h0m0 3.5h0m0 1.5h0m0 8.5h0m0 1.5h0m0 31.5h0m0 12.5h0m0 1.5h0m0 5h0m0 8.5h0m.5-66.5h0m0 5h0m0 3h0m0 33h0m.5-40h0m0 4.5h0m0 16h0m0 8h0m0 5h0m0 3h0m0 2h0m0 .5h0m0 2.5h0m0 1h0m0 1h0m0 3h0m0 1.5h0m0 2h0m0 3h0m0 6.5h0m0 .5h0m0 8h0m.5-78h0m0 2.5h0m0 3.5h0m0 1h0m0 1.5h0m0 10.5h0m0 22h0m0 4h0m0 7.5h0m0 2h0m0 11h0m.5-68h0m0 1.5h0m0 5h0m0 15.5h0m0 85h0m.5-92.5h0m0 .5h0m0 29h0m0 26h0m0 4.5h0m0 2.5h0m0 .5h0m.5-73.5h0m0 8.5h0m0 4.5h0m0 5.5h0m0 19.5h0m0 7h0m0 8h0m0 2h0m0 3.5h0m0 1.5h0m0 11h0m0 1.5h0m0 3h0m0 2h0m0 2.5h0m0 3.5h0m.5-87.5h0m0 7.5h0m0 12.5h0m0 17.5h0m0 6.5h0m0 2h0m0 4.5h0m0 8h0m0 2.5h0m0 2h0m0 1h0m0 2.5h0m0 2h0m0 2.5h0m0 1h0m0 6h0m0 5.5h0m0 9h0m.5-87h0m0 .5h0m0 4h0m0 5h0m0 4h0m0 1.5h0m0 2h0m0 43h0m.5-48h0m.5 62.5h0m0 1.5h0m0 7.5h0m0 10h0m.5-29.5h0m0 4h0m0 2.5h0m0 1h0m0 8.5h0m0 1.5h0m0 3h0m0 1.5h0m0 2.5h0m0 3.5h0m0 11h0m.5-41.5h0m0 1h0m0 3h0m0 12.5h0m0 4h0m0 1.5h0m0 1.5h0m0 1h0m0 5h0m0 1h0m0 4h0m0 7h0m.5-50h0m0 6.5h0m0 12h0m0 2.5h0m0 6.5h0m.5-16.5h0m0 4.5h0m0 7h0m.5 18.5h0m.5-66.5h0m0 12h0m0 3.5h0m0 12h0m0 4.5h0m0 3.5h0m0 3.5h0m0 7.5h0m0 4h0m0 9h0m0 1h0m0 3h0m0 16.5h0m0 4.5h0m0 3h0m.5-79.5h0m0 25.5h0m0 4.5h0m0 4.5h0m0 2.5h0m0 6.5h0m0 2.5h0m0 2.5h0m0 6h0m0 7.5h0m0 2.5h0m.5-50h0m0 1h0m0 1h0m.5-19.5h0m0 .5h0m0 3.5h0m0 2.5h0m0 6h0m0 .5h0m0 2h0m0 1.5h0m0 1.5h0m0 2.5h0m0 3h0m0 1h0m0 1.5h0m0 10h0m0 1h0m0 1h0m0 2.5h0m0 1h0m0 2h0m0 5h0m0 4h0m0 6.5h0m0 7.5h0m0 2h0m.5-76h0m0 3.5h0m0 15.5h0m0 3h0m0 1h0m0 5.5h0m0 6.5h0m0 2h0m0 2.5h0m0 2.5h0m0 10.5h0m0 2h0m0 3.5h0m0 5.5h0m0 .5h0m1-26h0m.5-11h0m0 13.5h0m0 5h0m0 1h0m0 7h0m0 2h0m.5-25h0m0 4h0m0 1.5h0m0 7h0m0 6.5h0m0 7.5h0m.5-23.5h0m.5-22h0m0 34.5h0m0 11.5h0m0 2.5h0m0 13h0m.5-56.5h0m0 1.5h0m0 1h0m0 3h0m0 1.5h0m0 2.5h0m0 2h0m0 8h0m0 2h0m0 1h0m0 1h0m0 6h0m0 1.5h0m0 3h0m0 4h0m0 6.5h0m0 2h0m0 1h0m0 3h0m0 2h0m0 2.5h0m0 20.5h0m.5-77h0m0 4.5h0m0 13h0m0 .5h0m0 2h0m0 6h0m0 8.5h0m0 3h0m0 4h0m0 6h0m0 7h0m0 .5h0m0 9.5h0m0 3h0m1.5-37.5h0m0 1.5h0m0 4.5h0m0 12.5h0m0 14h0m.5-40.5h0m0 1h0m0 5.5h0m0 1h0m0 4h0m0 5h0m0 2.5h0m0 1h0m0 3h0m0 1.5h0m0 16h0m.5-90h0m0 .5h0m0 2.5h0m0 3h0m0 2h0m0 3h0m0 4h0m0 36.5h0m0 .5h0m0 1h0m0 14.5h0m0 12.5h0m.5-86h0m0 19h0m0 4.5h0m0 37h0m0 10h0m0 11.5h0m.5-81.5h0m0 5h0m0 4h0m0 6h0m0 6h0m0 2.5h0m0 30.5h0m0 5.5h0m0 4.5h0m0 .5h0m0 3h0m0 5h0m0 1.5h0m0 3.5h0m0 4.5h0m0 1h0m.5-80h0m0 3h0m0 1.5h0m0 14.5h0m0 39h0m0 6h0m0 9h0m0 3.5h0m0 5.5h0m0 5.5h0m.5-64.5h0m.5-30.5h0m0 43h0m0 17h0m0 17.5h0m0 14h0m0 2h0m0 4.5h0m0 7h0m0 12h0m.5-50h0m0 2.5h0m0 2h0m0 2h0m0 1.5h0m0 1h0m0 3h0m0 1.5h0m0 2h0m0 2h0m0 4.5h0m0 7h0m0 .5h0m0 3.5h0m0 1h0m0 1h0m0 2.5h0m.5-32h0m0 13.5h0m.5-38h0m0 4.5h0m0 3h0m0 6.5h0m0 22h0m0 3h0m0 3h0m0 8h0m.5-74h0m0 10h0m0 26h0m0 4.5h0m0 1h0m0 2h0m0 6.5h0m0 18h0m0 9.5h0m.5-31.5h0m0 7h0m0 5h0m0 25.5h0m.5-71h0m0 8h0m0 11.5h0m0 .5h0m0 7.5h0m0 3h0m0 2.5h0m0 1.5h0m0 5h0m0 3.5h0m0 7.5h0m0 13h0m0 6h0m.5-54.5h0m0 2h0m0 3h0m0 3h0m0 2h0m0 21h0m0 2.5h0m0 3.5h0m0 4.5h0m0 7h0m.5-67h0m0 17h0m0 23h0m0 18h0m0 13.5h0m.5-54.5h0m0 2.5h0m0 6.5h0m0 1.5h0m0 5h0m0 10h0m0 2.5h0m0 3h0m0 4.5h0m0 37h0m.5-95h0m0 16.5h0m0 11.5h0m0 7.5h0m0 5.5h0m0 8h0m0 5.5h0m0 2h0m0 5h0m0 2.5h0m0 9h0m.5-73h0m0 3h0m0 40h0m0 16.5h0m.5-72.5h0m0 32h0m0 3h0m0 4h0m0 4.5h0m0 3.5h0m0 2h0m0 8.5h0m0 2.5h0m0 4.5h0m0 23h0m.5-76.5h0m0 41h0m0 14h0m.5-53h0m0 3h0m0 14h0m0 12.5h0m0 3h0m0 8.5h0m0 9.5h0m0 1.5h0m.5-61h0m0 1h0m0 6h0m0 9.5h0m0 6.5h0m0 4.5h0m0 8h0m0 9h0m0 3.5h0m.5-53.5h0m0 7.5h0m0 12.5h0m0 7.5h0m0 7.5h0m0 8.5h0m0 1.5h0m0 6.5h0m0 8.5h0m0 1.5h0m0 1.5h0m0 6h0m.5-51h0m0 6h0m0 7.5h0m0 5.5h0m0 1h0m0 1h0m0 1.5h0m0 8.5h0m0 6.5h0m0 2.5h0m.5-43h0m0 15h0m0 12h0m0 2h0m.5-44h0m0 14h0m0 10h0m0 3h0m0 6h0m0 1.5h0m0 12.5h0m0 6h0m0 3.5h0m0 10h0m.5-48h0m0 4h0m0 6.5h0m0 16.5h0m0 4.5h0m0 12h0m0 .5h0m0 7h0m.5-16h0m0 14.5h0m0 14.5h0m.5-57.5h0m0 4.5h0m0 .5h0m0 3.5h0m0 2h0m0 3h0m0 1h0m0 1h0m0 3h0m0 7h0m0 1.5h0m0 5.5h0m0 1h0m0 10h0m0 15h0m.5-78h0m0 16.5h0m0 38h0m0 6.5h0m0 1h0m0 3.5h0m.5-25.5h0m.5-23h0m0 9h0m0 3h0m0 .5h0m0 2.5h0m0 2.5h0m0 2h0m0 6h0m0 .5h0m0 5h0m.5-72.5h0m0 3h0m0 38h0m0 23h0m0 5.5h0m.5-59h0m0 2.5h0m0 7.5h0m.5-20.5h0m0 2.5h0m0 9h0m0 14h0m0 6.5h0m0 31h0m0 5.5h0m0 6h0m0 3.5h0m.5-79.5h0m0 2.5h0m0 4h0m0 1.5h0m0 3h0m0 4.5h0m0 .5h0m0 4h0m0 8.5h0m0 4h0m0 4h0m0 23h0m0 .5h0m0 12.5h0m0 1h0m0 4.5h0m0 4.5h0m0 1h0m0 1h0m0 .5h0m0 1h0m0 .5h0m0 1.5h0m0 .5h0m0 2.5h0m0 7h0m0 1.5h0m.5-94h0m0 2h0m0 6h0m0 11h0m0 6.5h0m0 44.5h0m0 4.5h0m.5-71h0m0 9h0m0 5h0m.5 5.5h0m0 1h0m0 3.5h0m0 1.5h0m.5-15.5h0m0 2.5h0m0 1h0m0 4h0m0 .5h0m0 4h0m0 6h0m0 1h0m0 26h0m0 12.5h0m0 6h0m0 1.5h0m0 3h0m0 6h0m0 2.5h0m0 2h0m0 6h0m.5-79.5h0m0 10.5h0m0 14h0m0 8.5h0m0 3.5h0m0 5h0m0 1h0m0 1h0m0 4h0m0 3h0m0 4.5h0m0 2h0m0 5.5h0m0 3h0m0 .5h0m0 1.5h0m0 9h0m0 1h0m0 4.5h0m0 2h0m0 2h0m.5-65.5h0m0 13.5h0m0 6.5h0m0 4h0m0 5h0m0 7h0m0 7.5h0m0 15.5h0m.5-58.5h0m0 49.5h0m0 10h0m.5-62h0m0 32.5h0m0 9h0m0 2h0m0 5h0m0 4h0m0 1.5h0m0 3.5h0m.5-29.5h0m0 .5h0m0 4h0m0 2h0m0 1h0m0 4h0m0 1h0m0 4h0m0 2.5h0m0 3h0m0 .5h0m0 1h0m0 4.5h0m0 22h0m.5-114.5h0m0 5.5h0m0 2h0m0 6.5h0m0 .5h0m0 48h0m0 11h0m0 6h0m.5-76.5h0m.5-.5h0m0 2h0m0 2.5h0m1.5 61h0m.5-14.5h0m0 8.5h0m0 3h0m0 1h0m0 .5h0m0 6.5h0m0 .5h0m0 4h0m0 .5h0m0 4h0m.5-32.5h0m0 1.5h0m0 1h0m0 8.5h0m0 6.5h0m0 3h0m0 .5h0m0 1h0m0 3h0m0 4.5h0m0 3h0m.5-33.5h0m0 13h0m0 1h0m0 1.5h0m0 1.5h0m0 8h0m0 3h0m0 2h0m0 .5h0m1-27.5h0m.5-23.5h0m0 6h0m0 8h0m0 6.5h0m0 20h0m0 19.5h0m.5-79.5h0m0 21h0m0 7h0m0 2h0m0 1h0m0 6.5h0m0 .5h0m0 7h0m0 .5h0m0 1.5h0m0 .5h0m0 9.5h0m0 5.5h0m0 2h0m0 1.5h0m0 1h0m0 5.5h0m0 10h0m.5-83.5h0m0 23.5h0m0 7h0m0 5.5h0m0 1.5h0m0 3.5h0m0 8h0m0 .5h0m0 2h0m0 1h0m0 1h0m0 2h0m0 4h0m0 10.5h0m0 1h0m0 5h0m0 11h0m.5-69h0m0 9.5h0m0 8.5h0m0 3h0m0 3h0m0 .5h0m0 2.5h0m0 1h0m0 .5h0m0 1h0m0 13.5h0m0 3.5h0m0 1h0m0 4.5h0m0 8h0m0 26h0m.5-117.5h0m0 8.5h0m0 9.5h0m0 1h0m0 2.5h0m0 11h0m0 15h0m0 16.5h0m0 1.5h0m0 14.5h0m0 7h0m.5-86h0m0 .5h0m0 1.5h0m0 5.5h0m0 2.5h0m0 1h0m0 8.5h0m0 25h0m0 11.5h0m0 12h0m0 2h0m0 4.5h0m0 9.5h0m.5-82.5h0m0 4.5h0m.5-2.5h0m0 2.5h0m0 6.5h0m0 6h0m0 1.5h0m0 45.5h0m0 6.5h0m0 4h0m.5-66.5h0m0 1h0m0 53h0m0 3.5h0m0 3.5h0m0 3h0m0 5h0m0 2h0m0 1.5h0m0 3h0m.5-9.5h0m.5-7h0m0 16.5h0m.5-21.5h0m.5-4h0m0 2.5h0m0 3h0m0 2h0m0 4.5h0m0 1.5h0m0 1h0m0 3h0m0 2.5h0m0 3.5h0m0 1.5h0m0 1.5h0m0 5h0m0 .5h0m0 17.5h0m.5-40.5h0m0 1.5h0m0 11.5h0m0 17.5h0m0 1.5h0m0 4.5h0m.5-40h0m0 15h0m0 2.5h0m0 6.5h0m.5-39h0m0 3.5h0m0 2h0m0 23.5h0m0 7.5h0m.5-20h0m0 5.5h0m0 3.5h0m.5-19.5h0m0 5.5h0m0 3h0m0 13h0m0 2h0m0 3.5h0m0 20.5h0m.5-59h0m0 26h0m0 14.5h0m0 5h0m0 1.5h0m.5-71h0m0 5h0m0 6.5h0m0 43h0m0 13h0m0 9h0m0 4.5h0m.5-85h0m0 12h0m0 6h0m0 29.5h0m0 2.5h0m0 1.5h0m0 4.5h0m0 6.5h0m0 1h0m0 .5h0m0 3h0m0 2h0m0 4h0m0 1.5h0m0 1h0m0 .5h0m0 1h0m0 1h0m0 3.5h0m0 1h0m0 3.5h0m0 12h0m0 4.5h0m.5-101.5h0m0 5h0m0 11.5h0m0 40.5h0m0 21h0m0 2.5h0m0 3h0m0 8h0m.5-52.5h0m0 20h0m.5-25.5h0m0 8h0m0 3h0m0 4h0m0 2.5h0m0 1h0m0 1.5h0m0 16.5h0m0 7.5h0m.5-73.5h0m0 1h0m0 3h0m0 7h0m0 17.5h0m0 5.5h0m0 1h0m0 .5h0m0 1h0m0 1.5h0m0 25.5h0m.5-59h0m0 2.5h0m0 2.5h0m0 3h0m0 7.5h0m0 23h0m.5-34.5h0m0 4h0m0 14.5h0m0 3.5h0m0 7.5h0m0 13h0m0 1h0m.5-49.5h0m0 7.5h0m0 8h0m0 4h0m0 5.5h0m0 4h0m0 6.5h0m0 2.5h0m0 3h0m0 2h0m0 4.5h0m0 7h0m0 .5h0m0 2.5h0m0 5.5h0m.5-62.5h0m0 5.5h0m0 17h0m0 8h0m0 14h0m0 12.5h0m.5-61.5h0m0 6.5h0m0 2h0m0 5.5h0m0 8h0m0 25h0m0 10h0m0 6h0m.5-38.5h0m0 6h0m0 1h0m0 2.5h0m0 1.5h0m0 15h0m0 3h0m0 5.5h0m0 11.5h0m.5-51.5h0m0 4h0m0 6.5h0m0 7.5h0m0 .5h0m0 1h0m0 2h0m0 1.5h0m0 2h0m0 2.5h0m0 8h0m0 1h0m0 12h0m.5-58.5h0m0 62.5h0m.5-23.5h0m0 14.5h0m.5-33h0m0 2.5h0m0 .5h0m0 3.5h0m0 6.5h0m0 7h0m0 2h0m0 1h0m0 5h0m0 1h0m0 1h0m0 1.5h0m.5-62h0m0 5.5h0m0 3h0m0 .5h0m0 7h0m0 1h0m0 2.5h0m0 .5h0m0 1h0m0 1h0m0 5.5h0m0 7h0m0 1h0m0 4h0m0 1h0m0 1h0m0 .5h0m0 4.5h0m0 2.5h0m0 2.5h0m0 .5h0m0 2.5h0m0 2h0m0 9.5h0m.5-21h0m0 3h0m.5-67h0m0 2h0m0 73h0m.5-72h0m0 5h0m0 2.5h0m0 .5h0m0 7.5h0m0 2h0m0 62h0m0 .5h0m0 4.5h0m.5-80h0m0 1.5h0m0 3h0m0 6.5h0m0 38.5h0m0 18.5h0m0 1.5h0m0 .5h0m0 11.5h0m0 6h0m0 4.5h0m0 5h0m0 4h0m0 20.5h0m.5-115.5h0m0 1h0m0 5h0m0 42h0m0 17.5h0m0 1h0m0 2h0m0 2h0m0 2h0m0 4h0m.5-90h0m0 1h0m0 .5h0m0 6h0m0 4.5h0m0 44.5h0m0 3.5h0m0 3.5h0m0 2h0m0 .5h0m0 2h0m0 2.5h0m0 1h0m0 1.5h0m0 19.5h0m0 17h0m.5-52h0m0 5h0m0 5h0m0 1.5h0m0 2h0m0 4h0m0 13.5h0m0 12.5h0m.5-34.5h0m0 5.5h0m0 1.5h0m0 5h0m0 3h0m0 17.5h0m.5-45.5h0m0 24h0m0 13h0m0 3h0m0 4.5h0m0 7.5h0m.5-25h0m0 1h0m0 2h0m0 1h0m0 1h0m0 1h0m0 .5h0m0 1.5h0m0 3.5h0m0 3h0m0 .5h0m0 1.5h0m0 .5h0m0 1h0m0 1h0m0 1.5h0m0 1h0m0 1.5h0m0 1.5h0m0 6.5h0m.5-36h0m0 .5h0m0 13.5h0m0 1h0m0 6h0m0 7.5h0m3-54.5h0m0 3.5h0m0 3.5h0m0 3.5h0m0 .5h0m0 1.5h0m0 4.5h0m0 1h0m0 1.5h0m0 1.5h0m.5-49.5h0m0 28.5h0m0 4.5h0m0 9.5h0m0 1h0m0 1h0m0 4.5h0m0 1h0m0 8.5h0m.5-76.5h0m0 7h0m0 1h0m0 7h0m0 2h0m0 37.5h0m0 2.5h0m0 3.5h0m0 11.5h0m0 1.5h0m0 9h0m.5-80h0m0 .5h0m0 3h0m0 10h0m.5 49h0m.5-10h0m0 3.5h0m0 2.5h0m0 3h0m0 1h0m0 3h0m0 6.5h0m0 2.5h0m0 1h0m0 1h0m0 1h0m0 4h0m0 1h0m0 2h0m0 15.5h0m.5-93.5h0m0 6h0m0 4h0m0 4h0m0 9h0m0 17h0m0 .5h0m0 1.5h0m0 1.5h0m0 6.5h0m0 2h0m0 8.5h0m0 1.5h0m0 .5h0m0 2h0m0 2h0m0 5.5h0m0 2h0m0 2.5h0m0 3.5h0m0 4h0m.5-83h0m0 4h0m0 6.5h0m0 1.5h0m0 1h0m0 1.5h0m0 2h0m0 3.5h0m0 6h0m0 .5h0m0 26.5h0m0 4.5h0m0 12h0m.5-75h0m0 6.5h0m0 21.5h0m0 24h0m.5-39.5h0m0 9.5h0m0 5.5h0m0 5.5h0m0 7h0m0 2.5h0m0 2.5h0m0 15h0m0 1h0m0 4h0m.5-37h0m0 2h0m0 .5h0m0 1h0m0 1h0m0 2.5h0m0 .5h0m0 1h0m0 .5h0m0 1h0m0 .5h0m0 1h0m0 1h0m0 1.5h0m0 2h0m0 2.5h0m0 1h0m0 2h0m0 1h0m0 3h0m0 3h0m0 .5h0m0 8.5h0m0 3.5h0m0 11.5h0m.5-46.5h0m0 4h0m0 14h0m0 3h0m0 8.5h0m0 4h0m3.5-64.5h0m0 3.5h0m.5-6.5h0m0 8h0m0 1.5h0m0 .5h0m0 3h0m0 52h0m0 4h0m0 1h0m0 1h0m0 1.5h0m0 .5h0m0 3h0m0 .5h0m.5-79h0m0 8.5h0m0 56h0m0 1h0m0 11.5h0m0 3.5h0m0 .5h0m0 1h0m0 2h0m0 .5h0m0 1.5h0m0 1h0m0 1.5h0m0 3.5h0m.5-31h0m0 6.5h0m0 1.5h0m0 2.5h0m0 .5h0m0 1h0m0 11.5h0m0 18h0m.5-32.5h0m0 5h0m0 5h0m0 2h0m0 5h0m0 3h0m0 1h0m0 10h0m0 21h0m.5-44.5h0m0 8.5h0m0 7h0m0 4h0m0 1h0m.5-43h0m.5-6.5h0m0 15h0m0 2.5h0m0 8.5h0m0 4h0m.5-19.5h0m0 1h0m0 8.5h0m0 12h0m0 1h0m0 2h0m0 21.5h0m0 17.5h0m.5-62h0m0 2h0m0 8h0m0 6.5h0m0 7.5h0m0 8.5h0m0 6.5h0m1-40h0m0 18h0m0 9.5h0m.5-11.5h0m0 4h0m0 3h0m0 .5h0m0 6h0m0 1.5h0m.5-25h0m0 2h0m0 10h0m0 15h0m0 3.5h0m0 1h0m0 3.5h0m0 5h0m.5-37h0m0 1h0m0 2.5h0m.5-23.5h0m0 5.5h0m0 3h0m0 4.5h0m0 1h0m0 7.5h0m0 3h0m0 1.5h0m0 5h0m0 2h0m0 3.5h0m0 1h0m0 1.5h0m0 7h0m0 3.5h0m0 5h0m0 3.5h0m0 .5h0m0 1h0m0 6h0m.5-68.5h0m0 6h0m0 7.5h0m0 6h0m0 10.5h0m0 4.5h0m0 4h0m0 .5h0m0 1.5h0m0 4h0m0 1.5h0m0 .5h0m0 5h0m0 16h0m.5-78h0m0 7.5h0m0 4h0m0 4h0m0 16.5h0m0 5h0m0 .5h0m0 8.5h0m0 22h0m0 1h0m.5-75.5h0m0 4.5h0m0 5.5h0m0 .5h0m0 1.5h0m0 .5h0m0 2h0m0 2h0m0 1.5h0m0 2h0m0 1h0m0 2h0m0 1.5h0m0 3.5h0m0 1h0m0 6h0m0 2h0m0 3.5h0m0 9h0m.5-30.5h0m0 8h0m0 5.5h0m0 .5h0m4.5-12h0m0 1h0m0 2h0m0 1h0m0 1h0m0 1.5h0m0 2.5h0m0 4h0m.5-15.5h0m0 14h0m0 2.5h0m.5-18h0m0 5.5h0m0 5h0m0 3h0m.5 21h0m0 6h0m0 2h0m0 .5h0m0 6h0m0 .5h0m0 4h0m0 1h0m0 1h0m.5-47.5h0m0 8h0m0 3.5h0m0 2h0m0 1h0m0 .5h0m0 10h0m0 3h0m0 3h0m0 5.5h0m0 5h0m0 3h0m0 14.5h0m0 4h0m.5-60h0m0 16.5h0m0 19h0m0 2h0m0 14.5h0m0 4.5h0m.5-45.5h0m0 5.5h0m0 3.5h0m0 1.5h0m0 3h0m0 7h0m0 4h0m0 6.5h0m0 1h0m0 3h0m0 12h0m.5-55h0m0 16h0m0 4h0m0 3.5h0m0 1h0m0 1h0m0 2h0m0 3.5h0m0 8.5h0m0 4.5h0m0 .5h0m0 6.5h0m.5 .5h0m.5-51h0m0 2.5h0m.5-16.5h0m0 6.5h0m0 1h0m0 .5h0m0 11.5h0m0 3.5h0m0 1.5h0m0 .5h0m0 3h0m0 3h0m0 5h0m0 8.5h0m0 4h0m0 24h0m.5-71h0m0 2h0m0 5.5h0m0 1h0m0 1.5h0m0 1.5h0m0 5.5h0m0 1.5h0m0 1h0m0 1h0m0 3.5h0m0 4h0m0 3h0m0 1h0m0 3h0m0 3.5h0m0 1h0m0 2.5h0m0 1h0m.5-55.5h0m0 35h0m0 4h0m0 7h0m0 7.5h0m0 6.5h0m.5-49.5h0m0 4.5h0m0 11.5h0m.5-12.5h0m0 2.5h0m0 10.5h0m0 1h0m.5-10h0m0 3.5h0m0 14h0m0 2.5h0m0 11h0m0 3h0m.5-33h0m0 .5h0m0 3h0m0 .5h0m0 2h0m0 5.5h0m0 2h0m0 1.5h0m0 3h0m0 4h0m0 1h0m0 .5h0m0 1.5h0m0 1h0m0 2h0m0 10h0m0 2.5h0m.5-28h0m0 9h0m0 2h0m.5 15h0m0 17h0m.5-45.5h0m0 7h0m0 2.5h0m0 7h0m0 2.5h0m0 3h0m0 2h0m.5-20h0m0 9h0m0 12h0m0 1h0m0 5.5h0m0 14h0m.5-45.5h0m0 1.5h0m0 23h0m0 8h0m0 1.5h0m0 1h0m0 5.5h0m.5-35h0m0 6.5h0m0 3h0m0 2.5h0m0 3h0m0 1.5h0m0 8h0m0 2.5h0m0 2h0m0 4h0m0 1.5h0m0 3.5h0m0 6h0m.5-77.5h0m0 15h0m0 11.5h0m0 4.5h0m0 5.5h0m0 5.5h0m0 2h0m0 12h0m0 3h0m0 5h0m0 10h0m.5-70h0m0 8.5h0m0 .5h0m0 2.5h0m0 3.5h0m0 1.5h0m0 .5h0m0 1.5h0m0 12.5h0m0 2.5h0m0 2.5h0m0 13.5h0m0 11.5h0m.5-72.5h0m0 24.5h0m0 16h0m0 14.5h0m0 3.5h0m.5-28h0m0 2h0m0 3.5h0m0 2.5h0m0 41.5h0m.5-59h0m0 6.5h0m0 8.5h0m0 9h0m0 5.5h0m.5-31h0m0 11.5h0m0 1h0m0 7.5h0m0 4h0m0 2.5h0m0 1.5h0m0 5.5h0m0 4h0m.5-91.5h0m0 18h0m.5-14.5h0m0 3h0m0 5.5h0m0 2.5h0m0 5.5h0m0 46h0m0 23h0m0 2h0m0 10h0m0 6h0m0 1h0m.5-106h0m0 6.5h0m0 7.5h0m0 53h0m0 13.5h0m0 1.5h0m0 2.5h0m0 8h0m0 1h0m0 1.5h0m0 5.5h0m0 1h0m0 2.5h0m0 4.5h0m0 11h0m0 6h0m.5-124h0m0 6h0m0 4.5h0m0 4h0m0 3.5h0m0 28h0m0 26.5h0m0 12.5h0m0 4.5h0m0 2.5h0m0 1h0m0 .5h0m0 1h0m0 5h0m0 2.5h0m0 1h0m0 1.5h0m0 2.5h0m0 3h0m0 3h0m.5-97h0m0 67h0m0 12h0m0 2.5h0m0 1h0m0 2.5h0m0 7.5h0m.5-112.5h0m0 1.5h0m0 4.5h0m0 1h0m0 4.5h0m0 5h0m0 53.5h0m.5-70h0m0 13.5h0m0 7.5h0m0 33h0m0 4h0m0 2.5h0m0 .5h0m0 2.5h0m0 1.5h0m0 2h0m0 1.5h0m.5-56.5h0m0 38.5h0m0 1h0m0 4h0m0 1h0m0 3h0m0 3h0m0 8h0m0 2h0m0 .5h0m0 3h0m0 6.5h0m.5-79h0m0 5.5h0m0 7h0m0 30.5h0m0 4.5h0m0 13.5h0m0 2.5h0m.5-67h0m0 2h0m0 1.5h0m0 7h0m0 3h0m0 1h0m0 3.5h0m0 1h0m.5-18h0m0 4h0m0 3.5h0m0 3h0m0 4h0m0 .5h0m0 2h0m0 3.5h0m0 .5h0m.5 13h0m0 5h0m0 13h0m0 5h0m0 3h0m0 8.5h0m0 4.5h0m0 6h0m0 .5h0m0 1h0m0 1.5h0m0 10.5h0m0 6.5h0m.5-57.5h0m0 1.5h0m0 5h0m0 5.5h0m0 .5h0m0 1h0m0 7h0m0 3h0m0 2.5h0m0 3h0m0 3.5h0m0 1h0m0 3h0m0 7h0m0 7h0m.5-36h0m.5-4.5h0m0 21h0m0 12h0m0 21h0m.5-47h0m0 5h0m0 4h0m0 1h0m0 7h0m0 3h0m0 3.5h0m0 3.5h0m0 1h0m0 3h0m0 3h0m0 2.5h0m.5-38h0m0 3.5h0m0 5h0m0 .5h0m0 3.5h0m0 1h0m0 3.5h0m0 3h0m0 4h0m0 3.5h0m0 9.5h0m0 3h0m.5-22h0m2.5 12.5h0m.5-18.5h0m0 4h0m0 3.5h0m0 1h0m0 1h0m0 2h0m0 1h0m0 2h0m0 .5h0m0 5.5h0m0 4.5h0m0 1h0m.5-36h0m0 9h0m0 2h0m0 1.5h0m0 3h0m0 .5h0m0 10h0m0 1h0m0 14h0m.5-8h0m.5-42.5h0m0 7.5h0m0 3h0m0 3h0m0 2h0m0 1h0m0 16h0m0 2.5h0m0 2h0m.5-36h0m0 2.5h0m0 8h0m0 7h0m0 5.5h0m0 5.5h0m0 9.5h0m.5-36.5h0m0 24.5h0m0 6.5h0m.5-59h0m0 34h0m0 4h0m0 4h0m0 5h0m0 33.5h0m.5-61h0m0 4.5h0m0 2.5h0m0 4.5h0m0 1h0m0 4.5h0m0 3.5h0m0 5.5h0m0 6h0m0 5.5h0m0 14.5h0m0 13h0m.5-88h0m0 7.5h0m0 6.5h0m0 3.5h0m0 6.5h0m0 8.5h0m0 20.5h0m0 3h0m.5-46h0m0 2.5h0m0 17.5h0m0 3.5h0m0 13h0m0 2.5h0m0 6.5h0m0 2.5h0m0 5.5h0m0 9h0m0 18h0m0 3h0m.5-97.5h0m0 2h0m0 5h0m0 2.5h0m0 16.5h0m0 2.5h0m0 10h0m0 2.5h0m0 1.5h0m0 4h0m0 1h0m0 8h0m0 7h0m0 4.5h0m0 15h0m.5-77.5h0m0 3h0m0 1h0m0 9h0m0 4.5h0m0 1h0m0 1h0m0 1h0m0 2h0m0 5.5h0m0 13h0m0 3h0m0 3.5h0m0 9h0m0 8h0m0 2h0m0 3.5h0m0 5.5h0m.5-78h0m0 11.5h0m0 1h0m0 1.5h0m0 5h0m0 21h0m0 2.5h0m0 14.5h0m.5-57.5h0m0 3.5h0m0 5h0m0 1.5h0m0 .5h0m0 7h0m0 33.5h0m.5-13h0m0 11.5h0m.5-26h0m0 4.5h0m0 1.5h0m0 4h0m0 1h0m0 2h0m0 5h0m0 14.5h0m0 11.5h0m0 .5h0m0 4.5h0m0 4h0m0 11h0m.5-55.5h0m0 6.5h0m0 5h0m0 1.5h0m0 1h0m0 1h0m0 5.5h0m0 6.5h0m0 .5h0m0 2.5h0m0 9h0m0 1h0m.5-51h0m0 15h0m0 13.5h0m.5-26h0m0 2.5h0m0 11.5h0m0 1h0m0 3.5h0m0 15.5h0m.5-32h0m0 6h0m0 .5h0m0 2h0m0 6h0m0 3h0m0 1h0m0 3.5h0m0 9h0m0 3h0m2-2h0m0 3h0m0 1.5h0m0 .5h0m0 3h0m0 1h0m0 .5h0m0 11h0m0 1h0m.5-30.5h0m0 5h0m0 2.5h0m0 2.5h0m0 5.5h0m0 3h0m0 2h0m0 1.5h0m0 2.5h0m0 6.5h0m.5-35.5h0m0 10.5h0m0 17h0m.5-43.5h0m0 6h0m0 2.5h0m0 1.5h0m0 5h0m0 2h0m0 1.5h0m0 5h0m0 8h0m0 1.5h0m0 1.5h0m0 8h0m0 9.5h0m0 8h0m.5-55.5h0m0 3.5h0m0 6.5h0m0 9h0m0 2h0m0 4h0m0 7.5h0m0 3.5h0m0 5h0m.5-26h0m0 1h0m0 6h0m0 23h0m.5 6h0m.5-51.5h0m0 13.5h0m0 12h0m0 1h0m0 4h0m0 5.5h0m0 3.5h0m0 6h0m0 2.5h0m0 2.5h0m0 3h0m0 11.5h0m.5-59.5h0m0 1h0m0 3.5h0m0 2h0m0 7.5h0m0 2h0m0 1.5h0m0 5.5h0m0 3h0m0 3h0m0 3h0m0 3.5h0m0 4.5h0m0 1h0m0 2.5h0m0 4.5h0m0 3h0m0 1.5h0m.5-44.5h0m0 16h0m0 13h0m0 9h0m1-27.5h0m0 4h0m0 5.5h0m0 5.5h0m.5-14h0m0 3h0m0 3h0m0 4.5h0m0 1.5h0m0 2.5h0m0 1h0m0 3.5h0m0 2h0m0 3.5h0m0 4h0m0 1.5h0m.5-54h0m0 9.5h0m0 1.5h0m0 4h0m0 2.5h0m0 2h0m0 1.5h0m0 4.5h0m0 6.5h0m0 9h0m0 5h0m0 1h0m.5-79h0m0 10.5h0m0 19.5h0m0 8.5h0m0 1.5h0m0 .5h0m0 1.5h0m0 3h0m0 .5h0m0 4.5h0m0 .5h0m0 6.5h0m0 1.5h0m0 3.5h0m0 .5h0m0 2.5h0m0 1h0m0 .5h0m.5-66.5h0m0 3h0m0 8.5h0m0 36.5h0m0 4h0m0 1h0m0 .5h0m0 2.5h0m0 3.5h0m.5-64h0m0 3h0m0 17h0m.5-10h0m0 7h0m0 8.5h0m0 10.5h0m0 4h0m0 .5h0m.5-38.5h0m0 10h0m0 9.5h0m0 1.5h0m0 10h0m0 4h0m0 1.5h0m0 3h0m0 2h0m0 7.5h0m.5-53h0m0 4.5h0m0 5.5h0m0 9h0m0 1.5h0m0 7h0m0 6.5h0m0 15h0m0 1.5h0m0 5h0m0 6h0m.5-59h0m0 3h0m0 7.5h0m0 11.5h0m0 5h0m0 8.5h0m0 2.5h0m0 18h0m0 7.5h0m0 1h0m0 3h0m0 5h0m0 3h0m0 3.5h0m0 5.5h0m0 17h0m.5-92.5h0m0 19.5h0m0 5.5h0m0 8h0m0 2h0m0 6h0m0 2.5h0m0 3.5h0m0 5h0m0 5h0m0 2h0m0 1h0m0 11.5h0m0 24.5h0m.5-85h0m0 9.5h0m0 30.5h0m.5-61.5h0m0 17.5h0m0 1h0m0 1h0m0 5.5h0m0 2h0m0 5h0m0 1.5h0m0 2h0m0 6h0m0 5h0m0 5h0m0 3h0m0 4.5h0m0 5h0m0 3h0m0 11h0m0 15.5h0m.5-80.5h0m0 9.5h0m0 1.5h0m0 6h0m0 .5h0m0 8h0m0 5h0m0 1.5h0m0 4h0m0 8.5h0m0 19.5h0m0 6h0m0 7h0m.5-50.5h0m0 32.5h0m.5-25h0m0 6h0m.5-15.5h0m0 .5h0m0 4h0m0 1.5h0m0 2.5h0m0 4h0m0 4h0m0 1.5h0m0 11h0m0 5h0m0 14.5h0m.5-68.5h0m0 31h0m0 2.5h0m0 1.5h0m0 4.5h0m0 1h0m0 3.5h0m0 2h0m0 1.5h0m0 8.5h0m0 8h0m2.5-17h0m0 .5h0m.5-77.5h0m0 15h0m0 1h0m0 52h0m0 2.5h0m0 2.5h0m0 .5h0m0 12.5h0m.5-37h0m0 .5h0m0 7.5h0m0 .5h0m0 1h0m0 1.5h0m0 1h0m0 2h0m0 1h0m0 1.5h0m0 1h0m0 2.5h0m0 1.5h0m0 4h0m0 2h0m.5-68.5h0m0 .5h0m0 3h0m0 3.5h0m0 2.5h0m0 30.5h0m0 4h0m0 4.5h0m0 11.5h0m0 14h0m1-41h0m0 3.5h0m0 14h0m0 14h0m0 9.5h0m0 3h0m0 4h0m0 8.5h0m0 4h0m.5-72h0m0 1h0m0 11h0m0 6h0m0 4h0m0 3.5h0m0 2.5h0m0 4h0m0 3.5h0m0 1.5h0m0 2.5h0m0 6.5h0m0 1h0m0 1.5h0m0 .5h0m0 1h0m0 13.5h0m.5-54.5h0m0 2h0m0 1h0m0 8.5h0m0 2h0m0 1.5h0m0 7.5h0m0 2h0m0 8.5h0m0 3h0m0 7.5h0m0 2.5h0m0 11.5h0m1-52h0m0 2h0m0 4.5h0m0 18.5h0m.5-56.5h0m0 19.5h0m0 12h0m0 3.5h0m0 .5h0m0 5.5h0m0 2.5h0m0 10.5h0m0 8.5h0m0 5.5h0m0 .5h0m0 1h0m0 7.5h0m.5-70.5h0m0 15.5h0m0 22.5h0m0 3h0m0 2h0m0 1h0m0 1.5h0m0 .5h0m0 1h0m0 3h0m0 .5h0m0 1.5h0m0 .5h0m0 1.5h0m0 4h0m0 2h0m.5-74h0m0 .5h0m0 14h0m0 34h0m0 4.5h0m0 9h0m0 7.5h0m0 15.5h0m.5-87h0m0 4h0m0 1h0m0 1.5h0m0 5.5h0m0 3h0m0 5h0m0 6h0m0 2h0m.5-28.5h0m0 10h0m0 3.5h0m0 4h0m0 69.5h0m0 7h0m0 1.5h0m0 .5h0m0 13.5h0m.5-114h0m0 94h0m0 1h0m0 .5h0m0 2h0m0 4.5h0m0 .5h0m0 9h0m.5-101.5h0m0 2.5h0m0 4h0m0 2.5h0m0 73h0m0 4.5h0m0 2.5h0m0 10h0m.5-109h0m0 3.5h0m0 2h0m0 .5h0m0 1.5h0m0 1.5h0m0 6h0m0 6.5h0m.5-3h0m0 40h0m.5-37h0m0 35.5h0m0 5h0m0 2h0m0 .5h0m0 4.5h0m0 1h0m0 1.5h0m0 2h0m0 .5h0m0 1h0m0 4.5h0m0 7.5h0m.5-27.5h0m0 1.5h0m0 6h0m0 .5h0m0 9.5h0m0 .5h0m0 1h0m0 6h0m0 3h0m0 10h0m.5-46h0m0 6h0m0 9h0m0 4.5h0m0 4h0m0 1h0m0 4h0m0 18.5h0m0 5h0m0 2.5h0m.5-100h0m0 2h0m0 6.5h0m0 4.5h0m0 14h0m0 20.5h0m0 1.5h0m0 13h0m0 1.5h0m0 7.5h0m0 6.5h0m0 2.5h0m0 15h0m.5-85.5h0m0 13.5h0m0 10.5h0m0 23h0m0 1h0m0 9.5h0m0 6.5h0m0 4.5h0m0 4.5h0m.5-65h0m0 36h0m.5-52h0m0 16h0m.5-11.5h0m0 3.5h0m0 2.5h0m0 9h0m0 11h0m0 33.5h0m0 2h0m0 8.5h0m0 1h0m0 3h0m0 14.5h0m0 2h0m0 7h0m0 2.5h0m.5-88.5h0m0 7h0m0 30.5h0m0 7.5h0m0 1.5h0m0 3h0m0 5h0m0 9h0m0 1.5h0m0 1.5h0m0 5h0m0 9h0m0 .5h0m0 1h0m0 5h0m.5-25.5h0m0 14.5h0m.5-59h0m0 16.5h0m0 13h0m.5-21.5h0m0 3.5h0m0 4h0m0 2h0m0 4h0m0 4h0m0 .5h0m0 10.5h0m0 4h0m0 1h0m0 23.5h0m.5-65h0m0 3h0m0 1h0m0 2h0m0 5h0m0 2h0m0 1h0m0 9.5h0m0 1h0m0 2.5h0m0 11.5h0m0 5h0m0 20.5h0m0 3.5h0m.5-61.5h0m0 1h0m0 1h0m0 2h0m0 6h0m0 3.5h0m0 .5h0m0 1h0m0 1h0m0 3.5h0m0 3.5h0m0 2.5h0m0 15h0m.5-23h0m0 11.5h0m0 5h0m0 15.5h0m.5-37.5h0m0 9.5h0m0 6.5h0m0 4h0m0 4.5h0m0 3h0m0 3.5h0m0 2.5h0m0 3.5h0m0 8.5h0m0 3.5h0m.5-36.5h0m0 1.5h0m0 5h0m0 11.5h0m0 2h0m0 1h0m0 12.5h0m1-52h0m0 6.5h0m0 6.5h0m0 2h0m0 2h0m0 6.5h0m0 2h0m0 6h0m0 3h0m0 4.5h0m0 7.5h0m.5-51h0m0 10.5h0m0 13.5h0m0 2.5h0m0 5.5h0m0 1.5h0m0 8.5h0m.5-28h0m0 21h0m0 3h0m0 1h0m.5-24.5h0m0 5h0m.5-7h0m0 1.5h0m0 3h0m0 5.5h0m0 3h0m0 3h0m0 1.5h0m0 1h0m0 10h0m.5-4h0m.5-21.5h0m0 4h0m0 6h0m0 17h0m0 5.5h0m0 4h0m0 12h0m.5-65.5h0m0 2.5h0m0 8h0m0 7.5h0m0 3.5h0m0 .5h0m0 2h0m0 4.5h0m0 1.5h0m0 4h0m0 1h0m0 1h0m0 1.5h0m0 7.5h0m0 1.5h0m0 2.5h0m0 1h0m0 2h0m0 3h0m0 2.5h0m0 1h0m0 .5h0m.5-33.5h0m0 6.5h0m0 2h0m0 9.5h0m3-89.5h0m0 7h0m.5-2.5h0m0 13h0m.5-17.5h0m0 1.5h0m0 2h0m0 7.5h0m0 5.5h0m0 3h0m.5 61h0m0 3.5h0m.5-8h0m0 13.5h0m.5-20h0m0 6.5h0m0 1h0m0 2h0m0 .5h0m0 1h0m0 .5h0m0 1h0m0 2h0m0 2h0m0 4.5h0m.5-63.5h0m0 4h0m0 5h0m0 1h0m0 36.5h0m0 14.5h0m0 2h0m0 4.5h0m.5-62h0m0 44.5h0m.5-53h0m0 3.5h0m0 9.5h0m0 48h0m0 13.5h0m0 1.5h0m0 8h0m0 .5h0m0 1.5h0m.5-88h0m0 3h0m0 11h0m0 47h0m0 4.5h0m0 6h0m0 2.5h0m0 .5h0m0 2h0m0 7h0m0 .5h0m.5-76h0m0 1.5h0m0 5.5h0m.5-13h0m0 38h0m0 40h0m.5-25.5h0m0 1h0m0 1.5h0m0 5.5h0m0 9h0m.5-44.5h0m0 12.5h0m0 1.5h0m0 4.5h0m0 .5h0m0 2.5h0m0 5.5h0m0 5.5h0m0 1h0m0 3.5h0m0 2.5h0m0 2h0m0 1h0m0 8.5h0m0 1.5h0m0 9.5h0m0 8h0m0 1h0m.5-51.5h0m0 10.5h0m0 6h0m0 6.5h0m0 3h0m0 2h0m0 14h0m0 4h0m0 6.5h0m.5-56.5h0m0 3h0m0 5h0m0 1.5h0m0 13.5h0m0 17h0m.5-72.5h0m0 13.5h0m0 3h0m0 1h0m0 6h0m0 2.5h0m0 1h0m0 1.5h0m0 16h0m.5-40h0m0 16h0m0 6.5h0m0 2h0m0 1.5h0m0 8h0m0 23h0m.5-59.5h0m0 3h0m0 34h0m0 1.5h0m0 8h0m0 .5h0m0 2h0m0 1h0m0 5.5h0m0 .5h0m0 10h0m0 8h0m0 1h0m.5-73h0m0 16.5h0m0 11h0m0 2.5h0m0 3h0m0 9h0m0 5.5h0m0 2.5h0m0 1.5h0m0 2h0m0 6h0m0 2h0m0 4.5h0m0 .5h0m0 2.5h0m0 1.5h0m0 1h0m0 2h0m0 8h0m0 3h0m0 1h0m.5-72h0m0 25.5h0m0 4h0m0 2.5h0m0 3.5h0m0 8.5h0m0 6.5h0m0 14.5h0m0 4h0m0 1h0m.5 10h0m.5-57h0m0 39.5h0m.5-50h0m0 5h0m0 .5h0m0 2.5h0m0 7h0m0 3h0m0 6.5h0m0 1.5h0m0 2.5h0m0 1h0m0 3h0m0 8.5h0m0 2.5h0m0 3.5h0m0 8.5h0m.5-62h0m0 9h0m0 5h0m0 4.5h0m0 9h0m0 1.5h0m0 8.5h0m0 3.5h0m0 2h0m0 2.5h0m0 3h0m0 4h0m0 3h0m0 2h0m0 1h0m.5-56.5h0m0 2.5h0m0 12.5h0m0 3h0m0 3.5h0m0 31h0m0 9.5h0m1-65h0m0 27h0m.5-79h0m0 2.5h0m0 4.5h0m0 1h0m0 10.5h0m0 1h0m0 15.5h0m0 14.5h0m0 5h0m0 1.5h0m0 1h0m0 1h0m0 2h0m0 1h0m0 2.5h0m0 4.5h0m0 2.5h0m0 2.5h0m0 2h0m0 6h0m0 3.5h0m0 4.5h0m0 6.5h0m0 11h0m.5-96h0m0 13.5h0m0 21h0m0 20h0m0 1h0m0 3.5h0m0 4.5h0m0 12h0m0 5h0m0 .5h0m0 6h0m.5-94.5h0m0 1.5h0m0 3.5h0m0 46h0m0 17.5h0m0 6h0m0 3.5h0m1-32.5h0m0 10.5h0m0 3h0m0 15.5h0m0 1.5h0m0 4.5h0m0 2.5h0m0 10.5h0m0 3.5h0m0 .5h0m0 15h0m0 10h0m.5-76.5h0m0 8.5h0m0 4.5h0m0 2h0m0 2.5h0m0 1h0m0 2h0m0 2.5h0m0 1h0m0 1.5h0m0 1.5h0m0 4h0m0 4h0m0 3h0m0 .5h0m0 2h0m0 4.5h0m.5-35h0m0 11h0m0 11h0m0 1.5h0m0 26.5h0m.5-75h0m0 3h0m0 8.5h0m0 9.5h0m0 .5h0m0 21h0m.5-47.5h0m0 2h0m0 3h0m0 3h0m0 1.5h0m0 4.5h0m0 6.5h0m0 1.5h0m0 .5h0m0 1.5h0m0 10.5h0m0 3h0m0 2h0m0 23.5h0m.5-81.5h0m0 32h0m0 3.5h0m0 2h0m0 8.5h0m0 3h0m0 1.5h0m0 12h0m0 24h0m.5-44h0m0 2h0m0 3.5h0m0 12.5h0m0 14h0m0 6h0m.5-39.5h0m0 10.5h0m0 6h0m0 3h0m0 2h0m0 2h0m0 2.5h0m0 2h0m0 1h0m0 1.5h0m0 4.5h0m0 17.5h0m0 3h0m.5-30.5h0m.5 6h0m.5-4.5h0m0 1h0m.5-58h0m0 2h0m0 8h0m0 22.5h0m0 .5h0m0 2.5h0m0 .5h0m0 3.5h0m0 2h0m0 1h0m0 1h0m0 .5h0m0 1h0m0 1h0m0 2h0m0 1h0m0 2.5h0m0 .5h0m0 2h0m0 11h0m.5-67h0m0 2h0m0 13.5h0m0 42h0m0 8.5h0m0 .5h0m1-68.5h0m0 3h0m0 14.5h0m.5-17.5h0m0 7h0m0 6h0m0 28.5h0m0 13h0m0 3h0m0 5.5h0m0 1.5h0m.5-32.5h0m0 .5h0m0 2h0m0 4.5h0m0 4h0m0 1.5h0m0 1.5h0m0 2.5h0m0 1h0m0 1.5h0m0 1h0m0 4.5h0m0 4h0m0 3h0m0 2h0m0 6h0m.5-33.5h0m0 9h0m0 19h0m.5-61.5h0m0 .5h0m0 2h0m0 10h0m0 3h0m0 6h0m0 1.5h0m0 2h0m0 1h0m0 5h0m0 13.5h0m0 9.5h0m0 22h0m.5-70.5h0m0 7.5h0m0 4.5h0m0 3.5h0m0 8h0m0 6.5h0m0 3h0m0 3h0m0 6.5h0m0 2h0m0 3h0m0 2h0m0 2.5h0m.5-59h0m0 10h0m0 .5h0m0 2h0m0 14.5h0m0 6h0m0 2h0m.5-31h0m0 4h0m0 10.5h0m0 7.5h0m0 11.5h0m0 2.5h0m0 7h0m0 3.5h0m0 11h0m0 3h0m0 40.5h0m.5-99h0m0 23h0m0 12.5h0m0 3h0m0 8h0m0 6.5h0m0 5h0m0 13.5h0m.5-88.5h0m0 1h0m0 3.5h0m0 .5h0m0 7.5h0m0 9h0m0 3h0m0 1h0m0 5h0m0 11.5h0m0 11.5h0m0 2.5h0m0 4h0m0 5h0m0 6.5h0m0 10.5h0m.5-94h0m0 3.5h0m0 5h0m0 4h0m0 7.5h0m0 1h0m0 5.5h0m0 5h0m0 26.5h0m0 1h0m0 2h0m0 17.5h0m0 2h0m0 4.5h0m0 6.5h0m0 .5h0m0 31h0m0 3.5h0m.5-70h0m0 7h0m0 7.5h0m.5-18h0m0 44.5h0m.5-58h0m0 27h0m0 2.5h0m0 4.5h0m0 4.5h0m0 1h0m0 3.5h0m0 2.5h0m0 5h0m0 4h0m0 2.5h0m.5-37h0m0 7h0m0 5.5h0m0 2.5h0m0 1.5h0m0 10.5h0m0 1.5h0m0 2.5h0m0 8h0m0 2h0m0 2.5h0m0 23.5h0m0 1.5h0m.5-32.5h0m.5-40h0m0 11h0m0 2.5h0m0 5.5h0m0 5h0m0 1.5h0m0 1.5h0m0 4.5h0m0 27h0m0 6.5h0m.5-61h0m0 2h0m0 10.5h0m0 4.5h0m0 7h0m0 6.5h0m.5-25.5h0m0 2.5h0m0 3.5h0m0 27h0m0 5.5h0m1-67h0m0 11h0m0 7.5h0m0 2h0m0 1.5h0m0 7.5h0m0 8.5h0m0 2h0m0 10.5h0m.5-37.5h0m0 2h0m0 1.5h0m0 1h0m0 1h0m0 4h0m0 2h0m0 2h0m0 4.5h0m0 2h0m0 3.5h0m0 6h0m0 2h0m0 2.5h0m0 1h0m0 2h0m0 3h0m0 9.5h0m0 2h0m.5-49h0m0 4h0m0 8.5h0m0 4h0m0 3h0m0 5h0m0 7h0m1.5-36.5h0m0 6.5h0m0 9h0m0 7h0m0 5.5h0m0 1h0m0 6h0m.5-39h0m0 17.5h0m0 3h0m0 1h0m0 1h0m0 .5h0m0 5.5h0m0 2h0m0 7.5h0m0 1.5h0m.5-6.5h0" stroke="#000" stroke-width="3.4" stroke-linecap="round" fill="none" clip-path="url(#c2)"/>
<path d="M196 589h0m.5-170h0m0 6.5h0m0 16h0m.5-19h0m0 15h0m0 1.5h0m0 5.5h0m0 2h0m0 4.5h0m0 1.5h0m0 .5h0m.5-33.5h0m0 12.5h0m0 3h0m0 6.5h0m.5-16.5h0m0 25.5h0m.5-18.5h0m0 12.5h0m0 3h0m.5-26.5h0m0 6.5h0m0 1h0m0 1h0m0 8h0m0 1h0m0 1h0m.5-20h0m0 4h0m0 4.5h0m0 18h0m0 .5h0m0 5.5h0m.5-27h0m19.5 186.5h0m4.5 18.5h0m5-181.5h0m.5-14h0m0 1.5h0m0 2h0m0 11.5h0m.5-7h0m0 3h0m0 1.5h0m0 2h0m.5-19h0m0 3.5h0m0 4h0m0 12.5h0m.5-17.5h0m0 2.5h0m0 10.5h0m11.5-23.5h0m0 10.5h0m0 7.5h0m.5-10h0m0 10h0m0 6h0m.5-25.5h0m0 1.5h0m0 2.5h0m0 1.5h0m0 7h0m0 4h0m0 8h0m0 1.5h0m0 4.5h0m.5-34h0m0 1h0m0 1.5h0m0 5h0m0 26.5h0m.5-19.5h0m0 4h0m.5-16.5h0m0 4.5h0m0 14.5h0m0 4.5h0m0 9.5h0m.5-36h0m0 .5h0m0 5.5h0m0 9h0m0 1.5h0m0 7h0m0 1h0m0 6.5h0m2.5 145h0m13-150.5h0m0 1h0m.5-4.5h0m0 3.5h0m.5-5h0m0 2.5h0m0 8.5h0m0 3.5h0m.5-8h0m0 9h0m.5-19h0m0 14.5h0m.5-10.5h0m0 1h0m0 .5h0m0 8.5h0m0 3h0m.5-5h0m4.5-5h0m0 5h0m.5-2.5h0m0 1.5h0m0 8h0m.5-10h0m0 6h0m18-9h0m0 11h0m.5-7h0m0 4h0m0 1h0m.5-2.5h0m0 2h0m.5-8h0m0 2.5h0m0 3.5h0m0 8h0m.5-10h0m0 1h0m10 190h0m5.5-196h0m.5-8.5h0m0 3h0m0 2h0m0 3.5h0m0 4h0m0 3h0m0 1.5h0m0 3.5h0m0 4h0m.5-19.5h0m0 1.5h0m0 7.5h0m0 1.5h0m0 3h0m.5-16h0m0 9.5h0m.5 6.5h0m0 5h0m.5-22h0m0 1h0m0 3h0m0 17.5h0m.5-21.5h0m0 6h0m0 2h0m0 3.5h0m0 5.5h0m0 2h0m.5-17.5h0m0 3h0m0 9.5h0m0 4h0m13.5-7.5h0m0 3h0m14-6.5h0m0 8.5h0m.5-6h0m0 2.5h0m0 5.5h0m.5-11h0m0 7.5h0m.5-7.5h0m0 4.5h0m0 4.5h0m0 4.5h0m.5-7h0m0 .5h0m12.5-23h0m0 4h0m0 4h0m0 1.5h0m0 15h0m0 4h0m0 1h0m0 1h0m.5-27.5h0m0 2.5h0m0 1h0m0 10h0m0 7h0m0 5.5h0m0 1h0m.5-28.5h0m0 11h0m0 1h0m0 4.5h0m0 10h0m.5-26.5h0m0 22.5h0m.5-20.5h0m0 1.5h0m.5-5h0m0 10h0m0 .5h0m0 4.5h0m0 2h0m0 4.5h0m0 5.5h0m.5-20.5h0m0 1h0m0 4.5h0m0 2h0m0 4.5h0m0 6.5h0m15.5-6.5h0m0 2.5h0m.5-6h0m0 1h0m0 1.5h0m0 9.5h0m0 2h0m0 3h0m.5-8h0m0 .5h0m.5-4h0m0 5.5h0m.5-7.5h0m0 5h0m4.5 2.5h0m0 5.5h0m.5-5h0m0 1h0m0 .5h0m.5 0h0m0 1.5h0m13.5 198.5h0m7-236h0m.5 2h0m0 1h0m0 14.5h0m0 1h0m0 16h0m.5-23.5h0m0 21.5h0m.5-30h0m0 12.5h0m0 2h0m.5-10h0m0 11h0m0 1.5h0m0 4h0m14.5-8h0m0 9h0m0 3h0m0 2h0m.5-18.5h0m0 3.5h0m0 1.5h0m0 8.5h0m0 5h0m0 3h0m0 .5h0m0 5.5h0m.5-7h0m.5-5h0m.5-15.5h0m0 5.5h0m0 6h0m0 1.5h0m0 6h0m.5 7h0m5 2h0m0 1h0m24.5-13.5h0m0 10.5h0m0 1.5h0m.5-17.5h0m0 13.5h0m.5-7h0m0 4h0m0 5.5h0m12-33.5h0m0 3h0m.5 3.5h0m0 6h0m0 1.5h0m0 6h0m0 6.5h0m0 1.5h0m0 3h0m0 3h0m.5-34.5h0m0 4h0m0 4h0m0 7h0m0 11h0m.5-24.5h0m0 2h0m0 3.5h0m0 3h0m.5 8h0m0 .5h0m0 4h0m.5-21h0m0 6h0m0 6h0m0 4h0m0 3.5h0m0 4.5h0m0 3h0m.5-28h0m0 5h0m0 4h0m0 2h0m0 3.5h0m.5 7h0m0 11h0m.5-29h0m0 24.5h0m0 3.5h0m0 1.5h0m.5-31h0m0 .5h0m0 4.5h0m0 2h0m0 9h0m0 1.5h0m0 2.5h0m0 7.5h0m.5-7.5h0m0 2.5h0m0 10h0m27.5-23h0m0 11.5h0m0 .5h0m0 6h0m.5-22h0m0 4.5h0m0 1.5h0m0 7.5h0m0 5.5h0m0 5h0m.5-18h0m0 1h0m0 .5h0m0 6.5h0m.5-12h0m0 18h0m0 2.5h0m7-5.5h0m.5 1h0m0 .5h0m0 1h0m0 3h0m0 3h0m.5-5.5h0m4.5-24.5h0m.5-14.5h0m0 7h0m0 6.5h0m0 3.5h0m0 14.5h0m.5 3h0m.5-9h0m0 14h0m.5-40.5h0m0 7.5h0m0 3.5h0m0 9h0m0 11h0m.5-12h0m.5-4h0m0 6h0m0 16h0m14.5-22.5h0m0 .5h0m0 2h0m0 14.5h0m0 13h0m.5-37.5h0m0 10h0m.5-7h0m0 5h0m0 8h0m0 1.5h0m0 1h0m0 16.5h0m0 1h0m0 3h0m.5-39h0m0 12.5h0m0 9.5h0m.5-8.5h0m0 7h0m0 16.5h0m.5-13h0m0 3.5h0m5.5 7h0m0 2.5h0m.5-3h0m0 3h0m0 1h0m.5 1h0m19.5 1.5h0m.5-10.5h0m16.5-48.5h0m0 19h0m0 13h0m0 9.5h0m0 12h0m.5-54h0m0 7h0m0 5.5h0m0 11.5h0m0 3.5h0m0 7.5h0m.5-.5h0m0 11.5h0m0 1.5h0m.5-40.5h0m0 6.5h0m0 8h0m0 3h0m0 7h0m0 9.5h0m0 1.5h0m.5-32h0m0 1h0m0 14.5h0m0 11.5h0m0 11.5h0m.5-44h0m0 9h0m0 14.5h0m.5-29.5h0m0 6h0m0 .5h0m0 14.5h0m0 .5h0m0 1.5h0m0 7h0m0 .5h0m0 3.5h0m0 12h0m0 10.5h0m37-2h0m.5-1.5h0m.5-15h0m0 1.5h0m0 5h0m0 13h0m0 .5h0m.5-5h0m4-3h0m.5-19.5h0m.5-14.5h0m0 11h0m0 17.5h0m0 10h0m0 .5h0m0 4.5h0m.5-37h0m0 6h0m0 8.5h0m0 1.5h0m0 5.5h0m.5-11.5h0m0 4.5h0m.5-18.5h0m0 27h0m.5-18.5h0m0 4.5h0m0 1h0m0 20h0m0 1.5h0m15.5-20h0m0 7h0m0 1h0m0 10.5h0m.5-19.5h0m0 2h0m0 6.5h0m0 10h0m.5-17.5h0m0 21h0m.5-19.5h0m0 3.5h0m0 10h0m0 8.5h0m.5-9.5h0m0 2h0m4.5-2.5h0m0 .5h0m0 11.5h0m0 1h0m.5-12.5h0m.5-1h0m0 8.5h0m0 1h0m10.5 140.5h0m6 71.5h0m3-227h0m0 8.5h0m.5-23.5h0m0 6h0m0 6h0m0 3.5h0m0 18.5h0m.5-38.5h0m0 3h0m0 2.5h0m0 14.5h0m0 7h0m.5-19.5h0m0 8.5h0m0 18h0m14.5-32h0m0 .5h0m.5 1.5h0m0 9.5h0m0 7.5h0m0 5.5h0m0 1h0m0 12.5h0m.5-44h0m0 18.5h0m0 4.5h0m.5-16.5h0m.5-5.5h0m0 27h0m0 2.5h0m0 6.5h0m2.5-7h0m0 8h0m.5-23h0m0 12.5h0m0 1.5h0m.5-13h0m0 11.5h0m0 3.5h0m12 0h0m0 3h0m0 1h0m0 .5h0m0 7h0m1-7.5h0m0 1.5h0m14.5-2h0m0 4h0m0 3h0m.5 1.5h0m.5-5.5h0m0 3h0m0 2h0m.5-8.5h0m0 2h0m0 3h0m0 .5h0m.5-4.5h0m12-37h0m0 6h0m0 10h0m0 12h0m0 9.5h0m0 1.5h0m.5-36h0m0 3h0m0 8h0m0 10.5h0m0 11.5h0m.5-28.5h0m0 11h0m0 1h0m0 4.5h0m0 4h0m0 17.5h0m.5-43h0m0 1h0m0 22.5h0m0 5.5h0m0 5h0m.5-18h0m0 19.5h0m.5-37h0m0 21.5h0m0 6h0m.5-26h0m0 2h0m0 4.5h0m0 33h0m.5-41h0m0 6h0m0 4h0m0 5.5h0m0 2h0m0 2h0m0 4h0m0 2.5h0m0 1h0m0 15.5h0m.5-39h0m0 23h0m0 10.5h0m14.5-25h0m0 3h0m0 2h0m1-4h0m0 2h0m0 10h0m0 10h0m0 5.5h0m5.5 4.5h0m0 .5h0m14.5-4h0m0 3.5h0m.5-6h0m0 .5h0m0 1.5h0m0 2.5h0m0 1h0m6-29h0m0 9h0m0 4h0m0 .5h0m0 8h0m0 4.5h0m.5-35h0m0 .5h0m0 19h0m0 5h0m0 5.5h0m.5-35h0m0 5.5h0m0 .5h0m0 9h0m.5-27.5h0m0 16h0m.5-19h0m0 13h0m0 13.5h0m0 4.5h0m0 18h0m.5-20.5h0m11.5 171.5h0m2.5-177h0m.5 0h0m0 7h0m0 .5h0m0 7h0m.5-22.5h0m0 25h0m0 3.5h0m.5-6.5h0m0 13.5h0m0 8.5h0m.5-36h0m0 9h0m0 1.5h0m.5-3.5h0m0 .5h0m0 1h0m0 8.5h0m0 5.5h0m0 .5h0m.5-32h0m0 24h0m5 14h0m0 3.5h0m0 3h0m.5-9h0m0 6.5h0m.5-8h0m0 7h0m7-3.5h0m0 5.5h0m.5-13.5h0m0 6.5h0m.5-18h0m0 5.5h0m0 3.5h0m27.5-6h0m0 20h0m.5-54.5h0m0 2h0m0 3h0m0 31.5h0m0 13.5h0m0 1.5h0m.5-36h0m0 5.5h0m0 12.5h0m0 14.5h0m0 1.5h0m.5-53h0m0 18.5h0m0 24.5h0m0 8h0m.5-31.5h0m0 26.5h0m0 1.5h0m0 7.5h0m.5-42.5h0m0 29h0m.5-33.5h0m0 2h0m0 7.5h0m0 10h0m0 11.5h0m0 1.5h0m.5-19.5h0m0 5h0m0 18.5h0m.5-31.5h0m0 6h0m0 2.5h0m0 1h0m0 4h0m0 4.5h0m0 24h0m0 2.5h0m.5-55.5h0m0 10.5h0m0 8h0m0 9.5h0m0 12.5h0m.5-34h0m0 2h0m0 4h0m0 1h0m0 2h0m0 21.5h0m0 9.5h0m.5-46h0m0 16h0m0 17.5h0m0 5.5h0m0 1.5h0m0 17.5h0m.5-13h0m28.5 12h0m.5 2.5h0m.5-3h0m0 2h0m0 .5h0m0 1h0m5-7h0m.5-10.5h0m0 4h0m0 .5h0m0 10h0m.5-19.5h0m0 5h0m0 5h0m.5 4h0m0 3h0m.5-17h0m0 7.5h0m0 4h0m0 4h0m0 3h0m3.5-3h0m0 1h0m.5-36h0m0 10.5h0m0 5h0m0 2h0m0 3.5h0m0 1.5h0m0 3h0m.5-25.5h0m0 30h0m.5-32.5h0m0 6.5h0m0 19.5h0m0 4.5h0m0 6h0m0 1.5h0m17.5-42h0m0 11h0m0 10h0m0 13h0m.5-34h0m0 6h0m0 34h0m.5-20h0m0 11h0m.5-23h0m0 4h0m0 21h0m0 8.5h0m.5-37h0m0 2.5h0m0 5h0m0 29h0m5.5-11h0m.5 7h0m0 .5h0m0 6.5h0m.5-17h0m0 4h0m0 5h0m0 6h0m6-4h0m.5-3h0m0 2h0m0 .5h0m0 3.5h0m0 2h0m.5 .5h0m6 4.5h0m.5-1h0m5.5-33h0m0 17h0m.5-20h0m0 .5h0m0 2.5h0m0 9.5h0m0 1h0m.5 3h0m14.5-32h0m0 16.5h0m0 12h0m0 10.5h0m0 11h0m.5-35h0m0 28h0m.5-26.5h0m0 18h0m0 1.5h0m0 1h0m0 7.5h0m.5-42h0m0 7.5h0m0 4h0m0 3.5h0m0 11h0m0 11h0m0 2h0m0 5.5h0m.5-52.5h0m0 2h0m0 1.5h0m0 5.5h0m0 27h0m0 10.5h0m.5-27h0m0 10.5h0m0 2h0m0 2.5h0m0 9h0m0 2h0m.5-44h0m0 14.5h0m0 14.5h0m0 5h0m0 22h0m.5-56.5h0m0 16.5h0m0 1h0m0 7h0m0 14.5h0m0 1h0m.5-33h0m0 8.5h0m0 4h0m0 1.5h0m28.5 28.5h0m0 6h0m.5-12.5h0m0 1h0m0 4.5h0m0 3h0m0 2.5h0m8.5 3.5h0m.5-1.5h0m6-57.5h0m0 5h0m0 2.5h0m0 9h0m0 3.5h0m0 15.5h0m0 5h0m0 4h0m.5-47.5h0m0 19h0m0 4h0m0 2h0m0 15.5h0m.5-26.5h0m0 2.5h0m0 16.5h0m0 10.5h0m0 10h0m.5-44.5h0m0 20.5h0m0 14h0m.5-46h0m0 6.5h0m0 26.5h0m0 8h0m0 3h0m.5-35.5h0m0 33h0m0 9h0m0 2h0m.5-41.5h0m0 12h0m0 15.5h0m0 9.5h0m0 5.5h0m0 9.5h0m.5-60.5h0m0 3.5h0m0 1h0m0 7.5h0m0 2h0m0 1.5h0m0 19h0m.5-34h0m0 1h0m0 4h0m14.5 25.5h0m0 18.5h0m.5-22h0m0 .5h0m0 16.5h0m0 12.5h0m0 4.5h0m.5-27.5h0m5 20.5h0m1 6.5h0m19.5-19.5h0m0 15h0m.5-37h0m0 24h0m0 1h0m0 4.5h0m.5-21.5h0m0 9.5h0m.5-8.5h0m0 7.5h0m0 1.5h0m0 4.5h0m.5-17h0m0 12.5h0m0 5.5h0m0 5h0m15-15.5h0m0 5h0m0 17h0m.5-35h0m0 1.5h0m0 3.5h0m0 26h0m.5-30.5h0m0 7.5h0m0 2h0m0 4h0m0 6.5h0m.5-19h0m0 1.5h0m0 2.5h0m0 13.5h0m0 1.5h0m0 13.5h0m0 5.5h0m.5-32h0m0 7.5h0m7 25h0m0 2h0m6-17.5h0m0 6.5h0m0 9.5h0m0 185h0m.5-200.5h0m0 10h0m.5-7.5h0m0 1h0m0 1.5h0m0 7.5h0m0 2h0m0 2.5h0m.5-19h0m0 10.5h0m.5-9h0m0 10h0m0 2.5h0m.5-15h0m0 14h0m14-6.5h0m0 2h0m0 2h0m.5-11.5h0m0 7.5h0m0 1.5h0m0 5.5h0m0 4.5h0m13.5-54h0m0 16h0m0 .5h0m0 4h0m0 13.5h0m.5-23.5h0m0 28h0m0 1h0m0 3.5h0m.5-43h0m0 5h0m0 8h0m0 4h0m0 7.5h0m0 6h0m0 6h0m0 3h0m0 11h0m0 1h0m.5-50.5h0m0 3.5h0m0 3h0m0 4h0m0 14h0m0 7.5h0m.5-27.5h0m0 16h0m0 .5h0m0 11h0m.5-30.5h0m0 29h0m0 6h0m0 14.5h0m.5-35h0m0 10.5h0m0 11h0m.5-38h0m0 24h0m0 21.5h0m0 1.5h0m.5-45h0m0 1.5h0m0 5h0m0 .5h0m0 1.5h0m0 1.5h0m0 5.5h0m0 28h0m.5-30h0m0 1.5h0m0 12.5h0m0 10.5h0m0 1h0m0 1.5h0m15-29h0m.5 11.5h0m12.5 14.5h0m0 5.5h0m0 1.5h0m0 4.5h0m0 .5h0m.5-7.5h0m0 9h0m0 .5h0m.5-12h0m0 1h0m0 5h0m0 4.5h0m.5-13h0m0 8h0m0 6.5h0m.5-15h0m0 10.5h0m4.5 1.5h0m0 3.5h0m.5-3.5h0m0 4h0m.5-2h0m0 1.5h0m6.5-38.5h0m0 15h0m.5 19h0m.5-38h0m0 1h0m0 27.5h0m0 3.5h0m0 .5h0m.5-31h0m0 1.5h0m0 .5h0m0 17.5h0m0 1h0m0 8.5h0m0 4.5h0m0 6.5h0m.5-7.5h0m14.5-53h0m0 30.5h0m0 1h0m.5 1h0m0 5h0m0 9h0m0 11h0m.5-19h0m0 1.5h0m.5-44h0m0 9.5h0m0 27.5h0m.5-15h0m0 3.5h0m0 12.5h0m0 7.5h0m0 8.5h0m6 5h0m0 6h0m0 1h0m.5-4.5h0m0 .5h0m.5-3h0m0 4.5h0m0 1h0m7.5-24.5h0m0 10.5h0m.5-5h0m0 10.5h0m0 7.5h0m.5-20h0m0 10h0m0 1.5h0m2 149h0m2.5 61h0m23-232h0m0 .5h0m.5-1.5h0m0 5.5h0m0 2h0m0 7h0m0 8h0m0 3h0m.5-16.5h0m0 13h0m0 3h0m.5-17h0m0 4.5h0m0 2.5h0m0 12h0m0 3h0m0 3h0m.5-33h0m0 12.5h0m0 20h0m0 .5h0m.5-28.5h0m0 5h0m0 5h0m0 7.5h0m0 1h0m.5-17h0m0 10.5h0m0 1h0m0 5h0m0 1.5h0m0 .5h0m0 2h0m.5-26.5h0m0 4h0m0 6h0m0 5h0m0 2h0m0 3.5h0m0 10h0m0 1.5h0m.5-5.5h0m.5-23h0m0 3h0m0 12h0m.5-8h0m0 1.5h0m20.5 157h0m14.5-146h0m0 1.5h0m0 3h0m0 2.5h0m.5-4h0m.5-4h0m0 7h0m5-24h0m.5 5.5h0m0 15h0m0 1h0m.5-17.5h0m0 14.5h0m0 7h0m.5-21.5h0m0 .5h0m0 13h0m.5-11h0m.5-6h0m0 13h0m0 2h0m0 3h0m0 1h0m0 1.5h0m.5-14.5h0m0 2.5h0m0 1.5h0m0 1.5h0m16 13h0m0 1h0m0 2.5h0m.5-2.5h0m0 .5h0m0 1h0m0 1.5h0m.5 0h0m13-16h0m0 .5h0m0 11h0m0 1h0m0 1h0m.5-12h0m.5 11.5h0m0 1.5h0m12-19h0m0 11.5h0m.5-12.5h0m0 1.5h0m0 6h0m.5-12h0m0 14h0m0 1.5h0" stroke="#ffa500" stroke-width="3.4" stroke-linecap="round" fill="none" clip-path="url(#c2)"/>
<path d="M192.0 660.4h6l-3 5.6zM344.5 660.4h6l-3 5.6zM375.0 660.4h6l-3 5.6zM429.0 660.4h6l-3 5.6zM571.0 660.4h6l-3 5.6zM577.0 660.4h6l-3 5.6zM671.0 660.4h6l-3 5.6zM744.5 660.4h6l-3 5.6zM769.0 660.4h6l-3 5.6zM770.5 660.4h6l-3 5.6zM774.5 660.4h6l-3 5.6zM798.5 660.4h6l-3 5.6zM815.0 660.4h6l-3 5.6zM842.5 660.4h6l-3 5.6zM851.0 660.4h6l-3 5.6zM941.0 660.4h6l-3 5.6zM1134.5 660.4h6l-3 5.6zM1150.5 660.4h6l-3 5.6zM1231.0 660.4h6l-3 5.6zM1283.0 660.4h6l-3 5.6zM1299.0 660.4h6l-3 5.6z" fill="#ffa500"/>
<rect x="162.50" y="485" width="1140.48" height="64.5" fill="#ffa500" fill-opacity="0.1"/>
<rect x="105.5" y="499" width="1255.5" height="48.6" fill="#ff0000" fill-opacity="0.1"/>
<path d="M162.50 517.6H1303.98" stroke="#ffa500" stroke-width="2.78"/>
<path d="M105.5 522.9H1361" stroke="#ff0000" stroke-width="2.08"/>
<path d="M162.3 666.5V380.5" stroke="#800080" stroke-width="1.85" stroke-dasharray="1.85 3.67" stroke-dashoffset="-0.3"/>
<path d="M1303.0 666.5V380.5" stroke="#800080" stroke-width="1.85" stroke-dasharray="1.85 3.67" stroke-dashoffset="-0.3"/>
<text x="715.26" y="657.10" font-size="14.72" textLength="34.50" lengthAdjust="spacingAndGlyphs">4961</text>
<path d="M105.5 380.5V666.5H1485.5V380.5H105.5" fill="none" stroke="#000" stroke-width="1.1"/>
<path d="M162.5 666.5v4.9M386.5 666.5v4.9M610.5 666.5v4.9M833.5 666.5v4.9M1057.5 666.5v4.9M1281.5 666.5v4.9" stroke="#000" stroke-width="1.1"/>
<text x="158.42" y="687.00" font-size="14.72" textLength="8.14" lengthAdjust="spacingAndGlyphs">0</text>
<text x="369.20" y="687.00" font-size="14.72" textLength="34.58" lengthAdjust="spacingAndGlyphs">5000</text>
<text x="588.44" y="687.00" font-size="14.72" textLength="43.53" lengthAdjust="spacingAndGlyphs">10000</text>
<text x="811.44" y="687.00" font-size="14.72" textLength="43.53" lengthAdjust="spacingAndGlyphs">15000</text>
<text x="1035.59" y="687.00" font-size="14.72" textLength="43.63" lengthAdjust="spacingAndGlyphs">20000</text>
<text x="1259.59" y="687.00" font-size="14.72" textLength="43.63" lengthAdjust="spacingAndGlyphs">25000</text>
<path d="M105.5 624.50h-4.9M105.5 579.70h-4.9M105.5 534.90h-4.9M105.5 490.10h-4.9M105.5 445.30h-4.9M105.5 400.50h-4.9" stroke="#000" stroke-width="1.1"/>
<text x="55.78" y="628.70" font-size="14.72" textLength="38.87" lengthAdjust="spacingAndGlyphs">10.05</text>
<text x="55.48" y="583.90" font-size="14.72" textLength="39.12" lengthAdjust="spacingAndGlyphs">10.10</text>
<text x="55.78" y="539.10" font-size="14.72" textLength="38.87" lengthAdjust="spacingAndGlyphs">10.15</text>
<text x="55.48" y="494.30" font-size="14.72" textLength="39.12" lengthAdjust="spacingAndGlyphs">10.20</text>
<text x="55.78" y="449.50" font-size="14.72" textLength="38.87" lengthAdjust="spacingAndGlyphs">10.25</text>
<text x="55.48" y="404.70" font-size="14.72" textLength="39.12" lengthAdjust="spacingAndGlyphs">10.30</text>
<text x="706.92" y="371.50" font-size="16.42" textLength="175.69" lengthAdjust="spacingAndGlyphs">Magnitude Estimates</text>
<rect x="1365.5" y="387.5" width="113.0" height="48.0" rx="2.8" fill="#fff" fill-opacity="0.8" stroke="#cccccc" stroke-width="1.1"/>
<path d="M1369 399.5H1400" stroke="#ffa500" stroke-width="2.78"/>
<path d="M1369 421.8H1399" stroke="#ff0000" stroke-width="2.08"/>
<text x="1409.47" y="404.00" font-size="14.72" textLength="30.38" lengthAdjust="spacingAndGlyphs">mag</text>
<text x="1439.66" y="405.80" font-size="10.30" textLength="30.85" lengthAdjust="spacingAndGlyphs" font-style="italic">OBSID</text>
<text x="1408.47" y="426.50" font-size="14.72" textLength="30.38" lengthAdjust="spacingAndGlyphs">mag</text>
<rect x="1348.5" y="613.5" width="130.0" height="46.0" rx="2.8" fill="#fff" fill-opacity="0.8" stroke="#cccccc" stroke-width="1.1"/>
<circle cx="1367.5" cy="626.5" r="2.1" fill="#ffa500"/>
<text x="1392.09" y="630.10" font-size="14.72" textLength="79.78" lengthAdjust="spacingAndGlyphs">Highlighted</text>
<circle cx="1367.5" cy="647.5" r="2.1" fill="#000"/>
<text x="1392.74" y="651.10" font-size="14.72" textLength="20.37" lengthAdjust="spacingAndGlyphs">OK</text>
<path d="M105.5 758.5H1485.5M105.5 791.2H1485.5M105.5 823.6H1485.5M105.5 856.3H1485.5M105.5 889.1H1485.5M105.5 921.5H1485.5M105.5 1009.5H1485.5M105.5 983.5H1485.5M105.5 957.5H1485.5" stroke="#a0a0a0" stroke-width="1.0" stroke-dasharray="1.1 1.84"/>
<path d="M1301.75 758.5a1.25 1.25 0 1 0 2.5 0a1.25 1.25 0 1 0-2.5 0zM178.25 791.2a1.25 1.25 0 1 0 2.5 0a1.25 1.25 0 1 0-2.5 0zM675.95 791.2a1.25 1.25 0 1 0 2.5 0a1.25 1.25 0 1 0-2.5 0zM678.35 791.2a1.25 1.25 0 1 0 2.5 0a1.25 1.25 0 1 0-2.5 0zM674.95 823.6a1.25 1.25 0 1 0 2.5 0a1.25 1.25 0 1 0-2.5 0zM194.55 856.3a1.25 1.25 0 1 0 2.5 0a1.25 1.25 0 1 0-2.5 0zM194.55 889.1a1.25 1.25 0 1 0 2.5 0a1.25 1.25 0 1 0-2.5 0zM298.95 856.3a1.25 1.25 0 1 0 2.5 0a1.25 1.25 0 1 0-2.5 0zM298.95 889.1a1.25 1.25 0 1 0 2.5 0a1.25 1.25 0 1 0-2.5 0zM346.15 856.3a1.25 1.25 0 1 0 2.5 0a1.25 1.25 0 1 0-2.5 0zM346.15 889.1a1.25 1.25 0 1 0 2.5 0a1.25 1.25 0 1 0-2.5 0zM376.95 856.3a1.25 1.25 0 1 0 2.5 0a1.25 1.25 0 1 0-2.5 0zM376.95 889.1a1.25 1.25 0 1 0 2.5 0a1.25 1.25 0 1 0-2.5 0zM388.95 856.3a1.25 1.25 0 1 0 2.5 0a1.25 1.25 0 1 0-2.5 0zM388.95 889.1a1.25 1.25 0 1 0 2.5 0a1.25 1.25 0 1 0-2.5 0zM430.95 856.3a1.25 1.25 0 1 0 2.5 0a1.25 1.25 0 1 0-2.5 0zM430.95 889.1a1.25 1.25 0 1 0 2.5 0a1.25 1.25 0 1 0-2.5 0zM476.15 856.3a1.25 1.25 0 1 0 2.5 0a1.25 1.25 0 1 0-2.5 0zM476.15 889.1a1.25 1.25 0 1 0 2.5 0a1.25 1.25 0 1 0-2.5 0zM572.95 856.3a1.25 1.25 0 1 0 2.5 0a1.25 1.25 0 1 0-2.5 0zM572.95 889.1a1.25 1.25 0 1 0 2.5 0a1.25 1.25 0 1 0-2.5 0zM578.95 856.3a1.25 1.25 0 1 0 2.5 0a1.25 1.25 0 1 0-2.5 0zM578.95 889.1a1.25 1.25 0 1 0 2.5 0a1.25 1.25 0 1 0-2.5 0zM654.95 856.3a1.25 1.25 0 1 0 2.5 0a1.25 1.25 0 1 0-2.5 0zM654.95 889.1a1.25 1.25 0 1 0 2.5 0a1.25 1.25 0 1 0-2.5 0zM672.25 856.3a1.25 1.25 0 1 0 2.5 0a1.25 1.25 0 1 0-2.5 0zM672.25 889.1a1.25 1.25 0 1 0 2.5 0a1.25 1.25 0 1 0-2.5 0zM675.25 856.3a1.25 1.25 0 1 0 2.5 0a1.25 1.25 0 1 0-2.5 0zM675.25 889.1a1.25 1.25 0 1 0 2.5 0a1.25 1.25 0 1 0-2.5 0zM746.15 856.3a1.25 1.25 0 1 0 2.5 0a1.25 1.25 0 1 0-2.5 0zM746.15 889.1a1.25 1.25 0 1 0 2.5 0a1.25 1.25 0 1 0-2.5 0zM770.95 856.3a1.25 1.25 0 1 0 2.5 0a1.25 1.25 0 1 0-2.5 0zM770.95 889.1a1.25 1.25 0 1 0 2.5 0a1.25 1.25 0 1 0-2.5 0zM776.15 856.3a1.25 1.25 0 1 0 2.5 0a1.25 1.25 0 1 0-2.5 0zM776.15 889.1a1.25 1.25 0 1 0 2.5 0a1.25 1.25 0 1 0-2.5 0zM800.15 856.3a1.25 1.25 0 1 0 2.5 0a1.25 1.25 0 1 0-2.5 0zM800.15 889.1a1.25 1.25 0 1 0 2.5 0a1.25 1.25 0 1 0-2.5 0zM815.25 856.3a1.25 1.25 0 1 0 2.5 0a1.25 1.25 0 1 0-2.5 0zM815.25 889.1a1.25 1.25 0 1 0 2.5 0a1.25 1.25 0 1 0-2.5 0zM817.25 856.3a1.25 1.25 0 1 0 2.5 0a1.25 1.25 0 1 0-2.5 0zM817.25 889.1a1.25 1.25 0 1 0 2.5 0a1.25 1.25 0 1 0-2.5 0zM830.95 856.3a1.25 1.25 0 1 0 2.5 0a1.25 1.25 0 1 0-2.5 0zM830.95 889.1a1.25 1.25 0 1 0 2.5 0a1.25 1.25 0 1 0-2.5 0zM844.15 856.3a1.25 1.25 0 1 0 2.5 0a1.25 1.25 0 1 0-2.5 0zM844.15 889.1a1.25 1.25 0 1 0 2.5 0a1.25 1.25 0 1 0-2.5 0zM852.95 856.3a1.25 1.25 0 1 0 2.5 0a1.25 1.25 0 1 0-2.5 0zM852.95 889.1a1.25 1.25 0 1 0 2.5 0a1.25 1.25 0 1 0-2.5 0zM942.95 856.3a1.25 1.25 0 1 0 2.5 0a1.25 1.25 0 1 0-2.5 0zM942.95 889.1a1.25 1.25 0 1 0 2.5 0a1.25 1.25 0 1 0-2.5 0zM1060.95 856.3a1.25 1.25 0 1 0 2.5 0a1.25 1.25 0 1 0-2.5 0zM1060.95 889.1a1.25 1.25 0 1 0 2.5 0a1.25 1.25 0 1 0-2.5 0zM1108.95 856.3a1.25 1.25 0 1 0 2.5 0a1.25 1.25 0 1 0-2.5 0zM1108.95 889.1a1.25 1.25 0 1 0 2.5 0a1.25 1.25 0 1 0-2.5 0zM1136.15 856.3a1.25 1.25 0 1 0 2.5 0a1.25 1.25 0 1 0-2.5 0zM1136.15 889.1a1.25 1.25 0 1 0 2.5 0a1.25 1.25 0 1 0-2.5 0zM1151.75 856.3a1.25 1.25 0 1 0 2.5 0a1.25 1.25 0 1 0-2.5 0zM1151.75 889.1a1.25 1.25 0 1 0 2.5 0a1.25 1.25 0 1 0-2.5 0zM1176.15 856.3a1.25 1.25 0 1 0 2.5 0a1.25 1.25 0 1 0-2.5 0zM1176.15 889.1a1.25 1.25 0 1 0 2.5 0a1.25 1.25 0 1 0-2.5 0zM1232.95 856.3a1.25 1.25 0 1 0 2.5 0a1.25 1.25 0 1 0-2.5 0zM1232.95 889.1a1.25 1.25 0 1 0 2.5 0a1.25 1.25 0 1 0-2.5 0zM1284.95 856.3a1.25 1.25 0 1 0 2.5 0a1.25 1.25 0 1 0-2.5 0zM1284.95 889.1a1.25 1.25 0 1 0 2.5 0a1.25 1.25 0 1 0-2.5 0zM1301.75 856.3a1.25 1.25 0 1 0 2.5 0a1.25 1.25 0 1 0-2.5 0zM1301.75 889.1a1.25 1.25 0 1 0 2.5 0a1.25 1.25 0 1 0-2.5 0z" fill="none" stroke="#000" stroke-width="1.1"/>
<path d="M162.5 1004.5h0m0 2h0m0 1h0m0 .5h0m.5-4.5h0m0 4.5h0m.5-5h0m.5 2.5h0m.5 2.5h0m.5-5.5h0m.5 3h0m0 2.5h0m.5-3.5h0m1-1.5h0m0 3.5h0m.5-1.5h0m0 3h0m.5-4.5h0m0 3.5h0m0 1h0m1 0h0m.5-3h0m0 3h0m.5-4h0m.5 2.5h0m.5 1.5h0m.5 0h0m1-4h0m0 1h0m0 3h0m1.5-5h0m0 1h0m.5 2.5h0m0 1.5h0m1-4.5h0m0 4h0m1-2.5h0m.5-1h0m0 4h0m.5-4h0m.5 2.5h0m0 1.5h0m1-4h0m0 2h0m0 2h0m2-3h0m0 2h0m.5-2h0m0 3h0m1-4.5h0m0 4.5h0m.5-4.5h0m.5 3h0m0 1.5h0m.5-4h0m.5 4h0m1-4h0m0 .5h0m0 2h0m0 1.5h0m1 0h0m.5-4h0m.5-1h0m0 3.5h0m0 1.5h0m1-2h0m0 2h0m.5-4h0m.5 2.5h0m.5 1.5h0m1-4.5h0m0 1.5h0m.5 2h0m0 1h0m.5 0h0m1-3h0m0 3h0m.5-5.5h0m0 5h0m.5-3.5h0m0 4h0m1 0h0m.5-2h0m0 2h0m.5-12h0m0 9.5h0m.5-7.5h0m0 5h0m0 5h0m.5-2.5h0m1-2.5h0m0 5h0m.5-3.5h0m0 3.5h0m1-5.5h0m0 3.5h0m.5 2h0m.5-4.5h0m0 2.5h0m1-1.5h0m0 1h0m1 2h0m1-4h0m0 3h0m1-4.5h0m0 5h0m1-4.5h0m0 2.5h0m1-2h0m0 4.5h0m.5-.5h0m1-2h0m0 3h0m.5 0h0m.5-6.5h0m0 5.5h0m.5-5.5h0m0 2h0m0 4.5h0m1-2h0m.5-2.5h0m1-.5h0m0 1.5h0m.5 2.5h0m0 1h0m.5-3.5h0m1-1.5h0m.5 5h0m.5-2h0m.5-1.5h0m0 3h0m1-.5h0m.5-2h0m.5-2.5h0m0 .5h0m.5 4.5h0m.5-3.5h0m0 2h0m.5 1.5h0m1-4.5h0m0 2.5h0m.5 2h0m1-4h0m0 4h0m1-3.5h0m0 1.5h0m1 2.5h0m1-4.5h0m0 2h0m.5 0h0m.5-2h0m0 4.5h0m.5-4h0m.5 4h0m.5-2.5h0m.5 2.5h0m.5-3h0m.5 0h0m0 3h0m1-2.5h0m0 2.5h0m.5 0h0m.5-5h0m.5 2.5h0m0 2.5h0m.5-3.5h0m.5 3.5h0m.5 0h0m.5-3h0m0 1h0m.5 2h0m1-3.5h0m0 3.5h0m1-3.5h0m0 2.5h0m0 1h0m1 0h0m.5-3h0m0 .5h0m.5 2.5h0m.5-6h0m.5 6h0m.5-4.5h0m0 2h0m.5-3h0m0 5.5h0m.5 0h0m.5-4h0m.5 3h0m.5 1h0m.5-3.5h0m.5 2.5h0m0 1h0m1 0h0m.5-3.5h0m0 2h0m0 1.5h0m1-4h0m0 4h0m.5-2.5h0m0 2.5h0m1-4.5h0m0 1.5h0m0 3h0m1 0h0m.5-4.5h0m0 3.5h0m0 1h0m.5-3h0m.5 1.5h0m0 1.5h0m.5 0h0m.5-4h0m.5 4h0m.5-4.5h0m0 2.5h0m0 2h0m1 0h0m1-3.5h0m0 3.5h0m.5-1.5h0m0 1.5h0m1-4h0m0 3h0m0 1h0m.5-4h0m.5 4h0m1-4h0m0 1.5h0m0 2.5h0m1 0h0m.5-4.5h0m0 4.5h0m.5-2h0m.5 2h0m1-4.5h0m0 2h0m1 1h0m.5-1.5h0m.5-2h0m0 5h0m1-1h0m0 1h0m.5-3h0m.5 3h0m.5-1.5h0m0 1.5h0m1-3h0m0 3h0m.5-.5h0m0 .5h0m1 0h0m1-4h0m0 2h0m0 2h0m1 0h0m.5-4.5h0m0 4.5h0m.5-2.5h0m.5 2.5h0m.5-2.5h0m.5 2.5h0m.5-3h0m.5 3h0m.5-.5h0m.5-3.5h0m0 4h0m.5-3h0m.5 3h0m1-1h0m.5-3h0m0 4h0m1-4h0m0 4h0m.5-2h0m.5 2h0m.5-4.5h0m.5 4.5h0m.5-2.5h0m0 2.5h0m1 0h0m.5-4h0m0 .5h0m0 2h0m.5 1.5h0m.5-4.5h0m.5 0h0m0 4.5h0m.5-2h0m.5-2.5h0m0 4.5h0m1 0h0m.5-3.5h0m0 2h0m.5 1.5h0m.5-4h0m0 3h0m0 1h0m1 0h0m1-2.5h0m0 2.5h0m.5-3h0m.5 3h0m.5-1h0m.5 1h0m.5 0h0m.5-4h0m0 1h0m.5 3h0m.5 0h0m1-1.5h0m0 1.5h0m.5-5h0m0 5h0m.5-3.5h0m.5 3h0m.5-2.5h0m.5-2h0m0 4.5h0m1 .5h0m.5-3.5h0m0 1.5h0m.5 1.5h0m1-4.5h0m0 1h0m1-2h0m0 4.5h0m0 1.5h0m.5 0h0m1-5.5h0m0 2h0m0 3.5h0m.5-3h0m.5 3h0m.5-3.5h0m.5 1.5h0m.5-3h0m0 5h0m1-6h0m0 3.5h0m0 2.5h0m.5-8h0m0 6.5h0m.5 1.5h0m.5-4h0m1 4h0m.5-2.5h0m.5-2.5h0m.5 5h0m.5-4.5h0m.5 3h0m0 1.5h0m.5-4h0m0 4h0m1-3.5h0m0 3.5h0m1.5-2h0m0 2h0m.5-4.5h0m0 4.5h0m1 0h0m.5-6h0m0 2.5h0m0 2h0m0 1.5h0m1 0h0m1-4.5h0m0 2h0m0 2.5h0m1-4.5h0m0 4.5h0m1-4.5h0m0 2h0m1 2.5h0m1-4h0m0 4h0m.5-1.5h0m0 1.5h0m.5-6h0m.5 3h0m0 3h0m.5-4h0m0 4h0m1-2.5h0m0 2.5h0m1-4.5h0m0 4.5h0m.5-2h0m.5 2h0m.5-2.5h0m.5 2.5h0m.5-3h0m0 2h0m.5 1h0m1-5h0m.5 2.5h0m0 2.5h0m1-1.5h0m0 1.5h0m.5-4h0m.5 4h0m.5 0h0m.5-4.5h0m0 2.5h0m.5 2h0m.5-3h0m0 3h0m.5-5h0m.5 1h0m.5-2h0m0 4.5h0m0 1h0m1.5-3.5h0m0 2h0m0 1h0m0 .5h0m.5-4h0m1.5-.5h0m0 2.5h0m0 2.5h0m1.5-1.5h0m0 1.5h0m.5-4h0m1-.5h0m0 3.5h0m.5-1.5h0m1 2h0m.5-5.5h0m.5-.5h0m0 2.5h0m0 2h0m0 2h0m.5 0h0m.5-3h0m1-2h0m0 3h0m.5 2h0m.5 0h0m.5-3h0m.5-7.5h0m.5 5h0m0 3.5h0m0 2h0m.5-4h0m0 1h0m.5-2h0m1-4h0m0 8.5h0m.5-1.5h0m0 1.5h0m.5-5h0m.5 1.5h0m.5-1h0m0 2.5h0m.5 2h0m.5-4.5h0m0 4.5h0m1-2h0m.5-2.5h0m.5 3.5h0m.5-2h0m0 3.5h0m1-5.5h0m0 5.5h0m.5-2.5h0m1-2.5h0m0 1h0m0 4h0m1-2.5h0m1 2.5h0m.5-5h0m0 3.5h0m.5-2.5h0m0 4h0m1.5-2.5h0m0 2.5h0m.5-4.5h0m.5 2.5h0m0 2h0m.5-4h0m0 4h0m1 0h0m1-4.5h0m0 2h0m0 2.5h0m.5-2.5h0m.5 2.5h0m1 0h0m.5-4h0m0 3h0m0 1h0m1 0h0m.5-2h0m.5 2h0m1 0h0m.5-3.5h0m0 1h0m0 2.5h0m.5-4.5h0m.5 4.5h0m1-5.5h0m0 5.5h0m.5-2h0m.5-1.5h0m0 3.5h0m1-3.5h0m0 2h0m0 1.5h0m.5 0h0m1-4h0m0 3h0m0 1h0m.5 0h0m.5-3.5h0m.5 3.5h0m.5-1.5h0m.5-2h0m0 3.5h0m.5-3.5h0m.5 3.5h0m.5-1.5h0m.5 1.5h0m1-4h0m0 1h0m0 3h0m.5-1h0m.5-2.5h0m0 3.5h0m1-3.5h0m0 2.5h0m0 1h0m.5-2.5h0m0 2.5h0m1.5-4.5h0m.5 2.5h0m0 2h0m1 0h0m.5-3.5h0m0 .5h0m.5 3h0m.5-6h0m.5 1.5h0m0 3.5h0m.5 1h0m.5-6h0m0 4h0m1 .5h0m.5-2.5h0m0 4h0m1-4h0m0 4h0m.5-3h0m0 3h0m1-5h0m0 5h0m.5-2h0m.5 2h0m.5-4.5h0m0 2h0m.5-2.5h0m0 5h0m1 0h0m.5-2h0m.5-1.5h0m0 3.5h0m.5-4.5h0m0 4.5h0m1-2h0m0 2h0m.5-4h0m.5 4h0m.5-5.5h0m0 2.5h0m.5 3h0m.5-.5h0m.5-3h0m0 3.5h0m1-2.5h0m0 2.5h0m1-4.5h0m0 4.5h0m1-1h0m0 1h0m.5-3.5h0m0 3.5h0m1-3.5h0m0 .5h0m0 3h0m.5-3h0m.5 3h0m1-2.5h0m0 2.5h0m1 0h0m1-4h0m0 1.5h0m0 2.5h0m1-.5h0m0 .5h0m.5 0h0m.5-3h0m.5 3h0m.5-3h0m.5 1h0m0 2h0m.5 0h0m1 0h0m.5-3.5h0m0 3.5h0m.5-1.5h0m.5-2h0m0 3.5h0m1 0h0m.5-3.5h0m0 1.5h0m.5 2h0m1 0h0m.5-3h0m.5 3h0m1-3h0m0 1.5h0m0 1.5h0m1-3h0m0 3h0m.5-2h0m0 2h0m1-3h0m0 3h0m.5 0h0m.5-3.5h0m0 1.5h0m.5-1.5h0m0 3.5h0m1 0h0m.5-3h0m.5 3h0m.5-2.5h0m0 2.5h0m1-5h0m0 5h0m.5-9.5h0m0 6.5h0m0 3h0m.5-2h0m.5 2h0m.5-3.5h0m1-1.5h0m0 3h0m.5-3.5h0m0 2h0m0 3.5h0m.5 0h0m1 0h0m.5-5h0m0 2h0m0 1h0m0 2h0m1-1h0m0 1h0m.5-4.5h0m.5 0h0m.5 4.5h0m.5-2.5h0m.5-2h0m0 4.5h0m.5-3h0m.5 3h0m.5-4.5h0m0 4h0m.5 .5h0m1-2.5h0m.5 2.5h0m.5-4h0m0 4h0m.5-2h0m.5-2.5h0m.5 4.5h0m1-2.5h0m0 2.5h0m.5-4.5h0m.5 4.5h0m.5-4.5h0m.5 2h0m.5-2h0m0 4h0m1-6h0m0 6h0m.5-4.5h0m0 2.5h0m1 .5h0m0 2h0m1-3.5h0m.5-1h0m0 1.5h0m0 3h0m.5 0h0m.5-1h0m1-3.5h0m.5 2.5h0m0 2h0m.5 0h0m1-3.5h0m0 3.5h0m.5-5h0m0 2.5h0m.5 2.5h0m.5-2.5h0m0 2.5h0m1.5-4h0m.5 2.5h0m0 1.5h0m.5-4h0m0 4h0m1 0h0m.5-3.5h0m.5 1.5h0m0 2h0m1-3.5h0m0 3.5h0m1-2.5h0m0 2.5h0m.5-5h0m.5 5h0m.5-5h0m.5 4h0m0 1h0m.5-3.5h0m0 3.5h0m1-4.5h0m0 1.5h0m.5-3h0m.5 3.5h0m0 1.5h0m.5 1h0m1-4h0m0 4h0m.5-2h0m.5-2h0m.5 4h0m1-4.5h0m0 2h0m.5 1.5h0m1-3h0m1 0h0m0 4h0m.5-2h0m0 2h0m1-5h0m1 2h0m0 1.5h0m0 1.5h0m1-3.5h0m0 3.5h0m1-4h0m.5 1.5h0m0 2.5h0m.5-1h0m.5-3.5h0m0 2.5h0m0 1.5h0m1-5h0m1 2.5h0m0 3h0m.5-1h0m.5-4h0m1 2h0m0 3h0m.5-5.5h0m.5 2.5h0m0 3h0m.5 0h0m.5-7h0m0 1.5h0m.5 4.5h0m.5-5h0m0 2.5h0m1 3h0m.5-5h0m0 3h0m.5 1.5h0m.5-4.5h0m.5 1.5h0m1-1h0m0 3h0m.5-1.5h0m0 3.5h0m.5-5h0m.5 3h0m.5-3h0m.5 1.5h0m0 2.5h0m1 1h0m.5-1.5h0m.5-3h0m0 4.5h0m.5-3h0m1 2.5h0m.5-1.5h0m.5-2h0m0 4h0m.5-3h0m.5 3h0m.5-5h0m.5 4h0m0 1h0m.5-4h0m0 4h0m.5-6h0m.5 .5h0m0 3.5h0m0 .5h0m0 1.5h0m.5 0h0m1-4h0m.5-1.5h0m0 5.5h0m.5 0h0m.5-4h0m0 1.5h0m0 1h0m.5 1.5h0m.5 0h0m.5-2.5h0m.5-2.5h0m0 3.5h0m0 1.5h0m1 0h0m.5-4.5h0m0 1.5h0m0 3h0m1-4.5h0m.5 3.5h0m0 1h0m.5-2h0m.5 2h0m.5-4h0m0 2h0m.5 2h0m1-3.5h0m0 3.5h0m.5-1.5h0m0 1.5h0m.5-3.5h0m.5 1h0m.5 2.5h0m.5-5.5h0m0 5.5h0m.5-3.5h0m.5 1.5h0m0 2h0m1 0h0m.5-4.5h0m0 2.5h0m.5 2h0m.5-2h0m0 2h0m.5-4.5h0m1 0h0m0 2h0m0 2.5h0m.5-1.5h0m.5 1.5h0m1-3.5h0m0 3.5h0m.5 0h0m.5-4h0m0 2.5h0m.5 1.5h0m.5-4h0m0 2.5h0m.5 1.5h0m1.5-5h0m0 2h0m0 3h0m.5 0h0m.5-4h0m.5 3h0m0 1h0m1-6h0m0 6h0m.5-2.5h0m1-2h0m0 4.5h0m.5 0h0m.5-2.5h0m1.5-2.5h0m0 1.5h0m0 2h0m0 1.5h0m.5 0h0m1-4.5h0m0 4.5h0m.5-2.5h0m.5 2.5h0m1-4h0m0 4h0m.5-4h0m.5 2.5h0m0 1.5h0m1 0h0m.5-3h0m0 3h0m1-3h0m0 3h0m.5 0h0m.5-3.5h0m0 2.5h0m.5-2.5h0m0 3.5h0m1-3h0m0 3h0m.5 0h0m1-3h0m0 3h0m.5-1.5h0m.5-3h0m0 4.5h0m1-4h0m0 4h0m.5 0h0m.5-2h0m.5-2h0m0 4h0m1 0h0m.5-4h0m0 2h0m0 2h0m1 0h0m.5 0h0m.5-2.5h0m.5-.5h0m0 3h0m.5-.5h0m0 .5h0m1 0h0m.5-3h0m.5 1.5h0m0 1.5h0m.5 0h0m.5-3.5h0m.5 .5h0m0 3h0m1 0h0m.5-1h0m.5 1h0m1-3h0m0 3h0m1-3.5h0m0 3.5h0m1-2h0m0 2h0m1-4h0m0 4h0m.5 0h0m.5-1.5h0m.5 1.5h0m.5-2.5h0m.5 2.5h0m1-4h0m0 4h0m.5-2h0m.5-2.5h0m0 4.5h0m1 0h0m.5-3.5h0m.5-1.5h0m0 5h0m.5-2h0m.5 2h0m.5-4.5h0m0 3h0m0 1.5h0m1 0h0m.5-4.5h0m0 1h0m.5 0h0m0 3h0m0 .5h0m.5-11h0m.5 10.5h0m0 .5h0m1-5h0m0 2.5h0m0 2.5h0m.5-5h0m0 2h0m.5 3h0m.5-1.5h0m1-2.5h0m0 4h0m.5-2h0m0 2h0m1 0h0m.5-9.5h0m0 5.5h0m0 4h0m.5-1.5h0m.5-1.5h0m0 3h0m.5 0h0m1-4.5h0m0 2.5h0m0 2h0m1-4h0m0 4h0m.5 0h0m1-3.5h0m0 2h0m0 1.5h0m.5-3.5h0m1-1.5h0m0 3.5h0m0 1.5h0m1 0h0m.5-4.5h0m0 2h0m.5 2.5h0m.5-5h0m.5 3h0m0 2h0m.5-3.5h0m.5 3.5h0m.5-6.5h0m0 2h0m.5 4.5h0m.5-2.5h0m.5 2.5h0m.5-4h0m0 3.5h0m0 .5h0m1-.5h0m0 .5h0m.5-4.5h0m0 1.5h0m.5 3h0m.5-2h0m0 2h0m1-3.5h0m0 3.5h0m.5 0h0m.5-5h0m.5 2.5h0m0 2.5h0m1 0h0m.5-2.5h0m.5-1.5h0m0 4h0m1-2.5h0m0 2.5h0m1 0h0m.5-4.5h0m0 3h0m0 1.5h0m1 0h0m.5-3h0m.5 1.5h0m0 1.5h0m.5 0h0m1-4h0m0 4h0m.5-2h0m0 2h0m.5-3.5h0m.5 3.5h0m.5-2h0m1-2h0m0 3h0m.5-3h0m1.5-2h0m0 3h0m0 1h0m0 2h0m1-2.5h0m0 2.5h0m.5-4.5h0m0 4.5h0m1-3h0m0 3h0m.5-5h0m0 5h0m.5-1h0m1.5-3h0m0 1h0m0 3h0m1 0h0m.5-5h0m0 3.5h0m.5-1h0m0 2.5h0m1-2h0m.5-1h0m.5-1.5h0m0 4.5h0m.5-2h0m0 2h0m.5-5.5h0m.5 2h0m.5 1h0m0 2.5h0m1.5-5h0m0 1.5h0m0 2h0m.5 1.5h0m.5-2h0m.5-3.5h0m1 2h0m0 2.5h0m.5-4.5h0m.5 3h0m.5 2h0m.5-4.5h0m.5-.5h0m.5 3.5h0m0 2h0m.5-3.5h0m.5-1.5h0m.5 0h0m.5 1.5h0m0 3h0m1-4.5h0m.5 5h0m.5-4.5h0m0 2.5h0m1.5-.5h0m0 2.5h0m.5-4.5h0m.5 0h0m.5 4.5h0m.5-3h0m0 1.5h0m1-4h0m0 5.5h0m.5 0h0m.5-2.5h0m.5-1.5h0m0 4h0m1-4h0m0 4h0m.5-4h0m0 2.5h0m1-.5h0m.5 2h0m.5-2h0m.5-2.5h0m.5 4.5h0m1-3.5h0m0 2.5h0m0 1h0m.5 0h0m1-6h0m0 2h0m0 1h0m.5 3h0m.5-4h0m0 4h0m.5-2h0m.5-2h0m.5 4h0m.5-4h0m0 4h0m1-1.5h0m0 1.5h0m.5-4h0m0 4h0m1-2.5h0m.5 2.5h0m.5 0h0m.5-4.5h0m0 1.5h0m.5 3h0m.5-5.5h0m0 2.5h0m.5-.5h0m0 3.5h0m.5-.5h0m.5-2.5h0m0 3h0m.5 0h0m.5-4.5h0m.5 4.5h0m.5-2h0m.5 2h0m.5-4.5h0m0 2.5h0m0 2h0m1.5-3.5h0m0 3h0m.5 .5h0m.5-3.5h0m.5 3.5h0m.5-1.5h0m0 1.5h0m1-4h0m0 4h0m.5-4h0m0 1.5h0m1 2h0m.5-4h0m.5-2h0m0 6h0m.5-2h0m.5 2h0m.5-5.5h0m0 3.5h0m0 2h0m1-3.5h0m.5 3.5h0m.5-4.5h0m.5 2h0m.5 2.5h0m.5-4h0m.5 4.5h0m.5-4h0m0 2.5h0m1-2h0m0 3.5h0m1-3.5h0m0 3.5h0m.5 0h0m.5-2h0m.5-1h0m0 3h0m1 0h0m.5-3h0m.5-1.5h0m0 4.5h0m.5-2.5h0m0 2.5h0m1 0h0m.5-4.5h0m.5 0h0m0 2.5h0m0 2h0m1 0h0m.5 0h0m.5-3.5h0m0 1.5h0m.5 2h0m.5-4h0m.5 4h0m1-4h0m0 2h0m0 2h0m.5 0h0m1-1.5h0m.5-2h0m0 3.5h0m.5 0h0m.5-3h0m.5 3h0m.5-4.5h0m.5 3h0m0 1.5h0m1-4h0m0 2.5h0m0 1.5h0m1 0h0m.5 0h0m.5-2.5h0m.5 2.5h0m.5-3h0m0 3h0m1 0h0m1-2h0m0 2h0m.5-4.5h0m0 4.5h0m1-1h0m0 1h0m1-4h0m0 1h0m0 3h0m1 0h0m.5-1.5h0m.5-2.5h0m0 4h0m.5 0h0m.5-4.5h0m0 2h0m.5 2.5h0m1 0h0m.5-3h0m.5-1h0m0 2h0m0 2h0m.5 0h0m1.5-3.5h0m0 2h0m0 1.5h0m.5-6h0m0 6h0m.5-2.5h0m.5-1.5h0m0 4h0m1-1h0m0 1h0m1 0h0m.5-3h0m.5 3h0m.5-5h0m.5 2.5h0m0 .5h0m0 2h0m.5 0h0m1 0h0m.5-4h0m0 4h0m1-4h0m0 1.5h0m0 1h0m0 1.5h0m.5 0h0m1-3h0m0 1h0m0 2h0m1-5h0m0 5h0m1-4.5h0m0 4.5h0m.5-2.5h0m0 2.5h0m1-4h0m0 4h0m.5-3.5h0m.5 3.5h0m.5-1.5h0m.5 1.5h0m.5-4h0m0 4h0m.5-5h0m.5 3h0m.5 2h0m1-4h0m0 4h0m.5-1h0m.5 1h0m1-5.5h0m0 2.5h0m.5 2.5h0m.5-3.5h0m.5 4h0m.5-2h0m.5-.5h0m0 2.5h0m.5-5h0m.5 5h0m.5-4.5h0m.5 2h0m0 2.5h0m1-3.5h0m0 3h0m0 .5h0m1-5h0m0 5h0m1-3h0m0 1h0m0 2h0m1-3h0m0 3h0m1 0h0m.5-3.5h0m0 2h0m.5 1.5h0m.5 0h0m1-3h0m0 3h0m1 0h0m.5-2h0m.5-2h0m0 4h0m.5-4h0m.5 4h0m1-3.5h0m0 1h0m0 2.5h0m.5-5h0m.5 5h0m1.5-4h0m0 2h0m0 2h0m.5 0h0m.5-4h0m.5 0h0m0 4h0m.5-1.5h0m.5 1.5h0m.5-5.5h0m0 5.5h0m.5-2h0m.5-1.5h0m0 3.5h0m1-4.5h0m0 4.5h0m.5 0h0m1-4h0m0 1.5h0m0 .5h0m0 2h0m1-3.5h0m.5 3.5h0m.5-1h0m0 1h0m.5-3h0m1.5-1.5h0m0 2h0m0 2.5h0m.5-2.5h0m1-2h0m0 4.5h0m.5 0h0m.5-2h0m.5-2.5h0m0 4h0m1-4h0m0 2h0m0 1h0m0 .5h0m1-3.5h0m1 0h0m0 4.5h0m1-5h0m0 2.5h0m0 .5h0m0 1.5h0m1-.5h0m.5-4.5h0m0 2h0m1 2h0m.5-5.5h0m0 2h0m0 1h0m1 2h0m.5 2h0m.5-6.5h0m0 3h0m.5 2.5h0m0 1h0m.5-6.5h0m0 1h0m1 2.5h0m.5 2h0m0 1h0m.5-6h0m0 1h0m1 2.5h0m0 2.5h0m.5-5.5h0m.5 2h0m0 3.5h0m1-11.5h0m0 9.5h0m.5-2.5h0m.5-2h0m.5 3.5h0m0 2h0m.5-4h0m0 5h0m1 0h0m.5-2.5h0m.5-1.5h0m.5 4h0m.5-3.5h0m0 2.5h0m.5-7h0m0 3h0m0 5h0m.5 0h0m.5-3.5h0m0 2h0m.5-3.5h0m.5 5h0m.5-5.5h0m0 .5h0m.5 3h0m0 2h0m.5 0h0m.5-1.5h0m.5-2.5h0m0 4h0m1-3h0m0 3h0m1-5h0m0 5h0m.5-6.5h0m0 4h0m1-1.5h0m0 4h0m1-4h0m0 4h0m.5-4h0m0 2h0m1.5-2h0m.5 1h0m0 1h0m0 1.5h0m1 .5h0m1-4h0m0 4h0m.5-4h0m0 2.5h0m.5-1.5h0m1 3h0m1-3h0m0 1.5h0m0 1.5h0m1-4h0m0 2.5h0m2-1h0m0 2.5h0m.5-3.5h0m.5 3.5h0m1-5.5h0m0 3h0m.5 2.5h0m.5-2h0m.5-1.5h0m0 3.5h0m.5 0h0m1-5h0m0 1h0m.5 2.5h0m.5-5h0m.5 6h0m.5-3.5h0m0 1.5h0m1-3.5h0m.5 5h0m.5-4.5h0m0 2h0m0 1.5h0m.5 2h0m.5-5.5h0m.5-.5h0m.5 5.5h0m0 .5h0m.5-3h0m0 3h0m.5-5h0m0 1h0m0 1h0m.5 1h0m.5 2h0m1-5h0m.5 1h0m0 2h0m.5 2h0m1-2.5h0m.5 .5h0m.5-2.5h0m0 4.5h0m1 0h0m.5-2.5h0m.5-1.5h0m0 1.5h0m0 2.5h0m1-3.5h0m0 3.5h0m.5-.5h0m.5-13h0m0 8.5h0m0 5h0m.5 0h0m.5-2h0m.5 2h0m.5-5.5h0m0 1.5h0m.5 2.5h0m0 1.5h0m1 0h0m.5-4.5h0m.5 1.5h0m0 3h0m1 0h0m.5-4h0m0 2h0m.5 2h0m1-.5h0m0 .5h0m.5-5.5h0m.5 2.5h0m0 3h0m1-3h0m.5 3h0m.5-5h0m0 3.5h0m.5 1.5h0m1 0h0m.5-3h0m.5 3h0m1-8h0m0 4h0m0 4h0m.5-1.5h0m0 1.5h0m1 0h0m.5-3h0m.5 3h0m1-4h0m0 3h0m0 1h0m1 0h0m1-2.5h0m0 2.5h0m.5-2.5h0m0 2.5h0m1 0h0m.5-4.5h0m0 4.5h0m.5-1.5h0m.5-2.5h0m0 4h0m.5-2h0m.5 2h0m.5-3.5h0m.5 3.5h0m.5-3h0m.5 3h0m.5-4.5h0m1 .5h0m0 2.5h0m0 1.5h0m.5-13h0m.5 8.5h0m0 2.5h0m0 2h0m1 0h0m.5-4.5h0m0 2h0m.5 2.5h0m.5-4h0m0 2h0m.5 2h0m.5 0h0m.5-1h0m.5-2.5h0m0 3.5h0m.5-3.5h0m.5 3.5h0m.5-3.5h0m.5 2h0m0 1.5h0m.5-3.5h0m.5 0h0m0 3.5h0m1-3h0m0 3h0m1-1.5h0m0 1.5h0m.5-3h0m.5 3h0m.5-5h0m.5 2h0m.5 2.5h0m.5-3h0m0 3.5h0m.5 0h0m.5-1h0m.5-2h0m0 3h0m.5-.5h0m.5-3h0m0 3.5h0m1-2.5h0m0 2.5h0m1-3.5h0m0 3h0m1.5-1h0m0 1.5h0m.5 0h0m.5-4h0m.5 4h0m1-4.5h0m0 2h0m0 2.5h0m1-2.5h0m0 2.5h0m.5 0h0m1-4h0m0 4h0m1-1.5h0m0 1.5h0m.5-3h0m0 3h0m.5-2.5h0m.5 2.5h0m.5-3.5h0m.5 3.5h0m1-1.5h0m0 1.5h0m1-2.5h0m.5 2.5h0m.5-4.5h0m0 2.5h0m0 2h0m1-4h0m0 4h0m1-1.5h0m0 1.5h0m1-2h0m.5-1.5h0m0 3.5h0m1-3.5h0m0 3.5h0m1 0h0m.5-4.5h0m0 2.5h0m0 2h0m.5-3.5h0m.5 3.5h0m.5-2h0m.5 2h0m.5 0h0m.5-6h0m0 2.5h0m.5 2h0m.5-3h0m.5 4.5h0m1-2.5h0m0 2.5h0m1-4h0m0 4h0m1-1h0m0 1h0m1-4.5h0m0 2h0m0 2.5h0m.5 0h0m1-3.5h0m0 1.5h0m0 2h0m1-4.5h0m0 4.5h0m1 0h0m.5-2.5h0m.5-2h0m0 4.5h0m.5 0h0m.5-2.5h0m1-2h0m0 3.5h0m1-2h0m.5 3h0m.5-5h0m.5 4h0m.5-4h0m0 4.5h0m1-2.5h0m.5-1.5h0m0 4h0m.5-4h0m.5 2h0m0 2h0m.5 0h0m.5-3.5h0m0 .5h0m1 3.5h0m.5-5h0m0 3.5h0m.5 1.5h0m.5-3h0m.5 1.5h0m.5-3.5h0m0 5h0m1-3.5h0m.5 3.5h0m.5-4.5h0m0 3h0m0 1.5h0m1 0h0m1-4h0m0 1h0m0 3h0m.5-4h0m.5 4h0m.5-4h0m0 2h0m1 .5h0m0 1.5h0m.5-4.5h0m0 4.5h0m1-2h0m0 2h0m.5-4.5h0m1 0h0m0 .5h0m0 4h0m.5-1.5h0m.5-3h0m0 4.5h0m.5 0h0m1-3h0m0 3h0m.5 0h0m.5-5h0m.5 2.5h0m.5-4.5h0m0 4.5h0m0 2.5h0m1-4.5h0m0 4.5h0m1.5-5.5h0m0 2h0m0 1.5h0m0 2h0m1 0h0m.5-4h0m.5 4h0m.5-2h0m.5-2.5h0m.5 4.5h0m.5-4h0m0 4h0m.5-2h0m.5 2h0m1-3.5h0m0 3.5h0m1-2h0m0 2h0m.5-4h0m.5-1h0m0 3h0m0 2h0m1 0h0m1-3h0m0 3h0m.5-5h0m0 1h0m.5 2h0m.5 2h0m.5-6.5h0m.5 3.5h0m0 .5h0m0 2.5h0m.5 0h0m.5-5h0m.5 1.5h0m.5 3.5h0m.5-5h0m0 3.5h0m1 .5h0m1-2.5h0m0 .5h0m.5-2.5h0m0 5h0m1 0h0m.5-5.5h0m0 2.5h0m.5 1h0m0 2.5h0m.5-5.5h0m.5-4h0m0 9h0m.5-2.5h0m.5 3h0m.5-5h0m.5 2.5h0m.5 1h0m1 1.5h0m.5-4h0m.5-2.5h0m0 4h0m0 2.5h0m1-4h0m.5 2h0m0 2h0m1-4.5h0m.5 2h0m0 2.5h0m1-6.5h0m0 3h0m0 3.5h0m1 0h0m.5-1.5h0m0 1.5h0m.5-5h0m0 2h0m.5-2h0m0 5h0m1 0h0m1-3.5h0m0 1.5h0m0 2h0m1-3.5h0m0 3.5h0m1-1.5h0m0 1.5h0m1 0h0m1-4h0m0 1h0m0 3h0m.5 0h0m.5-3.5h0m.5 1.5h0m0 2h0m1-4h0m0 4h0m1-3h0m0 3h0m.5-4.5h0m.5 4.5h0m.5-1.5h0m.5-2.5h0m0 4h0m.5 0h0m.5-4h0m.5 4h0m.5-4h0m0 2h0m.5-2h0m0 4h0m1-1.5h0m0 1.5h0m1-3.5h0m0 3.5h0m1-1.5h0m0 1.5h0m1-4h0m0 2.5h0m0 1.5h0m1 0h0m.5-4h0m0 4h0m.5-3h0m.5 3h0m.5 0h0m.5-3h0m0 1h0m.5 2h0m1.5-4h0m0 2h0m0 2h0m.5 0h0m.5-3.5h0m.5 3.5h0m.5-4.5h0m0 2.5h0m.5 2h0m1 0h0m.5-3h0m.5 0h0m0 3h0m1 0h0m1-4h0m0 2.5h0m0 1.5h0m.5-4h0m0 4h0m1 0h0m.5-3h0m.5-3h0m0 6h0m.5-3h0m.5 3h0m.5-3h0m.5 3h0m.5-3h0m0 1.5h0m0 1.5h0m1-3.5h0m0 3.5h0m1-3h0m0 3h0m1 0h0m.5-3.5h0m0 1.5h0m.5 2h0m.5 0h0m.5-5h0m0 3h0m.5 2h0m.5-4h0m.5-.5h0m0 4.5h0m.5-1.5h0m.5 1.5h0m.5-3h0m0 3h0m.5-6h0m.5 6h0m.5-1.5h0m.5-3h0m.5 4.5h0m.5-3h0m0 1h0m.5 2h0m1 0h0m.5-4.5h0m0 4.5h0m.5-2h0m.5 2h0m.5-4.5h0m.5-.5h0m0 3.5h0m0 1.5h0m.5 0h0m.5-3.5h0m.5 1.5h0m0 2h0m.5 0h0m.5-3h0m.5 3h0m.5-3.5h0m.5 2h0m0 1.5h0m.5-4h0m0 1.5h0m.5 2.5h0m1-3.5h0m0 3.5h0m1-3.5h0m0 1.5h0m0 2h0m1 0h0m.5-4.5h0m0 3h0m.5-3h0m0 4.5h0m.5-3.5h0m.5 3.5h0m1-3.5h0m0 3.5h0m.5-2h0m.5 2h0m1-3h0m0 3h0m.5 0h0m1-4.5h0m0 3h0m.5 1.5h0m.5 0h0m.5-7h0m0 5h0m.5-1.5h0m0 3.5h0m1-4h0m0 4h0m.5 0h0m.5-1.5h0m.5 1.5h0m.5-4h0m0 4h0m1-4h0m.5 1.5h0m0 2h0m.5-3.5h0m0 4h0m1-2h0m.5-2.5h0m.5 4.5h0m.5-4h0m0 2.5h0m0 1.5h0m1-4h0m.5 4h0m.5-1.5h0m.5 1.5h0m1-4h0m0 1h0m0 3h0m.5 0h0m1.5-5h0m0 3.5h0m0 1.5h0m.5-4h0m0 4h0m.5-7h0m.5 3h0m0 2h0m.5 1.5h0m.5-2.5h0m.5-2.5h0m.5 4.5h0m.5-3h0m.5-2h0m0 5h0m1-4h0m0 2h0m0 2.5h0m1-3h0m0 3.5h0m.5-2h0m1-3.5h0m0 3.5h0m1-2h0m0 3.5h0m.5-1.5h0m.5-2h0m0 4h0m.5-4h0m.5 4h0m.5-4h0m.5 4h0m.5-4h0m0 2h0m.5 2h0m.5 0h0m.5-2.5h0m1-2h0m0 4h0m0 .5h0m.5-3.5h0m0 3.5h0m1-1h0m0 1h0m.5-2.5h0m0 2.5h0m.5-4h0m1 2.5h0m0 1.5h0m1-3h0m.5 2.5h0m1-4h0m0 2.5h0m0 2h0m1.5 0h0m.5-6.5h0m0 1h0m0 2h0m0 3.5h0m.5-1.5h0m.5 1.5h0m.5-3.5h0m0 1.5h0m0 2h0m1-5.5h0m.5 5.5h0m.5-2.5h0m.5 2.5h0m.5-8.5h0m0 4h0m1 3h0m0 1.5h0m1-3.5h0m0 3.5h0m.5-2.5h0m.5 2.5h0m1-4.5h0m0 2h0m0 2.5h0m1 0h0m1-4.5h0m0 4.5h0m.5-5.5h0m0 2.5h0m0 1h0m0 2h0m1 0h0m.5-4.5h0m0 4.5h0m.5-2h0m.5-2.5h0m0 4.5h0m.5-2h0m0 2h0m.5-4h0m.5-2.5h0m1 3h0m0 1.5h0m0 2h0m1-5.5h0m.5 1.5h0m0 3.5h0m1-2h0m.5-4h0m0 5.5h0m0 1h0m1-4.5h0m0 1.5h0m1-2.5h0m0 5.5h0m.5-2.5h0m1-3h0m0 1.5h0m0 1h0m0 2h0m.5-4.5h0m1 5h0m.5-4.5h0m.5 2.5h0m.5-.5h0m0 1.5h0m1 0h0m.5-4h0m0 2h0m1-2h0m0 5.5h0m.5-3h0m.5 3h0m.5-5h0m0 5h0m.5-4h0m0 2.5h0m.5 1.5h0m1 0h0m.5-5h0m0 2.5h0m.5 2.5h0m1-3h0m0 1h0m1.5-2.5h0m0 2h0m0 2.5h0m.5-5h0m0 4h0m1-2.5h0m.5-1.5h0m0 5h0m1-2h0m.5 2h0m.5-4.5h0m.5 4.5h0m1-2.5h0m.5-2h0m.5 4.5h0m.5-1.5h0m.5 1.5h0m.5-3.5h0m.5 3.5h0m.5 0h0m.5-4.5h0m0 3h0m.5 1.5h0m.5-2h0m.5 .5h0m0 1.5h0m.5-4.5h0m.5 4.5h0m1-3.5h0m0 .5h0m0 3h0m1-1h0m0 1h0m.5-3.5h0m.5 3.5h0m1-2.5h0m0 2.5h0m1 0h0m.5-2.5h0m.5 2.5h0m.5-4.5h0m.5 2.5h0m0 2h0m1-3h0m0 3h0m.5 0h0m.5-3h0m.5 1.5h0m0 1.5h0m.5-5.5h0m0 5.5h0m1 0h0m.5-4h0m0 1h0m.5 3h0m.5-3.5h0m.5 3.5h0m.5-1.5h0m.5-2h0m0 3.5h0m1-4h0m0 4h0m.5-2h0m.5-2.5h0m0 4.5h0m1 0h0m.5-4h0m0 2h0m.5 2h0m1 0h0m.5-4h0m0 1.5h0m.5 2.5h0m1-3.5h0m0 2.5h0m0 1h0m.5-6h0m.5 2.5h0m0 3.5h0m.5 0h0m.5-1.5h0m.5-2h0m.5 3.5h0m.5-1h0m0 1h0m1-5h0m0 5h0m.5-3h0m.5-1.5h0m0 4.5h0m.5-2h0m.5-1.5h0m0 3.5h0m1 0h0m.5-4.5h0m0 2.5h0m1 2h0m.5-4h0m.5 1.5h0m0 2.5h0m1 0h0m.5-4.5h0m.5 2.5h0m0 2h0m.5 0h0m.5-4.5h0m.5 1.5h0m0 3h0m.5-4h0m0 4h0m.5-2h0m1-1.5h0m0 3.5h0m1-2h0m0 2h0m1-4h0m0 4h0m.5-2h0m0 2h0m1 0h0m.5-3.5h0m.5 3.5h0m.5-2.5h0m.5 2.5h0m1-1.5h0m0 1.5h0m.5 0h0m.5-3.5h0m0 .5h0m.5 3h0m.5-4h0m.5 3h0m0 1h0m.5-4h0m0 1h0m.5 3h0m.5-1h0m.5 1h0m1-10.5h0m0 6h0m0 1.5h0m0 1.5h0m0 1.5h0m1-4.5h0m0 4.5h0m.5 0h0m.5-3h0m.5 3h0m.5-2.5h0m.5 2.5h0m.5-2.5h0m.5 2.5h0m.5-.5h0m0 .5h0m.5-3.5h0m.5 0h0m0 3.5h0m1-2h0m0 2h0m.5-3.5h0m.5 3.5h0m1-3.5h0m0 3.5h0m.5-2.5h0m0 2.5h0m1-6.5h0m0 4h0m0 2.5h0m.5 0h0m1-4.5h0m0 2h0m0 2.5h0m1-5h0m0 5h0m1-2.5h0m0 2.5h0m1 0h0m.5-4h0m0 4h0m.5-2.5h0m.5-2.5h0m0 5h0m1-4.5h0m0 4.5h0m.5-5.5h0m0 4h0m1-1.5h0m0 3h0m.5-6h0m.5 1h0m0 5h0m.5-2h0m.5 2h0m1-6h0m0 2h0m0 4h0m.5-3.5h0m.5 3.5h0m.5-1.5h0m.5-3.5h0m.5 0h0m0 4.5h0m.5-2.5h0m.5 2.5h0m0 .5h0m1-3h0m.5-1.5h0m0 4.5h0m1-4.5h0m0 2h0m0 2.5h0m1-4.5h0m.5-.5h0m0 4.5h0m1-1.5h0m0 2h0m.5-4.5h0m0 1.5h0m0 3h0m1 0h0m1-5h0m0 1h0m0 4h0m.5-2h0m1 2h0m.5 0h0m.5-4h0m0 1h0m.5 3h0m.5-4h0m.5 4h0m.5-1.5h0m.5-2h0m.5 0h0m.5 .5h0m.5 3h0m.5 0h0m.5-4.5h0m0 2h0m.5 2.5h0m1-4.5h0m0 1.5h0m0 3h0m.5 0h0m1-4h0m.5 2.5h0m1-3h0m0 1.5h0m0 3h0m1-4.5h0m0 1h0m0 2h0m0 1.5h0m.5 0h0m1-4h0m0 4h0m1-3.5h0m0 1h0m0 2.5h0m1 0h0m.5 0h0m.5-4.5h0m.5 2.5h0m0 2h0m.5-5h0m0 4h0m0 1h0m1.5-3h0m0 3h0m.5 0h0m.5-2h0m.5 2h0m.5-4h0m1-.5h0m0 2.5h0m0 2h0m1-3h0m0 3h0m1-5.5h0m.5 1.5h0m0 2h0m1-.5h0m0 2.5h0m.5-5h0m.5-1.5h0m.5 3.5h0m0 2.5h0m1-4.5h0m0 4h0m0 1h0m.5 0h0m1-5.5h0m0 2.5h0m.5 .5h0m1-2.5h0m0 4.5h0m.5-2h0m1-3h0m0 5.5h0m.5-4h0m.5 2.5h0m1-2h0m0 3.5h0m.5-7h0m.5 3h0m0 1h0m0 1h0m.5 2h0m1-5.5h0m0 5.5h0m1-4.5h0m0 1h0m0 1.5h0m0 2h0m1-3h0m.5-1h0m0 2.5h0m0 1h0m0 .5h0m2-5.5h0m0 2h0m.5 1.5h0m.5-2h0m0 3.5h0m.5-6.5h0m.5 6h0m1-4h0m0 2.5h0m.5 2h0m1 0h0m.5-3h0m0 .5h0m.5-5h0m0 2.5h0m0 5.5h0m1-1h0m0 1h0m.5-4.5h0m1 .5h0m0 1.5h0m0 2.5h0m.5 0h0m.5-3.5h0m.5 3.5h0m.5 0h0m.5-4h0m0 2h0m.5 2h0m1-2.5h0m0 2.5h0m1-3.5h0m0 3.5h0m1-3h0m0 1h0m0 2h0m.5 0h0m1-3h0m0 3h0m1 0h0m.5-4.5h0m0 4.5h0m.5-2h0m.5 2h0m1-4h0m0 4h0m1.5-3.5h0m0 1.5h0m0 2h0m.5-3.5h0m.5 3.5h0m.5-3.5h0m0 1h0m.5-1h0m.5 3.5h0m.5 0h0m.5-3h0m0 1h0m.5-1h0m.5 3h0m1 0h0m.5-3h0m0 1h0m.5 2h0m1-4h0m0 1.5h0m0 2.5h0m.5-4h0m.5 4h0m.5-.5h0m.5 .5h0m.5-3h0m.5 3h0m1-3.5h0m0 3.5h0m.5-2h0m.5-2.5h0m0 4.5h0m1-3h0m0 3h0m1 0h0m.5 0h0m.5-4h0m0 2.5h0m.5 1.5h0m.5 0h0m.5-4h0m.5 1.5h0m.5 2.5h0m.5-4h0m0 4h0m.5-4h0m.5 1.5h0m0 2h0m.5-3.5h0m0 3h0m1 1h0m.5 0h0m1-5h0m0 2h0m0 1h0m0 2h0m1 0h0m.5-3h0m.5 3h0m.5-5h0m.5 5h0m.5-5h0m0 1h0m0 2.5h0m.5 1.5h0m.5 0h0m1-3.5h0m0 .5h0m0 3h0m.5 0h0m1-1h0m0 1h0m.5-4h0m0 3h0m0 1h0m1-3.5h0m0 3.5h0m1-1.5h0m0 1.5h0m.5-3.5h0m0 3.5h0m.5-1h0m.5 1h0m1-3h0m0 3h0m.5 0h0m.5-3.5h0m.5 3.5h0m.5-1.5h0m.5-12h0m0 13.5h0m.5-2.5h0m.5 2.5h0m.5-4h0m.5 1.5h0m0 2.5h0m.5 0h0m1-4.5h0m0 4.5h0m.5-1h0m.5 1h0m.5-3h0m.5 3h0m.5-1.5h0m0 1.5h0m.5-3h0m.5 3h0m.5-3.5h0m0 3.5h0m.5-3.5h0m.5 3.5h0m.5-1.5h0m.5-1h0m0 2.5h0m.5 0h0m.5-4.5h0m0 .5h0m.5 4h0m.5-1.5h0m.5 1.5h0m.5 0h0m.5-3.5h0m.5 3h0m0 .5h0m1 0h0m.5-3h0m0 1h0m.5-1h0m0 3h0m.5 0h0m.5-3h0m.5 1h0m0 2h0" stroke="#000" stroke-width="3.0" stroke-linecap="round" fill="none" clip-path="url(#c4)"/>
<path d="M179.5 955.9l1.8 3.2h-3.6zM195.8 955.9l1.8 3.2h-3.6zM300.2 955.9l1.8 3.2h-3.6zM347.4 955.9l1.8 3.2h-3.6zM378.2 955.9l1.8 3.2h-3.6zM390.2 955.9l1.8 3.2h-3.6zM432.2 955.9l1.8 3.2h-3.6zM477.4 955.9l1.8 3.2h-3.6zM574.2 955.9l1.8 3.2h-3.6zM580.2 955.9l1.8 3.2h-3.6zM656.2 955.9l1.8 3.2h-3.6zM673.5 955.9l1.8 3.2h-3.6zM676.5 955.9l1.8 3.2h-3.6zM747.4 955.9l1.8 3.2h-3.6zM772.2 955.9l1.8 3.2h-3.6zM777.4 955.9l1.8 3.2h-3.6zM801.4 955.9l1.8 3.2h-3.6zM816.5 955.9l1.8 3.2h-3.6zM818.5 955.9l1.8 3.2h-3.6zM832.2 955.9l1.8 3.2h-3.6zM845.4 955.9l1.8 3.2h-3.6zM854.2 955.9l1.8 3.2h-3.6zM944.2 955.9l1.8 3.2h-3.6zM1062.2 955.9l1.8 3.2h-3.6zM1110.2 955.9l1.8 3.2h-3.6zM1137.4 955.9l1.8 3.2h-3.6zM1153.0 955.9l1.8 3.2h-3.6zM1177.4 955.9l1.8 3.2h-3.6zM1234.2 955.9l1.8 3.2h-3.6zM1286.2 955.9l1.8 3.2h-3.6zM1303.0 955.9l1.8 3.2h-3.6zM679.0 955.9l1.8 3.2h-3.6zM681.0 955.9l1.8 3.2h-3.6z" fill="none" stroke="#ff0000" stroke-width="1.2" stroke-linejoin="round"/>
<circle cx="378.2" cy="992.4" r="1.5" fill="#ff0000"/>
<circle cx="676.2" cy="974.4" r="1.5" fill="#ff0000"/>
<circle cx="854.2" cy="989.6" r="1.5" fill="#ff0000"/>
<circle cx="1137.4" cy="991.6" r="1.5" fill="#ff0000"/>
<path d="M162.3 954.5V725.5" stroke="#800080" stroke-width="1.85" stroke-dasharray="1.85 3.67" stroke-dashoffset="-0.3"/>
<path d="M1303.0 954.5V725.5" stroke="#800080" stroke-width="1.85" stroke-dasharray="1.85 3.67" stroke-dashoffset="-0.3"/>
<path d="M162.3 1011.5V954.5" stroke="#800080" stroke-width="1.85" stroke-dasharray="1.85 3.67" stroke-dashoffset="-0.3"/>
<path d="M1303.0 1011.5V954.5" stroke="#800080" stroke-width="1.85" stroke-dasharray="1.85 3.67" stroke-dashoffset="-0.3"/>
<path d="M105.5 725.5V1011.5H1485.5V725.5H105.5M105.5 954.5H1485.5" fill="none" stroke="#000" stroke-width="1.1"/>
<path d="M105.5 758.5h-4.9M105.5 791.2h-4.9M105.5 823.6h-4.9M105.5 856.3h-4.9M105.5 889.1h-4.9M105.5 921.5h-4.9M105.5 1009.5h-4.9M105.5 983.5h-4.9M105.5 957.5h-4.9M105.5 996.5h-2.8M105.5 970.5h-2.8" stroke="#000" stroke-width="1.1"/>
<text x="16.87" y="763.50" font-size="14.72" textLength="78.84" lengthAdjust="spacingAndGlyphs">not Kalman</text>
<text x="32.41" y="796.20" font-size="14.72" textLength="62.26" lengthAdjust="spacingAndGlyphs">not track</text>
<text x="27.51" y="828.60" font-size="14.72" textLength="68.61" lengthAdjust="spacingAndGlyphs">Sat. pixel.</text>
<text x="38.43" y="861.30" font-size="14.72" textLength="57.70" lengthAdjust="spacingAndGlyphs">Ion. rad.</text>
<text x="52.14" y="894.10" font-size="14.72" textLength="43.25" lengthAdjust="spacingAndGlyphs">dr &gt; 5</text>
<text x="13.84" y="926.50" font-size="14.72" textLength="81.03" lengthAdjust="spacingAndGlyphs">OBS not OK</text>
<text x="86.41" y="1013.70" font-size="14.72" textLength="8.14" lengthAdjust="spacingAndGlyphs">0</text>
<text x="86.89" y="987.70" font-size="14.72" textLength="7.68" lengthAdjust="spacingAndGlyphs">5</text>
<text x="77.60" y="961.70" font-size="14.72" textLength="16.98" lengthAdjust="spacingAndGlyphs">10</text>
<text x="-7.59" y="0" font-size="14.72" textLength="14.74" lengthAdjust="spacingAndGlyphs" transform="translate(68.6 983.5) rotate(-90)">dr</text>
<path d="M162.5 1011.5v4.9M386.5 1011.5v4.9M610.5 1011.5v4.9M833.5 1011.5v4.9M1057.5 1011.5v4.9M1281.5 1011.5v4.9" stroke="#000" stroke-width="1.1"/>
<text x="158.42" y="1032.00" font-size="14.72" textLength="8.14" lengthAdjust="spacingAndGlyphs">0</text>
<text x="369.20" y="1032.00" font-size="14.72" textLength="34.58" lengthAdjust="spacingAndGlyphs">5000</text>
<text x="588.44" y="1032.00" font-size="14.72" textLength="43.53" lengthAdjust="spacingAndGlyphs">10000</text>
<text x="811.44" y="1032.00" font-size="14.72" textLength="43.53" lengthAdjust="spacingAndGlyphs">15000</text>
<text x="1035.59" y="1032.00" font-size="14.72" textLength="43.63" lengthAdjust="spacingAndGlyphs">20000</text>
<text x="1259.59" y="1032.00" font-size="14.72" textLength="43.63" lengthAdjust="spacingAndGlyphs">25000</text>
</svg></body></html>
